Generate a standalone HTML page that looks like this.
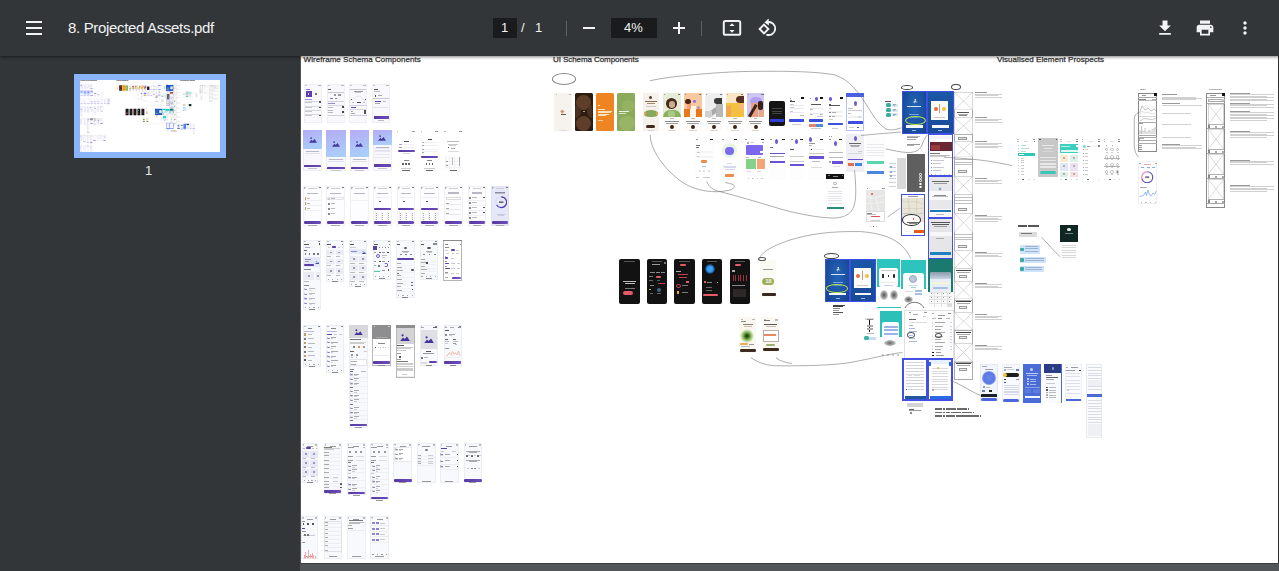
<!DOCTYPE html>
<html><head><meta charset="utf-8">
<style>
*{margin:0;padding:0;box-sizing:border-box}
html,body{width:1279px;height:571px;overflow:hidden;background:#323639;font-family:"Liberation Sans",sans-serif}
#tb{position:absolute;left:0;top:0;width:1279px;height:56px;background:#323639;box-shadow:0 1px 3px rgba(0,0,0,.5);z-index:10}
.ic{position:absolute}
#side{position:absolute;left:0;top:56px;width:301px;height:515px;background:#323639}
#main{position:absolute;left:300px;top:56px;width:979px;height:515px;background:#525659}
#page{position:absolute;left:301px;top:56px;width:977px;height:507px;background:#fff;overflow:hidden}
#page div,#thumb div,#page i,#thumb i{position:absolute;display:block}
.t{color:#f1f3f4;position:absolute;white-space:nowrap}
</style></head><body>
<div id="side">
  <div style="position:absolute;left:74px;top:18px;width:152px;height:84px;background:#8ab4f8"></div>
  <div style="position:absolute;left:80px;top:24px;width:140px;height:72px;background:#fff;overflow:hidden"><div id="thumb" style="position:absolute;left:0;top:0;width:977px;height:507px;transform:scale(0.1433,0.142);transform-origin:0 0;filter:saturate(1.25)"><div style="left:2.6px;top:0.2px;font-size:8px;line-height:1;color:#2e2e2e;white-space:nowrap;-webkit-text-stroke:0.25px #2e2e2e;letter-spacing:0.04px">Wireframe Schema Components</div>
<div style="left:252.0px;top:0.2px;font-size:8px;line-height:1;color:#2e2e2e;white-space:nowrap;-webkit-text-stroke:0.25px #2e2e2e;letter-spacing:-0.08px">UI Schema Components</div>
<div style="left:696.0px;top:0.2px;font-size:8px;line-height:1;color:#2e2e2e;white-space:nowrap;-webkit-text-stroke:0.25px #2e2e2e;letter-spacing:0.05px">Visualised Element Prospects</div>
<i style="left:2.9px;top:27.9px;width:18px;height:39px;background:#f9f9fd;border:0.35px solid #eeeef5"></i>
<i style="left:3.9px;top:29.1px;width:2px;height:0.5px;background:#c8c8d0"></i>
<i style="left:16.9px;top:29.1px;width:3px;height:0.5px;background:#b8b8c0"></i>
<i style="left:4.5px;top:32.8px;width:4.5px;height:0.7px;background:#8a70d0"></i>
<i style="left:4.5px;top:35px;width:6px;height:6px;background:#5b3fb0"></i>
<i style="left:6.8px;top:37px;width:1.4px;height:2px;background:#d8d0f0"></i>
<i style="left:13.5px;top:37px;width:2.5px;height:2px;background:#777"></i>
<i style="left:4px;top:42.5px;width:7px;height:0.6px;background:#a090e0"></i>
<i style="left:3.5px;top:44.5px;width:16.8px;height:0.5px;background:#d8d8e2"></i>
<i style="left:4px;top:45.9px;width:7px;height:0.5px;background:#c8c8d4"></i>
<i style="left:3.5px;top:50px;width:16.8px;height:0.5px;background:#d8d8e2"></i>
<i style="left:4px;top:51.4px;width:7px;height:0.5px;background:#c8c8d4"></i>
<i style="left:3.5px;top:54px;width:16.8px;height:0.5px;background:#d8d8e2"></i>
<i style="left:4px;top:55.4px;width:7px;height:0.5px;background:#c8c8d4"></i>
<i style="left:3.5px;top:57.5px;width:16.8px;height:0.5px;background:#d8d8e2"></i>
<i style="left:4px;top:58.9px;width:7px;height:0.5px;background:#c8c8d4"></i>
<i style="left:17.8px;top:45px;width:2px;height:1.8px;background:#555"></i>
<i style="left:17.8px;top:50.5px;width:2px;height:1.8px;background:#555"></i>
<i style="left:17.8px;top:58.5px;width:2px;height:1.8px;background:#555"></i>
<i style="left:25.6px;top:27.9px;width:18.1px;height:39px;background:#f9f9fd;border:0.35px solid #eeeef5"></i>
<i style="left:26.6px;top:29.1px;width:2px;height:0.5px;background:#c8c8d0"></i>
<i style="left:39.7px;top:29.1px;width:3px;height:0.5px;background:#b8b8c0"></i>
<i style="left:27px;top:33px;width:3px;height:0.6px;background:#666"></i>
<i style="left:26.5px;top:35.5px;width:16.5px;height:0.6px;background:#c8c8d4"></i>
<i style="left:32.5px;top:38px;width:2.5px;height:1.5px;background:#999"></i>
<i style="left:37px;top:38px;width:3px;height:1.5px;background:#999"></i>
<i style="left:29px;top:41.5px;width:3px;height:1.5px;background:#888"></i>
<i style="left:33.5px;top:41.5px;width:2.5px;height:1.5px;background:#888"></i>
<i style="left:26.5px;top:45px;width:16.5px;height:0.5px;background:#d0d0dc"></i>
<i style="left:27px;top:46.8px;width:7px;height:0.6px;background:#9a8ad8"></i>
<i style="left:26.5px;top:48.5px;width:16.5px;height:0.5px;background:#d8d8e2"></i>
<i style="left:27px;top:51px;width:5px;height:0.5px;background:#bbb"></i>
<i style="left:27px;top:53.5px;width:5px;height:0.5px;background:#bbb"></i>
<i style="left:27px;top:56px;width:5px;height:0.5px;background:#bbb"></i>
<i style="left:41px;top:49.5px;width:1.5px;height:2px;background:#444"></i>
<i style="left:41px;top:54.5px;width:1.5px;height:2px;background:#444"></i>
<i style="left:26.5px;top:58.8px;width:16.5px;height:0.5px;background:#d0d0dc"></i>
<i style="left:48px;top:27.9px;width:18px;height:39px;background:#f9f9fd;border:0.35px solid #eeeef5"></i>
<i style="left:49px;top:29.1px;width:2px;height:0.5px;background:#c8c8d0"></i>
<i style="left:62px;top:29.1px;width:3px;height:0.5px;background:#b8b8c0"></i>
<i style="left:49px;top:32.5px;width:16px;height:0.5px;background:#c8c8d4"></i>
<i style="left:52.5px;top:34.5px;width:9.5px;height:0.7px;background:#999"></i>
<i style="left:54px;top:36.2px;width:6px;height:0.5px;background:#c8c8d4"></i>
<svg style="position:absolute;left:49px;top:39px" width="16" height="6" viewBox="0 0 16 6"><path d="M0 5 Q3 5 5 3 T9 1 T13 4 T16 5" stroke="#c0c0d0" stroke-width="0.4" fill="none"/></svg>
<i style="left:49.5px;top:42.8px;width:1.5px;height:1.2px;background:#555"></i>
<i style="left:63.5px;top:42.8px;width:1.5px;height:1.2px;background:#555"></i>
<i style="left:50.5px;top:46px;width:2.5px;height:0.6px;background:#bbb"></i>
<i style="left:55.5px;top:45.8px;width:4.5px;height:1.2px;background:#4a3a90"></i>
<i style="left:61.5px;top:46px;width:2.5px;height:0.6px;background:#bbb"></i>
<i style="left:48.5px;top:49px;width:17px;height:0.5px;background:#d0d0dc"></i>
<i style="left:49.5px;top:51px;width:5.5px;height:0.7px;background:#5a4aa0"></i>
<i style="left:49px;top:52.5px;width:16.5px;height:0.5px;background:#d8d8e2"></i>
<i style="left:49.5px;top:54.8px;width:2.5px;height:0.6px;background:#aaa"></i>
<i style="left:63.3px;top:53.5px;width:1.7px;height:4px;background:#555"></i>
<i style="left:49.5px;top:56.8px;width:4.5px;height:0.6px;background:#aaa"></i>
<i style="left:48.5px;top:59px;width:17px;height:0.5px;background:#d0d0dc"></i>
<i style="left:71px;top:27.9px;width:17.6px;height:39px;background:#f9f9fd;border:0.35px solid #eeeef5"></i>
<i style="left:72px;top:29.1px;width:2px;height:0.5px;background:#c8c8d0"></i>
<i style="left:84.6px;top:29.1px;width:3px;height:0.5px;background:#b8b8c0"></i>
<i style="left:72.5px;top:32.8px;width:4.5px;height:0.6px;background:#555"></i>
<i style="left:72.5px;top:34.5px;width:6.5px;height:0.5px;background:#bbb"></i>
<i style="left:73.5px;top:39px;width:1.5px;height:1.5px;background:#555"></i>
<i style="left:76.5px;top:39.3px;width:4.5px;height:0.6px;background:#aaa"></i>
<i style="left:72px;top:42.3px;width:16px;height:0.5px;background:#c8c8d4"></i>
<i style="left:74px;top:44.5px;width:6px;height:1.3px;background:#5a40b0"></i>
<i style="left:82px;top:44.8px;width:3px;height:0.6px;background:#bbb"></i>
<i style="left:74px;top:47.3px;width:5px;height:0.5px;background:#aaa"></i>
<i style="left:72px;top:51px;width:16px;height:0.4px;background:#e0e0e8"></i>
<i style="left:72.5px;top:60.3px;width:15.5px;height:2.3px;background:linear-gradient(90deg,#56399f,#6a4cbc)"></i>
<i style="left:77px;top:63.8px;width:6px;height:0.5px;background:#bbb"></i>
<i style="left:2.3px;top:74px;width:18.3px;height:40.5px;background:#f9f9fd;border:0.35px solid #eeeef5"></i>
<i style="left:3.3px;top:75.2px;width:2px;height:0.5px;background:#c8c8d0"></i>
<i style="left:16.6px;top:75.2px;width:3px;height:0.5px;background:#b8b8c0"></i>
<div style="left:2.3px;top:74.30000000000001px;width:18.3px;height:18.6px;background:linear-gradient(165deg,#b5acf5,#a8d2fa)"></div>
<svg style="position:absolute;left:7.5px;top:81.1px" width="8" height="5.8" viewBox="0 0 10 7.2"><circle cx="2.6" cy="1.3" r="1.1" fill="#45389e"/><path d="M0 7.2 L3 3.4 L4.6 5 L7 2.4 L10 7.2Z" fill="#45389e"/></svg>
<i style="left:3.3px;top:108.7px;width:16.3px;height:2.3px;background:linear-gradient(90deg,#56399f,#6a4cbc);border-radius:0.6px"></i>
<i style="left:5.3px;top:94.9px;width:12.3px;height:0.8px;background:#b8b8c8"></i>
<i style="left:4.3px;top:97.4px;width:14.3px;height:0.6px;background:#e0e0ea"></i>
<i style="left:7.3px;top:112.1px;width:8.3px;height:0.5px;background:#c4c4cc"></i>
<i style="left:25.2px;top:74px;width:19.7px;height:40.5px;background:#f9f9fd;border:0.35px solid #eeeef5"></i>
<i style="left:26.2px;top:75.2px;width:2px;height:0.5px;background:#c8c8d0"></i>
<i style="left:40.9px;top:75.2px;width:3px;height:0.5px;background:#b8b8c0"></i>
<div style="left:25.2px;top:74.30000000000001px;width:19.7px;height:26.3px;background:linear-gradient(165deg,#b5acf5,#a8d2fa)"></div>
<svg style="position:absolute;left:31.0px;top:84.9px" width="8" height="5.8" viewBox="0 0 10 7.2"><circle cx="2.6" cy="1.3" r="1.1" fill="#45389e"/><path d="M0 7.2 L3 3.4 L4.6 5 L7 2.4 L10 7.2Z" fill="#45389e"/></svg>
<i style="left:26.2px;top:110.6px;width:17.7px;height:2.3px;background:linear-gradient(90deg,#56399f,#6a4cbc);border-radius:0.6px"></i>
<i style="left:28.2px;top:102.6px;width:13.7px;height:0.8px;background:#b8b8c8"></i>
<i style="left:27.2px;top:105.1px;width:15.7px;height:0.6px;background:#e0e0ea"></i>
<i style="left:30.2px;top:114px;width:9.7px;height:0.5px;background:#c4c4cc"></i>
<i style="left:49px;top:74px;width:18.8px;height:40.5px;background:#f9f9fd;border:0.35px solid #eeeef5"></i>
<i style="left:50px;top:75.2px;width:2px;height:0.5px;background:#c8c8d0"></i>
<i style="left:63.8px;top:75.2px;width:3px;height:0.5px;background:#b8b8c0"></i>
<div style="left:49.0px;top:74.30000000000001px;width:18.8px;height:26.3px;background:linear-gradient(165deg,#b5acf5,#a8d2fa)"></div>
<svg style="position:absolute;left:54.4px;top:84.9px" width="8" height="5.8" viewBox="0 0 10 7.2"><circle cx="2.6" cy="1.3" r="1.1" fill="#45389e"/><path d="M0 7.2 L3 3.4 L4.6 5 L7 2.4 L10 7.2Z" fill="#45389e"/></svg>
<i style="left:50px;top:110.6px;width:16.8px;height:2.3px;background:linear-gradient(90deg,#56399f,#6a4cbc);border-radius:0.6px"></i>
<i style="left:52px;top:102.6px;width:12.8px;height:0.8px;background:#b8b8c8"></i>
<i style="left:51px;top:105.1px;width:14.8px;height:0.6px;background:#e0e0ea"></i>
<i style="left:54px;top:114px;width:8.8px;height:0.5px;background:#c4c4cc"></i>
<i style="left:71.8px;top:74px;width:19.1px;height:40.5px;background:#f9f9fd;border:0.35px solid #eeeef5"></i>
<i style="left:72.8px;top:75.2px;width:2px;height:0.5px;background:#c8c8d0"></i>
<i style="left:86.9px;top:75.2px;width:3px;height:0.5px;background:#b8b8c0"></i>
<div style="left:71.8px;top:74.30000000000001px;width:19.1px;height:14.7px;background:linear-gradient(165deg,#b5acf5,#a8d2fa)"></div>
<svg style="position:absolute;left:77.4px;top:79.1px" width="8" height="5.8" viewBox="0 0 10 7.2"><circle cx="2.6" cy="1.3" r="1.1" fill="#45389e"/><path d="M0 7.2 L3 3.4 L4.6 5 L7 2.4 L10 7.2Z" fill="#45389e"/></svg>
<i style="left:72.8px;top:108.3px;width:17.1px;height:2.3px;background:linear-gradient(90deg,#56399f,#6a4cbc);border-radius:0.6px"></i>
<i style="left:74.8px;top:91px;width:13.1px;height:0.8px;background:#b8b8c8"></i>
<i style="left:73.8px;top:93.5px;width:15.1px;height:0.6px;background:#e0e0ea"></i>
<i style="left:76.8px;top:111.7px;width:9.1px;height:0.5px;background:#c4c4cc"></i>
<i style="left:73px;top:92px;width:16px;height:0.6px;background:#e8e8f0"></i>
<i style="left:73px;top:95px;width:16px;height:0.6px;background:#e8e8f0"></i>
<i style="left:73px;top:98px;width:16px;height:0.6px;background:#e8e8f0"></i>
<i style="left:73px;top:101px;width:16px;height:0.6px;background:#e8e8f0"></i>
<i style="left:95.8px;top:75px;width:1.5px;height:0.6px;background:#bbb"></i>
<i style="left:111.1px;top:75px;width:3px;height:0.6px;background:#999"></i>
<i style="left:101.3px;top:113.8px;width:7.3px;height:0.6px;background:#666"></i>
<i style="left:119.9px;top:75px;width:1.5px;height:0.6px;background:#bbb"></i>
<i style="left:134.2px;top:75px;width:3px;height:0.6px;background:#999"></i>
<i style="left:125.4px;top:113.8px;width:6.3px;height:0.6px;background:#666"></i>
<i style="left:143px;top:75px;width:1.5px;height:0.6px;background:#bbb"></i>
<i style="left:158.3px;top:75px;width:3px;height:0.6px;background:#999"></i>
<i style="left:148.5px;top:113.8px;width:7.3px;height:0.6px;background:#666"></i>
<i style="left:102.5px;top:84.8px;width:5px;height:1px;background:#555"></i>
<i style="left:97.5px;top:88px;width:15px;height:1.2px;background:#f0f0f8"></i>
<i style="left:97.5px;top:91px;width:15px;height:1.2px;background:#f0f0f8"></i>
<i style="left:97.5px;top:88.3px;width:3.5px;height:0.5px;background:#aaa"></i>
<i style="left:97.5px;top:91.3px;width:3.5px;height:0.5px;background:#aaa"></i>
<i style="left:96.9px;top:94.2px;width:17.1px;height:1.9px;background:linear-gradient(90deg,#56399f,#6a4cbc);border-radius:1px"></i>
<i style="left:102px;top:96.5px;width:7px;height:0.5px;background:#d8d0f0"></i>
<i style="left:102.5px;top:104.3px;width:5px;height:0.6px;background:#888"></i>
<i style="left:101.2px;top:106.8px;width:1.6px;height:1.8px;background:#666"></i>
<i style="left:104.2px;top:106.8px;width:1.6px;height:1.8px;background:#666"></i>
<i style="left:107.2px;top:106.8px;width:1.6px;height:1.8px;background:#666"></i>
<i style="left:100px;top:111.8px;width:10px;height:0.4px;background:#ccc"></i>
<i style="left:126.5px;top:82.5px;width:4px;height:1.3px;background:#444"></i>
<i style="left:120.5px;top:86px;width:16px;height:1.2px;background:#f0f0f8"></i>
<i style="left:120.8px;top:86.3px;width:2.7px;height:0.5px;background:#aaa"></i>
<i style="left:120.5px;top:89px;width:16px;height:1.2px;background:#f0f0f8"></i>
<i style="left:120.8px;top:89.3px;width:2.7px;height:0.5px;background:#aaa"></i>
<i style="left:120.5px;top:92.5px;width:16px;height:1.2px;background:#f0f0f8"></i>
<i style="left:120.8px;top:92.8px;width:2.7px;height:0.5px;background:#aaa"></i>
<i style="left:120.5px;top:95.3px;width:16px;height:1.2px;background:#f0f0f8"></i>
<i style="left:120.8px;top:95.6px;width:2.7px;height:0.5px;background:#aaa"></i>
<i style="left:120px;top:99.6px;width:17px;height:2.2px;background:linear-gradient(90deg,#56399f,#6a4cbc);border-radius:1px"></i>
<i style="left:126px;top:104.3px;width:5px;height:0.6px;background:#888"></i>
<i style="left:124.7px;top:107.3px;width:1.6px;height:1.8px;background:#666"></i>
<i style="left:127.7px;top:107.3px;width:1.6px;height:1.8px;background:#666"></i>
<i style="left:130.7px;top:107.3px;width:1.6px;height:1.8px;background:#666"></i>
<i style="left:123px;top:111.8px;width:11px;height:0.4px;background:#ccc"></i>
<i style="left:146.4px;top:84.8px;width:11.3px;height:1.7px;background:#bbb"></i>
<i style="left:146.5px;top:87.5px;width:10.5px;height:0.5px;background:#ccc"></i>
<i style="left:147.5px;top:89px;width:7.5px;height:0.5px;background:#ccc"></i>
<i style="left:146.5px;top:91.2px;width:1.5px;height:1.2px;background:#555"></i>
<i style="left:149.5px;top:91.5px;width:4.5px;height:0.5px;background:#aaa"></i>
<i style="left:146.5px;top:94.5px;width:11.5px;height:0.5px;background:#ddd"></i>
<i style="left:143.5px;top:100px;width:0.4px;height:13px;background:#eeeef2"></i>
<i style="left:148.3px;top:100px;width:0.4px;height:13px;background:#eeeef2"></i>
<i style="left:153.1px;top:100px;width:0.4px;height:13px;background:#eeeef2"></i>
<i style="left:157.9px;top:100px;width:0.4px;height:13px;background:#eeeef2"></i>
<i style="left:143.5px;top:102px;width:17.5px;height:0.3px;background:#f2f2f5"></i>
<i style="left:143.5px;top:105px;width:17.5px;height:0.3px;background:#f2f2f5"></i>
<i style="left:143.5px;top:108px;width:17.5px;height:0.3px;background:#f2f2f5"></i>
<i style="left:143.5px;top:111px;width:17.5px;height:0.3px;background:#f2f2f5"></i>
<i style="left:151.3px;top:100.5px;width:0.7px;height:8.5px;background:#bbb"></i>
<i style="left:158px;top:101px;width:0.7px;height:9px;background:#aaa"></i>
<i style="left:145px;top:104.5px;width:2px;height:0.5px;background:#999"></i>
<i style="left:145px;top:108.5px;width:2px;height:0.5px;background:#999"></i>
<i style="left:2.3px;top:129.5px;width:18.3px;height:40.5px;background:#fdfdff;border:0.35px solid #f0f0f6"></i>
<i style="left:3.3px;top:130.5px;width:1.5px;height:0.5px;background:#bbb"></i>
<i style="left:17.6px;top:130.5px;width:2px;height:0.5px;background:#777"></i>
<i style="left:3.3px;top:132.3px;width:0.8px;height:0.5px;background:#aaa"></i>
<i style="left:7.3px;top:132.3px;width:8.3px;height:0.5px;background:#ccc"></i>
<i style="left:3.3px;top:165.2px;width:16.3px;height:2.6px;background:linear-gradient(90deg,#56399f,#6a4cbc);border-radius:1.2px"></i>
<i style="left:7.3px;top:169px;width:8.3px;height:0.4px;background:#aaa"></i>
<i style="left:6.3px;top:137.2px;width:10.3px;height:1px;background:#b8b8c4"></i>
<i style="left:3.6px;top:141px;width:1.7px;height:2.5px;background:#b8a060"></i>
<i style="left:6.3px;top:142px;width:3px;height:0.6px;background:#bbb"></i>
<i style="left:3.3px;top:144.2px;width:16.3px;height:0.3px;background:#f0f0f4"></i>
<i style="left:3.6px;top:146px;width:1.7px;height:2.5px;background:#b8a060"></i>
<i style="left:6.3px;top:147px;width:3px;height:0.6px;background:#bbb"></i>
<i style="left:3.3px;top:149.2px;width:16.3px;height:0.3px;background:#f0f0f4"></i>
<i style="left:3.6px;top:151px;width:1.7px;height:2.5px;background:#b8a060"></i>
<i style="left:6.3px;top:152px;width:3px;height:0.6px;background:#bbb"></i>
<i style="left:3.3px;top:154.2px;width:16.3px;height:0.3px;background:#f0f0f4"></i>
<i style="left:25.2px;top:129.5px;width:19.1px;height:40.5px;background:#fdfdff;border:0.35px solid #f0f0f6"></i>
<i style="left:26.2px;top:130.5px;width:1.5px;height:0.5px;background:#bbb"></i>
<i style="left:41.3px;top:130.5px;width:2px;height:0.5px;background:#777"></i>
<i style="left:26.2px;top:132.3px;width:0.8px;height:0.5px;background:#aaa"></i>
<i style="left:30.2px;top:132.3px;width:9.1px;height:0.5px;background:#ccc"></i>
<i style="left:26.2px;top:165.2px;width:17.1px;height:2.6px;background:linear-gradient(90deg,#56399f,#6a4cbc);border-radius:1.2px"></i>
<i style="left:30.2px;top:169px;width:9.1px;height:0.4px;background:#aaa"></i>
<i style="left:29.2px;top:137.2px;width:11.1px;height:1px;background:#b8b8c4"></i>
<i style="left:26.2px;top:140.8px;width:17.1px;height:3px;background:#fff;border:0.3px solid #e4e4ea"></i>
<i style="left:26.7px;top:141.5px;width:2.5px;height:2px;background:#ccc"></i>
<i style="left:30.2px;top:142.2px;width:4px;height:0.6px;background:#bbb"></i>
<i style="left:26.7px;top:146.5px;width:2.5px;height:2px;background:#8a8a8a"></i>
<i style="left:30.2px;top:147.2px;width:4px;height:0.6px;background:#bbb"></i>
<i style="left:26.7px;top:151.5px;width:2.5px;height:2px;background:#8a8a8a"></i>
<i style="left:30.2px;top:152.2px;width:4px;height:0.6px;background:#bbb"></i>
<i style="left:26.7px;top:156.5px;width:2.5px;height:2px;background:#8a8a8a"></i>
<i style="left:30.2px;top:157.2px;width:4px;height:0.6px;background:#bbb"></i>
<i style="left:49px;top:129.5px;width:18.5px;height:40.5px;background:#fdfdff;border:0.35px solid #f0f0f6"></i>
<i style="left:50px;top:130.5px;width:1.5px;height:0.5px;background:#bbb"></i>
<i style="left:64.5px;top:130.5px;width:2px;height:0.5px;background:#777"></i>
<i style="left:50px;top:132.3px;width:0.8px;height:0.5px;background:#aaa"></i>
<i style="left:54px;top:132.3px;width:8.5px;height:0.5px;background:#ccc"></i>
<i style="left:50px;top:165.2px;width:16.5px;height:2.6px;background:linear-gradient(90deg,#56399f,#6a4cbc);border-radius:1.2px"></i>
<i style="left:54px;top:169px;width:8.5px;height:0.4px;background:#aaa"></i>
<i style="left:53px;top:137.2px;width:10.5px;height:1px;background:#b8b8c4"></i>
<i style="left:50px;top:143.5px;width:16.5px;height:0.7px;background:#eef2ee"></i>
<i style="left:72px;top:129.5px;width:18.5px;height:40.5px;background:#fdfdff;border:0.35px solid #f0f0f6"></i>
<i style="left:73px;top:130.5px;width:1.5px;height:0.5px;background:#bbb"></i>
<i style="left:87.5px;top:130.5px;width:2px;height:0.5px;background:#777"></i>
<i style="left:73px;top:132.3px;width:0.8px;height:0.5px;background:#aaa"></i>
<i style="left:77px;top:132.3px;width:8.5px;height:0.5px;background:#ccc"></i>
<i style="left:73px;top:165.2px;width:16.5px;height:2.6px;background:linear-gradient(90deg,#56399f,#6a4cbc);border-radius:1.2px"></i>
<i style="left:77px;top:169px;width:8.5px;height:0.4px;background:#aaa"></i>
<i style="left:76px;top:137.2px;width:10.5px;height:1px;background:#b8b8c4"></i>
<i style="left:74px;top:140.5px;width:14.5px;height:1px;background:#f0f0f6"></i>
<i style="left:77.5px;top:144.5px;width:2px;height:1px;background:#555"></i>
<i style="left:73px;top:151.7px;width:16.5px;height:2.3px;background:linear-gradient(90deg,#56399f,#6a4cbc);border-radius:1.2px"></i>
<i style="left:73.5px;top:155px;width:0.3px;height:9px;background:#f0f0f4"></i>
<i style="left:79.5px;top:155px;width:0.3px;height:9px;background:#f0f0f4"></i>
<i style="left:85.5px;top:155px;width:0.3px;height:9px;background:#f0f0f4"></i>
<i style="left:75px;top:156.5px;width:0.8px;height:0.9px;background:#a8a8b8"></i>
<i style="left:80.8px;top:156.5px;width:0.8px;height:0.9px;background:#a8a8b8"></i>
<i style="left:86.6px;top:156.5px;width:0.8px;height:0.9px;background:#a8a8b8"></i>
<i style="left:75px;top:158.6px;width:0.8px;height:0.9px;background:#a8a8b8"></i>
<i style="left:80.8px;top:158.6px;width:0.8px;height:0.9px;background:#a8a8b8"></i>
<i style="left:86.6px;top:158.6px;width:0.8px;height:0.9px;background:#a8a8b8"></i>
<i style="left:75px;top:160.7px;width:0.8px;height:0.9px;background:#a8a8b8"></i>
<i style="left:80.8px;top:160.7px;width:0.8px;height:0.9px;background:#a8a8b8"></i>
<i style="left:86.6px;top:160.7px;width:0.8px;height:0.9px;background:#a8a8b8"></i>
<i style="left:75px;top:162.8px;width:0.8px;height:0.9px;background:#a8a8b8"></i>
<i style="left:80.8px;top:162.8px;width:0.8px;height:0.9px;background:#a8a8b8"></i>
<i style="left:86.6px;top:162.8px;width:0.8px;height:0.9px;background:#a8a8b8"></i>
<i style="left:96px;top:129.5px;width:18.3px;height:40.5px;background:#fdfdff;border:0.35px solid #f0f0f6"></i>
<i style="left:97px;top:130.5px;width:1.5px;height:0.5px;background:#bbb"></i>
<i style="left:111.3px;top:130.5px;width:2px;height:0.5px;background:#777"></i>
<i style="left:97px;top:132.3px;width:0.8px;height:0.5px;background:#aaa"></i>
<i style="left:101px;top:132.3px;width:8.3px;height:0.5px;background:#ccc"></i>
<i style="left:97px;top:165.2px;width:16.3px;height:2.6px;background:linear-gradient(90deg,#56399f,#6a4cbc);border-radius:1.2px"></i>
<i style="left:101px;top:169px;width:8.3px;height:0.4px;background:#aaa"></i>
<i style="left:100px;top:137.2px;width:10.3px;height:1px;background:#b8b8c4"></i>
<i style="left:98px;top:140.5px;width:14.3px;height:1px;background:#f0f0f6"></i>
<i style="left:101.5px;top:144.5px;width:2px;height:1px;background:#555"></i>
<i style="left:97px;top:151.7px;width:16.3px;height:2.3px;background:linear-gradient(90deg,#56399f,#6a4cbc);border-radius:1.2px"></i>
<i style="left:97.5px;top:155px;width:0.3px;height:9px;background:#f0f0f4"></i>
<i style="left:103.5px;top:155px;width:0.3px;height:9px;background:#f0f0f4"></i>
<i style="left:109.5px;top:155px;width:0.3px;height:9px;background:#f0f0f4"></i>
<i style="left:99px;top:156.5px;width:0.8px;height:0.9px;background:#a8a8b8"></i>
<i style="left:104.8px;top:156.5px;width:0.8px;height:0.9px;background:#a8a8b8"></i>
<i style="left:110.6px;top:156.5px;width:0.8px;height:0.9px;background:#a8a8b8"></i>
<i style="left:99px;top:158.6px;width:0.8px;height:0.9px;background:#a8a8b8"></i>
<i style="left:104.8px;top:158.6px;width:0.8px;height:0.9px;background:#a8a8b8"></i>
<i style="left:110.6px;top:158.6px;width:0.8px;height:0.9px;background:#a8a8b8"></i>
<i style="left:99px;top:160.7px;width:0.8px;height:0.9px;background:#a8a8b8"></i>
<i style="left:104.8px;top:160.7px;width:0.8px;height:0.9px;background:#a8a8b8"></i>
<i style="left:110.6px;top:160.7px;width:0.8px;height:0.9px;background:#a8a8b8"></i>
<i style="left:99px;top:162.8px;width:0.8px;height:0.9px;background:#a8a8b8"></i>
<i style="left:104.8px;top:162.8px;width:0.8px;height:0.9px;background:#a8a8b8"></i>
<i style="left:110.6px;top:162.8px;width:0.8px;height:0.9px;background:#a8a8b8"></i>
<i style="left:119.4px;top:129.5px;width:18.4px;height:40.5px;background:#fdfdff;border:0.35px solid #f0f0f6"></i>
<i style="left:120.4px;top:130.5px;width:1.5px;height:0.5px;background:#bbb"></i>
<i style="left:134.8px;top:130.5px;width:2px;height:0.5px;background:#777"></i>
<i style="left:120.4px;top:132.3px;width:0.8px;height:0.5px;background:#aaa"></i>
<i style="left:124.4px;top:132.3px;width:8.4px;height:0.5px;background:#ccc"></i>
<i style="left:120.4px;top:165.2px;width:16.4px;height:2.6px;background:linear-gradient(90deg,#56399f,#6a4cbc);border-radius:1.2px"></i>
<i style="left:124.4px;top:169px;width:8.4px;height:0.4px;background:#aaa"></i>
<i style="left:123.4px;top:137.2px;width:10.4px;height:1px;background:#b8b8c4"></i>
<i style="left:121.4px;top:140.5px;width:14.4px;height:1px;background:#f0f0f6"></i>
<i style="left:124.9px;top:144.5px;width:2px;height:1px;background:#555"></i>
<i style="left:120.4px;top:151.7px;width:16.4px;height:2.3px;background:linear-gradient(90deg,#56399f,#6a4cbc);border-radius:1.2px"></i>
<i style="left:120.9px;top:155px;width:0.3px;height:9px;background:#f0f0f4"></i>
<i style="left:126.9px;top:155px;width:0.3px;height:9px;background:#f0f0f4"></i>
<i style="left:132.9px;top:155px;width:0.3px;height:9px;background:#f0f0f4"></i>
<i style="left:122.4px;top:156.5px;width:0.8px;height:0.9px;background:#a8a8b8"></i>
<i style="left:128.2px;top:156.5px;width:0.8px;height:0.9px;background:#a8a8b8"></i>
<i style="left:134px;top:156.5px;width:0.8px;height:0.9px;background:#a8a8b8"></i>
<i style="left:122.4px;top:158.6px;width:0.8px;height:0.9px;background:#a8a8b8"></i>
<i style="left:128.2px;top:158.6px;width:0.8px;height:0.9px;background:#a8a8b8"></i>
<i style="left:134px;top:158.6px;width:0.8px;height:0.9px;background:#a8a8b8"></i>
<i style="left:122.4px;top:160.7px;width:0.8px;height:0.9px;background:#a8a8b8"></i>
<i style="left:128.2px;top:160.7px;width:0.8px;height:0.9px;background:#a8a8b8"></i>
<i style="left:134px;top:160.7px;width:0.8px;height:0.9px;background:#a8a8b8"></i>
<i style="left:122.4px;top:162.8px;width:0.8px;height:0.9px;background:#a8a8b8"></i>
<i style="left:128.2px;top:162.8px;width:0.8px;height:0.9px;background:#a8a8b8"></i>
<i style="left:134px;top:162.8px;width:0.8px;height:0.9px;background:#a8a8b8"></i>
<i style="left:143px;top:129.5px;width:18.5px;height:40.5px;background:#fdfdff;border:0.35px solid #f0f0f6"></i>
<i style="left:144px;top:130.5px;width:1.5px;height:0.5px;background:#bbb"></i>
<i style="left:158.5px;top:130.5px;width:2px;height:0.5px;background:#777"></i>
<i style="left:144px;top:132.3px;width:0.8px;height:0.5px;background:#aaa"></i>
<i style="left:148px;top:132.3px;width:8.5px;height:0.5px;background:#ccc"></i>
<i style="left:144px;top:165.2px;width:16.5px;height:2.6px;background:linear-gradient(90deg,#56399f,#6a4cbc);border-radius:1.2px"></i>
<i style="left:148px;top:169px;width:8.5px;height:0.4px;background:#aaa"></i>
<i style="left:147px;top:137.2px;width:10.5px;height:1px;background:#b8b8c4"></i>
<i style="left:147px;top:135.8px;width:10.5px;height:0.8px;background:#b8b8c4"></i>
<i style="left:144.5px;top:141px;width:3.5px;height:0.6px;background:#aaa"></i>
<i style="left:144.5px;top:142.2px;width:15px;height:0.3px;background:#e8e8ee"></i>
<i style="left:144.5px;top:146.5px;width:3.5px;height:0.6px;background:#aaa"></i>
<i style="left:144.5px;top:147.7px;width:15px;height:0.3px;background:#e8e8ee"></i>
<i style="left:144.5px;top:151.5px;width:3.5px;height:0.6px;background:#aaa"></i>
<i style="left:144.5px;top:152.7px;width:15px;height:0.3px;background:#e8e8ee"></i>
<i style="left:144.5px;top:156.5px;width:3.5px;height:0.6px;background:#aaa"></i>
<i style="left:144.5px;top:157.7px;width:15px;height:0.3px;background:#e8e8ee"></i>
<i style="left:144.5px;top:140.5px;width:15px;height:3px;background:#fff;border:0.3px solid #ddd"></i>
<i style="left:166.5px;top:129.5px;width:18.5px;height:40.5px;background:#fdfdff;border:0.35px solid #f0f0f6"></i>
<i style="left:167.5px;top:130.5px;width:1.5px;height:0.5px;background:#bbb"></i>
<i style="left:182px;top:130.5px;width:2px;height:0.5px;background:#777"></i>
<i style="left:167.5px;top:132.3px;width:0.8px;height:0.5px;background:#aaa"></i>
<i style="left:171.5px;top:132.3px;width:8.5px;height:0.5px;background:#ccc"></i>
<i style="left:167.5px;top:165.2px;width:16.5px;height:2.6px;background:linear-gradient(90deg,#56399f,#6a4cbc);border-radius:1.2px"></i>
<i style="left:171.5px;top:169px;width:8.5px;height:0.4px;background:#aaa"></i>
<i style="left:170.5px;top:137.2px;width:10.5px;height:1px;background:#b8b8c4"></i>
<i style="left:170.5px;top:135.8px;width:10.5px;height:0.8px;background:#b8b8c4"></i>
<i style="left:168px;top:140.5px;width:2px;height:2.5px;background:#8a8a8a"></i>
<i style="left:171px;top:141.3px;width:4.5px;height:0.5px;background:#bbb"></i>
<i style="left:182px;top:141.1px;width:1.5px;height:1px;background:#555"></i>
<i style="left:167.5px;top:143.8px;width:16.5px;height:0.3px;background:#f0f0f4"></i>
<i style="left:168px;top:145.5px;width:2px;height:2.5px;background:#8a8a8a"></i>
<i style="left:171px;top:146.3px;width:4.5px;height:0.5px;background:#bbb"></i>
<i style="left:167.5px;top:148.8px;width:16.5px;height:0.3px;background:#f0f0f4"></i>
<i style="left:168px;top:150.5px;width:2px;height:2.5px;background:#8a8a8a"></i>
<i style="left:171px;top:151.3px;width:4.5px;height:0.5px;background:#bbb"></i>
<i style="left:182px;top:151.1px;width:1.5px;height:1px;background:#555"></i>
<i style="left:167.5px;top:153.8px;width:16.5px;height:0.3px;background:#f0f0f4"></i>
<i style="left:168px;top:155.5px;width:2px;height:2.5px;background:#8a8a8a"></i>
<i style="left:171px;top:156.3px;width:4.5px;height:0.5px;background:#bbb"></i>
<i style="left:182px;top:156.1px;width:1.5px;height:1px;background:#555"></i>
<i style="left:167.5px;top:158.8px;width:16.5px;height:0.3px;background:#f0f0f4"></i>
<i style="left:168px;top:160.5px;width:2px;height:2.5px;background:#8a8a8a"></i>
<i style="left:171px;top:161.3px;width:4.5px;height:0.5px;background:#bbb"></i>
<i style="left:167.5px;top:163.8px;width:16.5px;height:0.3px;background:#f0f0f4"></i>
<i style="left:190px;top:129.5px;width:18px;height:40.5px;background:#e6e8fa;border:0.35px solid #e0e2f4"></i>
<i style="left:191px;top:130.5px;width:1.5px;height:0.5px;background:#bbb"></i>
<i style="left:205px;top:130.5px;width:2px;height:0.5px;background:#777"></i>
<i style="left:191px;top:132.3px;width:0.8px;height:0.5px;background:#aaa"></i>
<i style="left:195px;top:132.3px;width:8px;height:0.5px;background:#ccc"></i>
<i style="left:191px;top:165.2px;width:16px;height:2.6px;background:linear-gradient(90deg,#56399f,#6a4cbc);border-radius:1.2px"></i>
<i style="left:195px;top:169px;width:8px;height:0.4px;background:#aaa"></i>
<i style="left:194px;top:137.2px;width:10px;height:1px;background:#b8b8c4"></i>
<i style="left:194px;top:135.8px;width:10px;height:0.8px;background:#8a8aa8"></i>
<i style="left:195.5px;top:157.5px;width:8.5px;height:0.5px;background:#c8c8e0"></i>
<i style="left:196.5px;top:159px;width:6.5px;height:0.5px;background:#c8c8e0"></i>
<svg style="position:absolute;left:193.5px;top:140.3px" width="12.4" height="12.4" viewBox="0 0 12.4 12.4"><circle cx="6.2" cy="6.2" r="5.4" fill="none" stroke="#d8dcf4" stroke-width="1.2"/><path d="M6.2 0.8 A5.4 5.4 0 1 1 1.6 9" fill="none" stroke="#4a3aa8" stroke-width="1.2"/><rect x="4" y="5.4" width="4.4" height="1.6" fill="#666"/></svg>
<i style="left:2px;top:184px;width:17.8px;height:70px;background:#f8f9fd;border:0.35px solid #eceef5"></i>
<i style="left:3px;top:185px;width:1.5px;height:0.5px;background:#bbb"></i>
<i style="left:16.8px;top:185px;width:2px;height:0.5px;background:#888"></i>
<i style="left:3px;top:187.5px;width:5px;height:0.9px;background:#555"></i>
<i style="left:17.5px;top:187.3px;width:1px;height:1.3px;background:#555"></i>
<i style="left:3px;top:190.5px;width:12px;height:1px;background:#f0f0f8"></i>
<i style="left:3.5px;top:190.8px;width:5.5px;height:0.4px;background:#a8a8c8"></i>
<i style="left:3px;top:194px;width:3px;height:0.6px;background:#666"></i>
<i style="left:3.5px;top:196.5px;width:1.5px;height:2px;background:#777"></i>
<i style="left:7.8px;top:196.5px;width:1.5px;height:2px;background:#777"></i>
<i style="left:12.1px;top:196.5px;width:1.5px;height:2px;background:#777"></i>
<i style="left:16.4px;top:196.5px;width:1.5px;height:2px;background:#777"></i>
<i style="left:2.5px;top:201.2px;width:16.5px;height:9.5px;background:#e4e8f8"></i>
<i style="left:3.5px;top:203px;width:6.5px;height:0.8px;background:#8a8ab8"></i>
<i style="left:3.5px;top:205px;width:4.5px;height:0.5px;background:#aab"></i>
<i style="left:3px;top:208px;width:9.5px;height:2px;background:#5a3ea8;border-radius:1px"></i>
<svg style="position:absolute;left:13.8px;top:204.9px" width="4.5" height="3.2" viewBox="0 0 10 7.2"><circle cx="2.6" cy="1.3" r="1.1" fill="#3a4aa8"/><path d="M0 7.2 L3 3.4 L4.6 5 L7 2.4 L10 7.2Z" fill="#3a4aa8"/></svg>
<i style="left:3px;top:212.5px;width:7px;height:0.7px;background:#888"></i>
<i style="left:2.5px;top:216.2px;width:10.5px;height:7.5px;background:#ebebf3;border-radius:0.5px"></i>
<i style="left:6.75px;top:219.15px;width:2px;height:1.6px;background:#9a9ab0"></i>
<i style="left:14.5px;top:216.2px;width:5px;height:7.5px;background:#ebebf3;border-radius:0.5px"></i>
<i style="left:16px;top:219.15px;width:2px;height:1.6px;background:#9a9ab0"></i>
<i style="left:3px;top:225px;width:5px;height:0.6px;background:#bbb"></i>
<i style="left:3px;top:229px;width:5px;height:0.6px;background:#888"></i>
<svg style="position:absolute;left:3.4px;top:231.8px" width="3.2" height="2.3" viewBox="0 0 10 7.2"><circle cx="2.6" cy="1.3" r="1.1" fill="#5a5ab0"/><path d="M0 7.2 L3 3.4 L4.6 5 L7 2.4 L10 7.2Z" fill="#5a5ab0"/></svg>
<i style="left:7.5px;top:232.4px;width:6.5px;height:0.5px;background:#bbb"></i>
<i style="left:7.5px;top:233.6px;width:3.5px;height:0.4px;background:#ddd"></i>
<svg style="position:absolute;left:3.4px;top:236.6px" width="3.2" height="2.3" viewBox="0 0 10 7.2"><circle cx="2.6" cy="1.3" r="1.1" fill="#5a5ab0"/><path d="M0 7.2 L3 3.4 L4.6 5 L7 2.4 L10 7.2Z" fill="#5a5ab0"/></svg>
<i style="left:7.5px;top:237.2px;width:6.5px;height:0.5px;background:#bbb"></i>
<i style="left:7.5px;top:238.4px;width:3.5px;height:0.4px;background:#ddd"></i>
<svg style="position:absolute;left:3.4px;top:241.4px" width="3.2" height="2.3" viewBox="0 0 10 7.2"><circle cx="2.6" cy="1.3" r="1.1" fill="#5a5ab0"/><path d="M0 7.2 L3 3.4 L4.6 5 L7 2.4 L10 7.2Z" fill="#5a5ab0"/></svg>
<i style="left:7.5px;top:242px;width:6.5px;height:0.5px;background:#bbb"></i>
<i style="left:7.5px;top:243.2px;width:3.5px;height:0.4px;background:#ddd"></i>
<svg style="position:absolute;left:3.4px;top:246.2px" width="3.2" height="2.3" viewBox="0 0 10 7.2"><circle cx="2.6" cy="1.3" r="1.1" fill="#5a5ab0"/><path d="M0 7.2 L3 3.4 L4.6 5 L7 2.4 L10 7.2Z" fill="#5a5ab0"/></svg>
<i style="left:7.5px;top:246.8px;width:6.5px;height:0.5px;background:#bbb"></i>
<i style="left:7.5px;top:248px;width:3.5px;height:0.4px;background:#ddd"></i>
<i style="left:3.9px;top:250.5px;width:1.2px;height:1.2px;background:#aaa"></i>
<i style="left:8.17px;top:250.5px;width:1.2px;height:1.2px;background:#aaa"></i>
<i style="left:12.43px;top:250.5px;width:1.2px;height:1.2px;background:#aaa"></i>
<i style="left:16.7px;top:250.5px;width:1.2px;height:1.2px;background:#aaa"></i>
<i style="left:7.9px;top:252.7px;width:6px;height:0.4px;background:#888"></i>
<i style="left:25px;top:184px;width:18px;height:42px;background:#f8f9fd;border:0.35px solid #eceef5"></i>
<i style="left:26px;top:185px;width:1.5px;height:0.5px;background:#bbb"></i>
<i style="left:40px;top:185px;width:2px;height:0.5px;background:#888"></i>
<i style="left:26px;top:187.5px;width:4px;height:0.9px;background:#555"></i>
<i style="left:41px;top:187.5px;width:1px;height:1px;background:#888"></i>
<i style="left:26.5px;top:190.5px;width:2.5px;height:0.8px;background:#ccc"></i>
<i style="left:31px;top:190.3px;width:4px;height:1.5px;background:#5a3ea8;border-radius:0.8px"></i>
<i style="left:37px;top:190.5px;width:2px;height:0.8px;background:#ccc"></i>
<i style="left:40.5px;top:190.5px;width:1.5px;height:0.8px;background:#ccc"></i>
<i style="left:25.8px;top:193.7px;width:7.7px;height:5.4px;background:#ebebf3;border-radius:0.5px"></i>
<i style="left:28.65px;top:195.6px;width:2px;height:1.6px;background:#9a9ab0"></i>
<i style="left:34.5px;top:193.7px;width:7.7px;height:5.4px;background:#ebebf3;border-radius:0.5px"></i>
<i style="left:37.35px;top:195.6px;width:2px;height:1.6px;background:#9a9ab0"></i>
<i style="left:26px;top:199.9px;width:4px;height:0.5px;background:#bbb"></i>
<i style="left:35px;top:199.9px;width:4px;height:0.5px;background:#bbb"></i>
<i style="left:25.8px;top:203px;width:7.7px;height:5.4px;background:#ebebf3;border-radius:0.5px"></i>
<i style="left:28.65px;top:204.9px;width:2px;height:1.6px;background:#9a9ab0"></i>
<i style="left:34.5px;top:203px;width:7.7px;height:5.4px;background:#ebebf3;border-radius:0.5px"></i>
<i style="left:37.35px;top:204.9px;width:2px;height:1.6px;background:#9a9ab0"></i>
<i style="left:26px;top:209.2px;width:4px;height:0.5px;background:#bbb"></i>
<i style="left:35px;top:209.2px;width:4px;height:0.5px;background:#bbb"></i>
<i style="left:25.8px;top:212.3px;width:7.7px;height:5.4px;background:#ebebf3;border-radius:0.5px"></i>
<i style="left:28.65px;top:214.2px;width:2px;height:1.6px;background:#9a9ab0"></i>
<i style="left:34.5px;top:212.3px;width:7.7px;height:5.4px;background:#ebebf3;border-radius:0.5px"></i>
<i style="left:37.35px;top:214.2px;width:2px;height:1.6px;background:#9a9ab0"></i>
<i style="left:26px;top:218.5px;width:4px;height:0.5px;background:#bbb"></i>
<i style="left:35px;top:218.5px;width:4px;height:0.5px;background:#bbb"></i>
<i style="left:26.9px;top:222.5px;width:1.2px;height:1.2px;background:#aaa"></i>
<i style="left:31.23px;top:222.5px;width:1.2px;height:1.2px;background:#aaa"></i>
<i style="left:35.57px;top:222.5px;width:1.2px;height:1.2px;background:#aaa"></i>
<i style="left:39.9px;top:222.5px;width:1.2px;height:1.2px;background:#aaa"></i>
<i style="left:31px;top:224.7px;width:6px;height:0.4px;background:#888"></i>
<i style="left:48px;top:184px;width:18.4px;height:46.8px;background:#f8f9fd;border:0.35px solid #eceef5"></i>
<i style="left:49px;top:185px;width:1.5px;height:0.5px;background:#bbb"></i>
<i style="left:63.4px;top:185px;width:2px;height:0.5px;background:#888"></i>
<i style="left:49px;top:187.5px;width:4px;height:0.9px;background:#555"></i>
<i style="left:49px;top:190.5px;width:6px;height:0.5px;background:#ccc"></i>
<i style="left:48.8px;top:193px;width:16.7px;height:5.4px;background:#e4e8f8"></i>
<i style="left:50px;top:194.5px;width:6px;height:0.7px;background:#8a8ab8"></i>
<svg style="position:absolute;left:60.5px;top:194.8px" width="4" height="2.9" viewBox="0 0 10 7.2"><circle cx="2.6" cy="1.3" r="1.1" fill="#3a4aa8"/><path d="M0 7.2 L3 3.4 L4.6 5 L7 2.4 L10 7.2Z" fill="#3a4aa8"/></svg>
<i style="left:49px;top:200px;width:7.5px;height:6.2px;background:#ebebf3;border-radius:0.5px"></i>
<i style="left:51.75px;top:202.3px;width:2px;height:1.6px;background:#9a9ab0"></i>
<i style="left:58px;top:200px;width:7.5px;height:6.2px;background:#ebebf3;border-radius:0.5px"></i>
<i style="left:60.75px;top:202.3px;width:2px;height:1.6px;background:#9a9ab0"></i>
<i style="left:49px;top:207px;width:5px;height:0.5px;background:#bbb"></i>
<i style="left:58px;top:207px;width:5px;height:0.5px;background:#bbb"></i>
<i style="left:49px;top:209px;width:7.5px;height:6.2px;background:#ebebf3;border-radius:0.5px"></i>
<i style="left:51.75px;top:211.3px;width:2px;height:1.6px;background:#9a9ab0"></i>
<i style="left:58px;top:209px;width:7.5px;height:6.2px;background:#ebebf3;border-radius:0.5px"></i>
<i style="left:60.75px;top:211.3px;width:2px;height:1.6px;background:#9a9ab0"></i>
<i style="left:49px;top:216px;width:5px;height:0.5px;background:#bbb"></i>
<i style="left:58px;top:216px;width:5px;height:0.5px;background:#bbb"></i>
<i style="left:49px;top:218px;width:7.5px;height:6.2px;background:#ebebf3;border-radius:0.5px"></i>
<i style="left:51.75px;top:220.3px;width:2px;height:1.6px;background:#9a9ab0"></i>
<i style="left:58px;top:218px;width:7.5px;height:6.2px;background:#ebebf3;border-radius:0.5px"></i>
<i style="left:60.75px;top:220.3px;width:2px;height:1.6px;background:#9a9ab0"></i>
<i style="left:49px;top:225px;width:5px;height:0.5px;background:#bbb"></i>
<i style="left:58px;top:225px;width:5px;height:0.5px;background:#bbb"></i>
<i style="left:49.9px;top:227.5px;width:1.2px;height:1.2px;background:#aaa"></i>
<i style="left:54.37px;top:227.5px;width:1.2px;height:1.2px;background:#aaa"></i>
<i style="left:58.83px;top:227.5px;width:1.2px;height:1.2px;background:#aaa"></i>
<i style="left:63.3px;top:227.5px;width:1.2px;height:1.2px;background:#aaa"></i>
<i style="left:54.2px;top:229.7px;width:6px;height:0.4px;background:#888"></i>
<i style="left:71.8px;top:184px;width:17.8px;height:40px;background:#f8f9fd;border:0.35px solid #eceef5"></i>
<i style="left:72.8px;top:185px;width:1.5px;height:0.5px;background:#bbb"></i>
<i style="left:86.6px;top:185px;width:2px;height:0.5px;background:#888"></i>
<i style="left:72.5px;top:187.5px;width:4px;height:0.9px;background:#555"></i>
<i style="left:87.5px;top:187.5px;width:1.5px;height:0.9px;background:#888"></i>
<i style="left:72px;top:190.1px;width:3.6px;height:3.6px;background:#5a3ea8"></i>
<i style="left:77.5px;top:191.3px;width:1px;height:1.2px;background:#888"></i>
<i style="left:80.7px;top:191.3px;width:1px;height:1.2px;background:#888"></i>
<i style="left:83.9px;top:191.3px;width:1px;height:1.2px;background:#888"></i>
<i style="left:87.1px;top:191.3px;width:1px;height:1.2px;background:#888"></i>
<i style="left:72.5px;top:195.8px;width:2.5px;height:0.6px;background:#999"></i>
<i style="left:78px;top:195.5px;width:1.5px;height:1.5px;background:#555"></i>
<i style="left:81px;top:195.8px;width:3px;height:0.6px;background:#999"></i>
<i style="left:86px;top:195.5px;width:2px;height:1.5px;background:#444"></i>
<div style="left:74.5px;top:198px;width:4px;height:4px;border-radius:50%;border:0.5px solid #6a5ab8"></div>
<i style="left:81px;top:199px;width:5px;height:0.5px;background:#bbb"></i>
<i style="left:81px;top:201px;width:3px;height:0.5px;background:#ccc"></i>
<i style="left:72.5px;top:205px;width:2.5px;height:0.5px;background:#999"></i>
<i style="left:78px;top:204.8px;width:1.5px;height:1.2px;background:#555"></i>
<i style="left:81px;top:205px;width:3px;height:0.5px;background:#999"></i>
<i style="left:86.5px;top:204.8px;width:1.5px;height:1.2px;background:#555"></i>
<i style="left:73px;top:209px;width:2px;height:0.5px;background:#aaa"></i>
<i style="left:77px;top:209px;width:2px;height:2px;background:#777"></i>
<div style="left:83px;top:207px;width:3.5px;height:3.5px;border-radius:50%;border:0.5px solid #6a5ab8;border-left-color:transparent"></div>
<i style="left:72.5px;top:213.5px;width:7px;height:1.5px;background:#d8f4ec"></i>
<i style="left:73px;top:214.5px;width:6px;height:0.4px;background:#60c8a8"></i>
<i style="left:81px;top:214px;width:3px;height:0.5px;background:#999"></i>
<i style="left:86.5px;top:213px;width:1.5px;height:1.5px;background:#8a5050"></i>
<i style="left:73.7px;top:219.5px;width:1.2px;height:1.2px;background:#aaa"></i>
<i style="left:77.97px;top:219.5px;width:1.2px;height:1.2px;background:#aaa"></i>
<i style="left:82.23px;top:219.5px;width:1.2px;height:1.2px;background:#aaa"></i>
<i style="left:86.5px;top:219.5px;width:1.2px;height:1.2px;background:#aaa"></i>
<i style="left:77.7px;top:221.7px;width:6px;height:0.4px;background:#888"></i>
<i style="left:95px;top:184px;width:18.6px;height:58.4px;background:#f8f9fd;border:0.35px solid #eceef5"></i>
<i style="left:96px;top:185px;width:1.5px;height:0.5px;background:#bbb"></i>
<i style="left:110.6px;top:185px;width:2px;height:0.5px;background:#888"></i>
<i style="left:96px;top:187.5px;width:3px;height:0.9px;background:#555"></i>
<i style="left:102.5px;top:190.5px;width:3.5px;height:2.5px;background:#555;border-radius:50%"></i>
<i style="left:101px;top:194.5px;width:6.5px;height:0.5px;background:#aaa"></i>
<i style="left:102px;top:195.8px;width:4.5px;height:0.4px;background:#ccc"></i>
<i style="left:99px;top:197.5px;width:1.8px;height:1.7px;background:#888"></i>
<i style="left:104px;top:197.5px;width:1.8px;height:1.7px;background:#888"></i>
<i style="left:109px;top:197.5px;width:1.8px;height:1.7px;background:#888"></i>
<i style="left:95.8px;top:201.7px;width:17px;height:2.1px;background:#5a3ea8;border-radius:1px"></i>
<i style="left:96px;top:207px;width:4px;height:0.5px;background:#aaa"></i>
<i style="left:95.5px;top:208.8px;width:17.5px;height:0.3px;background:#f2f2f6"></i>
<i style="left:96px;top:210.5px;width:5px;height:0.5px;background:#aaa"></i>
<i style="left:95.5px;top:212.3px;width:17.5px;height:0.3px;background:#f2f2f6"></i>
<i style="left:96px;top:214px;width:6px;height:0.5px;background:#aaa"></i>
<i style="left:95.5px;top:215.8px;width:17.5px;height:0.3px;background:#f2f2f6"></i>
<i style="left:96px;top:219px;width:4px;height:0.5px;background:#aaa"></i>
<i style="left:95.5px;top:220.8px;width:17.5px;height:0.3px;background:#f2f2f6"></i>
<i style="left:96px;top:223px;width:5px;height:0.5px;background:#aaa"></i>
<i style="left:95.5px;top:224.8px;width:17.5px;height:0.3px;background:#f2f2f6"></i>
<i style="left:96px;top:226.5px;width:6px;height:0.5px;background:#aaa"></i>
<i style="left:95.5px;top:228.3px;width:17.5px;height:0.3px;background:#f2f2f6"></i>
<i style="left:96px;top:230px;width:4px;height:0.5px;background:#aaa"></i>
<i style="left:95.5px;top:231.8px;width:17.5px;height:0.3px;background:#f2f2f6"></i>
<i style="left:96px;top:233.5px;width:5px;height:0.5px;background:#aaa"></i>
<i style="left:95.5px;top:235.3px;width:17.5px;height:0.3px;background:#f2f2f6"></i>
<i style="left:110px;top:212.5px;width:2.5px;height:2.5px;background:#555;border-radius:50%"></i>
<i style="left:95.6px;top:217px;width:2.4px;height:0.6px;background:#777"></i>
<i style="left:110px;top:225.5px;width:2.3px;height:1.8px;background:#5a3ea8;border-radius:0.8px"></i>
<i style="left:110px;top:228.5px;width:2.3px;height:1.8px;background:#5a3ea8;border-radius:0.8px"></i>
<i style="left:110.5px;top:233px;width:1.5px;height:1px;background:#555"></i>
<i style="left:96.9px;top:238.5px;width:1.2px;height:1.2px;background:#aaa"></i>
<i style="left:101.43px;top:238.5px;width:1.2px;height:1.2px;background:#aaa"></i>
<i style="left:105.97px;top:238.5px;width:1.2px;height:1.2px;background:#aaa"></i>
<i style="left:110.5px;top:238.5px;width:1.2px;height:1.2px;background:#aaa"></i>
<i style="left:101.3px;top:240.7px;width:6px;height:0.4px;background:#888"></i>
<i style="left:118.5px;top:184px;width:18.3px;height:39.7px;background:#f8f9fd;border:0.35px solid #eceef5"></i>
<i style="left:119.5px;top:185px;width:1.5px;height:0.5px;background:#bbb"></i>
<i style="left:133.8px;top:185px;width:2px;height:0.5px;background:#888"></i>
<i style="left:119.5px;top:187.5px;width:3.5px;height:0.9px;background:#555"></i>
<i style="left:131.5px;top:187px;width:4.5px;height:2px;background:#8a8a8a"></i>
<i style="left:126px;top:190.5px;width:3.5px;height:2.5px;background:#555;border-radius:50%"></i>
<i style="left:125px;top:194.5px;width:6px;height:0.5px;background:#aaa"></i>
<i style="left:125.5px;top:195.8px;width:5px;height:0.4px;background:#ccc"></i>
<i style="left:122px;top:197.5px;width:1.8px;height:1.7px;background:#888"></i>
<i style="left:127.5px;top:197.5px;width:1.8px;height:1.7px;background:#888"></i>
<i style="left:133px;top:197.5px;width:1.8px;height:1.7px;background:#888"></i>
<i style="left:119.5px;top:202.5px;width:4.5px;height:0.5px;background:#aaa"></i>
<i style="left:118.8px;top:204.5px;width:17.6px;height:0.3px;background:#f0f0f4"></i>
<i style="left:119.5px;top:206px;width:6.5px;height:0.5px;background:#aaa"></i>
<i style="left:118.8px;top:208px;width:17.6px;height:0.3px;background:#f0f0f4"></i>
<i style="left:119.5px;top:209.5px;width:4.5px;height:0.5px;background:#aaa"></i>
<i style="left:118.8px;top:211.5px;width:17.6px;height:0.3px;background:#f0f0f4"></i>
<i style="left:119.5px;top:213px;width:6.5px;height:0.5px;background:#aaa"></i>
<i style="left:118.8px;top:215px;width:17.6px;height:0.3px;background:#f0f0f4"></i>
<i style="left:119.5px;top:216.5px;width:4.5px;height:0.5px;background:#aaa"></i>
<i style="left:118.8px;top:218.5px;width:17.6px;height:0.3px;background:#f0f0f4"></i>
<i style="left:125px;top:205.5px;width:1.5px;height:2px;background:#444"></i>
<i style="left:120.4px;top:219.5px;width:1.2px;height:1.2px;background:#aaa"></i>
<i style="left:124.83px;top:219.5px;width:1.2px;height:1.2px;background:#aaa"></i>
<i style="left:129.27px;top:219.5px;width:1.2px;height:1.2px;background:#aaa"></i>
<i style="left:133.7px;top:219.5px;width:1.2px;height:1.2px;background:#aaa"></i>
<i style="left:124.65px;top:221.7px;width:6px;height:0.4px;background:#888"></i>
<i style="left:142px;top:184px;width:18.8px;height:41px;background:#fff;border:0.45px solid #b4b4b4"></i>
<i style="left:142px;top:184px;width:18.8px;height:1.3px;background:#8a8a8a"></i>
<i style="left:143.5px;top:188px;width:3px;height:0.6px;background:#888"></i>
<i style="left:158.5px;top:187.5px;width:1px;height:1px;background:#999"></i>
<i style="left:143.5px;top:191px;width:4.5px;height:0.6px;background:#8a8a8a"></i>
<i style="left:144px;top:194px;width:3px;height:0.5px;background:#ccc"></i>
<i style="left:149.5px;top:193.2px;width:4px;height:1.8px;background:#5a3ea8;border-radius:1px"></i>
<i style="left:155px;top:194px;width:3px;height:0.5px;background:#ccc"></i>
<i style="left:145px;top:197px;width:3px;height:0.5px;background:#ccc"></i>
<i style="left:150.5px;top:197px;width:2.5px;height:0.5px;background:#ccc"></i>
<i style="left:155px;top:197px;width:3px;height:0.5px;background:#ccc"></i>
<i style="left:143.5px;top:199.5px;width:1.5px;height:0.5px;background:#aaa"></i>
<i style="left:143.8px;top:201.3px;width:3.7px;height:1.4px;background:#5a3ea8;border-radius:0.8px"></i>
<i style="left:150px;top:201.8px;width:3px;height:0.5px;background:#ccc"></i>
<i style="left:143.5px;top:205px;width:2.5px;height:0.5px;background:#999"></i>
<i style="left:143.8px;top:206.5px;width:4.2px;height:1.5px;background:#5a3ea8;border-radius:0.5px"></i>
<i style="left:150px;top:207px;width:4px;height:0.5px;background:#ccc"></i>
<i style="left:155.5px;top:207px;width:3.5px;height:0.5px;background:#ccc"></i>
<i style="left:143.5px;top:210px;width:2.5px;height:0.5px;background:#999"></i>
<i style="left:143.5px;top:211.8px;width:5px;height:1.5px;background:#5a3ea8;border-radius:0.5px"></i>
<i style="left:150px;top:212.3px;width:4px;height:0.5px;background:#ccc"></i>
<i style="left:155.5px;top:212.3px;width:3.5px;height:0.5px;background:#ccc"></i>
<i style="left:143.5px;top:215.5px;width:3.5px;height:0.5px;background:#999"></i>
<i style="left:144px;top:217px;width:3px;height:0.5px;background:#ccc"></i>
<i style="left:150px;top:217px;width:3px;height:0.5px;background:#ccc"></i>
<i style="left:155px;top:217px;width:3px;height:0.5px;background:#ccc"></i>
<i style="left:144px;top:221px;width:3px;height:0.6px;background:#aaa"></i>
<i style="left:151px;top:220.8px;width:9px;height:2.2px;background:linear-gradient(90deg,#5a3ea8,#7a5ac8);border-radius:1.1px"></i>
<i style="left:2px;top:269px;width:17.8px;height:42px;background:#f8f9fd;border:0.35px solid #eceef5"></i>
<i style="left:3px;top:270px;width:1.5px;height:0.5px;background:#bbb"></i>
<i style="left:16.8px;top:270px;width:2px;height:0.5px;background:#888"></i>
<i style="left:7px;top:271.8px;width:4px;height:0.6px;background:#888"></i>
<i style="left:3px;top:274.6px;width:10px;height:0.8px;background:#c0b8e8"></i>
<i style="left:3.2px;top:277.3px;width:2px;height:2.3px;background:#b8a060"></i>
<i style="left:6.5px;top:277.9px;width:4.5px;height:0.5px;background:#bbb"></i>
<i style="left:3.2px;top:281.6px;width:2px;height:2.3px;background:#777"></i>
<i style="left:6.5px;top:282.2px;width:6px;height:0.5px;background:#bbb"></i>
<i style="left:3.2px;top:285.9px;width:2px;height:2.3px;background:#b8a060"></i>
<i style="left:6.5px;top:286.5px;width:7.5px;height:0.5px;background:#bbb"></i>
<i style="left:3.2px;top:290.2px;width:2px;height:2.3px;background:#8a7050"></i>
<i style="left:6.5px;top:290.8px;width:4.5px;height:0.5px;background:#bbb"></i>
<i style="left:3.2px;top:294.5px;width:2px;height:2.3px;background:#777"></i>
<i style="left:6.5px;top:295.1px;width:6px;height:0.5px;background:#bbb"></i>
<i style="left:3.2px;top:298.8px;width:2px;height:2.3px;background:#b8a060"></i>
<i style="left:6.5px;top:299.4px;width:7.5px;height:0.5px;background:#bbb"></i>
<i style="left:3.2px;top:303.1px;width:2px;height:2.3px;background:#555"></i>
<i style="left:6.5px;top:303.7px;width:4.5px;height:0.5px;background:#bbb"></i>
<i style="left:3.9px;top:307.5px;width:1.2px;height:1.2px;background:#aaa"></i>
<i style="left:8.17px;top:307.5px;width:1.2px;height:1.2px;background:#aaa"></i>
<i style="left:12.43px;top:307.5px;width:1.2px;height:1.2px;background:#aaa"></i>
<i style="left:16.7px;top:307.5px;width:1.2px;height:1.2px;background:#aaa"></i>
<i style="left:7.9px;top:309.7px;width:6px;height:0.4px;background:#888"></i>
<i style="left:25px;top:269px;width:18px;height:48px;background:#f8f9fd;border:0.35px solid #eceef5"></i>
<i style="left:26px;top:270px;width:1.5px;height:0.5px;background:#bbb"></i>
<i style="left:40px;top:270px;width:2px;height:0.5px;background:#888"></i>
<i style="left:30px;top:271.8px;width:5px;height:0.6px;background:#888"></i>
<i style="left:26px;top:274.6px;width:10px;height:0.8px;background:#c0b8e8"></i>
<i style="left:26px;top:277.5px;width:5px;height:1.5px;background:#5a3ea8;border-radius:0.8px"></i>
<i style="left:33px;top:278px;width:3px;height:0.5px;background:#ccc"></i>
<i style="left:38px;top:278px;width:3px;height:0.5px;background:#ccc"></i>
<svg style="position:absolute;left:26.0px;top:280.6px" width="3" height="2.2" viewBox="0 0 10 7.2"><circle cx="2.6" cy="1.3" r="1.1" fill="#5a5ab0"/><path d="M0 7.2 L3 3.4 L4.6 5 L7 2.4 L10 7.2Z" fill="#5a5ab0"/></svg>
<i style="left:30px;top:280.9px;width:5px;height:0.5px;background:#aaa"></i>
<i style="left:30px;top:282.2px;width:2px;height:0.4px;background:#ccc"></i>
<svg style="position:absolute;left:26.0px;top:285.3px" width="3" height="2.2" viewBox="0 0 10 7.2"><circle cx="2.6" cy="1.3" r="1.1" fill="#5a5ab0"/><path d="M0 7.2 L3 3.4 L4.6 5 L7 2.4 L10 7.2Z" fill="#5a5ab0"/></svg>
<i style="left:30px;top:285.6px;width:7px;height:0.5px;background:#aaa"></i>
<i style="left:30px;top:286.9px;width:2px;height:0.4px;background:#ccc"></i>
<svg style="position:absolute;left:26.0px;top:290.0px" width="3" height="2.2" viewBox="0 0 10 7.2"><circle cx="2.6" cy="1.3" r="1.1" fill="#5a5ab0"/><path d="M0 7.2 L3 3.4 L4.6 5 L7 2.4 L10 7.2Z" fill="#5a5ab0"/></svg>
<i style="left:30px;top:290.3px;width:5px;height:0.5px;background:#aaa"></i>
<i style="left:30px;top:291.6px;width:2px;height:0.4px;background:#ccc"></i>
<svg style="position:absolute;left:26.0px;top:294.7px" width="3" height="2.2" viewBox="0 0 10 7.2"><circle cx="2.6" cy="1.3" r="1.1" fill="#5a5ab0"/><path d="M0 7.2 L3 3.4 L4.6 5 L7 2.4 L10 7.2Z" fill="#5a5ab0"/></svg>
<i style="left:30px;top:295px;width:7px;height:0.5px;background:#aaa"></i>
<i style="left:30px;top:296.3px;width:2px;height:0.4px;background:#ccc"></i>
<svg style="position:absolute;left:26.0px;top:299.4px" width="3" height="2.2" viewBox="0 0 10 7.2"><circle cx="2.6" cy="1.3" r="1.1" fill="#5a5ab0"/><path d="M0 7.2 L3 3.4 L4.6 5 L7 2.4 L10 7.2Z" fill="#5a5ab0"/></svg>
<i style="left:30px;top:299.7px;width:5px;height:0.5px;background:#aaa"></i>
<i style="left:30px;top:301px;width:2px;height:0.4px;background:#ccc"></i>
<svg style="position:absolute;left:26.0px;top:304.1px" width="3" height="2.2" viewBox="0 0 10 7.2"><circle cx="2.6" cy="1.3" r="1.1" fill="#5a5ab0"/><path d="M0 7.2 L3 3.4 L4.6 5 L7 2.4 L10 7.2Z" fill="#5a5ab0"/></svg>
<i style="left:30px;top:304.4px;width:7px;height:0.5px;background:#aaa"></i>
<i style="left:30px;top:305.7px;width:2px;height:0.4px;background:#ccc"></i>
<svg style="position:absolute;left:26.0px;top:308.8px" width="3" height="2.2" viewBox="0 0 10 7.2"><circle cx="2.6" cy="1.3" r="1.1" fill="#5a5ab0"/><path d="M0 7.2 L3 3.4 L4.6 5 L7 2.4 L10 7.2Z" fill="#5a5ab0"/></svg>
<i style="left:30px;top:309.1px;width:5px;height:0.5px;background:#aaa"></i>
<i style="left:30px;top:310.4px;width:2px;height:0.4px;background:#ccc"></i>
<i style="left:26.9px;top:314px;width:1.2px;height:1.2px;background:#aaa"></i>
<i style="left:31.23px;top:314px;width:1.2px;height:1.2px;background:#aaa"></i>
<i style="left:35.57px;top:314px;width:1.2px;height:1.2px;background:#aaa"></i>
<i style="left:39.9px;top:314px;width:1.2px;height:1.2px;background:#aaa"></i>
<i style="left:31px;top:316.2px;width:6px;height:0.4px;background:#888"></i>
<i style="left:48px;top:269px;width:18.8px;height:103px;background:#f8f9fd;border:0.35px solid #eceef5"></i>
<i style="left:49px;top:270px;width:1.5px;height:0.5px;background:#bbb"></i>
<i style="left:63.8px;top:270px;width:2px;height:0.5px;background:#888"></i>
<i style="left:48px;top:269px;width:18.8px;height:12.7px;background:#d8d8dc"></i>
<svg style="position:absolute;left:52.9px;top:272.8px" width="9" height="6.5" viewBox="0 0 10 7.2"><circle cx="2.6" cy="1.3" r="1.1" fill="#43359c"/><path d="M0 7.2 L3 3.4 L4.6 5 L7 2.4 L10 7.2Z" fill="#43359c"/></svg>
<i style="left:49px;top:283.3px;width:11px;height:1px;background:#777"></i>
<i style="left:49px;top:285.5px;width:16px;height:0.4px;background:#ccc"></i>
<i style="left:49px;top:286.8px;width:14px;height:0.4px;background:#ccc"></i>
<i style="left:51.5px;top:289.5px;width:2px;height:2px;background:#888"></i>
<i style="left:56.5px;top:289.5px;width:2px;height:2px;background:#e09060"></i>
<i style="left:62px;top:289.5px;width:1.5px;height:2px;background:#999"></i>
<i style="left:49px;top:294.5px;width:4px;height:0.6px;background:#666"></i>
<i style="left:63px;top:294.6px;width:2.5px;height:0.4px;background:#ccc"></i>
<i style="left:50px;top:297.5px;width:2px;height:2px;background:#999"></i>
<i style="left:55px;top:297.5px;width:2px;height:2px;background:#999"></i>
<i style="left:49.5px;top:300.5px;width:2.5px;height:0.5px;background:#bbb"></i>
<i style="left:54.5px;top:300.5px;width:1.5px;height:0.5px;background:#bbb"></i>
<i style="left:48.8px;top:302.5px;width:17.2px;height:7.5px;background:#fff;border:0.3px solid #e4e4ea"></i>
<i style="left:50px;top:304.5px;width:6px;height:0.5px;background:#aaa"></i>
<i style="left:50px;top:307.5px;width:5px;height:0.5px;background:#aaa"></i>
<i style="left:49px;top:312.5px;width:4px;height:0.5px;background:#888"></i>
<i style="left:49px;top:314.5px;width:3px;height:0.5px;background:#666"></i>
<i style="left:60px;top:314.5px;width:5px;height:0.5px;background:#bbb"></i>
<svg style="position:absolute;left:49.0px;top:317.4px" width="3" height="2.2" viewBox="0 0 10 7.2"><circle cx="2.6" cy="1.3" r="1.1" fill="#5a5a8a"/><path d="M0 7.2 L3 3.4 L4.6 5 L7 2.4 L10 7.2Z" fill="#5a5a8a"/></svg>
<i style="left:53px;top:317.8px;width:5px;height:0.5px;background:#aaa"></i>
<i style="left:53px;top:319px;width:3px;height:0.4px;background:#ccc"></i>
<i style="left:48.8px;top:320.7px;width:17.2px;height:0.3px;background:#f0f0f4"></i>
<svg style="position:absolute;left:49.0px;top:321.9px" width="3" height="2.2" viewBox="0 0 10 7.2"><circle cx="2.6" cy="1.3" r="1.1" fill="#5a5a8a"/><path d="M0 7.2 L3 3.4 L4.6 5 L7 2.4 L10 7.2Z" fill="#5a5a8a"/></svg>
<i style="left:53px;top:322.3px;width:5px;height:0.5px;background:#aaa"></i>
<i style="left:53px;top:323.5px;width:3px;height:0.4px;background:#ccc"></i>
<i style="left:48.8px;top:325.2px;width:17.2px;height:0.3px;background:#f0f0f4"></i>
<svg style="position:absolute;left:49.0px;top:326.4px" width="3" height="2.2" viewBox="0 0 10 7.2"><circle cx="2.6" cy="1.3" r="1.1" fill="#5a5a8a"/><path d="M0 7.2 L3 3.4 L4.6 5 L7 2.4 L10 7.2Z" fill="#5a5a8a"/></svg>
<i style="left:53px;top:326.8px;width:5px;height:0.5px;background:#aaa"></i>
<i style="left:53px;top:328px;width:3px;height:0.4px;background:#ccc"></i>
<i style="left:48.8px;top:329.7px;width:17.2px;height:0.3px;background:#f0f0f4"></i>
<svg style="position:absolute;left:49.0px;top:333.9px" width="3" height="2.2" viewBox="0 0 10 7.2"><circle cx="2.6" cy="1.3" r="1.1" fill="#5a5a8a"/><path d="M0 7.2 L3 3.4 L4.6 5 L7 2.4 L10 7.2Z" fill="#5a5a8a"/></svg>
<i style="left:53px;top:334.3px;width:5px;height:0.5px;background:#aaa"></i>
<i style="left:53px;top:335.5px;width:3px;height:0.4px;background:#ccc"></i>
<i style="left:48.8px;top:337.2px;width:17.2px;height:0.3px;background:#f0f0f4"></i>
<svg style="position:absolute;left:49.0px;top:338.4px" width="3" height="2.2" viewBox="0 0 10 7.2"><circle cx="2.6" cy="1.3" r="1.1" fill="#5a5a8a"/><path d="M0 7.2 L3 3.4 L4.6 5 L7 2.4 L10 7.2Z" fill="#5a5a8a"/></svg>
<i style="left:53px;top:338.8px;width:5px;height:0.5px;background:#aaa"></i>
<i style="left:53px;top:340px;width:3px;height:0.4px;background:#ccc"></i>
<i style="left:48.8px;top:341.7px;width:17.2px;height:0.3px;background:#f0f0f4"></i>
<svg style="position:absolute;left:49.0px;top:342.9px" width="3" height="2.2" viewBox="0 0 10 7.2"><circle cx="2.6" cy="1.3" r="1.1" fill="#5a5a8a"/><path d="M0 7.2 L3 3.4 L4.6 5 L7 2.4 L10 7.2Z" fill="#5a5a8a"/></svg>
<i style="left:53px;top:343.3px;width:5px;height:0.5px;background:#aaa"></i>
<i style="left:53px;top:344.5px;width:3px;height:0.4px;background:#ccc"></i>
<i style="left:48.8px;top:346.2px;width:17.2px;height:0.3px;background:#f0f0f4"></i>
<svg style="position:absolute;left:49.0px;top:350.9px" width="3" height="2.2" viewBox="0 0 10 7.2"><circle cx="2.6" cy="1.3" r="1.1" fill="#5a5a8a"/><path d="M0 7.2 L3 3.4 L4.6 5 L7 2.4 L10 7.2Z" fill="#5a5a8a"/></svg>
<i style="left:53px;top:351.3px;width:5px;height:0.5px;background:#aaa"></i>
<i style="left:53px;top:352.5px;width:3px;height:0.4px;background:#ccc"></i>
<i style="left:48.8px;top:354.2px;width:17.2px;height:0.3px;background:#f0f0f4"></i>
<svg style="position:absolute;left:49.0px;top:355.4px" width="3" height="2.2" viewBox="0 0 10 7.2"><circle cx="2.6" cy="1.3" r="1.1" fill="#5a5a8a"/><path d="M0 7.2 L3 3.4 L4.6 5 L7 2.4 L10 7.2Z" fill="#5a5a8a"/></svg>
<i style="left:53px;top:355.8px;width:5px;height:0.5px;background:#aaa"></i>
<i style="left:53px;top:357px;width:3px;height:0.4px;background:#ccc"></i>
<i style="left:48.8px;top:358.7px;width:17.2px;height:0.3px;background:#f0f0f4"></i>
<svg style="position:absolute;left:49.0px;top:359.9px" width="3" height="2.2" viewBox="0 0 10 7.2"><circle cx="2.6" cy="1.3" r="1.1" fill="#5a5a8a"/><path d="M0 7.2 L3 3.4 L4.6 5 L7 2.4 L10 7.2Z" fill="#5a5a8a"/></svg>
<i style="left:53px;top:360.3px;width:5px;height:0.5px;background:#aaa"></i>
<i style="left:53px;top:361.5px;width:3px;height:0.4px;background:#ccc"></i>
<i style="left:48.8px;top:363.2px;width:17.2px;height:0.3px;background:#f0f0f4"></i>
<i style="left:49px;top:330.5px;width:3px;height:0.5px;background:#777"></i>
<i style="left:49px;top:347.5px;width:3px;height:0.5px;background:#777"></i>
<i style="left:49px;top:364px;width:3px;height:0.5px;background:#777"></i>
<i style="left:49px;top:368px;width:17px;height:2.4px;background:linear-gradient(90deg,#56399f,#6a4cbc);border-radius:0.8px"></i>
<i style="left:54px;top:371.2px;width:7px;height:0.4px;background:#999"></i>
<i style="left:71.3px;top:269px;width:18.7px;height:40.9px;background:#fff;border:0.4px solid #b8b8b8"></i>
<i style="left:71.3px;top:269px;width:18.7px;height:14.4px;background:#8e8e90"></i>
<i style="left:72.5px;top:270px;width:1.5px;height:0.6px;background:#ccc"></i>
<i style="left:87px;top:270px;width:2px;height:0.6px;background:#ccc"></i>
<i style="left:75px;top:281px;width:11px;height:1px;background:#a8a8aa"></i>
<i style="left:77px;top:287.2px;width:7px;height:0.6px;background:#888"></i>
<i style="left:73.5px;top:291px;width:1.2px;height:1.3px;background:#444"></i>
<i style="left:76.5px;top:291.3px;width:0.5px;height:0.7px;background:#ccc"></i>
<i style="left:79px;top:291.3px;width:0.5px;height:0.7px;background:#ccc"></i>
<i style="left:81.5px;top:291.3px;width:0.5px;height:0.7px;background:#ccc"></i>
<i style="left:84px;top:291.3px;width:0.5px;height:0.7px;background:#ccc"></i>
<i style="left:86.5px;top:291.3px;width:0.5px;height:0.7px;background:#ccc"></i>
<i style="left:73px;top:298.8px;width:15px;height:0.5px;background:#e4eaf4"></i>
<i style="left:72.2px;top:305.4px;width:16.8px;height:2.3px;background:linear-gradient(90deg,#56399f,#6a4cbc);border-radius:1px"></i>
<i style="left:77px;top:308.6px;width:7px;height:0.4px;background:#888"></i>
<i style="left:95px;top:269px;width:18.8px;height:52.8px;background:#fff;border:0.4px solid #b8b8b8"></i>
<i style="left:95px;top:269px;width:18.8px;height:3px;background:#8e8e8e"></i>
<i style="left:95.5px;top:272px;width:17.8px;height:15.7px;background:#d4d4d6"></i>
<svg style="position:absolute;left:98.8px;top:277.7px" width="10" height="7.2" viewBox="0 0 10 7.2"><circle cx="2.6" cy="1.3" r="1.1" fill="#43359c"/><path d="M0 7.2 L3 3.4 L4.6 5 L7 2.4 L10 7.2Z" fill="#43359c"/></svg>
<i style="left:96px;top:289px;width:7px;height:1px;background:#555"></i>
<i style="left:96px;top:291.2px;width:16px;height:0.4px;background:#ccc"></i>
<i style="left:96px;top:292.4px;width:14px;height:0.4px;background:#ccc"></i>
<i style="left:96px;top:293.6px;width:9px;height:0.4px;background:#ccc"></i>
<i style="left:96px;top:297px;width:4px;height:0.5px;background:#999"></i>
<i style="left:97.5px;top:299.5px;width:2.5px;height:2px;background:#555"></i>
<i style="left:96px;top:303px;width:4px;height:0.5px;background:#999"></i>
<i style="left:96px;top:305px;width:11px;height:0.6px;background:#777"></i>
<i style="left:96px;top:307px;width:16px;height:0.4px;background:#ccc"></i>
<i style="left:96px;top:308.3px;width:16px;height:0.4px;background:#ccc"></i>
<i style="left:96px;top:309.6px;width:16px;height:0.4px;background:#ccc"></i>
<i style="left:96px;top:311.5px;width:16px;height:0.4px;background:#ccc"></i>
<i style="left:96px;top:312.8px;width:16px;height:0.4px;background:#ccc"></i>
<i style="left:96px;top:314px;width:16px;height:0.4px;background:#ccc"></i>
<i style="left:101px;top:318px;width:5px;height:1px;background:#ccc"></i>
<i style="left:96px;top:320px;width:17px;height:0.3px;background:#eee"></i>
<i style="left:118.5px;top:269px;width:18.5px;height:41px;background:#f8f9fd;border:0.35px solid #eceef5"></i>
<i style="left:119.5px;top:270px;width:1.5px;height:0.5px;background:#bbb"></i>
<i style="left:134px;top:270px;width:2px;height:0.5px;background:#888"></i>
<i style="left:119.5px;top:271px;width:3.5px;height:0.6px;background:#aaa"></i>
<i style="left:132px;top:271.2px;width:4px;height:0.6px;background:#666"></i>
<i style="left:119.5px;top:273.8px;width:16.5px;height:19.2px;background:#e0e0e4"></i>
<svg style="position:absolute;left:122.7px;top:280.2px" width="10" height="7.2" viewBox="0 0 10 7.2"><circle cx="2.6" cy="1.3" r="1.1" fill="#43359c"/><path d="M0 7.2 L3 3.4 L4.6 5 L7 2.4 L10 7.2Z" fill="#43359c"/></svg>
<i style="left:125px;top:295px;width:5px;height:1px;background:#555"></i>
<i style="left:122px;top:297.2px;width:11px;height:0.6px;background:#999"></i>
<i style="left:120px;top:300.8px;width:2px;height:2.2px;background:#777"></i>
<i style="left:123px;top:301px;width:4px;height:0.5px;background:#bbb"></i>
<i style="left:120px;top:305.5px;width:6px;height:2px;background:#fff;border:0.3px solid #ddd"></i>
<i style="left:128px;top:305.3px;width:8px;height:2.2px;background:linear-gradient(90deg,#56399f,#6a4cbc);border-radius:1px"></i>
<i style="left:124.5px;top:309px;width:6.5px;height:0.4px;background:#888"></i>
<i style="left:142.5px;top:269px;width:18px;height:41px;background:#f8f9fd;border:0.35px solid #eceef5"></i>
<i style="left:143.5px;top:270px;width:1.5px;height:0.5px;background:#bbb"></i>
<i style="left:157.5px;top:270px;width:2px;height:0.5px;background:#888"></i>
<i style="left:143.5px;top:271.2px;width:2px;height:0.6px;background:#aaa"></i>
<i style="left:149px;top:271.2px;width:4px;height:0.6px;background:#aaa"></i>
<i style="left:157px;top:271.2px;width:2.5px;height:0.6px;background:#888"></i>
<i style="left:143.5px;top:274px;width:4.5px;height:1px;background:#555"></i>
<i style="left:143.5px;top:277.5px;width:2.5px;height:2.5px;background:#888"></i>
<i style="left:147.5px;top:278px;width:6.5px;height:0.5px;background:#aaa"></i>
<i style="left:147.5px;top:279.3px;width:3.5px;height:0.4px;background:#ccc"></i>
<i style="left:143.5px;top:283px;width:3.5px;height:0.5px;background:#666"></i>
<i style="left:152px;top:283px;width:3px;height:0.5px;background:#666"></i>
<i style="left:143.5px;top:285px;width:4.5px;height:0.4px;background:#bbb"></i>
<i style="left:152px;top:285px;width:5px;height:0.4px;background:#bbb"></i>
<i style="left:143.5px;top:287px;width:3.5px;height:0.4px;background:#ccc"></i>
<i style="left:152px;top:287px;width:3px;height:0.5px;background:#999"></i>
<i style="left:154px;top:288px;width:2px;height:1px;background:#bbb"></i>
<i style="left:143.5px;top:292px;width:4.5px;height:0.6px;background:#999"></i>
<svg style="position:absolute;left:145px;top:293.5px" width="15" height="7" viewBox="0 0 15 7"><path d="M0 6 L2 5 L3.5 2.5 L5 4.5 L6.5 1.5 L8 4 L9.5 3 L11 5 L12.5 1 L14 5.5" stroke="#f09a80" stroke-width="0.6" fill="none"/><path d="M0 6 L3 4 L6 5 L9 3.5 L14 5" stroke="#f8c8b8" stroke-width="0.4" fill="none"/></svg>
<i style="left:143.5px;top:301px;width:16px;height:0.3px;background:#eee"></i>
<i style="left:143px;top:305px;width:17px;height:2.5px;background:linear-gradient(90deg,#56399f,#6a4cbc);border-radius:1px"></i>
<i style="left:148.5px;top:308.8px;width:6.5px;height:0.4px;background:#888"></i>
<i style="left:0.9px;top:387px;width:16.5px;height:39.5px;background:#f8f9fd;border:0.35px solid #eceef5"></i>
<i style="left:1.9px;top:388px;width:1.5px;height:0.5px;background:#bbb"></i>
<i style="left:14.4px;top:388px;width:2px;height:0.5px;background:#888"></i>
<i style="left:2.1px;top:388.5px;width:1.3px;height:1.3px;background:#ccc"></i>
<i style="left:14.4px;top:388px;width:2px;height:1.8px;background:#bbb"></i>
<i style="left:6.15px;top:389.5px;width:6px;height:0.6px;background:#999"></i>
<i style="left:1.5px;top:391.8px;width:2.5px;height:0.6px;background:#bbb"></i>
<i style="left:5px;top:391.2px;width:4.5px;height:1.8px;background:#5a3ea8;border-radius:0.9px"></i>
<i style="left:11px;top:391.8px;width:2px;height:0.6px;background:#bbb"></i>
<i style="left:14.5px;top:391.8px;width:1.5px;height:0.6px;background:#bbb"></i>
<i style="left:1.3px;top:395px;width:6.7px;height:6.5px;background:#e6e8f8;border-radius:0.5px"></i>
<i style="left:3.65px;top:397.45px;width:2px;height:1.6px;background:#9a9ab0"></i>
<i style="left:9px;top:395px;width:7.5px;height:6.5px;background:#e6e8f8;border-radius:0.5px"></i>
<i style="left:11.75px;top:397.45px;width:2px;height:1.6px;background:#9a9ab0"></i>
<i style="left:1.5px;top:402px;width:3.5px;height:0.5px;background:#bbb"></i>
<i style="left:9.5px;top:402px;width:4.5px;height:0.5px;background:#bbb"></i>
<i style="left:1.3px;top:404px;width:6.7px;height:6.5px;background:#e6e8f8;border-radius:0.5px"></i>
<i style="left:3.65px;top:406.45px;width:2px;height:1.6px;background:#9a9ab0"></i>
<i style="left:9px;top:404px;width:7.5px;height:6.5px;background:#e6e8f8;border-radius:0.5px"></i>
<i style="left:11.75px;top:406.45px;width:2px;height:1.6px;background:#9a9ab0"></i>
<i style="left:1.5px;top:411px;width:3.5px;height:0.5px;background:#bbb"></i>
<i style="left:9.5px;top:411px;width:4.5px;height:0.5px;background:#bbb"></i>
<i style="left:1.3px;top:413px;width:6.7px;height:6.5px;background:#e6e8f8;border-radius:0.5px"></i>
<i style="left:3.65px;top:415.45px;width:2px;height:1.6px;background:#9a9ab0"></i>
<i style="left:9px;top:413px;width:7.5px;height:6.5px;background:#e6e8f8;border-radius:0.5px"></i>
<i style="left:11.75px;top:415.45px;width:2px;height:1.6px;background:#9a9ab0"></i>
<i style="left:1.5px;top:420px;width:3.5px;height:0.5px;background:#bbb"></i>
<i style="left:9.5px;top:420px;width:4.5px;height:0.5px;background:#bbb"></i>
<i style="left:2.8px;top:423.5px;width:1.2px;height:1.2px;background:#aaa"></i>
<i style="left:6.63px;top:423.5px;width:1.2px;height:1.2px;background:#aaa"></i>
<i style="left:10.47px;top:423.5px;width:1.2px;height:1.2px;background:#aaa"></i>
<i style="left:14.3px;top:423.5px;width:1.2px;height:1.2px;background:#aaa"></i>
<i style="left:6.15px;top:425.7px;width:6px;height:0.4px;background:#888"></i>
<i style="left:22.6px;top:387px;width:18.4px;height:50.8px;background:#f8f9fd;border:0.35px solid #eceef5"></i>
<i style="left:23.6px;top:388px;width:1.5px;height:0.5px;background:#bbb"></i>
<i style="left:38px;top:388px;width:2px;height:0.5px;background:#888"></i>
<i style="left:23.8px;top:388.5px;width:1.3px;height:1.3px;background:#ccc"></i>
<i style="left:38px;top:388px;width:2px;height:1.8px;background:#bbb"></i>
<i style="left:28.8px;top:389.5px;width:6px;height:0.6px;background:#999"></i>
<i style="left:23.3px;top:390.5px;width:7.7px;height:0.8px;background:#777"></i>
<i style="left:23.3px;top:392.2px;width:15.7px;height:0.4px;background:#ccc"></i>
<i style="left:23.3px;top:393.3px;width:9.7px;height:0.4px;background:#ccc"></i>
<i style="left:23.3px;top:396.3px;width:4.7px;height:0.5px;background:#aaa"></i>
<i style="left:23px;top:397.9px;width:17.5px;height:0.3px;background:#f0f0f4"></i>
<i style="left:23.3px;top:399.3px;width:4.7px;height:0.5px;background:#aaa"></i>
<i style="left:23px;top:400.9px;width:17.5px;height:0.3px;background:#f0f0f4"></i>
<i style="left:23.3px;top:403.5px;width:4.7px;height:0.5px;background:#aaa"></i>
<i style="left:23px;top:405.1px;width:17.5px;height:0.3px;background:#f0f0f4"></i>
<i style="left:23.3px;top:407.5px;width:4.7px;height:0.5px;background:#aaa"></i>
<i style="left:23px;top:409.1px;width:17.5px;height:0.3px;background:#f0f0f4"></i>
<i style="left:23.3px;top:411.5px;width:4.7px;height:0.5px;background:#aaa"></i>
<i style="left:23px;top:413.1px;width:17.5px;height:0.3px;background:#f0f0f4"></i>
<i style="left:23.3px;top:416px;width:4.7px;height:0.5px;background:#aaa"></i>
<i style="left:23px;top:417.6px;width:17.5px;height:0.3px;background:#f0f0f4"></i>
<i style="left:23.3px;top:420.5px;width:4.7px;height:0.5px;background:#aaa"></i>
<i style="left:23px;top:422.1px;width:17.5px;height:0.3px;background:#f0f0f4"></i>
<i style="left:23.3px;top:425px;width:4.7px;height:0.5px;background:#aaa"></i>
<i style="left:23px;top:426.6px;width:17.5px;height:0.3px;background:#f0f0f4"></i>
<i style="left:23.3px;top:428px;width:4.7px;height:0.5px;background:#aaa"></i>
<i style="left:23px;top:429.6px;width:17.5px;height:0.3px;background:#f0f0f4"></i>
<i style="left:23.3px;top:431px;width:4.7px;height:0.5px;background:#aaa"></i>
<i style="left:23px;top:432.6px;width:17.5px;height:0.3px;background:#f0f0f4"></i>
<i style="left:32px;top:420.5px;width:5px;height:0.5px;background:#ccc"></i>
<i style="left:32px;top:425px;width:5px;height:0.5px;background:#ccc"></i>
<i style="left:38.5px;top:427.3px;width:2px;height:1.7px;background:#444;border-radius:50%"></i>
<i style="left:38.5px;top:430.6px;width:2px;height:1.7px;background:#444;border-radius:50%"></i>
<i style="left:23.3px;top:434.3px;width:17.1px;height:2.3px;background:linear-gradient(90deg,#56399f,#6a4cbc);border-radius:1.1px"></i>
<i style="left:28px;top:437px;width:7px;height:0.4px;background:#999"></i>
<i style="left:45.8px;top:387px;width:18.9px;height:52px;background:#f8f9fd;border:0.35px solid #eceef5"></i>
<i style="left:46.8px;top:388px;width:1.5px;height:0.5px;background:#bbb"></i>
<i style="left:61.7px;top:388px;width:2px;height:0.5px;background:#888"></i>
<i style="left:47px;top:388.5px;width:1.3px;height:1.3px;background:#ccc"></i>
<i style="left:61.7px;top:388px;width:2px;height:1.8px;background:#bbb"></i>
<i style="left:52.25px;top:389.5px;width:6px;height:0.6px;background:#999"></i>
<i style="left:46.8px;top:391.2px;width:6px;height:0.6px;background:#999"></i>
<i style="left:61.7px;top:391.2px;width:2px;height:0.6px;background:#bbb"></i>
<i style="left:48.3px;top:394.5px;width:2px;height:2px;background:#999"></i>
<i style="left:53.8px;top:394.5px;width:2px;height:2px;background:#999"></i>
<i style="left:59.3px;top:394.5px;width:2px;height:2px;background:#999"></i>
<i style="left:46.8px;top:399.5px;width:5px;height:0.5px;background:#999"></i>
<i style="left:54.8px;top:399.5px;width:7.9px;height:0.5px;background:#ddd"></i>
<i style="left:46.8px;top:403.5px;width:5px;height:0.5px;background:#999"></i>
<i style="left:54.8px;top:403.5px;width:7.9px;height:0.5px;background:#ddd"></i>
<i style="left:46.8px;top:406px;width:3px;height:0.5px;background:#777"></i>
<svg style="position:absolute;left:46.9px;top:408.8px" width="3.2" height="2.3" viewBox="0 0 10 7.2"><circle cx="2.6" cy="1.3" r="1.1" fill="#5a5a8a"/><path d="M0 7.2 L3 3.4 L4.6 5 L7 2.4 L10 7.2Z" fill="#5a5a8a"/></svg>
<i style="left:51.3px;top:409.3px;width:4.5px;height:0.5px;background:#aaa"></i>
<i style="left:51.3px;top:410.5px;width:2.5px;height:0.4px;background:#ccc"></i>
<i style="left:46.3px;top:412px;width:17.9px;height:0.3px;background:#f0f0f4"></i>
<svg style="position:absolute;left:46.9px;top:412.8px" width="3.2" height="2.3" viewBox="0 0 10 7.2"><circle cx="2.6" cy="1.3" r="1.1" fill="#5a5a8a"/><path d="M0 7.2 L3 3.4 L4.6 5 L7 2.4 L10 7.2Z" fill="#5a5a8a"/></svg>
<i style="left:51.3px;top:413.3px;width:4.5px;height:0.5px;background:#aaa"></i>
<i style="left:51.3px;top:414.5px;width:2.5px;height:0.4px;background:#ccc"></i>
<i style="left:46.3px;top:416px;width:17.9px;height:0.3px;background:#f0f0f4"></i>
<svg style="position:absolute;left:46.9px;top:420.3px" width="3.2" height="2.3" viewBox="0 0 10 7.2"><circle cx="2.6" cy="1.3" r="1.1" fill="#5a5a8a"/><path d="M0 7.2 L3 3.4 L4.6 5 L7 2.4 L10 7.2Z" fill="#5a5a8a"/></svg>
<i style="left:51.3px;top:420.8px;width:4.5px;height:0.5px;background:#aaa"></i>
<i style="left:51.3px;top:422px;width:2.5px;height:0.4px;background:#ccc"></i>
<i style="left:46.3px;top:423.5px;width:17.9px;height:0.3px;background:#f0f0f4"></i>
<svg style="position:absolute;left:46.9px;top:427.3px" width="3.2" height="2.3" viewBox="0 0 10 7.2"><circle cx="2.6" cy="1.3" r="1.1" fill="#5a5a8a"/><path d="M0 7.2 L3 3.4 L4.6 5 L7 2.4 L10 7.2Z" fill="#5a5a8a"/></svg>
<i style="left:51.3px;top:427.8px;width:4.5px;height:0.5px;background:#aaa"></i>
<i style="left:51.3px;top:429px;width:2.5px;height:0.4px;background:#ccc"></i>
<i style="left:46.3px;top:430.5px;width:17.9px;height:0.3px;background:#f0f0f4"></i>
<svg style="position:absolute;left:46.9px;top:431.8px" width="3.2" height="2.3" viewBox="0 0 10 7.2"><circle cx="2.6" cy="1.3" r="1.1" fill="#5a5a8a"/><path d="M0 7.2 L3 3.4 L4.6 5 L7 2.4 L10 7.2Z" fill="#5a5a8a"/></svg>
<i style="left:51.3px;top:432.3px;width:4.5px;height:0.5px;background:#aaa"></i>
<i style="left:51.3px;top:433.5px;width:2.5px;height:0.4px;background:#ccc"></i>
<i style="left:46.3px;top:435px;width:17.9px;height:0.3px;background:#f0f0f4"></i>
<i style="left:46.8px;top:417px;width:3px;height:0.5px;background:#ccc"></i>
<i style="left:46.8px;top:436px;width:16.9px;height:2.3px;background:linear-gradient(90deg,#56399f,#6a4cbc);border-radius:1.1px"></i>
<i style="left:51.8px;top:438.9px;width:6.9px;height:0.4px;background:#999"></i>
<i style="left:69.4px;top:387px;width:18.2px;height:56.7px;background:#f8f9fd;border:0.35px solid #eceef5"></i>
<i style="left:70.4px;top:388px;width:1.5px;height:0.5px;background:#bbb"></i>
<i style="left:84.6px;top:388px;width:2px;height:0.5px;background:#888"></i>
<i style="left:70.6px;top:388.5px;width:1.3px;height:1.3px;background:#ccc"></i>
<i style="left:84.6px;top:388px;width:2px;height:1.8px;background:#bbb"></i>
<i style="left:75.5px;top:389.5px;width:6px;height:0.6px;background:#999"></i>
<i style="left:70.4px;top:391.2px;width:6px;height:0.6px;background:#999"></i>
<i style="left:84.6px;top:391.2px;width:2px;height:0.6px;background:#bbb"></i>
<i style="left:71.9px;top:394.5px;width:2px;height:2px;background:#999"></i>
<i style="left:77.4px;top:394.5px;width:2px;height:2px;background:#999"></i>
<i style="left:82.9px;top:394.5px;width:2px;height:2px;background:#999"></i>
<i style="left:70.4px;top:399.5px;width:5px;height:0.5px;background:#999"></i>
<i style="left:78.4px;top:399.5px;width:7.2px;height:0.5px;background:#ddd"></i>
<i style="left:70.4px;top:403.5px;width:5px;height:0.5px;background:#999"></i>
<i style="left:78.4px;top:403.5px;width:7.2px;height:0.5px;background:#ddd"></i>
<i style="left:70.4px;top:406px;width:3px;height:0.5px;background:#777"></i>
<svg style="position:absolute;left:70.5px;top:408.8px" width="3.2" height="2.3" viewBox="0 0 10 7.2"><circle cx="2.6" cy="1.3" r="1.1" fill="#5a5a8a"/><path d="M0 7.2 L3 3.4 L4.6 5 L7 2.4 L10 7.2Z" fill="#5a5a8a"/></svg>
<i style="left:74.9px;top:409.3px;width:4.5px;height:0.5px;background:#aaa"></i>
<i style="left:74.9px;top:410.5px;width:2.5px;height:0.4px;background:#ccc"></i>
<i style="left:69.9px;top:412px;width:17.2px;height:0.3px;background:#f0f0f4"></i>
<svg style="position:absolute;left:70.5px;top:412.8px" width="3.2" height="2.3" viewBox="0 0 10 7.2"><circle cx="2.6" cy="1.3" r="1.1" fill="#5a5a8a"/><path d="M0 7.2 L3 3.4 L4.6 5 L7 2.4 L10 7.2Z" fill="#5a5a8a"/></svg>
<i style="left:74.9px;top:413.3px;width:4.5px;height:0.5px;background:#aaa"></i>
<i style="left:74.9px;top:414.5px;width:2.5px;height:0.4px;background:#ccc"></i>
<i style="left:69.9px;top:416px;width:17.2px;height:0.3px;background:#f0f0f4"></i>
<svg style="position:absolute;left:70.5px;top:419.8px" width="3.2" height="2.3" viewBox="0 0 10 7.2"><circle cx="2.6" cy="1.3" r="1.1" fill="#5a5a8a"/><path d="M0 7.2 L3 3.4 L4.6 5 L7 2.4 L10 7.2Z" fill="#5a5a8a"/></svg>
<i style="left:74.9px;top:420.3px;width:4.5px;height:0.5px;background:#aaa"></i>
<i style="left:74.9px;top:421.5px;width:2.5px;height:0.4px;background:#ccc"></i>
<i style="left:69.9px;top:423px;width:17.2px;height:0.3px;background:#f0f0f4"></i>
<svg style="position:absolute;left:70.5px;top:424.3px" width="3.2" height="2.3" viewBox="0 0 10 7.2"><circle cx="2.6" cy="1.3" r="1.1" fill="#5a5a8a"/><path d="M0 7.2 L3 3.4 L4.6 5 L7 2.4 L10 7.2Z" fill="#5a5a8a"/></svg>
<i style="left:74.9px;top:424.8px;width:4.5px;height:0.5px;background:#aaa"></i>
<i style="left:74.9px;top:426px;width:2.5px;height:0.4px;background:#ccc"></i>
<i style="left:69.9px;top:427.5px;width:17.2px;height:0.3px;background:#f0f0f4"></i>
<svg style="position:absolute;left:70.5px;top:429.8px" width="3.2" height="2.3" viewBox="0 0 10 7.2"><circle cx="2.6" cy="1.3" r="1.1" fill="#5a5a8a"/><path d="M0 7.2 L3 3.4 L4.6 5 L7 2.4 L10 7.2Z" fill="#5a5a8a"/></svg>
<i style="left:74.9px;top:430.3px;width:4.5px;height:0.5px;background:#aaa"></i>
<i style="left:74.9px;top:431.5px;width:2.5px;height:0.4px;background:#ccc"></i>
<i style="left:69.9px;top:433px;width:17.2px;height:0.3px;background:#f0f0f4"></i>
<svg style="position:absolute;left:70.5px;top:433.8px" width="3.2" height="2.3" viewBox="0 0 10 7.2"><circle cx="2.6" cy="1.3" r="1.1" fill="#5a5a8a"/><path d="M0 7.2 L3 3.4 L4.6 5 L7 2.4 L10 7.2Z" fill="#5a5a8a"/></svg>
<i style="left:74.9px;top:434.3px;width:4.5px;height:0.5px;background:#aaa"></i>
<i style="left:74.9px;top:435.5px;width:2.5px;height:0.4px;background:#ccc"></i>
<i style="left:69.9px;top:437px;width:17.2px;height:0.3px;background:#f0f0f4"></i>
<i style="left:70.4px;top:417px;width:3px;height:0.5px;background:#ccc"></i>
<i style="left:70.4px;top:440.6px;width:16.2px;height:2.3px;background:linear-gradient(90deg,#56399f,#6a4cbc);border-radius:1.1px"></i>
<i style="left:75.4px;top:443.5px;width:6.2px;height:0.4px;background:#999"></i>
<i style="left:92.3px;top:387px;width:18.9px;height:39.5px;background:#f8f9fd;border:0.35px solid #eceef5"></i>
<i style="left:93.3px;top:388px;width:1.5px;height:0.5px;background:#bbb"></i>
<i style="left:108.2px;top:388px;width:2px;height:0.5px;background:#888"></i>
<i style="left:93.5px;top:388.5px;width:1.3px;height:1.3px;background:#ccc"></i>
<i style="left:108.2px;top:388px;width:2px;height:1.8px;background:#bbb"></i>
<i style="left:98.75px;top:389.5px;width:6px;height:0.6px;background:#999"></i>
<i style="left:92.8px;top:391px;width:17.9px;height:14.5px;background:#fff;border:0.3px solid #e8e8ee"></i>
<svg style="position:absolute;left:93.5px;top:392.4px" width="3" height="2.2" viewBox="0 0 10 7.2"><circle cx="2.6" cy="1.3" r="1.1" fill="#5a5a8a"/><path d="M0 7.2 L3 3.4 L4.6 5 L7 2.4 L10 7.2Z" fill="#5a5a8a"/></svg>
<i style="left:97.5px;top:392.7px;width:4.5px;height:0.5px;background:#aaa"></i>
<i style="left:97.5px;top:393.9px;width:2.5px;height:0.4px;background:#ccc"></i>
<svg style="position:absolute;left:93.5px;top:396.9px" width="3" height="2.2" viewBox="0 0 10 7.2"><circle cx="2.6" cy="1.3" r="1.1" fill="#5a5a8a"/><path d="M0 7.2 L3 3.4 L4.6 5 L7 2.4 L10 7.2Z" fill="#5a5a8a"/></svg>
<i style="left:97.5px;top:397.2px;width:4.5px;height:0.5px;background:#aaa"></i>
<i style="left:97.5px;top:398.4px;width:2.5px;height:0.4px;background:#ccc"></i>
<svg style="position:absolute;left:93.5px;top:401.4px" width="3" height="2.2" viewBox="0 0 10 7.2"><circle cx="2.6" cy="1.3" r="1.1" fill="#5a5a8a"/><path d="M0 7.2 L3 3.4 L4.6 5 L7 2.4 L10 7.2Z" fill="#5a5a8a"/></svg>
<i style="left:97.5px;top:401.7px;width:4.5px;height:0.5px;background:#aaa"></i>
<i style="left:97.5px;top:402.9px;width:2.5px;height:0.4px;background:#ccc"></i>
<i style="left:93px;top:423px;width:17.5px;height:2.6px;background:linear-gradient(90deg,#56399f,#6a4cbc);border-radius:1.1px"></i>
<i style="left:98px;top:426px;width:7px;height:0.3px;background:#999"></i>
<i style="left:116px;top:387px;width:18.9px;height:39.5px;background:#f8f9fd;border:0.35px solid #eceef5"></i>
<i style="left:117px;top:388px;width:1.5px;height:0.5px;background:#bbb"></i>
<i style="left:131.9px;top:388px;width:2px;height:0.5px;background:#888"></i>
<i style="left:117.2px;top:388.5px;width:1.3px;height:1.3px;background:#ccc"></i>
<i style="left:131.9px;top:388px;width:2px;height:1.8px;background:#bbb"></i>
<i style="left:121.45px;top:389.5px;width:8px;height:0.6px;background:#999"></i>
<i style="left:123.5px;top:392.5px;width:3.5px;height:2.5px;background:#777;border-radius:50%"></i>
<i style="left:117px;top:398.5px;width:3px;height:0.5px;background:#aaa"></i>
<i style="left:127px;top:398.5px;width:5px;height:0.5px;background:#ccc"></i>
<i style="left:116.5px;top:400px;width:18px;height:0.3px;background:#f0f0f4"></i>
<i style="left:117px;top:401.5px;width:3px;height:0.5px;background:#aaa"></i>
<i style="left:127px;top:401.5px;width:5px;height:0.5px;background:#ccc"></i>
<i style="left:116.5px;top:403px;width:18px;height:0.3px;background:#f0f0f4"></i>
<i style="left:117px;top:404.5px;width:3px;height:0.5px;background:#aaa"></i>
<i style="left:127px;top:404.5px;width:5px;height:0.5px;background:#ccc"></i>
<i style="left:116.5px;top:406px;width:18px;height:0.3px;background:#f0f0f4"></i>
<i style="left:117px;top:407px;width:3px;height:0.5px;background:#aaa"></i>
<i style="left:127px;top:407px;width:5px;height:0.5px;background:#ccc"></i>
<i style="left:116.5px;top:408.5px;width:18px;height:0.3px;background:#f0f0f4"></i>
<i style="left:121px;top:425.3px;width:9px;height:0.4px;background:#999"></i>
<i style="left:138.9px;top:387px;width:18.9px;height:39.5px;background:#f8f9fd;border:0.35px solid #eceef5"></i>
<i style="left:139.9px;top:388px;width:1.5px;height:0.5px;background:#bbb"></i>
<i style="left:154.8px;top:388px;width:2px;height:0.5px;background:#888"></i>
<i style="left:140.1px;top:388.5px;width:1.3px;height:1.3px;background:#ccc"></i>
<i style="left:154.8px;top:388px;width:2px;height:1.8px;background:#bbb"></i>
<i style="left:145.35px;top:389.5px;width:6px;height:0.6px;background:#999"></i>
<i style="left:140px;top:391.8px;width:5.5px;height:1.4px;background:#5a3ea8"></i>
<i style="left:140px;top:395px;width:3px;height:0.5px;background:#ccc"></i>
<i style="left:151px;top:395px;width:4px;height:0.5px;background:#ccc"></i>
<svg style="position:absolute;left:139.4px;top:397.3px" width="3.2" height="2.3" viewBox="0 0 10 7.2"><circle cx="2.6" cy="1.3" r="1.1" fill="#5a5a8a"/><path d="M0 7.2 L3 3.4 L4.6 5 L7 2.4 L10 7.2Z" fill="#5a5a8a"/></svg>
<i style="left:144px;top:397.8px;width:5px;height:0.5px;background:#aaa"></i>
<i style="left:156px;top:397.5px;width:1px;height:1.2px;background:#555"></i>
<i style="left:139.4px;top:401px;width:17.9px;height:0.3px;background:#eeeef2"></i>
<svg style="position:absolute;left:139.4px;top:403.8px" width="3.2" height="2.3" viewBox="0 0 10 7.2"><circle cx="2.6" cy="1.3" r="1.1" fill="#5a5a8a"/><path d="M0 7.2 L3 3.4 L4.6 5 L7 2.4 L10 7.2Z" fill="#5a5a8a"/></svg>
<i style="left:144px;top:404.3px;width:5px;height:0.5px;background:#aaa"></i>
<i style="left:156px;top:404px;width:1px;height:1.2px;background:#555"></i>
<i style="left:139.4px;top:407.5px;width:17.9px;height:0.3px;background:#eeeef2"></i>
<svg style="position:absolute;left:139.4px;top:409.3px" width="3.2" height="2.3" viewBox="0 0 10 7.2"><circle cx="2.6" cy="1.3" r="1.1" fill="#5a5a8a"/><path d="M0 7.2 L3 3.4 L4.6 5 L7 2.4 L10 7.2Z" fill="#5a5a8a"/></svg>
<i style="left:144px;top:409.8px;width:5px;height:0.5px;background:#aaa"></i>
<i style="left:156px;top:409.5px;width:1px;height:1.2px;background:#555"></i>
<i style="left:139.4px;top:413px;width:17.9px;height:0.3px;background:#eeeef2"></i>
<i style="left:144px;top:425.3px;width:8px;height:0.4px;background:#999"></i>
<i style="left:162.5px;top:387px;width:18.5px;height:39.5px;background:#f8f9fd;border:0.35px solid #eceef5"></i>
<i style="left:163.5px;top:388px;width:1.5px;height:0.5px;background:#bbb"></i>
<i style="left:178px;top:388px;width:2px;height:0.5px;background:#888"></i>
<i style="left:163.7px;top:388.5px;width:1.3px;height:1.3px;background:#ccc"></i>
<i style="left:178px;top:388px;width:2px;height:1.8px;background:#bbb"></i>
<i style="left:167.75px;top:389.5px;width:8px;height:0.6px;background:#999"></i>
<i style="left:165px;top:395px;width:14px;height:0.6px;background:#aaa"></i>
<i style="left:168px;top:396.4px;width:8px;height:0.4px;background:#aaa"></i>
<i style="left:164.5px;top:398.5px;width:2.3px;height:2px;background:#555;border-radius:50%"></i>
<i style="left:167px;top:399.3px;width:2px;height:0.4px;background:#ccc"></i>
<i style="left:170px;top:398.5px;width:2.3px;height:2px;background:#555;border-radius:50%"></i>
<i style="left:172.5px;top:399.3px;width:2px;height:0.4px;background:#ccc"></i>
<i style="left:175.5px;top:398.5px;width:2.3px;height:2px;background:#555;border-radius:50%"></i>
<i style="left:178px;top:399.3px;width:2px;height:0.4px;background:#ccc"></i>
<i style="left:165px;top:404px;width:14px;height:0.6px;background:#aaa"></i>
<i style="left:168px;top:405.4px;width:8px;height:0.4px;background:#aaa"></i>
<i style="left:166px;top:412px;width:2px;height:0.8px;background:#ccc"></i>
<i style="left:169.5px;top:412px;width:2px;height:0.8px;background:#888"></i>
<i style="left:173px;top:412px;width:2px;height:0.8px;background:#888"></i>
<i style="left:176.5px;top:412px;width:2px;height:0.8px;background:#ccc"></i>
<i style="left:163px;top:423px;width:17.5px;height:2.6px;background:linear-gradient(90deg,#56399f,#6a4cbc);border-radius:1.1px"></i>
<i style="left:168px;top:426px;width:7px;height:0.3px;background:#999"></i>
<i style="left:0.2px;top:460.2px;width:17.2px;height:42.6px;background:#f8f9fd;border:0.35px solid #eceef5"></i>
<i style="left:1.2px;top:461.2px;width:1.5px;height:0.5px;background:#bbb"></i>
<i style="left:14.4px;top:461.2px;width:2px;height:0.5px;background:#888"></i>
<i style="left:1.4px;top:461.7px;width:1.3px;height:1.3px;background:#ccc"></i>
<i style="left:14.4px;top:461.2px;width:2px;height:1.8px;background:#bbb"></i>
<i style="left:5.8px;top:462.7px;width:6px;height:0.6px;background:#999"></i>
<i style="left:5.2px;top:500.2px;width:7.2px;height:0.4px;background:#999"></i>
<i style="left:22.6px;top:460.2px;width:18.4px;height:42.6px;background:#f8f9fd;border:0.35px solid #eceef5"></i>
<i style="left:23.6px;top:461.2px;width:1.5px;height:0.5px;background:#bbb"></i>
<i style="left:38px;top:461.2px;width:2px;height:0.5px;background:#888"></i>
<i style="left:23.8px;top:461.7px;width:1.3px;height:1.3px;background:#ccc"></i>
<i style="left:38px;top:461.2px;width:2px;height:1.8px;background:#bbb"></i>
<i style="left:28.8px;top:462.7px;width:6px;height:0.6px;background:#999"></i>
<i style="left:27.6px;top:500.2px;width:8.4px;height:0.4px;background:#999"></i>
<i style="left:45.8px;top:460.2px;width:18.9px;height:42.6px;background:#f8f9fd;border:0.35px solid #eceef5"></i>
<i style="left:46.8px;top:461.2px;width:1.5px;height:0.5px;background:#bbb"></i>
<i style="left:61.7px;top:461.2px;width:2px;height:0.5px;background:#888"></i>
<i style="left:47px;top:461.7px;width:1.3px;height:1.3px;background:#ccc"></i>
<i style="left:61.7px;top:461.2px;width:2px;height:1.8px;background:#bbb"></i>
<i style="left:52.25px;top:462.7px;width:6px;height:0.6px;background:#999"></i>
<i style="left:50.8px;top:500.2px;width:8.9px;height:0.4px;background:#999"></i>
<i style="left:69.4px;top:460.2px;width:18.2px;height:42.6px;background:#f8f9fd;border:0.35px solid #eceef5"></i>
<i style="left:70.4px;top:461.2px;width:1.5px;height:0.5px;background:#bbb"></i>
<i style="left:84.6px;top:461.2px;width:2px;height:0.5px;background:#888"></i>
<i style="left:70.6px;top:461.7px;width:1.3px;height:1.3px;background:#ccc"></i>
<i style="left:84.6px;top:461.2px;width:2px;height:1.8px;background:#bbb"></i>
<i style="left:75.5px;top:462.7px;width:6px;height:0.6px;background:#999"></i>
<i style="left:74.4px;top:500.2px;width:8.2px;height:0.4px;background:#999"></i>
<i style="left:1px;top:464.5px;width:3px;height:0.5px;background:#999"></i>
<i style="left:1.5px;top:467px;width:1.5px;height:1.5px;background:#555"></i>
<i style="left:6px;top:467px;width:1.5px;height:1.5px;background:#555"></i>
<i style="left:11px;top:467px;width:1.5px;height:1.5px;background:#555"></i>
<i style="left:0.5px;top:471.5px;width:3.5px;height:1.3px;background:#5a3ea8"></i>
<i style="left:1px;top:475px;width:4px;height:0.5px;background:#999"></i>
<i style="left:2px;top:478.5px;width:12px;height:0.5px;background:#ccc"></i>
<i style="left:3px;top:478px;width:2px;height:1.5px;background:#777"></i>
<i style="left:6px;top:478px;width:2px;height:1.5px;background:#777"></i>
<i style="left:1px;top:485.5px;width:3px;height:0.5px;background:#999"></i>
<i style="left:2.5px;top:499px;width:0.9px;height:3px;background:#eaa8a8"></i>
<i style="left:4.1px;top:496px;width:0.9px;height:6px;background:#eaa8a8"></i>
<i style="left:5.7px;top:500px;width:0.9px;height:2px;background:#eaa8a8"></i>
<i style="left:7.3px;top:494px;width:0.9px;height:8px;background:#eaa8a8"></i>
<i style="left:8.9px;top:498px;width:0.9px;height:4px;background:#eaa8a8"></i>
<i style="left:10.5px;top:497px;width:0.9px;height:5px;background:#eaa8a8"></i>
<i style="left:12.1px;top:499px;width:0.9px;height:3px;background:#eaa8a8"></i>
<i style="left:13.7px;top:500px;width:0.9px;height:2px;background:#eaa8a8"></i>
<i style="left:1.5px;top:502.3px;width:13.5px;height:0.3px;background:#f4d8d8"></i>
<i style="left:23.5px;top:465.5px;width:3.5px;height:0.5px;background:#aaa"></i>
<i style="left:23px;top:467.3px;width:17.5px;height:0.3px;background:#ececf2"></i>
<i style="left:23.5px;top:469px;width:3.5px;height:0.5px;background:#aaa"></i>
<i style="left:23px;top:470.8px;width:17.5px;height:0.3px;background:#ececf2"></i>
<i style="left:23.5px;top:473px;width:3.5px;height:0.5px;background:#aaa"></i>
<i style="left:23px;top:474.8px;width:17.5px;height:0.3px;background:#ececf2"></i>
<i style="left:23.5px;top:477px;width:3.5px;height:0.5px;background:#aaa"></i>
<i style="left:23px;top:478.8px;width:17.5px;height:0.3px;background:#ececf2"></i>
<i style="left:23.5px;top:481px;width:3.5px;height:0.5px;background:#aaa"></i>
<i style="left:23px;top:482.8px;width:17.5px;height:0.3px;background:#ececf2"></i>
<i style="left:23.5px;top:485px;width:3.5px;height:0.5px;background:#aaa"></i>
<i style="left:23px;top:486.8px;width:17.5px;height:0.3px;background:#ececf2"></i>
<i style="left:23.5px;top:489px;width:3.5px;height:0.5px;background:#aaa"></i>
<i style="left:23px;top:490.8px;width:17.5px;height:0.3px;background:#ececf2"></i>
<i style="left:23.5px;top:493.5px;width:3.5px;height:0.5px;background:#aaa"></i>
<i style="left:23px;top:495.3px;width:17.5px;height:0.3px;background:#ececf2"></i>
<i style="left:23px;top:464.5px;width:17.5px;height:31.5px;background:transparent;border:0.3px solid #e0e0e8"></i>
<i style="left:48px;top:463.8px;width:14px;height:0.8px;background:#777"></i>
<i style="left:48px;top:465.5px;width:14.5px;height:0.5px;background:#bbb"></i>
<i style="left:48px;top:466.8px;width:11px;height:0.4px;background:#bbb"></i>
<i style="left:47px;top:469px;width:4px;height:0.5px;background:#aaa"></i>
<i style="left:47px;top:472px;width:5px;height:0.5px;background:#999"></i>
<i style="left:46.5px;top:474px;width:17.5px;height:0.3px;background:#ececf2"></i>
<i style="left:71px;top:466px;width:2.5px;height:2px;background:#9088c8"></i>
<i style="left:74.5px;top:466px;width:3px;height:2px;background:#8a80d0"></i>
<i style="left:78.5px;top:466.5px;width:5.5px;height:0.5px;background:#ccc"></i>
<i style="left:70px;top:469.3px;width:17px;height:0.3px;background:#ececf2"></i>
<i style="left:71px;top:471.5px;width:2.5px;height:2px;background:#9088c8"></i>
<i style="left:74.5px;top:471.5px;width:3px;height:2px;background:#8a80d0"></i>
<i style="left:78.5px;top:472px;width:5.5px;height:0.5px;background:#ccc"></i>
<i style="left:70px;top:474.8px;width:17px;height:0.3px;background:#ececf2"></i>
<i style="left:71px;top:477px;width:2.5px;height:2px;background:#9088c8"></i>
<i style="left:74.5px;top:477px;width:3px;height:2px;background:#8a80d0"></i>
<i style="left:78.5px;top:477.5px;width:5.5px;height:0.5px;background:#ccc"></i>
<i style="left:70px;top:480.3px;width:17px;height:0.3px;background:#ececf2"></i>
<i style="left:71px;top:482.5px;width:2.5px;height:2px;background:#9088c8"></i>
<i style="left:74.5px;top:482.5px;width:3px;height:2px;background:#8a80d0"></i>
<i style="left:78.5px;top:483px;width:5.5px;height:0.5px;background:#ccc"></i>
<i style="left:70px;top:485.8px;width:17px;height:0.3px;background:#ececf2"></i>
<i style="left:71px;top:497.5px;width:1.5px;height:1.5px;background:#999"></i>
<i style="left:75.5px;top:497.5px;width:1.5px;height:1.5px;background:#999"></i>
<i style="left:80px;top:497.5px;width:1.5px;height:1.5px;background:#999"></i>
<i style="left:84.5px;top:497.5px;width:1.5px;height:1.5px;background:#999"></i>
<div style="left:251px;top:17.299999999999997px;width:23.6px;height:11.6px;border-radius:50%;border:0.45px solid #8a8a8a"></div>
<i style="left:253.4px;top:37px;width:17.4px;height:38px;background:#f6f2ee;border-radius:1px"></i>
<i style="left:259.5px;top:57.8px;width:5px;height:0.8px;background:#6a5a50"></i>
<i style="left:254.5px;top:38.2px;width:1.5px;height:0.4px;background:#bbb"></i>
<i style="left:268px;top:38.2px;width:2px;height:0.4px;background:#bbb"></i>
<i style="left:258px;top:74px;width:8px;height:0.4px;background:#ddd"></i>
<div style="left:260.29999999999995px;top:53.599999999999994px;width:2.6px;height:2.6px;background:#d09878;transform:rotate(45deg)"></div>
<i style="left:274.3px;top:37px;width:17.7px;height:38px;background:#2d1b10;border-radius:1.5px"></i>
<div style="left:275px;top:38.5px;width:15.4px;height:15.4px;border-radius:50%;background:#5e3e28"></div>
<div style="left:275px;top:60px;width:15.4px;height:15.4px;border-radius:50%;background:#5e3e28"></div>
<div style="left:269px;top:49px;width:11px;height:13px;border-radius:50%;background:#4a3020;clip-path:inset(0 0 0 5.3px)"></div>
<div style="left:286px;top:49px;width:11px;height:13px;border-radius:50%;background:#4a3020;clip-path:inset(0 5.7px 0 0)"></div>
<i style="left:281.5px;top:54.5px;width:2.5px;height:1.5px;background:#bba080"></i>
<i style="left:295.3px;top:37px;width:17.5px;height:38px;background:#ef8422;border-radius:1.5px"></i>
<i style="left:297px;top:48.5px;width:1.5px;height:1px;background:#fde2c0"></i>
<i style="left:297px;top:53px;width:7px;height:0.6px;background:#fde2c0"></i>
<i style="left:297px;top:54.6px;width:14px;height:0.6px;background:#fde2c0"></i>
<i style="left:297px;top:56.2px;width:13px;height:0.6px;background:#fde2c0"></i>
<i style="left:297px;top:57.8px;width:11px;height:0.6px;background:#fde2c0"></i>
<i style="left:297px;top:59.4px;width:8px;height:0.6px;background:#fde2c0"></i>
<i style="left:297px;top:63.8px;width:5px;height:0.6px;background:#fbd0a0"></i>
<i style="left:316.3px;top:37px;width:17.5px;height:38px;background:#8cab5a;border-radius:1.5px"></i>
<div style="left:318px;top:60px;width:16px;height:15px;border-radius:50%;background:#98b566"></div>
<div style="left:321px;top:44px;width:13px;height:12px;border-radius:50%;background:#94b262"></div>
<i style="left:318px;top:55px;width:10px;height:0.6px;background:#eef4e0"></i>
<i style="left:318px;top:56.8px;width:7px;height:0.5px;background:#dfe8cc"></i>
<i style="left:341.5px;top:37px;width:16.9px;height:38px;background:#fefcfa"></i>
<i style="left:341.5px;top:37px;width:16.9px;height:38px;background:#f6f1ea"></i>
<div style="left:343.3px;top:53.599999999999994px;width:14px;height:7px;border-radius:50% 50% 40% 40%;background:#86a85a"></div>
<div style="left:348.0px;top:40.099999999999994px;width:3.2px;height:3.2px;border-radius:50%;background:#5a3a28"></div>
<i style="left:343.5px;top:44.5px;width:12.9px;height:1px;background:#8a6a50"></i>
<i style="left:345.5px;top:46.5px;width:8.9px;height:1px;background:#a08a70"></i>
<i style="left:344.5px;top:49.5px;width:10.9px;height:0.5px;background:#ccc"></i>
<i style="left:345.4px;top:69px;width:8.6px;height:2.5px;background:#3d2a1e;border-radius:1.5px"></i>
<div style="left:342.5px;top:56px;width:2.5px;height:2.5px;border-radius:50%;background:#e8a060"></div>
<div style="left:354.9px;top:56px;width:2.5px;height:2.5px;border-radius:50%;background:#e8a060"></div>
<i style="left:346.5px;top:74.4px;width:6.9px;height:0.4px;background:#d8d4d0"></i>
<i style="left:362px;top:37px;width:17.6px;height:38px;background:#fefcfa"></i>
<i style="left:362px;top:37px;width:17.6px;height:23.6px;background:#e6ecd8"></i>
<i style="left:362.8px;top:38px;width:1.7px;height:0.5px;background:#999"></i>
<i style="left:376.6px;top:38px;width:2.2px;height:0.5px;background:#777"></i>
<div style="left:365px;top:42.2px;width:11.2px;height:10.5px;border-radius:50%;background:#4a2c18"></div>
<div style="left:367.6px;top:45px;width:6px;height:6.5px;border-radius:50%;background:#c8b090"></div>
<div style="left:362px;top:53.5px;width:17.6px;height:7.1px;border-radius:7px 7px 0 0;background:#8ab060"></div>
<i style="left:367px;top:55px;width:7px;height:5.6px;background:#a8c888;border-radius:2px"></i>
<i style="left:369px;top:62.2px;width:3.6px;height:0.4px;background:#bbb"></i>
<i style="left:364px;top:64.5px;width:13.6px;height:0.6px;background:#8a8a8a"></i>
<i style="left:365px;top:66.6px;width:11.6px;height:0.6px;background:#a0a0a0"></i>
<div style="left:368.9px;top:69.2px;width:3.8px;height:3.8px;border-radius:50%;background:#3d2414"></div>
<i style="left:367px;top:74.4px;width:7.6px;height:0.4px;background:#d8d4d0"></i>
<i style="left:383px;top:37px;width:17.5px;height:38px;background:#fefcfa"></i>
<i style="left:383px;top:37px;width:17.5px;height:23.6px;background:#f8c8a0"></i>
<i style="left:383.8px;top:38px;width:1.7px;height:0.5px;background:#999"></i>
<i style="left:397.5px;top:38px;width:2.2px;height:0.5px;background:#777"></i>
<div style="left:384px;top:42.599999999999994px;width:5.5px;height:5.2px;border-radius:50%;background:#4a2416"></div>
<div style="left:392px;top:43.8px;width:2.8px;height:2.8px;border-radius:50%;background:#8a70e0"></div>
<i style="left:383px;top:52.5px;width:6px;height:8.1px;background:#e8781c"></i>
<i style="left:395px;top:52.5px;width:5.5px;height:8.1px;background:#e8781c"></i>
<i style="left:389px;top:50px;width:6px;height:10.6px;background:#fff4ea"></i>
<div style="left:395.5px;top:49.8px;width:3.4px;height:3.4px;border-radius:50%;background:#a898a8"></div>
<i style="left:386px;top:47.5px;width:4px;height:5px;background:#f4a070"></i>
<i style="left:390px;top:62.2px;width:3.5px;height:0.4px;background:#bbb"></i>
<i style="left:385px;top:64.5px;width:13.5px;height:0.6px;background:#8a8a8a"></i>
<i style="left:386px;top:66.6px;width:11.5px;height:0.6px;background:#a0a0a0"></i>
<div style="left:389.9px;top:69.2px;width:3.8px;height:3.8px;border-radius:50%;background:#3d2414"></div>
<i style="left:388px;top:74.4px;width:7.5px;height:0.4px;background:#d8d4d0"></i>
<i style="left:404px;top:37px;width:17.5px;height:38px;background:#fefcfa"></i>
<i style="left:404px;top:37px;width:17.5px;height:23.6px;background:#eeeeee"></i>
<i style="left:404.8px;top:38px;width:1.7px;height:0.5px;background:#999"></i>
<i style="left:418.5px;top:38px;width:2.2px;height:0.5px;background:#777"></i>
<i style="left:413.2px;top:42.2px;width:8.3px;height:5.6px;background:#3a3a3a;border-radius:4px 0 0 4px"></i>
<div style="left:405px;top:48px;width:17px;height:5px;background:#a8a8a8;transform:rotate(-35deg);transform-origin:0 0;top:58px"></div>
<i style="left:415px;top:48px;width:6.5px;height:12.6px;background:#b8b8b8"></i>
<i style="left:404px;top:55px;width:7px;height:5.6px;background:#d0d0d0"></i>
<i style="left:411px;top:62.2px;width:3.5px;height:0.4px;background:#bbb"></i>
<i style="left:406px;top:64.5px;width:13.5px;height:0.6px;background:#8a8a8a"></i>
<i style="left:407px;top:66.6px;width:11.5px;height:0.6px;background:#a0a0a0"></i>
<div style="left:410.9px;top:69.2px;width:3.8px;height:3.8px;border-radius:50%;background:#3d2414"></div>
<i style="left:409px;top:74.4px;width:7.5px;height:0.4px;background:#d8d4d0"></i>
<i style="left:425px;top:37px;width:17.5px;height:38px;background:#fefcfa"></i>
<i style="left:425px;top:37px;width:17.5px;height:23.6px;background:#fae6c4"></i>
<i style="left:425.8px;top:38px;width:1.7px;height:0.5px;background:#999"></i>
<i style="left:439.5px;top:38px;width:2.2px;height:0.5px;background:#777"></i>
<div style="left:434.70000000000005px;top:39.599999999999994px;width:8px;height:7.5px;border-radius:50% 0 0 50%;background:#5a3020"></div>
<i style="left:425px;top:47px;width:17.5px;height:13.6px;background:#f4c040"></i>
<i style="left:425px;top:50px;width:5px;height:10.6px;background:#f0a850"></i>
<i style="left:438px;top:48px;width:4.5px;height:6px;background:#f8b870"></i>
<i style="left:432px;top:62.2px;width:3.5px;height:0.4px;background:#bbb"></i>
<i style="left:427px;top:64.5px;width:13.5px;height:0.6px;background:#8a8a8a"></i>
<i style="left:428px;top:66.6px;width:11.5px;height:0.6px;background:#a0a0a0"></i>
<div style="left:431.9px;top:69.2px;width:3.8px;height:3.8px;border-radius:50%;background:#3d2414"></div>
<i style="left:430px;top:74.4px;width:7.5px;height:0.4px;background:#d8d4d0"></i>
<i style="left:445.9px;top:37px;width:17.5px;height:38px;background:#fefcfa"></i>
<i style="left:445.9px;top:37px;width:17.5px;height:23.6px;background:#cfc6f2"></i>
<i style="left:446.7px;top:38px;width:1.7px;height:0.5px;background:#999"></i>
<i style="left:460.4px;top:38px;width:2.2px;height:0.5px;background:#777"></i>
<div style="left:449px;top:40.5px;width:11.5px;height:9.5px;border-radius:50%;background:#b0a0f2"></div>
<i style="left:450px;top:47px;width:7px;height:13.6px;background:#e8a080"></i>
<div style="left:446.5px;top:60px;width:14px;height:3px;background:#3a2418;transform:rotate(-60deg);transform-origin:0 0"></div>
<i style="left:457px;top:45px;width:5px;height:9px;background:#3a2418;border-radius:2px"></i>
<i style="left:458px;top:54px;width:5.4px;height:6.6px;background:#e8a888"></i>
<i style="left:452.9px;top:62.2px;width:3.5px;height:0.4px;background:#bbb"></i>
<i style="left:447.9px;top:64.5px;width:13.5px;height:0.6px;background:#8a8a8a"></i>
<i style="left:448.9px;top:66.6px;width:11.5px;height:0.6px;background:#a0a0a0"></i>
<div style="left:452.8px;top:69.2px;width:3.8px;height:3.8px;border-radius:50%;background:#3d2414"></div>
<i style="left:450.9px;top:74.4px;width:7.5px;height:0.4px;background:#d8d4d0"></i>
<i style="left:468.4px;top:45.3px;width:15.6px;height:24.3px;background:#151515;border-radius:2px"></i>
<i style="left:469px;top:62.75px;width:14.4px;height:3.15px;background:#2f3fd8"></i>
<i style="left:471px;top:52px;width:10px;height:0.6px;background:#444"></i>
<i style="left:471px;top:54.67px;width:10px;height:0.6px;background:#444"></i>
<i style="left:471px;top:57.33px;width:10px;height:0.6px;background:#444"></i>
<i style="left:488.5px;top:41.6px;width:1.5px;height:0.6px;background:#999"></i>
<i style="left:500px;top:41.4px;width:2.5px;height:1.2px;background:#111"></i>
<i style="left:508.5px;top:41.6px;width:1.5px;height:0.6px;background:#999"></i>
<i style="left:519px;top:41.4px;width:2.5px;height:1.2px;background:#111"></i>
<i style="left:527.5px;top:41.6px;width:1.5px;height:0.6px;background:#999"></i>
<i style="left:539px;top:41.4px;width:2.5px;height:1.2px;background:#111"></i>
<i style="left:488.5px;top:44px;width:2.5px;height:0.6px;background:#777"></i>
<i style="left:488.5px;top:45.4px;width:5.5px;height:0.8px;background:#444"></i>
<i style="left:488.5px;top:48.5px;width:14px;height:0.5px;background:#e8e8ee"></i>
<i style="left:488.5px;top:52px;width:14px;height:0.5px;background:#e8e8ee"></i>
<i style="left:488.5px;top:55.5px;width:14px;height:0.5px;background:#e8e8ee"></i>
<i style="left:489px;top:47.8px;width:4px;height:0.4px;background:#ccc"></i>
<i style="left:489px;top:51.3px;width:4px;height:0.4px;background:#ccc"></i>
<i style="left:489px;top:54.8px;width:3px;height:0.4px;background:#ccc"></i>
<i style="left:499px;top:59px;width:3.5px;height:0.4px;background:#bbb"></i>
<i style="left:488px;top:63px;width:15px;height:2.8px;background:#3a4ee0;border-radius:0.4px"></i>
<i style="left:491px;top:68px;width:9px;height:0.5px;background:#ccc"></i>
<div style="left:514px;top:40.5px;width:3px;height:4.6px;border-radius:50%;background:#6a5acb"></div>
<i style="left:510px;top:47.5px;width:10px;height:0.9px;background:#555"></i>
<i style="left:508.5px;top:52px;width:13.5px;height:0.5px;background:#e8e8ee"></i>
<i style="left:509px;top:53px;width:3px;height:0.5px;background:#bbb"></i>
<i style="left:508.5px;top:56.5px;width:13.5px;height:0.5px;background:#e8e8ee"></i>
<i style="left:509px;top:57.5px;width:3px;height:0.5px;background:#bbb"></i>
<i style="left:519px;top:57.5px;width:3px;height:0.5px;background:#bbb"></i>
<i style="left:516px;top:60px;width:6px;height:0.4px;background:#ccc"></i>
<i style="left:508px;top:63px;width:14px;height:2.5px;background:#3a4ee0;border-radius:0.4px"></i>
<i style="left:508px;top:68px;width:7px;height:2.8px;background:#e8806a"></i>
<i style="left:515px;top:68px;width:7px;height:2.8px;background:#4a90e0"></i>
<i style="left:510px;top:72px;width:10px;height:0.4px;background:#ccc"></i>
<div style="left:527.5px;top:40.5px;width:3px;height:4.6px;border-radius:50%;background:#6a5acb"></div>
<i style="left:527.5px;top:47.5px;width:2.5px;height:0.7px;background:#555"></i>
<i style="left:527.5px;top:49.3px;width:11.5px;height:0.7px;background:#555"></i>
<i style="left:527.5px;top:51.5px;width:2.5px;height:0.5px;background:#bbb"></i>
<i style="left:527.5px;top:55.4px;width:14.5px;height:1.6px;background:#f0f0f4"></i>
<i style="left:528px;top:55.8px;width:1.5px;height:0.8px;background:#888"></i>
<i style="left:530.5px;top:56px;width:4.5px;height:0.4px;background:#aaa"></i>
<i style="left:527.5px;top:59.2px;width:14.5px;height:1.6px;background:#f0f0f4"></i>
<i style="left:528px;top:59.6px;width:1.5px;height:0.8px;background:#888"></i>
<i style="left:530.5px;top:59.8px;width:3.5px;height:0.4px;background:#aaa"></i>
<i style="left:527.5px;top:62.8px;width:4.5px;height:0.4px;background:#ccc"></i>
<i style="left:527px;top:66.6px;width:15px;height:2.8px;background:#3a4ee0;border-radius:0.4px"></i>
<i style="left:531px;top:71.5px;width:6px;height:0.5px;background:#ccc"></i>
<i style="left:545px;top:36.8px;width:18px;height:38.7px;background:#fff;border:0.6px solid #b8c0f8"></i>
<i style="left:545px;top:36.8px;width:18px;height:4px;background:#4a5fe6"></i>
<div style="left:552.5px;top:44.5px;width:3px;height:5px;border-radius:50%;background:#6a5acb"></div>
<i style="left:547px;top:51.5px;width:5px;height:0.5px;background:#bbb"></i>
<i style="left:547px;top:54px;width:14px;height:0.5px;background:#ccc"></i>
<i style="left:547px;top:57px;width:3px;height:0.5px;background:#bbb"></i>
<i style="left:547px;top:60.4px;width:14px;height:1.2px;background:#f0f0f4"></i>
<i style="left:557px;top:60.2px;width:4px;height:1.6px;background:#ddd"></i>
<i style="left:546.5px;top:65px;width:15px;height:2.7px;background:#3a4ee0;border-radius:0.4px"></i>
<i style="left:548px;top:71px;width:5px;height:0.5px;background:#ccc"></i>
<i style="left:556px;top:70.6px;width:2px;height:1.2px;background:#4a5fe6"></i>
<i style="left:584px;top:44.8px;width:6px;height:0.7px;background:#555"></i>
<i style="left:584.6px;top:47px;width:5.4px;height:4.2px;background:#3aada0;border-radius:1.5px"></i>
<i style="left:590.5px;top:47.5px;width:6.5px;height:3.3px;background:#d6eaf6"></i>
<i style="left:591.5px;top:48.2px;width:3.5px;height:0.4px;background:#9ab"></i>
<i style="left:591.5px;top:49.4px;width:2.5px;height:0.4px;background:#abc"></i>
<i style="left:584.6px;top:52px;width:5.4px;height:4.2px;background:#3aada0;border-radius:1.5px"></i>
<i style="left:590.5px;top:52.5px;width:6.5px;height:3.3px;background:#d6eaf6"></i>
<i style="left:591.5px;top:53.2px;width:3.5px;height:0.4px;background:#9ab"></i>
<i style="left:591.5px;top:54.4px;width:2.5px;height:0.4px;background:#abc"></i>
<i style="left:584.6px;top:56.5px;width:5.4px;height:4.2px;background:#3aada0;border-radius:1.5px"></i>
<i style="left:590.5px;top:57px;width:6.5px;height:3.3px;background:#d6eaf6"></i>
<i style="left:591.5px;top:57.7px;width:3.5px;height:0.4px;background:#9ab"></i>
<i style="left:591.5px;top:58.9px;width:2.5px;height:0.4px;background:#abc"></i>
<i style="left:394px;top:81.3px;width:18.5px;height:42.7px;background:#fdfdfd"></i>
<i style="left:395px;top:82.5px;width:2px;height:0.8px;background:#999"></i>
<i style="left:408.5px;top:82.5px;width:3px;height:0.8px;background:#222"></i>
<i style="left:420px;top:81.3px;width:17px;height:42.7px;background:#fdfdfd"></i>
<i style="left:421px;top:82.5px;width:2px;height:0.8px;background:#999"></i>
<i style="left:433px;top:82.5px;width:3px;height:0.8px;background:#222"></i>
<i style="left:443px;top:81.3px;width:21px;height:42.7px;background:#fdfdfd"></i>
<i style="left:444px;top:82.5px;width:2px;height:0.8px;background:#999"></i>
<i style="left:460px;top:82.5px;width:3px;height:0.8px;background:#222"></i>
<i style="left:467.7px;top:81.3px;width:17.1px;height:42.7px;background:#fdfdfd"></i>
<i style="left:468.7px;top:82.5px;width:2px;height:0.8px;background:#999"></i>
<i style="left:480.8px;top:82.5px;width:3px;height:0.8px;background:#222"></i>
<i style="left:488.5px;top:81.3px;width:14.5px;height:42.7px;background:#fdfdfd"></i>
<i style="left:489.5px;top:82.5px;width:2px;height:0.8px;background:#999"></i>
<i style="left:499px;top:82.5px;width:3px;height:0.8px;background:#222"></i>
<i style="left:506.9px;top:81.3px;width:15.9px;height:42.7px;background:#fdfdfd"></i>
<i style="left:507.9px;top:82.5px;width:2px;height:0.8px;background:#999"></i>
<i style="left:518.8px;top:82.5px;width:3px;height:0.8px;background:#222"></i>
<i style="left:526.5px;top:81.3px;width:15.9px;height:42.7px;background:#fdfdfd"></i>
<i style="left:527.5px;top:82.5px;width:2px;height:0.8px;background:#999"></i>
<i style="left:538.4px;top:82.5px;width:3px;height:0.8px;background:#222"></i>
<i style="left:399.8px;top:104.3px;width:6.5px;height:2.5px;background:#f08a4a;border-radius:1.2px"></i>
<i style="left:395px;top:89px;width:4px;height:0.7px;background:#777"></i>
<i style="left:395px;top:91px;width:2.5px;height:0.6px;background:#777"></i>
<i style="left:395px;top:95px;width:17px;height:2px;background:#f6f6f8"></i>
<i style="left:395px;top:99.5px;width:17px;height:2px;background:#f6f6f8"></i>
<i style="left:395.5px;top:95.7px;width:3.5px;height:0.5px;background:#ccc"></i>
<i style="left:395.5px;top:100.2px;width:2.5px;height:0.5px;background:#ccc"></i>
<i style="left:400.5px;top:110.2px;width:4.5px;height:0.5px;background:#9ad0d0"></i>
<div style="left:397.5px;top:113.5px;width:2.2px;height:2.2px;border-radius:50%;border:0.3px solid #ccc"></div>
<div style="left:402.0px;top:113.5px;width:2.2px;height:2.2px;border-radius:50%;border:0.3px solid #ccc"></div>
<div style="left:406.5px;top:113.5px;width:2.2px;height:2.2px;border-radius:50%;border:0.3px solid #ccc"></div>
<i style="left:395px;top:121.2px;width:3px;height:0.5px;background:#ccc"></i>
<i style="left:402px;top:121.2px;width:7px;height:0.5px;background:#ccc"></i>
<div style="left:421.1px;top:87.4px;width:15px;height:15px;border-radius:50%;background:#e6f5e6"></div>
<div style="left:424.2px;top:90.5px;width:8.8px;height:8.8px;border-radius:50%;background:#7b6bec"></div>
<i style="left:424.3px;top:118px;width:8.7px;height:2.6px;background:#f08a4a;border-radius:1px"></i>
<i style="left:422px;top:109.5px;width:13px;height:0.5px;background:#d8d8ee"></i>
<i style="left:422.5px;top:111.2px;width:12px;height:0.5px;background:#d8d8ee"></i>
<i style="left:423.5px;top:113px;width:10px;height:0.5px;background:#d8d8ee"></i>
<i style="left:426px;top:106.5px;width:5px;height:0.5px;background:#ddd"></i>
<i style="left:445px;top:89px;width:17.4px;height:9.8px;background:#7c68ee;border-radius:1px"></i>
<i style="left:445px;top:103px;width:9.6px;height:9.8px;background:#86d08a"></i>
<i style="left:456.3px;top:103px;width:7.7px;height:9.8px;background:#f4a478"></i>
<i style="left:445.5px;top:86px;width:2.5px;height:1.5px;background:#aab"></i>
<i style="left:449px;top:86.3px;width:4px;height:0.5px;background:#ccc"></i>
<i style="left:461px;top:85.8px;width:1.5px;height:1.5px;background:#aaa"></i>
<i style="left:445px;top:101.2px;width:3px;height:0.5px;background:#bbb"></i>
<i style="left:457px;top:101.2px;width:3px;height:0.5px;background:#bbb"></i>
<i style="left:459px;top:95px;width:3px;height:2px;background:#fff"></i>
<i style="left:445px;top:114.5px;width:5px;height:0.5px;background:#ddd"></i>
<i style="left:456px;top:114.5px;width:4px;height:0.5px;background:#ddd"></i>
<i style="left:446.5px;top:121.5px;width:1.5px;height:1px;background:#ccc"></i>
<i style="left:451px;top:121.5px;width:1.5px;height:1px;background:#ccc"></i>
<i style="left:455.5px;top:121.5px;width:1.5px;height:1px;background:#ccc"></i>
<i style="left:460px;top:121.5px;width:1.5px;height:1px;background:#ccc"></i>
<i style="left:469px;top:104.8px;width:14.5px;height:2.2px;background:#6a50d8"></i>
<i style="left:469px;top:96.5px;width:14.5px;height:0.7px;background:#6a50d8"></i>
<i style="left:469px;top:91.2px;width:3px;height:0.7px;background:#777"></i>
<i style="left:469px;top:100px;width:13.5px;height:0.6px;background:#aaa"></i>
<i style="left:488.5px;top:107.6px;width:14.5px;height:2.1px;background:#6a50d8"></i>
<i style="left:507.5px;top:100.2px;width:15.5px;height:2.4px;background:#6a50d8"></i>
<i style="left:507.5px;top:92.7px;width:15px;height:1.5px;background:#ececf0"></i>
<i style="left:531px;top:105px;width:11px;height:2.6px;background:#6a50d8"></i>
<div style="left:474.0px;top:83.0px;width:3px;height:5px;border-radius:50%;background:#6a5acb"></div>
<div style="left:494.1px;top:83.1px;width:3px;height:5px;border-radius:50%;background:#6a5acb"></div>
<div style="left:507.5px;top:81.0px;width:3px;height:5px;border-radius:50%;background:#6a5acb"></div>
<div style="left:532.5px;top:84.5px;width:3px;height:5px;border-radius:50%;background:#6a5acb"></div>
<i style="left:489px;top:93px;width:4px;height:0.8px;background:#555"></i>
<i style="left:489px;top:100.3px;width:13.5px;height:0.5px;background:#ccc"></i>
<i style="left:489px;top:105px;width:13.5px;height:0.5px;background:#ccc"></i>
<i style="left:507.5px;top:87.3px;width:6.5px;height:0.5px;background:#999"></i>
<i style="left:507.5px;top:88.8px;width:3.5px;height:0.5px;background:#bbb"></i>
<i style="left:509.5px;top:92.9px;width:0.8px;height:1.2px;background:#333"></i>
<i style="left:507.5px;top:96.8px;width:15px;height:0.5px;background:#ccc"></i>
<i style="left:511px;top:104.5px;width:8px;height:0.5px;background:#bbb"></i>
<i style="left:510px;top:110.8px;width:11px;height:0.5px;background:#ddd"></i>
<i style="left:527.5px;top:80.3px;width:1.5px;height:0.5px;background:#999"></i>
<i style="left:530px;top:80.3px;width:1px;height:0.5px;background:#999"></i>
<i style="left:527.5px;top:96.2px;width:14px;height:0.5px;background:#bbb"></i>
<i style="left:527.5px;top:101.1px;width:14px;height:0.5px;background:#bbb"></i>
<i style="left:528px;top:105.3px;width:2px;height:2px;background:#eee;border:0.3px solid #aaa"></i>
<i style="left:532px;top:110px;width:7px;height:0.4px;background:#ddd"></i>
<i style="left:525.3px;top:118px;width:17.7px;height:5px;background:#111"></i>
<i style="left:525.3px;top:123px;width:17.7px;height:30.6px;background:#fdfdfd"></i>
<i style="left:526px;top:151px;width:16.5px;height:2px;background:#2e8a7a"></i>
<div style="left:532.3px;top:125.80000000000001px;width:3.4px;height:3.4px;border-radius:50%;border:0.4px solid #aaa"></div>
<i style="left:531px;top:131px;width:6px;height:0.5px;background:#aaa"></i>
<i style="left:527px;top:135px;width:14px;height:0.6px;background:#e6e6ea"></i>
<i style="left:527px;top:137.33px;width:14px;height:0.6px;background:#e6e6ea"></i>
<i style="left:527px;top:139.67px;width:14px;height:0.6px;background:#e6e6ea"></i>
<i style="left:527px;top:142px;width:14px;height:0.6px;background:#e6e6ea"></i>
<i style="left:527px;top:144.33px;width:14px;height:0.6px;background:#e6e6ea"></i>
<i style="left:527px;top:146.67px;width:14px;height:0.6px;background:#e6e6ea"></i>
<i style="left:527px;top:118.8px;width:1.5px;height:0.7px;background:#777"></i>
<i style="left:531.5px;top:120px;width:5px;height:0.6px;background:#888"></i>
<i style="left:540.5px;top:118.8px;width:1.5px;height:0.7px;background:#777"></i>
<i style="left:545px;top:77.6px;width:17.5px;height:38px;background:#f0f0f4"></i>
<i style="left:546.5px;top:102.8px;width:15px;height:1.7px;background:#6a50d8"></i>
<i style="left:547px;top:107px;width:6px;height:3px;background:#e86a50"></i>
<i style="left:554px;top:107px;width:7px;height:3px;background:#3a8ae0"></i>
<div style="left:552.5px;top:80px;width:3px;height:5px;border-radius:50%;background:#6a5acb"></div>
<i style="left:548px;top:86.8px;width:12px;height:0.8px;background:#666"></i>
<i style="left:549px;top:88.8px;width:10px;height:0.5px;background:#aaa"></i>
<i style="left:550px;top:90.3px;width:8px;height:0.5px;background:#aaa"></i>
<i style="left:547px;top:97px;width:14px;height:0.5px;background:#d8d8e0"></i>
<i style="left:557px;top:94.5px;width:4px;height:0.5px;background:#ccc"></i>
<i style="left:600.9px;top:35px;width:51.7px;height:42.8px;background:#3a52e6"></i>
<div style="left:601.5px;top:35.6px;width:23.7px;height:41.6px;background:radial-gradient(ellipse at 50% 40%,#2366b8,#1a4c9c 70%,#173f8c)"></div>
<div style="left:626.9px;top:35.6px;width:25.1px;height:41.6px;background:linear-gradient(180deg,#1b56a6,#1a4a98)"></div>
<svg style="position:absolute;left:610.5px;top:43.0px" width="6" height="5" viewBox="0 0 6 5"><circle cx="3.2" cy="0.9" r="0.8" fill="#fff"/><path d="M0.3 3.6 L2.6 2.2 L3.2 1.8 L3.8 2.3 L5.7 3.6 L3.4 2.9 L2.2 4.8 L2.5 2.9Z" fill="#fff"/></svg>
<i style="left:606.45px;top:49.5px;width:14px;height:1px;background:#d8e4ff"></i>
<i style="left:608.45px;top:58px;width:10px;height:0.5px;background:#7aa0e0"></i>
<i style="left:609.45px;top:61px;width:8px;height:0.4px;background:#5a88d0"></i>
<div style="left:603.5px;top:59.5px;width:21px;height:9px;border-radius:50%;border:1px solid #b8e04a"></div>
<i style="left:604.9px;top:69.2px;width:17.1px;height:2.8px;background:#f4f7ff"></i>
<i style="left:611.45px;top:74.4px;width:4px;height:0.5px;background:#9ab8e8"></i>
<i style="left:630px;top:44.5px;width:17px;height:19.5px;background:#fbfbfb"></i>
<div style="left:632.5px;top:50.5px;width:4px;height:4px;border-radius:50%;background:#e86a40"></div>
<div style="left:640.5px;top:50.5px;width:4px;height:4px;border-radius:50%;background:#f4c040"></div>
<i style="left:638.2px;top:47.5px;width:0.6px;height:9px;background:#c8a070"></i>
<i style="left:633px;top:61px;width:11px;height:0.6px;background:#d8c8c0"></i>
<i style="left:630.5px;top:69.2px;width:17.6px;height:2.8px;background:#f4f7ff"></i>
<i style="left:637.3px;top:74.4px;width:4px;height:0.5px;background:#9ab8e8"></i>
<div style="left:600px;top:29.299999999999997px;width:11.6px;height:4.7px;border-radius:50%;border:0.5px solid #444"></div>
<div style="left:650.2px;top:28.200000000000003px;width:9.8px;height:6.3px;border-radius:50%;border:0.5px solid #444"></div>
<i style="left:626.8px;top:77.8px;width:25.6px;height:124.9px;background:#fff;border:1.6px solid #4450e0"></i>
<i style="left:628.5px;top:85.7px;width:22px;height:9.3px;background:#6a2630"></i>
<i style="left:630px;top:89px;width:9px;height:5px;background:#9a3a40"></i>
<i style="left:628.5px;top:80px;width:22px;height:2.5px;background:#f4f4f8"></i>
<i style="left:629px;top:97px;width:10px;height:0.7px;background:#777"></i>
<i style="left:629px;top:99px;width:20px;height:0.5px;background:#bbb"></i>
<i style="left:629px;top:100.3px;width:16px;height:0.5px;background:#ccc"></i>
<i style="left:629.5px;top:103.5px;width:1px;height:1px;background:#888"></i>
<i style="left:632px;top:103.7px;width:11px;height:0.5px;background:#c8c8d0"></i>
<i style="left:629.5px;top:107px;width:1px;height:1px;background:#888"></i>
<i style="left:632px;top:107.2px;width:8px;height:0.5px;background:#c8c8d0"></i>
<i style="left:629.5px;top:110.5px;width:1px;height:1px;background:#888"></i>
<i style="left:632px;top:110.7px;width:11px;height:0.5px;background:#c8c8d0"></i>
<i style="left:629.5px;top:114px;width:1px;height:1px;background:#888"></i>
<i style="left:632px;top:114.2px;width:8px;height:0.5px;background:#c8c8d0"></i>
<i style="left:629.5px;top:117.5px;width:1.2px;height:1.2px;background:#e08060"></i>
<i style="left:634.1px;top:117.5px;width:1.2px;height:1.2px;background:#ccc"></i>
<i style="left:638.7px;top:117.5px;width:1.2px;height:1.2px;background:#ccc"></i>
<i style="left:643.3px;top:117.5px;width:1.2px;height:1.2px;background:#ccc"></i>
<i style="left:647.9px;top:117.5px;width:1.2px;height:1.2px;background:#ccc"></i>
<i style="left:626.8px;top:119.4px;width:25.6px;height:1.8px;background:#4450e0"></i>
<i style="left:628px;top:121px;width:23px;height:39.5px;background:#fafafa"></i>
<i style="left:628px;top:121px;width:23px;height:14px;background:#e8e8ea"></i>
<i style="left:631px;top:124.5px;width:17px;height:1px;background:#666"></i>
<i style="left:633px;top:126.8px;width:13px;height:0.6px;background:#999"></i>
<div style="left:637.2px;top:131px;width:3.6px;height:3.6px;border-radius:50%;background:#7aa0b8;border:0.5px solid #dde"></div>
<i style="left:633px;top:138.5px;width:12px;height:0.6px;background:#888"></i>
<i style="left:631px;top:140.3px;width:16px;height:0.5px;background:#bbb"></i>
<i style="left:628px;top:144px;width:23px;height:9px;background:#e8e8ea"></i>
<i style="left:628.8px;top:154.3px;width:21.4px;height:1.9px;background:#1a7ab8"></i>
<i style="left:635px;top:157.5px;width:8px;height:0.5px;background:#bbb"></i>
<i style="left:626.8px;top:160.8px;width:25.6px;height:1.8px;background:#4450e0"></i>
<i style="left:628px;top:162.5px;width:23px;height:39px;background:#e6e6e8"></i>
<i style="left:630px;top:165.5px;width:19px;height:1px;background:#555"></i>
<i style="left:631px;top:167.7px;width:17px;height:0.9px;background:#555"></i>
<i style="left:633px;top:170px;width:13px;height:0.6px;background:#999"></i>
<i style="left:628.5px;top:175.5px;width:22px;height:4px;background:#f8f8f8"></i>
<i style="left:635px;top:182px;width:8px;height:0.6px;background:#aaa"></i>
<i style="left:628.8px;top:196.4px;width:21.4px;height:2.6px;background:#2080c0"></i>
<i style="left:606px;top:97.8px;width:18px;height:38.7px;background:#5f5f5f"></i>
<i style="left:596.3px;top:101.7px;width:8.5px;height:31.1px;background:#d9d9d9"></i>
<div style="left:618px;top:117.0px;width:2.5px;height:2.5px;border-radius:50%;border:0.5px solid #fff"></div>
<div style="left:618px;top:120.2px;width:2.5px;height:2.5px;border-radius:50%;border:0.5px solid #fff"></div>
<div style="left:618px;top:123.4px;width:2.5px;height:2.5px;border-radius:50%;border:0.5px solid #fff"></div>
<div style="left:618px;top:126.6px;width:2.5px;height:2.5px;border-radius:50%;border:0.5px solid #fff"></div>
<div style="left:618px;top:129.8px;width:2.5px;height:2.5px;border-radius:50%;border:0.5px solid #fff"></div>
<i style="left:564.4px;top:81.4px;width:20.3px;height:44.1px;background:#fdfdfd"></i>
<i style="left:566px;top:104.6px;width:17px;height:3.2px;background:#58d6b0"></i>
<i style="left:566px;top:115.2px;width:17px;height:2.9px;background:#4a86e0"></i>
<i style="left:566px;top:88px;width:17px;height:0.6px;background:#e8e8ee"></i>
<i style="left:566px;top:90.8px;width:17px;height:0.6px;background:#e8e8ee"></i>
<i style="left:566px;top:93.6px;width:17px;height:0.6px;background:#e8e8ee"></i>
<i style="left:566px;top:96.4px;width:17px;height:0.6px;background:#e8e8ee"></i>
<i style="left:566px;top:99.2px;width:17px;height:0.6px;background:#e8e8ee"></i>
<i style="left:564.4px;top:130.4px;width:20.3px;height:36.8px;background:#fff"></i>
<i style="left:565.5px;top:131.5px;width:1.5px;height:0.5px;background:#999"></i>
<i style="left:581px;top:131.5px;width:2.5px;height:0.5px;background:#999"></i>
<i style="left:565px;top:134px;width:19px;height:21px;background:#e6e6e4"></i>
<svg style="position:absolute;left:565px;top:134px" width="19" height="21" viewBox="0 0 19 21"><path d="M0 6 L8 8 L19 5 M3 0 L6 21 M10 8 L13 21 M0 14 L19 12" stroke="#f8f8f8" stroke-width="0.6" fill="none"/><circle cx="6" cy="4" r="0.9" fill="#d04040"/></svg>
<i style="left:565px;top:155px;width:19px;height:11px;background:#fff;border:0.3px solid #ddd"></i>
<i style="left:566px;top:156.5px;width:5px;height:0.5px;background:#888"></i>
<i style="left:566px;top:158px;width:9px;height:0.4px;background:#bbb"></i>
<i style="left:570px;top:159.9px;width:9px;height:1.6px;background:#e05050;border-radius:0.8px"></i>
<i style="left:570px;top:163.5px;width:9px;height:0.5px;background:#ccc"></i>
<i style="left:569px;top:169.5px;width:1px;height:1px;background:#ccc"></i>
<i style="left:572px;top:169.5px;width:1px;height:1px;background:#555"></i>
<i style="left:575px;top:169.5px;width:1px;height:1px;background:#ccc"></i>
<i style="left:600.2px;top:138.2px;width:23.8px;height:41.7px;background:#4450e0"></i>
<i style="left:601.4px;top:139.4px;width:21.4px;height:39.3px;background:#fff"></i>
<i style="left:601.4px;top:141.5px;width:21.4px;height:24.5px;background:#e8e4d6"></i>
<svg style="position:absolute;left:601.4px;top:141.5px" width="21.4" height="24.5" viewBox="0 0 21.4 24.5"><path d="M0 3 C 5 5, 12 2, 21.4 6 M0 11 C 6 9, 14 12, 21.4 10 M6 0 L9 24 M15 0 C 13 8, 16 16, 14 24" stroke="#c8c4b4" stroke-width="0.5" fill="none"/><path d="M0 16 C 4 14, 8 18, 21.4 15" stroke="#a8b8c8" stroke-width="0.6" fill="none"/></svg>
<i style="left:607px;top:140px;width:10px;height:0.6px;background:#999"></i>
<div style="left:601.2px;top:158.3px;width:19px;height:11.3px;border-radius:50%;border:0.6px solid #222;background:rgba(255,255,255,0.85)"></div>
<i style="left:611.8px;top:161.8px;width:1.4px;height:1.8px;background:#e04030;border-radius:50% 50% 50% 0"></i>
<i style="left:606px;top:165.5px;width:12px;height:0.5px;background:#666"></i>
<i style="left:608px;top:166.8px;width:8px;height:0.5px;background:#888"></i>
<i style="left:604px;top:174.8px;width:5px;height:1.5px;background:#eee"></i>
<i style="left:613px;top:174px;width:10.4px;height:2.5px;background:#e85a1a"></i>
<i style="left:588px;top:107px;width:7px;height:0.6px;background:#d0d0d8"></i>
<i style="left:588px;top:110.86px;width:7px;height:0.6px;background:#d0d0d8"></i>
<i style="left:588px;top:114.71px;width:7px;height:0.6px;background:#d0d0d8"></i>
<i style="left:588px;top:118.57px;width:7px;height:0.6px;background:#d0d0d8"></i>
<i style="left:588px;top:122.43px;width:7px;height:0.6px;background:#d0d0d8"></i>
<i style="left:588px;top:126.29px;width:7px;height:0.6px;background:#d0d0d8"></i>
<i style="left:588px;top:130.14px;width:7px;height:0.6px;background:#d0d0d8"></i>
<i style="left:606.2px;top:79.5px;width:12.8px;height:1.1px;background:#bbb"></i>
<i style="left:606.2px;top:81.3px;width:10.8px;height:0.5px;background:#999"></i>
<i style="left:606.2px;top:83px;width:8.8px;height:0.5px;background:#aaa"></i>
<i style="left:606.2px;top:87.5px;width:12.8px;height:0.5px;background:#999"></i>
<i style="left:606.2px;top:89px;width:6.8px;height:0.4px;background:#aaa"></i>
<i style="left:588.5px;top:110px;width:2px;height:2px;background:#8ab0e0"></i>
<i style="left:588.5px;top:114.5px;width:2px;height:2px;background:#8ab0e0"></i>
<i style="left:588.5px;top:119px;width:2px;height:2px;background:#8ab0e0"></i>
<i style="left:652.6px;top:36px;width:19px;height:288px;background:#fff;border:0.6px solid #aaa"></i>
<svg style="position:absolute;left:652.6px;top:36.2px" width="19.0" height="18.2" viewBox="0 0 100 100" preserveAspectRatio="none"><rect x="0" y="0" width="100" height="100" fill="#fff" stroke="#a8a8a8" stroke-width="0.9" vector-effect="non-scaling-stroke"/><path d="M0 0L100 100M100 0L0 100" stroke="#b4b4b4" stroke-width="0.5" vector-effect="non-scaling-stroke" fill="none"/></svg>
<svg style="position:absolute;left:652.6px;top:61.4px" width="19.0" height="17.5" viewBox="0 0 100 100" preserveAspectRatio="none"><rect x="0" y="0" width="100" height="100" fill="#fff" stroke="#a8a8a8" stroke-width="0.9" vector-effect="non-scaling-stroke"/><path d="M0 0L100 100M100 0L0 100" stroke="#b4b4b4" stroke-width="0.5" vector-effect="non-scaling-stroke" fill="none"/></svg>
<svg style="position:absolute;left:652.6px;top:85.0px" width="19.0" height="16.3" viewBox="0 0 100 100" preserveAspectRatio="none"><rect x="0" y="0" width="100" height="100" fill="#fff" stroke="#a8a8a8" stroke-width="0.9" vector-effect="non-scaling-stroke"/><path d="M0 0L100 100M100 0L0 100" stroke="#b4b4b4" stroke-width="0.5" vector-effect="non-scaling-stroke" fill="none"/></svg>
<svg style="position:absolute;left:652.6px;top:120.2px" width="19.0" height="18.9" viewBox="0 0 100 100" preserveAspectRatio="none"><rect x="0" y="0" width="100" height="100" fill="#fff" stroke="#a8a8a8" stroke-width="0.9" vector-effect="non-scaling-stroke"/><path d="M0 0L100 100M100 0L0 100" stroke="#b4b4b4" stroke-width="0.5" vector-effect="non-scaling-stroke" fill="none"/></svg>
<svg style="position:absolute;left:652.6px;top:156.6px" width="19.0" height="19.6" viewBox="0 0 100 100" preserveAspectRatio="none"><rect x="0" y="0" width="100" height="100" fill="#fff" stroke="#a8a8a8" stroke-width="0.9" vector-effect="non-scaling-stroke"/><path d="M0 0L100 100M100 0L0 100" stroke="#b4b4b4" stroke-width="0.5" vector-effect="non-scaling-stroke" fill="none"/></svg>
<svg style="position:absolute;left:652.6px;top:193.8px" width="19.0" height="18.9" viewBox="0 0 100 100" preserveAspectRatio="none"><rect x="0" y="0" width="100" height="100" fill="#fff" stroke="#a8a8a8" stroke-width="0.9" vector-effect="non-scaling-stroke"/><path d="M0 0L100 100M100 0L0 100" stroke="#b4b4b4" stroke-width="0.5" vector-effect="non-scaling-stroke" fill="none"/></svg>
<svg style="position:absolute;left:652.6px;top:225.3px" width="19.0" height="18.2" viewBox="0 0 100 100" preserveAspectRatio="none"><rect x="0" y="0" width="100" height="100" fill="#fff" stroke="#a8a8a8" stroke-width="0.9" vector-effect="non-scaling-stroke"/><path d="M0 0L100 100M100 0L0 100" stroke="#b4b4b4" stroke-width="0.5" vector-effect="non-scaling-stroke" fill="none"/></svg>
<svg style="position:absolute;left:652.6px;top:256.1px" width="19.0" height="18.3" viewBox="0 0 100 100" preserveAspectRatio="none"><rect x="0" y="0" width="100" height="100" fill="#fff" stroke="#a8a8a8" stroke-width="0.9" vector-effect="non-scaling-stroke"/><path d="M0 0L100 100M100 0L0 100" stroke="#b4b4b4" stroke-width="0.5" vector-effect="non-scaling-stroke" fill="none"/></svg>
<svg style="position:absolute;left:652.6px;top:287.0px" width="19.0" height="19.0" viewBox="0 0 100 100" preserveAspectRatio="none"><rect x="0" y="0" width="100" height="100" fill="#fff" stroke="#a8a8a8" stroke-width="0.9" vector-effect="non-scaling-stroke"/><path d="M0 0L100 100M100 0L0 100" stroke="#b4b4b4" stroke-width="0.5" vector-effect="non-scaling-stroke" fill="none"/></svg>
<i style="left:656px;top:56px;width:12px;height:1px;background:#555"></i>
<i style="left:657px;top:58px;width:10px;height:0.6px;background:#aaa"></i>
<i style="left:658px;top:59.3px;width:8px;height:1.2px;background:#888"></i>
<i style="left:657px;top:80.5px;width:9px;height:3px;background:#ddd;border:0.4px solid #999"></i>
<i style="left:653.5px;top:103px;width:17px;height:0.6px;background:#c0c0c0"></i>
<i style="left:653.5px;top:105.67px;width:17px;height:0.6px;background:#c0c0c0"></i>
<i style="left:653.5px;top:108.33px;width:17px;height:0.6px;background:#c0c0c0"></i>
<i style="left:657px;top:113.5px;width:9px;height:3px;background:#eee;border:0.4px solid #999"></i>
<i style="left:653.5px;top:141px;width:17px;height:0.6px;background:#c0c0c0"></i>
<i style="left:653.5px;top:144px;width:17px;height:0.6px;background:#c0c0c0"></i>
<i style="left:653.5px;top:147px;width:17px;height:0.6px;background:#c0c0c0"></i>
<i style="left:657px;top:152px;width:9px;height:3px;background:#eee;border:0.4px solid #999"></i>
<i style="left:653.5px;top:178px;width:17px;height:0.6px;background:#c0c0c0"></i>
<i style="left:653.5px;top:180.67px;width:17px;height:0.6px;background:#c0c0c0"></i>
<i style="left:653.5px;top:183.33px;width:17px;height:0.6px;background:#c0c0c0"></i>
<i style="left:657px;top:188.5px;width:9px;height:3px;background:#eee;border:0.4px solid #999"></i>
<i style="left:654.5px;top:214px;width:15px;height:0.9px;background:#444"></i>
<i style="left:655.5px;top:216px;width:13px;height:0.5px;background:#aaa"></i>
<i style="left:657.5px;top:218.5px;width:8.5px;height:3px;background:#eee;border:0.4px solid #999"></i>
<i style="left:654.5px;top:245px;width:15px;height:0.9px;background:#444"></i>
<i style="left:655.5px;top:247px;width:13px;height:0.5px;background:#aaa"></i>
<i style="left:657.5px;top:249.5px;width:8.5px;height:3px;background:#eee;border:0.4px solid #999"></i>
<i style="left:654.5px;top:275.5px;width:15px;height:0.9px;background:#444"></i>
<i style="left:655.5px;top:277.5px;width:13px;height:0.5px;background:#aaa"></i>
<i style="left:657.5px;top:280px;width:8.5px;height:3px;background:#eee;border:0.4px solid #999"></i>
<i style="left:654.5px;top:307px;width:15px;height:0.9px;background:#444"></i>
<i style="left:655.5px;top:309px;width:13px;height:0.5px;background:#aaa"></i>
<i style="left:657.5px;top:311.5px;width:8.5px;height:3px;background:#eee;border:0.4px solid #999"></i>
<i style="left:652.6px;top:243.5px;width:19px;height:0.6px;background:#aaa"></i>
<i style="left:652.6px;top:274.4px;width:19px;height:0.6px;background:#aaa"></i>
<i style="left:652.6px;top:306px;width:19px;height:0.6px;background:#aaa"></i>
<i style="left:674px;top:36.2px;width:12.15px;height:0.45px;background:#999"></i>
<i style="left:674px;top:37.65px;width:27px;height:0.45px;background:#d0d0d0"></i>
<i style="left:674px;top:39.1px;width:22.95px;height:0.45px;background:#d0d0d0"></i>
<i style="left:674px;top:40.55px;width:27px;height:0.45px;background:#d0d0d0"></i>
<i style="left:674px;top:61.4px;width:12.15px;height:0.45px;background:#999"></i>
<i style="left:674px;top:62.85px;width:27px;height:0.45px;background:#d0d0d0"></i>
<i style="left:674px;top:64.3px;width:22.95px;height:0.45px;background:#d0d0d0"></i>
<i style="left:674px;top:65.75px;width:27px;height:0.45px;background:#d0d0d0"></i>
<i style="left:674px;top:85.2px;width:12.15px;height:0.45px;background:#999"></i>
<i style="left:674px;top:86.65px;width:27px;height:0.45px;background:#d0d0d0"></i>
<i style="left:674px;top:88.1px;width:22.95px;height:0.45px;background:#d0d0d0"></i>
<i style="left:674px;top:89.55px;width:27px;height:0.45px;background:#d0d0d0"></i>
<i style="left:674px;top:91px;width:22.95px;height:0.45px;background:#d0d0d0"></i>
<i style="left:674px;top:122.3px;width:12.15px;height:0.45px;background:#999"></i>
<i style="left:674px;top:123.75px;width:27px;height:0.45px;background:#d0d0d0"></i>
<i style="left:674px;top:125.2px;width:22.95px;height:0.45px;background:#d0d0d0"></i>
<i style="left:674px;top:126.65px;width:27px;height:0.45px;background:#d0d0d0"></i>
<i style="left:674px;top:158.7px;width:12.15px;height:0.45px;background:#999"></i>
<i style="left:674px;top:160.15px;width:27px;height:0.45px;background:#d0d0d0"></i>
<i style="left:674px;top:161.6px;width:22.95px;height:0.45px;background:#d0d0d0"></i>
<i style="left:674px;top:163.05px;width:27px;height:0.45px;background:#d0d0d0"></i>
<i style="left:674px;top:164.5px;width:22.95px;height:0.45px;background:#d0d0d0"></i>
<i style="left:674px;top:195.9px;width:12.15px;height:0.45px;background:#999"></i>
<i style="left:674px;top:197.35px;width:27px;height:0.45px;background:#d0d0d0"></i>
<i style="left:674px;top:198.8px;width:22.95px;height:0.45px;background:#d0d0d0"></i>
<i style="left:674px;top:200.25px;width:27px;height:0.45px;background:#d0d0d0"></i>
<i style="left:674px;top:226.7px;width:12.15px;height:0.45px;background:#999"></i>
<i style="left:674px;top:228.15px;width:27px;height:0.45px;background:#d0d0d0"></i>
<i style="left:674px;top:229.6px;width:22.95px;height:0.45px;background:#d0d0d0"></i>
<i style="left:674px;top:231.05px;width:27px;height:0.45px;background:#d0d0d0"></i>
<i style="left:674px;top:258.2px;width:12.15px;height:0.45px;background:#999"></i>
<i style="left:674px;top:259.65px;width:27px;height:0.45px;background:#d0d0d0"></i>
<i style="left:674px;top:261.1px;width:22.95px;height:0.45px;background:#d0d0d0"></i>
<i style="left:674px;top:262.55px;width:27px;height:0.45px;background:#d0d0d0"></i>
<i style="left:674px;top:289px;width:12.15px;height:0.45px;background:#999"></i>
<i style="left:674px;top:290.45px;width:27px;height:0.45px;background:#d0d0d0"></i>
<i style="left:674px;top:291.9px;width:22.95px;height:0.45px;background:#d0d0d0"></i>
<i style="left:674px;top:293.35px;width:27px;height:0.45px;background:#d0d0d0"></i>
<i style="left:318.2px;top:203.2px;width:20.4px;height:44.5px;background:#121212;border-radius:2px"></i>
<i style="left:323.2px;top:204.5px;width:10.4px;height:0.8px;background:#555"></i>
<i style="left:346px;top:203.2px;width:20px;height:44.5px;background:#121212;border-radius:2px"></i>
<i style="left:351px;top:204.5px;width:10px;height:0.8px;background:#555"></i>
<i style="left:373.4px;top:203.2px;width:20.4px;height:44.5px;background:#121212;border-radius:2px"></i>
<i style="left:378.4px;top:204.5px;width:10.4px;height:0.8px;background:#555"></i>
<i style="left:401.2px;top:203.2px;width:19.5px;height:44.5px;background:#121212;border-radius:2px"></i>
<i style="left:406.2px;top:204.5px;width:9.5px;height:0.8px;background:#555"></i>
<i style="left:428.5px;top:203.2px;width:20px;height:44.5px;background:#121212;border-radius:2px"></i>
<i style="left:433.5px;top:204.5px;width:10px;height:0.8px;background:#555"></i>
<i style="left:322px;top:225.4px;width:13px;height:0.8px;background:#bbb"></i>
<i style="left:323.5px;top:227.2px;width:10px;height:0.8px;background:#bbb"></i>
<i style="left:323.5px;top:231.5px;width:10px;height:0.5px;background:#777"></i>
<i style="left:321.9px;top:235.2px;width:10.2px;height:3.7px;background:#e65a68;border-radius:2px"></i>
<i style="left:351px;top:208px;width:8px;height:1px;background:#999"></i>
<i style="left:363px;top:206px;width:2px;height:2px;background:#777"></i>
<i style="left:349px;top:215.5px;width:5px;height:1.2px;background:#888"></i>
<i style="left:355px;top:215.5px;width:4px;height:1.2px;background:#888"></i>
<i style="left:360px;top:215.5px;width:4px;height:1.2px;background:#888"></i>
<i style="left:348px;top:220px;width:4px;height:1px;background:#777"></i>
<i style="left:355px;top:220px;width:5px;height:2px;background:#e65a68;border-radius:1px"></i>
<i style="left:348px;top:223.5px;width:4px;height:0.8px;background:#666"></i>
<i style="left:356px;top:223.5px;width:3px;height:1px;background:#2a6a5a"></i>
<i style="left:349px;top:228.5px;width:4px;height:1px;background:#888"></i>
<i style="left:357px;top:226.5px;width:7px;height:1.5px;background:#c04050"></i>
<i style="left:348px;top:233px;width:2px;height:1px;background:#c8b040"></i>
<i style="left:356px;top:232px;width:4px;height:4px;background:#3a6a8a;border-radius:50%"></i>
<i style="left:349px;top:236.5px;width:3px;height:1.5px;background:#666"></i>
<i style="left:356px;top:237px;width:4px;height:1px;background:#666"></i>
<i style="left:379px;top:207.8px;width:6px;height:1.9px;background:#e65a68;border-radius:1px"></i>
<i style="left:375px;top:214.5px;width:5px;height:1.5px;background:#aaa"></i>
<i style="left:377px;top:218px;width:10px;height:1px;background:#c04050"></i>
<i style="left:378px;top:220.5px;width:8px;height:0.8px;background:#c04050"></i>
<i style="left:385px;top:225px;width:2.5px;height:1.5px;background:#e65a68"></i>
<div style="left:375px;top:227.5px;width:4.5px;height:4.5px;border-radius:50%;border:0.7px solid #c04050"></div>
<i style="left:381px;top:229px;width:6px;height:1px;background:#777"></i>
<i style="left:375.5px;top:235px;width:2.5px;height:3px;background:#d8b040"></i>
<i style="left:381px;top:236px;width:6px;height:1px;background:#777"></i>
<div style="left:404px;top:208.2px;width:10px;height:10px;border-radius:50%;background:radial-gradient(#3aa0f0 35%,#1a5aa0 60%,#121212 75%)"></div>
<i style="left:402.5px;top:224.8px;width:2.5px;height:2.2px;background:#e65a68"></i>
<i style="left:406px;top:226px;width:5px;height:1px;background:#888"></i>
<i style="left:405px;top:230.5px;width:6px;height:0.8px;background:#666"></i>
<i style="left:405px;top:234px;width:6px;height:0.8px;background:#666"></i>
<i style="left:415.5px;top:226px;width:1px;height:1px;background:#aaa"></i>
<i style="left:402.1px;top:237.7px;width:14.9px;height:2.8px;background:#e65a68;border-radius:1.5px"></i>
<i style="left:434px;top:208px;width:6px;height:2px;background:#e65a68;border-radius:1px"></i>
<i style="left:430.5px;top:214px;width:3.5px;height:2px;background:#aaa"></i>
<i style="left:431.5px;top:219px;width:0.8px;height:6px;background:#a03040"></i>
<i style="left:434.1px;top:219px;width:0.8px;height:6px;background:#a03040"></i>
<i style="left:436.7px;top:219px;width:0.8px;height:6px;background:#a03040"></i>
<i style="left:439.3px;top:219px;width:0.8px;height:6px;background:#a03040"></i>
<i style="left:441.9px;top:219px;width:0.8px;height:6px;background:#a03040"></i>
<i style="left:444.5px;top:219px;width:0.8px;height:6px;background:#a03040"></i>
<i style="left:430.5px;top:229px;width:13.5px;height:1px;background:#888"></i>
<i style="left:432px;top:233px;width:13px;height:8px;background:#2e2828"></i>
<i style="left:458.7px;top:204.3px;width:16.7px;height:38.1px;background:#fcfaf4"></i>
<i style="left:462px;top:212.8px;width:10px;height:0.8px;background:#999"></i>
<i style="left:461px;top:222px;width:12px;height:7px;background:#9aae5c;border-radius:3.5px"></i>
<div style="left:464.3px;top:222.3px;font-size:6px;line-height:1;color:#f4f4e4;white-space:nowrap;font-weight:bold;letter-spacing:-0.5px">18</div>
<i style="left:460.5px;top:237.3px;width:14.5px;height:2.7px;background:#3a2a1e;border-radius:1px"></i>
<div style="left:457.29999999999995px;top:201px;width:7.4px;height:4.3px;border-radius:50%;border:0.5px solid #555"></div>
<i style="left:438.2px;top:260.6px;width:16.8px;height:36.2px;background:#fbf8f1"></i>
<i style="left:440px;top:262.5px;width:2px;height:0.7px;background:#bbb"></i>
<i style="left:451px;top:262.5px;width:2.5px;height:0.7px;background:#bbb"></i>
<i style="left:440px;top:264.6px;width:5px;height:0.7px;background:#888"></i>
<i style="left:441.5px;top:268.2px;width:10px;height:1px;background:#8a7a70"></i>
<i style="left:442.5px;top:270.3px;width:8px;height:0.5px;background:#c8bcb0"></i>
<div style="left:439.20000000000005px;top:272.6px;width:14px;height:14px;border-radius:50%;background:radial-gradient(#1a2a08 0,#3a6a1a 18%,#90c068 42%,#d8e8c0 62%,rgba(251,248,241,0) 72%)"></div>
<i style="left:439px;top:287.2px;width:7.8px;height:2.2px;background:#f0a860;border-radius:1px"></i>
<i style="left:447.5px;top:287.5px;width:5.5px;height:0.7px;background:#999"></i>
<i style="left:440px;top:290px;width:9px;height:0.5px;background:#bbb"></i>
<i style="left:438.6px;top:293.1px;width:16px;height:2.7px;background:#3e2a1e;border-radius:1.3px"></i>
<i style="left:461.1px;top:260.6px;width:16.9px;height:35.4px;background:#fbf8f1"></i>
<i style="left:462.5px;top:262.5px;width:2px;height:0.7px;background:#bbb"></i>
<i style="left:474px;top:262.5px;width:2.5px;height:0.7px;background:#bbb"></i>
<i style="left:462.5px;top:264.3px;width:6.5px;height:0.7px;background:#777"></i>
<i style="left:474px;top:264.3px;width:2.5px;height:0.7px;background:#bbb"></i>
<i style="left:463px;top:268px;width:13px;height:0.8px;background:#555"></i>
<i style="left:465px;top:270.3px;width:10px;height:0.5px;background:#c8bcb0"></i>
<i style="left:461.5px;top:274.1px;width:16.3px;height:12.3px;background:#fff;border:0.5px solid #b8b0a8"></i>
<i style="left:463px;top:277.8px;width:12px;height:1.8px;background:#e88a60"></i>
<i style="left:465px;top:288px;width:9px;height:1.7px;background:#98b070;border-radius:1px"></i>
<i style="left:461.5px;top:291.9px;width:16.1px;height:3.1px;background:#3e2a1e;border-radius:1.3px"></i>
<i style="left:523.9px;top:203.1px;width:51.1px;height:42.7px;background:#3a52e6"></i>
<div style="left:524.5px;top:203.7px;width:23.9px;height:41.5px;background:radial-gradient(ellipse at 50% 40%,#2366b8,#1a4c9c 70%,#173f8c)"></div>
<div style="left:550.1px;top:203.7px;width:24.3px;height:41.5px;background:linear-gradient(180deg,#1b56a6,#1a4a98)"></div>
<svg style="position:absolute;left:533.5px;top:211.1px" width="6" height="5" viewBox="0 0 6 5"><circle cx="3.2" cy="0.9" r="0.8" fill="#fff"/><path d="M0.3 3.6 L2.6 2.2 L3.2 1.8 L3.8 2.3 L5.7 3.6 L3.4 2.9 L2.2 4.8 L2.5 2.9Z" fill="#fff"/></svg>
<i style="left:529.55px;top:217.6px;width:14px;height:1px;background:#d8e4ff"></i>
<i style="left:531.55px;top:226.1px;width:10px;height:0.5px;background:#7aa0e0"></i>
<i style="left:532.55px;top:229.1px;width:8px;height:0.4px;background:#5a88d0"></i>
<div style="left:525.3px;top:228.3px;width:21.7px;height:8.4px;border-radius:50%;border:1px solid #b8e04a"></div>
<i style="left:527.9px;top:236.7px;width:17.3px;height:2.8px;background:#f4f7ff"></i>
<i style="left:534.55px;top:241.9px;width:4px;height:0.5px;background:#9ab8e8"></i>
<i style="left:552.6px;top:212.2px;width:17.4px;height:19.6px;background:#fbfbfb"></i>
<div style="left:555.1px;top:218.2px;width:4px;height:4px;border-radius:50%;background:#e86a40"></div>
<div style="left:563.5px;top:218.2px;width:4px;height:4px;border-radius:50%;background:#f4c040"></div>
<i style="left:561px;top:215.2px;width:0.6px;height:9px;background:#c8a070"></i>
<i style="left:555.6px;top:228.8px;width:11.4px;height:0.6px;background:#d8c8c0"></i>
<i style="left:553.7px;top:236.7px;width:16.8px;height:2.8px;background:#f4f7ff"></i>
<i style="left:560.1px;top:241.9px;width:4px;height:0.5px;background:#9ab8e8"></i>
<div style="left:523px;top:197px;width:15px;height:5.7px;border-radius:50%;border:0.5px solid #444"></div>
<i style="left:575.7px;top:203px;width:23.8px;height:48.7px;background:#fff"></i>
<i style="left:575.7px;top:203px;width:23.8px;height:27.8px;background:#2cc4bc"></i>
<i style="left:577.8px;top:212.4px;width:19.6px;height:19.1px;background:#fdfdfd;border-radius:2px"></i>
<i style="left:580px;top:214px;width:15px;height:0.6px;background:#ccc"></i>
<i style="left:580.5px;top:217.5px;width:2.5px;height:4px;background:#fff;border:0.4px solid #333"></i>
<i style="left:586.5px;top:218.5px;width:0.7px;height:2.3px;background:#333"></i>
<i style="left:591.5px;top:218px;width:2.5px;height:3.5px;background:#222;border-radius:1px"></i>
<i style="left:580px;top:226px;width:15px;height:0.8px;background:#e0eef0"></i>
<i style="left:583px;top:228.5px;width:9px;height:0.5px;background:#cce"></i>
<div style="left:579px;top:234px;width:8px;height:10px;border-radius:50% 50% 40% 40%;background:radial-gradient(#555,#aaa 50%,#eee 75%,#fff)"></div>
<div style="left:588.5px;top:234px;width:8px;height:10px;border-radius:50% 50% 40% 40%;background:radial-gradient(#555,#aaa 50%,#eee 75%,#fff)"></div>
<i style="left:575.5px;top:250.6px;width:24px;height:1px;background:#2cc4bc"></i>
<i style="left:600px;top:204px;width:24.8px;height:46px;background:#fff"></i>
<i style="left:600px;top:204px;width:24.8px;height:29px;background:#2cc4bc"></i>
<i style="left:602.3px;top:216.7px;width:20.9px;height:26.3px;background:#fdfdfd;border-radius:2.5px"></i>
<div style="left:608.3px;top:218.5px;width:8px;height:8px;border-radius:50%;background:#b8c8dc;border:0.5px solid #9ab"></div>
<i style="left:608px;top:228.5px;width:9px;height:0.5px;background:#cde"></i>
<i style="left:610px;top:230.5px;width:5px;height:1px;background:#9cd4c8"></i>
<i style="left:604px;top:234.8px;width:8px;height:0.5px;background:#ddd"></i>
<i style="left:614px;top:234px;width:7px;height:1.6px;background:#a8c0e0"></i>
<i style="left:614px;top:237px;width:7px;height:1.6px;background:#a8c0e0"></i>
<div style="left:603px;top:240px;width:9px;height:7px;border-radius:50%;background:radial-gradient(#555,#aaa 50%,#fff 75%)"></div>
<i style="left:627.1px;top:203px;width:24.7px;height:33px;background:#1a7a70"></i>
<i style="left:629px;top:216px;width:21px;height:20px;background:#e8eef6;border-radius:2.5px 2.5px 0 0"></i>
<i style="left:629px;top:216px;width:21px;height:7px;background:linear-gradient(180deg,#8a98a8,#c8d4e4);border-radius:2.5px 2.5px 0 0"></i>
<i style="left:631px;top:225.5px;width:17px;height:2px;background:#f8f4d8"></i>
<i style="left:632px;top:230.5px;width:15px;height:2px;background:#a8c0e0;border-radius:1px"></i>
<i style="left:627.1px;top:236px;width:24.7px;height:15px;background:#fafafa"></i>
<i style="left:627.5px;top:236px;width:23.9px;height:0.3px;background:#e4e4e4"></i>
<i style="left:627.5px;top:239.6px;width:23.9px;height:0.3px;background:#e4e4e4"></i>
<i style="left:627.5px;top:243.2px;width:23.9px;height:0.3px;background:#e4e4e4"></i>
<i style="left:627.5px;top:246.8px;width:23.9px;height:0.3px;background:#e4e4e4"></i>
<i style="left:633.3px;top:236px;width:0.3px;height:15px;background:#e4e4e4"></i>
<i style="left:639.5px;top:236px;width:0.3px;height:15px;background:#e4e4e4"></i>
<i style="left:645.7px;top:236px;width:0.3px;height:15px;background:#e4e4e4"></i>
<i style="left:629.5px;top:237.3px;width:1px;height:1px;background:#999"></i>
<i style="left:635.7px;top:237.3px;width:1px;height:1px;background:#999"></i>
<i style="left:641.9px;top:237.3px;width:1px;height:1px;background:#999"></i>
<i style="left:648.1px;top:237.3px;width:1px;height:1px;background:#999"></i>
<i style="left:629.5px;top:240.9px;width:1px;height:1px;background:#999"></i>
<i style="left:635.7px;top:240.9px;width:1px;height:1px;background:#999"></i>
<i style="left:641.9px;top:240.9px;width:1px;height:1px;background:#999"></i>
<i style="left:648.1px;top:240.9px;width:1px;height:1px;background:#999"></i>
<i style="left:629.5px;top:244.5px;width:1px;height:1px;background:#999"></i>
<i style="left:635.7px;top:244.5px;width:1px;height:1px;background:#999"></i>
<i style="left:641.9px;top:244.5px;width:1px;height:1px;background:#999"></i>
<i style="left:648.1px;top:244.5px;width:1px;height:1px;background:#999"></i>
<i style="left:646px;top:248px;width:5px;height:2.5px;background:#ddd"></i>
<i style="left:579px;top:255px;width:21.5px;height:46px;background:#fff"></i>
<i style="left:579px;top:255px;width:21.5px;height:25.8px;background:#2cc0b8"></i>
<i style="left:581px;top:266px;width:17px;height:24.2px;background:#fafcff;border-radius:2px"></i>
<i style="left:582.5px;top:269.5px;width:14px;height:2px;background:#9ab4e6;border-radius:0.5px"></i>
<i style="left:582.5px;top:273.3px;width:14px;height:2px;background:#9ab4e6;border-radius:0.5px"></i>
<i style="left:582.5px;top:277px;width:14px;height:2px;background:#9ab4e6;border-radius:0.5px"></i>
<i style="left:583px;top:284px;width:12px;height:6px;background:radial-gradient(#666,#bbb 60%,#fafcff 72%)"></i>
<i style="left:581px;top:298px;width:1.5px;height:1.5px;background:#ccc"></i>
<i style="left:586px;top:298px;width:1.5px;height:1.5px;background:#ccc"></i>
<i style="left:591px;top:298px;width:1.5px;height:1.5px;background:#ccc"></i>
<i style="left:596px;top:298px;width:1.5px;height:1.5px;background:#ccc"></i>
<i style="left:603px;top:253.5px;width:49.5px;height:49.3px;background:#fff;border:0.4px solid #e0e0e0"></i>
<i style="left:607.5px;top:256px;width:2.5px;height:0.6px;background:#999"></i>
<i style="left:623px;top:256px;width:3px;height:0.6px;background:#999"></i>
<i style="left:612px;top:258px;width:5px;height:0.6px;background:#aaa"></i>
<i style="left:622px;top:260px;width:3px;height:1px;background:#ccc"></i>
<i style="left:608px;top:263px;width:7px;height:1.2px;background:#666"></i>
<i style="left:608px;top:265.6px;width:18px;height:0.6px;background:#ddd"></i>
<i style="left:608px;top:269px;width:4px;height:0.7px;background:#a8b8d8"></i>
<i style="left:608px;top:272px;width:6px;height:0.7px;background:#a8b8d8"></i>
<i style="left:608px;top:275px;width:8px;height:0.7px;background:#a8b8d8"></i>
<i style="left:608px;top:278.5px;width:4px;height:0.7px;background:#a8b8d8"></i>
<i style="left:608px;top:282px;width:6px;height:0.7px;background:#a8b8d8"></i>
<i style="left:608px;top:285px;width:8px;height:0.7px;background:#a8b8d8"></i>
<div style="left:605.5px;top:275.5px;width:8px;height:6px;border-radius:50%;border:0.4px solid #555"></div>
<i style="left:630px;top:254.5px;width:21.4px;height:47px;background:#fbfbfb"></i>
<i style="left:631px;top:257px;width:2px;height:0.6px;background:#aaa"></i>
<i style="left:647px;top:257px;width:3px;height:1px;background:#888"></i>
<i style="left:637px;top:259.3px;width:7px;height:0.6px;background:#999"></i>
<i style="left:631px;top:261.5px;width:4px;height:0.5px;background:#bbb"></i>
<i style="left:637px;top:261.5px;width:4px;height:0.5px;background:#888"></i>
<i style="left:645px;top:261.5px;width:4px;height:0.5px;background:#bbb"></i>
<i style="left:631.2px;top:266px;width:1.3px;height:1.5px;background:#ddd"></i>
<i style="left:634px;top:266.4px;width:10px;height:0.6px;background:#aaa"></i>
<i style="left:649px;top:266.4px;width:1.5px;height:1px;background:#c8d0e8"></i>
<i style="left:631.2px;top:269.3px;width:1.3px;height:1.5px;background:#ddd"></i>
<i style="left:634px;top:269.7px;width:8px;height:0.6px;background:#aaa"></i>
<i style="left:649px;top:269.7px;width:1.5px;height:1px;background:#c8d0e8"></i>
<i style="left:631.2px;top:272.6px;width:1.3px;height:1.5px;background:#ddd"></i>
<i style="left:634px;top:273px;width:6px;height:0.6px;background:#aaa"></i>
<i style="left:649px;top:273px;width:1.5px;height:1px;background:#c8d0e8"></i>
<i style="left:631.2px;top:275.9px;width:1.3px;height:1.5px;background:#ddd"></i>
<i style="left:634px;top:276.3px;width:10px;height:0.6px;background:#aaa"></i>
<i style="left:649px;top:276.3px;width:1.5px;height:1px;background:#c8d0e8"></i>
<i style="left:631.2px;top:279.2px;width:1.3px;height:1.5px;background:#ddd"></i>
<i style="left:634px;top:279.6px;width:8px;height:0.6px;background:#aaa"></i>
<i style="left:649px;top:279.6px;width:1.5px;height:1px;background:#c8d0e8"></i>
<i style="left:631.2px;top:282.5px;width:1.3px;height:1.5px;background:#ddd"></i>
<i style="left:634px;top:282.9px;width:6px;height:0.6px;background:#aaa"></i>
<i style="left:649px;top:282.9px;width:1.5px;height:1px;background:#c8d0e8"></i>
<i style="left:631.2px;top:285.8px;width:1.3px;height:1.5px;background:#ddd"></i>
<i style="left:634px;top:286.2px;width:10px;height:0.6px;background:#aaa"></i>
<i style="left:649px;top:286.2px;width:1.5px;height:1px;background:#c8d0e8"></i>
<i style="left:631.2px;top:289.1px;width:1.3px;height:1.5px;background:#ddd"></i>
<i style="left:634px;top:289.5px;width:8px;height:0.6px;background:#aaa"></i>
<i style="left:649px;top:289.5px;width:1.5px;height:1px;background:#c8d0e8"></i>
<i style="left:631.2px;top:292.4px;width:1.3px;height:1.5px;background:#ddd"></i>
<i style="left:634px;top:292.8px;width:6px;height:0.6px;background:#aaa"></i>
<i style="left:649px;top:292.8px;width:1.5px;height:1px;background:#c8d0e8"></i>
<i style="left:631.2px;top:295.5px;width:2px;height:1.8px;background:#111"></i>
<i style="left:631.2px;top:298.5px;width:2px;height:1.8px;background:#111"></i>
<i style="left:634.5px;top:296px;width:5.5px;height:0.6px;background:#999"></i>
<i style="left:634.5px;top:299px;width:8.5px;height:0.6px;background:#999"></i>
<div style="left:633.5px;top:276.5px;width:7px;height:5.5px;border-radius:50%;border:0.4px solid #555"></div>
<svg style="position:absolute;left:602px;top:243px" width="24" height="10" viewBox="0 0 24 10"><path d="M2 9 C 5 2, 17 1, 21 9" stroke="#333" stroke-width="0.7" fill="none"/></svg>
<i style="left:531.5px;top:248.5px;width:12.5px;height:0.8px;background:#444"></i>
<i style="left:531.5px;top:250.2px;width:10.5px;height:0.7px;background:#444"></i>
<i style="left:531.5px;top:252px;width:7.5px;height:0.5px;background:#888"></i>
<i style="left:531.5px;top:253.6px;width:6.5px;height:0.5px;background:#999"></i>
<i style="left:531.5px;top:256.2px;width:10.5px;height:0.8px;background:#555"></i>
<i style="left:531.5px;top:258px;width:6.5px;height:0.5px;background:#999"></i>
<i style="left:564.3px;top:261.9px;width:8.9px;height:2.1px;background:#ddd"></i>
<i style="left:565.5px;top:262.6px;width:6.5px;height:0.7px;background:#888"></i>
<i style="left:568.2px;top:264px;width:1px;height:11.5px;background:#111"></i>
<i style="left:565.5px;top:268.5px;width:6.5px;height:1px;background:#fff;border:0.3px solid #aaa"></i>
<i style="left:565.5px;top:272px;width:6.5px;height:1px;background:#fff;border:0.3px solid #aaa"></i>
<i style="left:565.5px;top:276.5px;width:7.5px;height:0.7px;background:#bbb"></i>
<i style="left:563.2px;top:280.2px;width:4.7px;height:3.5px;background:#36b6ae;border-radius:1.5px"></i>
<i style="left:568px;top:280.5px;width:7px;height:3px;background:#c8ddf2"></i>
<i style="left:601.3px;top:302.4px;width:50.4px;height:42.4px;background:#4450e4"></i>
<i style="left:602.8px;top:303.9px;width:22.4px;height:39.4px;background:#fff"></i>
<i style="left:628px;top:303.9px;width:22.2px;height:39.4px;background:#fff"></i>
<i style="left:603.5px;top:340.3px;width:21px;height:2.5px;background:#1c5a9c"></i>
<i style="left:628.5px;top:339.6px;width:21.2px;height:3.4px;background:#2a6ae0"></i>
<i style="left:628px;top:303.9px;width:22.2px;height:4.1px;background:#e8f0fc"></i>
<i style="left:628px;top:306px;width:2px;height:4px;background:#2a6ae0"></i>
<i style="left:648.2px;top:306px;width:2px;height:4px;background:#2a6ae0"></i>
<i style="left:605px;top:306px;width:18px;height:0.6px;background:#d4d4dc"></i>
<i style="left:605px;top:309px;width:18px;height:0.6px;background:#d4d4dc"></i>
<i style="left:605px;top:312px;width:18px;height:0.6px;background:#d4d4dc"></i>
<i style="left:605px;top:315px;width:18px;height:0.6px;background:#d4d4dc"></i>
<i style="left:605px;top:318px;width:18px;height:0.6px;background:#d4d4dc"></i>
<i style="left:605px;top:321px;width:18px;height:0.6px;background:#d4d4dc"></i>
<i style="left:605px;top:324px;width:18px;height:0.6px;background:#d4d4dc"></i>
<i style="left:605px;top:327px;width:18px;height:0.6px;background:#d4d4dc"></i>
<i style="left:605px;top:330px;width:18px;height:0.6px;background:#d4d4dc"></i>
<i style="left:605px;top:333px;width:18px;height:0.6px;background:#d4d4dc"></i>
<i style="left:607px;top:318px;width:4px;height:2px;background:#ddd"></i>
<i style="left:613px;top:318px;width:6px;height:2px;background:#ddd"></i>
<i style="left:604.5px;top:332.5px;width:1.5px;height:1.5px;background:#2a6ae0"></i>
<i style="left:631px;top:312px;width:16px;height:0.6px;background:#d8d8e0"></i>
<i style="left:631px;top:314.67px;width:16px;height:0.6px;background:#d8d8e0"></i>
<i style="left:631px;top:317.33px;width:16px;height:0.6px;background:#d8d8e0"></i>
<i style="left:631px;top:320px;width:16px;height:0.6px;background:#d8d8e0"></i>
<i style="left:631px;top:322.67px;width:16px;height:0.6px;background:#d8d8e0"></i>
<i style="left:631px;top:325.33px;width:16px;height:0.6px;background:#d8d8e0"></i>
<i style="left:631px;top:328px;width:16px;height:0.6px;background:#d8d8e0"></i>
<i style="left:631px;top:330.67px;width:16px;height:0.6px;background:#d8d8e0"></i>
<i style="left:631px;top:333.33px;width:16px;height:0.6px;background:#d8d8e0"></i>
<div style="left:636px;top:310.5px;width:2.4px;height:2px;border-radius:50%;background:#e8c040"></div>
<div style="left:630.5px;top:333px;width:2.4px;height:2.4px;border-radius:50%;border:0.4px solid #888"></div>
<i style="left:605.8px;top:346.6px;width:16.6px;height:4.2px;background:#d4d4d4"></i>
<i style="left:608px;top:352.5px;width:5px;height:0.7px;background:#666"></i>
<i style="left:608px;top:354.2px;width:12px;height:0.6px;background:#999"></i>
<i style="left:609px;top:356px;width:2px;height:2px;background:#888"></i>
<i style="left:633.9px;top:352.4px;width:7.32px;height:1.5px;background:#6a6a6a"></i>
<i style="left:642.01px;top:352.4px;width:2.39px;height:1.5px;background:#6a6a6a"></i>
<i style="left:645.2px;top:352.4px;width:9.98px;height:1.5px;background:#6a6a6a"></i>
<i style="left:655.98px;top:352.4px;width:10.11px;height:1.5px;background:#6a6a6a"></i>
<i style="left:666.88px;top:352.4px;width:1.6px;height:1.5px;background:#6a6a6a"></i>
<i style="left:633.9px;top:355.9px;width:7.32px;height:1.5px;background:#6a6a6a"></i>
<i style="left:642.01px;top:355.9px;width:2.39px;height:1.5px;background:#6a6a6a"></i>
<i style="left:645.2px;top:355.9px;width:3.99px;height:1.5px;background:#6a6a6a"></i>
<i style="left:649.99px;top:355.9px;width:9.98px;height:1.5px;background:#6a6a6a"></i>
<i style="left:660.77px;top:355.9px;width:10.11px;height:1.5px;background:#6a6a6a"></i>
<i style="left:671.67px;top:355.9px;width:1.6px;height:1.5px;background:#6a6a6a"></i>
<i style="left:633.9px;top:359px;width:7.32px;height:1.5px;background:#6a6a6a"></i>
<i style="left:642.01px;top:359px;width:2.39px;height:1.5px;background:#6a6a6a"></i>
<i style="left:645.2px;top:359px;width:9.31px;height:1.5px;background:#6a6a6a"></i>
<i style="left:655.31px;top:359px;width:9.31px;height:1.5px;background:#6a6a6a"></i>
<i style="left:665.42px;top:359px;width:12.63px;height:1.5px;background:#6a6a6a"></i>
<i style="left:678.85px;top:359px;width:1.6px;height:1.5px;background:#6a6a6a"></i>
<i style="left:679.3px;top:307.7px;width:17.3px;height:37.8px;background:#f3f5fd;border:0.4px solid #e4e8f4"></i>
<div style="left:680.9px;top:314.9px;width:14px;height:14px;border-radius:50%;background:radial-gradient(#6a86ea 0,#5a78e4 55%,#9cb0ee 72%,rgba(240,242,252,0) 100%)"></div>
<i style="left:681px;top:310px;width:5px;height:0.8px;background:#aab"></i>
<i style="left:684px;top:312.5px;width:8px;height:0.7px;background:#99a"></i>
<i style="left:681.5px;top:330px;width:2.5px;height:2px;background:#8a9ab0"></i>
<i style="left:685px;top:330.5px;width:4px;height:0.7px;background:#bbb"></i>
<i style="left:681px;top:334px;width:3px;height:1.5px;background:#6a7ab8"></i>
<i style="left:688px;top:334px;width:3px;height:1.5px;background:#222"></i>
<i style="left:680.2px;top:337.6px;width:15.5px;height:3.7px;background:#1a2026;border-radius:0.5px"></i>
<i style="left:680.2px;top:342px;width:15.5px;height:3px;background:#4a68d8;border-radius:1.5px"></i>
<i style="left:701.3px;top:308px;width:17.4px;height:38px;background:#f9faff;border:0.4px solid #eceff8"></i>
<i style="left:703px;top:310.5px;width:8px;height:0.7px;background:#aab"></i>
<div style="left:702.5px;top:312.5px;width:2.6px;height:2.6px;border-radius:50%;background:#8a90a8"></div>
<i style="left:706px;top:313px;width:7px;height:0.8px;background:#ccd"></i>
<i style="left:715px;top:313px;width:3px;height:1.5px;background:#6a78c8"></i>
<i style="left:703px;top:317.1px;width:15px;height:3.9px;background:#1c1c1c;border-radius:2px"></i>
<div style="left:701.8px;top:316.6px;width:4.6px;height:4.6px;border-radius:50%;background:#f0c030"></div>
<i style="left:702.5px;top:322.5px;width:2px;height:1.5px;background:#333"></i>
<i style="left:715px;top:322.5px;width:3px;height:1.5px;background:#8890b0"></i>
<i style="left:702.5px;top:325.5px;width:2px;height:1.5px;background:#3a4a70"></i>
<i style="left:702.5px;top:329px;width:15px;height:0.6px;background:#d4d8e6"></i>
<i style="left:702.5px;top:330.83px;width:15px;height:0.6px;background:#d4d8e6"></i>
<i style="left:702.5px;top:332.67px;width:15px;height:0.6px;background:#d4d8e6"></i>
<i style="left:702.5px;top:334.5px;width:15px;height:0.6px;background:#d4d8e6"></i>
<i style="left:702.5px;top:336.33px;width:15px;height:0.6px;background:#d4d8e6"></i>
<i style="left:702.5px;top:338.17px;width:15px;height:0.6px;background:#d4d8e6"></i>
<i style="left:702.2px;top:343.2px;width:15.6px;height:2.8px;background:#4a68d8;border-radius:1.5px"></i>
<i style="left:722.2px;top:308px;width:17.8px;height:38.6px;background:#4a6cd8"></i>
<div style="left:729.4000000000001px;top:312px;width:3px;height:3px;border-radius:50%;background:#c8d4f8"></div>
<i style="left:725px;top:316.5px;width:12px;height:0.7px;background:#c0ccf4"></i>
<i style="left:726px;top:318.5px;width:10px;height:0.5px;background:#a8b8ee"></i>
<i style="left:726px;top:322px;width:2px;height:1.6px;background:#c0ccf4"></i>
<i style="left:729px;top:322.5px;width:6px;height:0.6px;background:#a8b8ee"></i>
<i style="left:726px;top:324.6px;width:2px;height:1.6px;background:#c0ccf4"></i>
<i style="left:729px;top:325.1px;width:6px;height:0.6px;background:#a8b8ee"></i>
<i style="left:726px;top:327.2px;width:2px;height:1.6px;background:#c0ccf4"></i>
<i style="left:729px;top:327.7px;width:6px;height:0.6px;background:#a8b8ee"></i>
<i style="left:723.5px;top:330.5px;width:15px;height:0.5px;background:#8aa0e6"></i>
<i style="left:723.5px;top:333px;width:6.5px;height:4px;background:#5a7ade"></i>
<i style="left:732px;top:333px;width:6.5px;height:4px;background:#5a7ade"></i>
<i style="left:723.5px;top:340px;width:15px;height:2px;background:#f4f6ff"></i>
<i style="left:743.1px;top:308px;width:17.9px;height:38.6px;background:#fafbff"></i>
<i style="left:743.1px;top:308px;width:17.9px;height:8.7px;background:#2c3c84"></i>
<i style="left:760.2px;top:308px;width:0.8px;height:38.6px;background:#4a6cd8"></i>
<div style="left:750.5999999999999px;top:311px;width:2.5px;height:2.5px;border-radius:50%;background:#8898c8"></div>
<i style="left:744.5px;top:318.5px;width:6.5px;height:0.7px;background:#99a"></i>
<i style="left:744.5px;top:321px;width:12.5px;height:0.7px;background:#666"></i>
<i style="left:744.5px;top:323px;width:8.5px;height:0.6px;background:#aaa"></i>
<i style="left:744.5px;top:327px;width:9.5px;height:0.6px;background:#ccc"></i>
<i style="left:744.5px;top:330.5px;width:2px;height:1.5px;background:#555"></i>
<i style="left:747.5px;top:331px;width:7.5px;height:0.6px;background:#bbb"></i>
<i style="left:744.5px;top:333.1px;width:2px;height:1.5px;background:#555"></i>
<i style="left:747.5px;top:333.6px;width:7.5px;height:0.6px;background:#bbb"></i>
<i style="left:744.5px;top:335.7px;width:2px;height:1.5px;background:#aaa"></i>
<i style="left:747.5px;top:336.2px;width:7.5px;height:0.6px;background:#bbb"></i>
<i style="left:744.5px;top:338.3px;width:2px;height:1.5px;background:#aaa"></i>
<i style="left:747.5px;top:338.8px;width:7.5px;height:0.6px;background:#bbb"></i>
<i style="left:744.5px;top:340.9px;width:2px;height:1.5px;background:#aaa"></i>
<i style="left:747.5px;top:341.4px;width:7.5px;height:0.6px;background:#bbb"></i>
<i style="left:763.6px;top:308px;width:17.4px;height:36.7px;background:#fafbff;border:0.4px solid #eef0f8"></i>
<i style="left:765px;top:310.5px;width:2px;height:0.7px;background:#aaa"></i>
<i style="left:770px;top:310.5px;width:7px;height:0.7px;background:#99a"></i>
<i style="left:765px;top:313.5px;width:9px;height:0.8px;background:#99a"></i>
<i style="left:778px;top:313.5px;width:2px;height:1.5px;background:#445"></i>
<i style="left:765px;top:317px;width:14px;height:0.6px;background:#dde0ea"></i>
<i style="left:765px;top:320.29px;width:14px;height:0.6px;background:#dde0ea"></i>
<i style="left:765px;top:323.57px;width:14px;height:0.6px;background:#dde0ea"></i>
<i style="left:765px;top:326.86px;width:14px;height:0.6px;background:#dde0ea"></i>
<i style="left:765px;top:330.14px;width:14px;height:0.6px;background:#dde0ea"></i>
<i style="left:765px;top:333.43px;width:14px;height:0.6px;background:#dde0ea"></i>
<i style="left:765px;top:336.71px;width:14px;height:0.6px;background:#dde0ea"></i>
<i style="left:765.5px;top:332.5px;width:2px;height:2px;background:#c8d0f0"></i>
<i style="left:764.5px;top:342.8px;width:15.7px;height:1.9px;background:#4a68d8"></i>
<i style="left:784.9px;top:308px;width:16.6px;height:73.8px;background:#fafbfd;border:0.4px solid #e8eaf2"></i>
<i style="left:786.5px;top:311px;width:13.5px;height:0.6px;background:#d8dbe6"></i>
<i style="left:786.5px;top:313.78px;width:13.5px;height:0.6px;background:#d8dbe6"></i>
<i style="left:786.5px;top:316.56px;width:13.5px;height:0.6px;background:#d8dbe6"></i>
<i style="left:786.5px;top:319.33px;width:13.5px;height:0.6px;background:#d8dbe6"></i>
<i style="left:786.5px;top:322.11px;width:13.5px;height:0.6px;background:#d8dbe6"></i>
<i style="left:786.5px;top:324.89px;width:13.5px;height:0.6px;background:#d8dbe6"></i>
<i style="left:786.5px;top:327.67px;width:13.5px;height:0.6px;background:#d8dbe6"></i>
<i style="left:786.5px;top:330.44px;width:13.5px;height:0.6px;background:#d8dbe6"></i>
<i style="left:786.5px;top:333.22px;width:13.5px;height:0.6px;background:#d8dbe6"></i>
<i style="left:786.5px;top:324px;width:13.5px;height:6px;background:#eef0f6"></i>
<i style="left:786px;top:338.4px;width:14.5px;height:2.4px;background:#4a68d8"></i>
<i style="left:786.5px;top:344px;width:13.5px;height:0.6px;background:#d8dbe6"></i>
<i style="left:786.5px;top:346.77px;width:13.5px;height:0.6px;background:#d8dbe6"></i>
<i style="left:786.5px;top:349.54px;width:13.5px;height:0.6px;background:#d8dbe6"></i>
<i style="left:786.5px;top:352.31px;width:13.5px;height:0.6px;background:#d8dbe6"></i>
<i style="left:786.5px;top:355.08px;width:13.5px;height:0.6px;background:#d8dbe6"></i>
<i style="left:786.5px;top:357.85px;width:13.5px;height:0.6px;background:#d8dbe6"></i>
<i style="left:786.5px;top:360.62px;width:13.5px;height:0.6px;background:#d8dbe6"></i>
<i style="left:786.5px;top:363.38px;width:13.5px;height:0.6px;background:#d8dbe6"></i>
<i style="left:786.5px;top:366.15px;width:13.5px;height:0.6px;background:#d8dbe6"></i>
<i style="left:786.5px;top:368.92px;width:13.5px;height:0.6px;background:#d8dbe6"></i>
<i style="left:786.5px;top:371.69px;width:13.5px;height:0.6px;background:#d8dbe6"></i>
<i style="left:786.5px;top:374.46px;width:13.5px;height:0.6px;background:#d8dbe6"></i>
<i style="left:786.5px;top:377.23px;width:13.5px;height:0.6px;background:#d8dbe6"></i>
<i style="left:786.5px;top:368px;width:13.5px;height:12px;background:#eef0f4"></i>
<i style="left:716.3px;top:83px;width:1.5px;height:0.5px;background:#bbb"></i>
<i style="left:732.2px;top:83px;width:2px;height:0.5px;background:#999"></i>
<i style="left:716.3px;top:84.8px;width:1.5px;height:0.5px;background:#bbb"></i>
<i style="left:723.25px;top:85px;width:4px;height:0.5px;background:#ddd"></i>
<i style="left:732.7px;top:84.8px;width:1.5px;height:0.5px;background:#777"></i>
<i style="left:716.5px;top:123px;width:1.6px;height:0.5px;background:#ddd"></i>
<i style="left:721.8px;top:123px;width:1.6px;height:0.5px;background:#ddd"></i>
<i style="left:727.1px;top:123px;width:1.6px;height:0.5px;background:#ddd"></i>
<i style="left:732.4px;top:123px;width:1.6px;height:0.5px;background:#ddd"></i>
<i style="left:721.3px;top:122.8px;width:2px;height:0.6px;background:#666"></i>
<i style="left:759px;top:83px;width:1.5px;height:0.5px;background:#bbb"></i>
<i style="left:774.9px;top:83px;width:2px;height:0.5px;background:#999"></i>
<i style="left:759px;top:84.8px;width:1.5px;height:0.5px;background:#bbb"></i>
<i style="left:765.95px;top:85px;width:4px;height:0.5px;background:#ddd"></i>
<i style="left:775.4px;top:84.8px;width:1.5px;height:0.5px;background:#777"></i>
<i style="left:759.2px;top:123px;width:1.6px;height:0.5px;background:#ddd"></i>
<i style="left:764.5px;top:123px;width:1.6px;height:0.5px;background:#ddd"></i>
<i style="left:769.8px;top:123px;width:1.6px;height:0.5px;background:#ddd"></i>
<i style="left:775.1px;top:123px;width:1.6px;height:0.5px;background:#ddd"></i>
<i style="left:764px;top:122.8px;width:2px;height:0.6px;background:#666"></i>
<i style="left:780.5px;top:83px;width:1.5px;height:0.5px;background:#bbb"></i>
<i style="left:796.7px;top:83px;width:2px;height:0.5px;background:#999"></i>
<i style="left:780.5px;top:84.8px;width:1.5px;height:0.5px;background:#bbb"></i>
<i style="left:787.6px;top:85px;width:4px;height:0.5px;background:#ddd"></i>
<i style="left:797.2px;top:84.8px;width:1.5px;height:0.5px;background:#777"></i>
<i style="left:780.7px;top:123px;width:1.6px;height:0.5px;background:#ddd"></i>
<i style="left:786.1px;top:123px;width:1.6px;height:0.5px;background:#ddd"></i>
<i style="left:791.5px;top:123px;width:1.6px;height:0.5px;background:#ddd"></i>
<i style="left:796.9px;top:123px;width:1.6px;height:0.5px;background:#ddd"></i>
<i style="left:785.5px;top:122.8px;width:2px;height:0.6px;background:#666"></i>
<i style="left:802.5px;top:83px;width:1.5px;height:0.5px;background:#bbb"></i>
<i style="left:816.9px;top:83px;width:2px;height:0.5px;background:#999"></i>
<i style="left:802.5px;top:84.8px;width:1.5px;height:0.5px;background:#bbb"></i>
<i style="left:808.7px;top:85px;width:4px;height:0.5px;background:#ddd"></i>
<i style="left:817.4px;top:84.8px;width:1.5px;height:0.5px;background:#777"></i>
<i style="left:802.7px;top:123px;width:1.6px;height:0.5px;background:#ddd"></i>
<i style="left:807.5px;top:123px;width:1.6px;height:0.5px;background:#ddd"></i>
<i style="left:812.3px;top:123px;width:1.6px;height:0.5px;background:#ddd"></i>
<i style="left:817.1px;top:123px;width:1.6px;height:0.5px;background:#ddd"></i>
<i style="left:807.5px;top:122.8px;width:2px;height:0.6px;background:#666"></i>
<i style="left:717px;top:89px;width:1.3px;height:1px;background:#9ad8d0"></i>
<i style="left:719.5px;top:89.2px;width:5.5px;height:0.5px;background:#b8dcd8"></i>
<i style="left:717px;top:92px;width:1.3px;height:1px;background:#9ad8d0"></i>
<i style="left:719.5px;top:92.2px;width:8.5px;height:0.5px;background:#b8dcd8"></i>
<i style="left:717px;top:95px;width:1.3px;height:1px;background:#9ad8d0"></i>
<i style="left:719.5px;top:95.2px;width:5.5px;height:0.5px;background:#b8dcd8"></i>
<i style="left:716.8px;top:97.3px;width:17.2px;height:2.4px;background:#2cc8b8"></i>
<i style="left:718px;top:98.2px;width:5px;height:0.6px;background:#e8f8f4"></i>
<i style="left:717px;top:101.5px;width:1px;height:0.7px;background:#ccc"></i>
<i style="left:719.5px;top:101.6px;width:3px;height:0.5px;background:#ccc"></i>
<i style="left:717px;top:104px;width:1px;height:0.7px;background:#ccc"></i>
<i style="left:719.5px;top:104.1px;width:3px;height:0.5px;background:#ccc"></i>
<i style="left:717px;top:106px;width:1px;height:0.7px;background:#ccc"></i>
<i style="left:719.5px;top:106.1px;width:3px;height:0.5px;background:#ccc"></i>
<i style="left:717px;top:108.8px;width:1px;height:0.7px;background:#ccc"></i>
<i style="left:719.5px;top:108.9px;width:3px;height:0.5px;background:#ccc"></i>
<i style="left:717px;top:111.8px;width:1px;height:0.7px;background:#ccc"></i>
<i style="left:719.5px;top:111.9px;width:3px;height:0.5px;background:#ccc"></i>
<i style="left:717px;top:114.8px;width:1px;height:0.7px;background:#ccc"></i>
<i style="left:719.5px;top:114.9px;width:3px;height:0.5px;background:#ccc"></i>
<i style="left:717px;top:117.5px;width:1px;height:0.7px;background:#ccc"></i>
<i style="left:719.5px;top:117.6px;width:3px;height:0.5px;background:#ccc"></i>
<i style="left:737.1px;top:82.2px;width:19.6px;height:38.5px;background:#c8c8c8"></i>
<i style="left:738px;top:83px;width:1.5px;height:1px;background:#555"></i>
<i style="left:754.5px;top:83px;width:1.5px;height:1px;background:#555"></i>
<i style="left:741px;top:89px;width:12px;height:0.7px;background:#e4e4e4"></i>
<i style="left:743px;top:91.8px;width:8px;height:0.6px;background:#e4e4e4"></i>
<i style="left:742px;top:95px;width:10px;height:0.5px;background:#d8d8d8"></i>
<i style="left:739px;top:100.5px;width:16px;height:1.8px;background:#e8e8e8;border-radius:0.5px"></i>
<i style="left:739px;top:103.6px;width:16px;height:1.8px;background:#e8e8e8;border-radius:0.5px"></i>
<i style="left:739px;top:106.8px;width:16px;height:1.8px;background:#e8e8e8;border-radius:0.5px"></i>
<i style="left:739px;top:110px;width:16px;height:1.8px;background:#e8e8e8;border-radius:0.5px"></i>
<i style="left:739px;top:114.5px;width:16px;height:3px;background:#3cc8b8;border-radius:1.5px"></i>
<i style="left:758.5px;top:88.1px;width:18.9px;height:8.9px;background:#3ccfc0"></i>
<i style="left:759.5px;top:93.6px;width:17px;height:2.2px;background:#e0f8f4;border-radius:0.5px"></i>
<i style="left:760px;top:89.5px;width:9px;height:0.7px;background:#b8f0e8"></i>
<i style="left:775px;top:89px;width:1.5px;height:1.5px;background:#fff"></i>
<i style="left:758.8px;top:99px;width:8.7px;height:7px;background:#fbead0;border-radius:0.5px"></i>
<i style="left:761.95px;top:101px;width:2.4px;height:2px;background:#b8b0a8"></i>
<i style="left:768.5px;top:99px;width:8.5px;height:7px;background:#dcefe8;border-radius:0.5px"></i>
<i style="left:771.55px;top:101px;width:2.4px;height:2px;background:#b8b0a8"></i>
<i style="left:758.8px;top:107px;width:8.7px;height:7.5px;background:#e0e8f8;border-radius:0.5px"></i>
<i style="left:761.95px;top:109.25px;width:2.4px;height:2px;background:#b8b0a8"></i>
<i style="left:768.5px;top:107px;width:8.5px;height:7.5px;background:#ece0f4;border-radius:0.5px"></i>
<i style="left:771.55px;top:109.25px;width:2.4px;height:2px;background:#b8b0a8"></i>
<i style="left:758.8px;top:115.5px;width:8.7px;height:5.5px;background:#dcefe8;border-radius:0.5px"></i>
<i style="left:761.95px;top:116.75px;width:2.4px;height:2px;background:#b8b0a8"></i>
<i style="left:768.5px;top:115.5px;width:8.5px;height:5.5px;background:#f8e0e0;border-radius:0.5px"></i>
<i style="left:771.55px;top:116.75px;width:2.4px;height:2px;background:#b8b0a8"></i>
<div style="left:781.5px;top:88.5px;width:3px;height:3px;border-radius:50%;background:#8ad4d0"></div>
<i style="left:785.5px;top:89.5px;width:3px;height:0.5px;background:#999"></i>
<i style="left:789px;top:88.8px;width:7px;height:2px;background:#f4f4f4;border-radius:1px"></i>
<i style="left:797px;top:89px;width:1.5px;height:1.5px;background:#888"></i>
<i style="left:781.5px;top:93px;width:1px;height:1px;background:#e88"></i>
<i style="left:783.5px;top:93.2px;width:3px;height:0.4px;background:#ccc"></i>
<i style="left:781.5px;top:96.5px;width:1px;height:1px;background:#8ac"></i>
<i style="left:783.5px;top:96.7px;width:3px;height:0.4px;background:#ccc"></i>
<i style="left:781.5px;top:100px;width:1px;height:1px;background:#e8a"></i>
<i style="left:783.5px;top:100.2px;width:3px;height:0.4px;background:#ccc"></i>
<i style="left:781.5px;top:103.5px;width:1px;height:1px;background:#8ad"></i>
<i style="left:783.5px;top:103.7px;width:3px;height:0.4px;background:#ccc"></i>
<i style="left:781.5px;top:107px;width:1px;height:1px;background:#ccc"></i>
<i style="left:783.5px;top:107.2px;width:3px;height:0.4px;background:#ccc"></i>
<i style="left:781.5px;top:110.5px;width:1px;height:1px;background:#e8c"></i>
<i style="left:783.5px;top:110.7px;width:3px;height:0.4px;background:#ccc"></i>
<i style="left:781.5px;top:114px;width:1px;height:1px;background:#8cd"></i>
<i style="left:783.5px;top:114.2px;width:3px;height:0.4px;background:#ccc"></i>
<i style="left:781.5px;top:117.5px;width:1px;height:1px;background:#aac"></i>
<i style="left:783.5px;top:117.7px;width:3px;height:0.4px;background:#ccc"></i>
<div style="left:803.5px;top:91.5px;width:3.6px;height:3.6px;border-radius:50%;border:0.35px solid #b8b8b8"></div>
<i style="left:804.5px;top:95.7px;width:2px;height:0.4px;background:#ccc"></i>
<div style="left:809.0px;top:91.5px;width:3.6px;height:3.6px;border-radius:50%;border:0.35px solid #b8b8b8"></div>
<i style="left:810px;top:95.7px;width:2px;height:0.4px;background:#ccc"></i>
<div style="left:814.5px;top:91.5px;width:3.6px;height:3.6px;border-radius:50%;border:0.35px solid #b8b8b8"></div>
<i style="left:815.5px;top:95.7px;width:2px;height:0.4px;background:#ccc"></i>
<div style="left:803.5px;top:99.0px;width:3.6px;height:3.6px;border-radius:50%;border:0.35px solid #b8b8b8"></div>
<i style="left:804.5px;top:103.2px;width:2px;height:0.4px;background:#ccc"></i>
<div style="left:809.0px;top:99.0px;width:3.6px;height:3.6px;border-radius:50%;border:0.35px solid #b8b8b8"></div>
<i style="left:810px;top:103.2px;width:2px;height:0.4px;background:#ccc"></i>
<div style="left:814.5px;top:99.0px;width:3.6px;height:3.6px;border-radius:50%;border:0.35px solid #b8b8b8"></div>
<i style="left:815.5px;top:103.2px;width:2px;height:0.4px;background:#ccc"></i>
<div style="left:803.5px;top:106.5px;width:3.6px;height:3.6px;border-radius:50%;border:0.35px solid #b8b8b8"></div>
<i style="left:804.5px;top:110.7px;width:2px;height:0.4px;background:#ccc"></i>
<div style="left:809.0px;top:106.5px;width:3.6px;height:3.6px;border-radius:50%;border:0.35px solid #b8b8b8"></div>
<i style="left:810px;top:110.7px;width:2px;height:0.4px;background:#ccc"></i>
<div style="left:814.5px;top:106.5px;width:3.6px;height:3.6px;border-radius:50%;border:0.35px solid #b8b8b8"></div>
<i style="left:815.5px;top:110.7px;width:2px;height:0.4px;background:#ccc"></i>
<div style="left:803.5px;top:114.0px;width:3.6px;height:3.6px;border-radius:50%;border:0.35px solid #b8b8b8"></div>
<i style="left:804.5px;top:118.2px;width:2px;height:0.4px;background:#ccc"></i>
<div style="left:809.0px;top:114.0px;width:3.6px;height:3.6px;border-radius:50%;border:0.35px solid #b8b8b8"></div>
<i style="left:810px;top:118.2px;width:2px;height:0.4px;background:#ccc"></i>
<div style="left:814.5px;top:114.0px;width:3.6px;height:3.6px;border-radius:50%;border:0.35px solid #b8b8b8"></div>
<i style="left:815.5px;top:118.2px;width:2px;height:0.4px;background:#ccc"></i>
<i style="left:803px;top:101.5px;width:16px;height:0.4px;background:#b0b0b0"></i>
<i style="left:803px;top:110.3px;width:16px;height:0.4px;background:#b0b0b0"></i>
<i style="left:805px;top:88.5px;width:0.6px;height:1.5px;background:#aaa"></i>
<i style="left:810.8px;top:88.5px;width:0.6px;height:1.5px;background:#aaa"></i>
<i style="left:816px;top:115px;width:0.8px;height:2px;background:#888"></i>
<i style="left:717.2px;top:169.3px;width:9px;height:1.3px;background:#555"></i>
<i style="left:726.9px;top:169.3px;width:10.7px;height:1.3px;background:#555"></i>
<i style="left:717.9px;top:175.5px;width:18.3px;height:5.2px;background:#dcdcdc;border-radius:0.5px"></i>
<i style="left:719.5px;top:177.3px;width:11.5px;height:1.2px;background:#777"></i>
<i style="left:718.6px;top:188.6px;width:20.4px;height:9.4px;background:#cfe4fa"></i>
<i style="left:719.4px;top:191.6px;width:3.4px;height:3.4px;background:#36aca0;border-radius:1px"></i>
<i style="left:724px;top:189.8px;width:13px;height:0.6px;background:#9ab4d0"></i>
<i style="left:724px;top:192.2px;width:13px;height:0.6px;background:#9ab4d0"></i>
<i style="left:724px;top:194.6px;width:13px;height:0.6px;background:#9ab4d0"></i>
<i style="left:718.6px;top:200.8px;width:26.7px;height:6.3px;background:#cfe4fa"></i>
<i style="left:719.4px;top:202.25px;width:3.4px;height:3.4px;background:#36aca0;border-radius:1px"></i>
<i style="left:724px;top:202px;width:19.3px;height:0.6px;background:#9ab4d0"></i>
<i style="left:724px;top:204.05px;width:19.3px;height:0.6px;background:#9ab4d0"></i>
<i style="left:718.6px;top:209.9px;width:24.6px;height:6.3px;background:#cfe4fa"></i>
<i style="left:719.4px;top:211.35px;width:3.4px;height:3.4px;background:#36aca0;border-radius:1px"></i>
<i style="left:724px;top:211.1px;width:17.2px;height:0.6px;background:#9ab4d0"></i>
<i style="left:724px;top:213.15px;width:17.2px;height:0.6px;background:#9ab4d0"></i>
<i style="left:759px;top:168.5px;width:18.1px;height:17.5px;background:#0f2622"></i>
<i style="left:759px;top:186px;width:18.1px;height:20.4px;background:#fdfdfd"></i>
<i style="left:761px;top:188.5px;width:14px;height:0.6px;background:#d8d8d8"></i>
<i style="left:761px;top:191.08px;width:14px;height:0.6px;background:#d8d8d8"></i>
<i style="left:761px;top:193.67px;width:14px;height:0.6px;background:#d8d8d8"></i>
<i style="left:761px;top:196.25px;width:14px;height:0.6px;background:#d8d8d8"></i>
<i style="left:761px;top:198.83px;width:14px;height:0.6px;background:#d8d8d8"></i>
<i style="left:761px;top:201.42px;width:14px;height:0.6px;background:#d8d8d8"></i>
<div style="left:766.3px;top:171.8px;width:3.4px;height:3.4px;border-radius:50%;background:#e0e8e4"></div>
<i style="left:764px;top:176.5px;width:8px;height:0.7px;background:#6a807a"></i>
<i style="left:836.9px;top:36.8px;width:19.6px;height:59.1px;background:#fff;border:0.5px solid #888"></i>
<i style="left:853px;top:37.3px;width:3px;height:2.9px;background:#111"></i>
<i style="left:841px;top:38.5px;width:4px;height:0.5px;background:#999"></i>
<i style="left:837.3px;top:41px;width:18.8px;height:0.4px;background:#aaa"></i>
<i style="left:838px;top:42.5px;width:7px;height:0.5px;background:#888"></i>
<i style="left:851px;top:42.5px;width:4px;height:0.7px;background:#aaa"></i>
<i style="left:837.3px;top:44px;width:18.8px;height:0.3px;background:#bbb"></i>
<svg style="position:absolute;left:837.5px;top:44.5px" width="18.5" height="21" viewBox="0 0 18.5 21"><path d="M0.5 12 L3 5 L6 9 L9 7 L12 10 L15 8 L18 11" stroke="#777" stroke-width="0.45" fill="none"/><path d="M0.5 14 L3 10 L6 12 L9 11 L12 13 L15 12 L18 14" stroke="#aaa" stroke-width="0.35" fill="none"/><line x1="0" y1="15.5" x2="18.5" y2="15.5" stroke="#999" stroke-width="0.4"/><path d="M1 20 Q5 16 9 18 T18 17" stroke="#888" stroke-width="0.45" fill="none"/><line x1="0" y1="6" x2="18.5" y2="6" stroke="#e4e4e4" stroke-width="0.3"/></svg>
<i style="left:837.3px;top:65.8px;width:18.8px;height:0.3px;background:#aaa"></i>
<i style="left:838px;top:67px;width:4px;height:0.5px;background:#999"></i>
<svg style="position:absolute;left:837.5px;top:68px" width="18.5" height="11" viewBox="0 0 18.5 11"><path d="M1 10 L1 6 M2.5 10 L2.5 2 M4 10 L4 7 M6 10 L6 4 M8 10 L8 8 M10 10 L10 6 M12 10 L12 7 M14 10 L14 5 M16 10 L16 3 M17.5 10 L17.5 6" stroke="#888" stroke-width="0.5"/><path d="M0.5 9 L4 7 L8 8 L12 6 L18 4" stroke="#aaa" stroke-width="0.35" fill="none"/></svg>
<i style="left:837.3px;top:79px;width:18.8px;height:0.3px;background:#aaa"></i>
<i style="left:838px;top:80.5px;width:18.1px;height:4.5px;background:#fff;border:0.35px solid #aaa"></i>
<i style="left:839px;top:81.8px;width:4px;height:0.4px;background:#aaa"></i>
<i style="left:837.3px;top:86.5px;width:18.8px;height:0.3px;background:#aaa"></i>
<i style="left:838px;top:88.5px;width:2.5px;height:0.5px;background:#999"></i>
<i style="left:838px;top:90.8px;width:2.5px;height:0.5px;background:#999"></i>
<i style="left:838px;top:93px;width:2.5px;height:0.5px;background:#999"></i>
<div style="left:839.0px;top:32.3px;font-size:8px;line-height:1;color:#444;white-space:nowrap;transform:scale(0.300);transform-origin:0 0;">Stats</div>
<div style="left:908.0px;top:32.3px;font-size:8px;line-height:1;color:#444;white-space:nowrap;transform:scale(0.300);transform-origin:0 0;">Lockflow/Dir</div>
<i style="left:905.4px;top:36.8px;width:19.1px;height:115.5px;background:#fff;border:0.5px solid #888"></i>
<i style="left:921px;top:37.3px;width:3px;height:2.9px;background:#111"></i>
<i style="left:909px;top:38.5px;width:6px;height:0.5px;background:#999"></i>
<i style="left:906px;top:41.3px;width:18px;height:0.3px;background:#aaa"></i>
<i style="left:906.5px;top:43px;width:17px;height:2.5px;background:#fff;border:0.35px solid #aaa"></i>
<i style="left:920px;top:43.3px;width:3px;height:1.9px;background:#ccc"></i>
<i style="left:906px;top:46.6px;width:18px;height:0.3px;background:#aaa"></i>
<svg style="position:absolute;left:907.0px;top:48.0px" width="16.0" height="20.5" viewBox="0 0 100 100" preserveAspectRatio="none"><rect x="0" y="0" width="100" height="100" fill="#fff" stroke="#a8a8a8" stroke-width="0.9" vector-effect="non-scaling-stroke"/><path d="M0 0L100 100M100 0L0 100" stroke="#b4b4b4" stroke-width="0.5" vector-effect="non-scaling-stroke" fill="none"/></svg>
<i style="left:907.2px;top:69.3px;width:1.3px;height:2.4px;background:#fff;border:0.3px solid #888"></i>
<i style="left:914px;top:69.5px;width:2.2px;height:2px;background:#fff;border:0.3px solid #aaa"></i>
<i style="left:921px;top:69.5px;width:2px;height:2px;background:#fff;border:0.3px solid #aaa"></i>
<i style="left:906px;top:72.4px;width:18px;height:0.2px;background:#aaa"></i>
<svg style="position:absolute;left:907.0px;top:73.0px" width="16.0" height="20.5" viewBox="0 0 100 100" preserveAspectRatio="none"><rect x="0" y="0" width="100" height="100" fill="#fff" stroke="#a8a8a8" stroke-width="0.9" vector-effect="non-scaling-stroke"/><path d="M0 0L100 100M100 0L0 100" stroke="#b4b4b4" stroke-width="0.5" vector-effect="non-scaling-stroke" fill="none"/></svg>
<i style="left:907.2px;top:94.3px;width:1.3px;height:2.4px;background:#fff;border:0.3px solid #888"></i>
<i style="left:914px;top:94.5px;width:2.2px;height:2px;background:#fff;border:0.3px solid #aaa"></i>
<i style="left:921px;top:94.5px;width:2px;height:2px;background:#fff;border:0.3px solid #aaa"></i>
<i style="left:906px;top:97.4px;width:18px;height:0.2px;background:#aaa"></i>
<svg style="position:absolute;left:907.0px;top:98.0px" width="16.0" height="20.5" viewBox="0 0 100 100" preserveAspectRatio="none"><rect x="0" y="0" width="100" height="100" fill="#fff" stroke="#a8a8a8" stroke-width="0.9" vector-effect="non-scaling-stroke"/><path d="M0 0L100 100M100 0L0 100" stroke="#b4b4b4" stroke-width="0.5" vector-effect="non-scaling-stroke" fill="none"/></svg>
<i style="left:907.2px;top:119.3px;width:1.3px;height:2.4px;background:#fff;border:0.3px solid #888"></i>
<i style="left:914px;top:119.5px;width:2.2px;height:2px;background:#fff;border:0.3px solid #aaa"></i>
<i style="left:921px;top:119.5px;width:2px;height:2px;background:#fff;border:0.3px solid #aaa"></i>
<i style="left:906px;top:122.4px;width:18px;height:0.2px;background:#aaa"></i>
<svg style="position:absolute;left:907.0px;top:123.0px" width="16.0" height="20.5" viewBox="0 0 100 100" preserveAspectRatio="none"><rect x="0" y="0" width="100" height="100" fill="#fff" stroke="#a8a8a8" stroke-width="0.9" vector-effect="non-scaling-stroke"/><path d="M0 0L100 100M100 0L0 100" stroke="#b4b4b4" stroke-width="0.5" vector-effect="non-scaling-stroke" fill="none"/></svg>
<i style="left:907.2px;top:144.3px;width:1.3px;height:2.4px;background:#fff;border:0.3px solid #888"></i>
<i style="left:914px;top:144.5px;width:2.2px;height:2px;background:#fff;border:0.3px solid #aaa"></i>
<i style="left:921px;top:144.5px;width:2px;height:2px;background:#fff;border:0.3px solid #aaa"></i>
<i style="left:906px;top:147.4px;width:18px;height:0.2px;background:#aaa"></i>
<i style="left:861px;top:37.8px;width:15.3px;height:0.45px;background:#999"></i>
<i style="left:861px;top:40.5px;width:34px;height:0.45px;background:#d0d0d0"></i>
<i style="left:861px;top:41.95px;width:40px;height:0.45px;background:#d0d0d0"></i>
<i style="left:861px;top:43.4px;width:34px;height:0.45px;background:#d0d0d0"></i>
<i style="left:861px;top:47.2px;width:18px;height:0.45px;background:#999"></i>
<i style="left:861px;top:48.65px;width:40px;height:0.45px;background:#d0d0d0"></i>
<i style="left:861px;top:57.2px;width:28.9px;height:0.45px;background:#d0d0d0"></i>
<i style="left:861px;top:68.2px;width:28.9px;height:0.45px;background:#d0d0d0"></i>
<i style="left:861px;top:81.3px;width:28.9px;height:0.45px;background:#d0d0d0"></i>
<i style="left:861px;top:88px;width:18px;height:0.45px;background:#999"></i>
<i style="left:861px;top:89.45px;width:40px;height:0.45px;background:#d0d0d0"></i>
<i style="left:861px;top:90.9px;width:34px;height:0.45px;background:#d0d0d0"></i>
<i style="left:861px;top:92.35px;width:40px;height:0.45px;background:#d0d0d0"></i>
<i style="left:929px;top:37px;width:19.8px;height:0.45px;background:#999"></i>
<i style="left:929px;top:38.45px;width:44px;height:0.45px;background:#d0d0d0"></i>
<i style="left:929px;top:39.9px;width:37.4px;height:0.45px;background:#d0d0d0"></i>
<i style="left:929px;top:41.35px;width:44px;height:0.45px;background:#d0d0d0"></i>
<i style="left:929px;top:42.8px;width:37.4px;height:0.45px;background:#d0d0d0"></i>
<i style="left:929px;top:44.25px;width:44px;height:0.45px;background:#d0d0d0"></i>
<i style="left:929px;top:46.5px;width:19.8px;height:0.45px;background:#999"></i>
<i style="left:929px;top:47.95px;width:44px;height:0.45px;background:#d0d0d0"></i>
<i style="left:929px;top:49.4px;width:37.4px;height:0.45px;background:#d0d0d0"></i>
<i style="left:929px;top:50.85px;width:44px;height:0.45px;background:#d0d0d0"></i>
<i style="left:929px;top:55px;width:19.8px;height:0.45px;background:#999"></i>
<i style="left:929px;top:56.45px;width:44px;height:0.45px;background:#d0d0d0"></i>
<i style="left:929px;top:57.9px;width:37.4px;height:0.45px;background:#d0d0d0"></i>
<i style="left:929px;top:59.35px;width:44px;height:0.45px;background:#d0d0d0"></i>
<i style="left:929px;top:60.8px;width:37.4px;height:0.45px;background:#d0d0d0"></i>
<i style="left:929px;top:62.25px;width:44px;height:0.45px;background:#d0d0d0"></i>
<i style="left:929px;top:63.7px;width:37.4px;height:0.45px;background:#d0d0d0"></i>
<i style="left:929px;top:75px;width:19.8px;height:0.45px;background:#999"></i>
<i style="left:929px;top:76.45px;width:44px;height:0.45px;background:#d0d0d0"></i>
<i style="left:929px;top:77.9px;width:37.4px;height:0.45px;background:#d0d0d0"></i>
<i style="left:929px;top:79.35px;width:44px;height:0.45px;background:#d0d0d0"></i>
<i style="left:929px;top:80.8px;width:37.4px;height:0.45px;background:#d0d0d0"></i>
<i style="left:929px;top:103.5px;width:19.8px;height:0.45px;background:#999"></i>
<i style="left:929px;top:104.95px;width:44px;height:0.45px;background:#d0d0d0"></i>
<i style="left:929px;top:106.4px;width:37.4px;height:0.45px;background:#d0d0d0"></i>
<i style="left:929px;top:107.85px;width:44px;height:0.45px;background:#d0d0d0"></i>
<i style="left:929px;top:129px;width:19.8px;height:0.45px;background:#999"></i>
<i style="left:929px;top:130.45px;width:44px;height:0.45px;background:#d0d0d0"></i>
<i style="left:929px;top:131.9px;width:37.4px;height:0.45px;background:#d0d0d0"></i>
<i style="left:929px;top:133.35px;width:44px;height:0.45px;background:#d0d0d0"></i>
<i style="left:929px;top:134.8px;width:37.4px;height:0.45px;background:#d0d0d0"></i>
<i style="left:837.3px;top:104.6px;width:19.1px;height:43.9px;background:#fff;border:0.3px solid #f0f0f4"></i>
<i style="left:838px;top:106.5px;width:2px;height:0.5px;background:#aaa"></i>
<i style="left:854px;top:106.5px;width:1.5px;height:0.5px;background:#aaa"></i>
<i style="left:843px;top:107.5px;width:7px;height:0.5px;background:#e8a8a8"></i>
<i style="left:839px;top:110.5px;width:4.5px;height:1.5px;background:#eef2fa"></i>
<i style="left:839.8px;top:111px;width:3px;height:0.5px;background:#8ab0d8"></i>
<i style="left:844.8px;top:110.5px;width:4.5px;height:1.5px;background:#eef2fa"></i>
<i style="left:845.6px;top:111px;width:3px;height:0.5px;background:#8ab0d8"></i>
<i style="left:850.6px;top:110.5px;width:4.5px;height:1.5px;background:#eef2fa"></i>
<i style="left:851.4px;top:111px;width:3px;height:0.5px;background:#8ab0d8"></i>
<svg style="position:absolute;left:840.3px;top:114.9px" width="12.4" height="12.4" viewBox="0 0 12.4 12.4"><circle cx="6.2" cy="6.2" r="5.5" fill="none" stroke="#e8d0f0" stroke-width="1.1"/><path d="M6.2 0.7 A5.5 5.5 0 1 1 0.9 7.6" fill="none" stroke="#5a4ab8" stroke-width="1.1"/><path d="M0.9 7.6 A5.5 5.5 0 0 1 6.2 0.7" fill="none" stroke="#e88ad0" stroke-width="1.1"/><rect x="4.2" y="5.3" width="4" height="1.8" fill="#777"/></svg>
<i style="left:838.5px;top:130.8px;width:7.5px;height:0.5px;background:#aaa"></i>
<svg style="position:absolute;left:838px;top:132.5px" width="17.5" height="8" viewBox="0 0 17.5 8"><path d="M0 7.5 L3 7 L5 6 L6.5 3 L7.5 6.5 L9 1 L10.5 6 L12.5 6.5 L14 4 L15.5 5.5 L17.5 2" stroke="#4a8ae0" stroke-width="0.55" fill="none"/><path d="M0 7.8 L17.5 7.8" stroke="#dde" stroke-width="0.3"/></svg>
<i style="left:839.5px;top:145.8px;width:1.3px;height:1px;background:#bbb"></i>
<i style="left:844.3px;top:145.8px;width:1.3px;height:1px;background:#bbb"></i>
<i style="left:849.1px;top:145.8px;width:1.3px;height:1px;background:#bbb"></i>
<i style="left:853.9px;top:145.8px;width:1.3px;height:1px;background:#bbb"></i>
<svg style="position:absolute;left:0;top:0" width="977" height="507" viewBox="301 56 977 507">
<g fill="none" stroke="#6a6a6a" stroke-width="0.55">
<path d="M649.8 80.8 C 670 76, 720 72, 745 71.5 C 780 71, 815 71, 835 75 C 850 80, 858 92, 866 104 C 872 114, 878 124, 886 129 C 892 131, 897 129, 901.5 127.8"/>
<path d="M861 135.5 C 875 134, 890 133, 901 132"/>
<path d="M650.3 134.8 C 650 150, 665 170, 682 182 C 695 191, 715 194, 730 190 C 736 188, 737 184, 725 182.6"/>
<path d="M706.7 181.4 C 709 187, 713 190, 718.4 191.2 C 745 198, 770 206, 787 210.8 C 805 215, 820 218, 835 218 C 850 217, 855 210, 855.7 195 C 856 185, 855 175, 854.5 170.3"/>
<path d="M758.9 259.3 C 762 252, 770 247, 790 240 C 810 234, 830 231, 860.6 231.6 C 880 233, 895 238, 903 247 C 907 251, 909 255, 910.8 258.6"/>
<path d="M887.6 217 L 899.8 208.3"/>
<path d="M885.7 149 C 893 150, 900 152.5, 908 152.5 C 914 152.5, 919 151, 921.5 146 C 923.5 141, 925 137, 927.4 135"/>
<path d="M750.8 357.7 C 757 362, 765 365, 772.9 365.7 C 790 366, 830 366, 850 362.5 C 870 359, 888 354, 902.5 352.5"/>
<path d="M776 357.7 C 780 361, 786 363, 792 363.5"/>
<path d="M1041.4 237.2 C 1048 243, 1054 252, 1060.3 256.8"/>
<path d="M1138.8 112.4 C 1136 113.5, 1134.4 116, 1134.3 119 L 1134.2 144 C 1134.3 150, 1136 155, 1138.8 157.3"/>
<path d="M944 157.3 C 955 157.8, 965 158.5, 975 159.5 C 990 161, 1002 163.5, 1012 165.5"/>
<path d="M950.3 380.2 C 960 384, 972 392, 980.5 395.6"/>
</g></svg></div></div>
  <div class="t" style="left:145px;top:107px;font-size:13px;color:#e8eaed">1</div>
</div>
<div id="main"></div>
<div style="position:absolute;left:1278px;top:56px;width:1px;height:508px;background:#2e3134"></div>
<div style="position:absolute;left:300px;top:563px;width:979px;height:1px;background:#3a3d40"></div>
<div id="page">
<div style="left:2.6px;top:0.2px;font-size:8px;line-height:1;color:#2e2e2e;white-space:nowrap;-webkit-text-stroke:0.25px #2e2e2e;letter-spacing:0.04px">Wireframe Schema Components</div>
<div style="left:252.0px;top:0.2px;font-size:8px;line-height:1;color:#2e2e2e;white-space:nowrap;-webkit-text-stroke:0.25px #2e2e2e;letter-spacing:-0.08px">UI Schema Components</div>
<div style="left:696.0px;top:0.2px;font-size:8px;line-height:1;color:#2e2e2e;white-space:nowrap;-webkit-text-stroke:0.25px #2e2e2e;letter-spacing:0.05px">Visualised Element Prospects</div>
<i style="left:2.9px;top:27.9px;width:18px;height:39px;background:#f9f9fd;border:0.35px solid #eeeef5"></i>
<i style="left:3.9px;top:29.1px;width:2px;height:0.5px;background:#c8c8d0"></i>
<i style="left:16.9px;top:29.1px;width:3px;height:0.5px;background:#b8b8c0"></i>
<i style="left:4.5px;top:32.8px;width:4.5px;height:0.7px;background:#8a70d0"></i>
<i style="left:4.5px;top:35px;width:6px;height:6px;background:#5b3fb0"></i>
<i style="left:6.8px;top:37px;width:1.4px;height:2px;background:#d8d0f0"></i>
<i style="left:13.5px;top:37px;width:2.5px;height:2px;background:#777"></i>
<i style="left:4px;top:42.5px;width:7px;height:0.6px;background:#a090e0"></i>
<i style="left:3.5px;top:44.5px;width:16.8px;height:0.5px;background:#d8d8e2"></i>
<i style="left:4px;top:45.9px;width:7px;height:0.5px;background:#c8c8d4"></i>
<i style="left:3.5px;top:50px;width:16.8px;height:0.5px;background:#d8d8e2"></i>
<i style="left:4px;top:51.4px;width:7px;height:0.5px;background:#c8c8d4"></i>
<i style="left:3.5px;top:54px;width:16.8px;height:0.5px;background:#d8d8e2"></i>
<i style="left:4px;top:55.4px;width:7px;height:0.5px;background:#c8c8d4"></i>
<i style="left:3.5px;top:57.5px;width:16.8px;height:0.5px;background:#d8d8e2"></i>
<i style="left:4px;top:58.9px;width:7px;height:0.5px;background:#c8c8d4"></i>
<i style="left:17.8px;top:45px;width:2px;height:1.8px;background:#555"></i>
<i style="left:17.8px;top:50.5px;width:2px;height:1.8px;background:#555"></i>
<i style="left:17.8px;top:58.5px;width:2px;height:1.8px;background:#555"></i>
<i style="left:25.6px;top:27.9px;width:18.1px;height:39px;background:#f9f9fd;border:0.35px solid #eeeef5"></i>
<i style="left:26.6px;top:29.1px;width:2px;height:0.5px;background:#c8c8d0"></i>
<i style="left:39.7px;top:29.1px;width:3px;height:0.5px;background:#b8b8c0"></i>
<i style="left:27px;top:33px;width:3px;height:0.6px;background:#666"></i>
<i style="left:26.5px;top:35.5px;width:16.5px;height:0.6px;background:#c8c8d4"></i>
<i style="left:32.5px;top:38px;width:2.5px;height:1.5px;background:#999"></i>
<i style="left:37px;top:38px;width:3px;height:1.5px;background:#999"></i>
<i style="left:29px;top:41.5px;width:3px;height:1.5px;background:#888"></i>
<i style="left:33.5px;top:41.5px;width:2.5px;height:1.5px;background:#888"></i>
<i style="left:26.5px;top:45px;width:16.5px;height:0.5px;background:#d0d0dc"></i>
<i style="left:27px;top:46.8px;width:7px;height:0.6px;background:#9a8ad8"></i>
<i style="left:26.5px;top:48.5px;width:16.5px;height:0.5px;background:#d8d8e2"></i>
<i style="left:27px;top:51px;width:5px;height:0.5px;background:#bbb"></i>
<i style="left:27px;top:53.5px;width:5px;height:0.5px;background:#bbb"></i>
<i style="left:27px;top:56px;width:5px;height:0.5px;background:#bbb"></i>
<i style="left:41px;top:49.5px;width:1.5px;height:2px;background:#444"></i>
<i style="left:41px;top:54.5px;width:1.5px;height:2px;background:#444"></i>
<i style="left:26.5px;top:58.8px;width:16.5px;height:0.5px;background:#d0d0dc"></i>
<i style="left:48px;top:27.9px;width:18px;height:39px;background:#f9f9fd;border:0.35px solid #eeeef5"></i>
<i style="left:49px;top:29.1px;width:2px;height:0.5px;background:#c8c8d0"></i>
<i style="left:62px;top:29.1px;width:3px;height:0.5px;background:#b8b8c0"></i>
<i style="left:49px;top:32.5px;width:16px;height:0.5px;background:#c8c8d4"></i>
<i style="left:52.5px;top:34.5px;width:9.5px;height:0.7px;background:#999"></i>
<i style="left:54px;top:36.2px;width:6px;height:0.5px;background:#c8c8d4"></i>
<svg style="position:absolute;left:49px;top:39px" width="16" height="6" viewBox="0 0 16 6"><path d="M0 5 Q3 5 5 3 T9 1 T13 4 T16 5" stroke="#c0c0d0" stroke-width="0.4" fill="none"/></svg>
<i style="left:49.5px;top:42.8px;width:1.5px;height:1.2px;background:#555"></i>
<i style="left:63.5px;top:42.8px;width:1.5px;height:1.2px;background:#555"></i>
<i style="left:50.5px;top:46px;width:2.5px;height:0.6px;background:#bbb"></i>
<i style="left:55.5px;top:45.8px;width:4.5px;height:1.2px;background:#4a3a90"></i>
<i style="left:61.5px;top:46px;width:2.5px;height:0.6px;background:#bbb"></i>
<i style="left:48.5px;top:49px;width:17px;height:0.5px;background:#d0d0dc"></i>
<i style="left:49.5px;top:51px;width:5.5px;height:0.7px;background:#5a4aa0"></i>
<i style="left:49px;top:52.5px;width:16.5px;height:0.5px;background:#d8d8e2"></i>
<i style="left:49.5px;top:54.8px;width:2.5px;height:0.6px;background:#aaa"></i>
<i style="left:63.3px;top:53.5px;width:1.7px;height:4px;background:#555"></i>
<i style="left:49.5px;top:56.8px;width:4.5px;height:0.6px;background:#aaa"></i>
<i style="left:48.5px;top:59px;width:17px;height:0.5px;background:#d0d0dc"></i>
<i style="left:71px;top:27.9px;width:17.6px;height:39px;background:#f9f9fd;border:0.35px solid #eeeef5"></i>
<i style="left:72px;top:29.1px;width:2px;height:0.5px;background:#c8c8d0"></i>
<i style="left:84.6px;top:29.1px;width:3px;height:0.5px;background:#b8b8c0"></i>
<i style="left:72.5px;top:32.8px;width:4.5px;height:0.6px;background:#555"></i>
<i style="left:72.5px;top:34.5px;width:6.5px;height:0.5px;background:#bbb"></i>
<i style="left:73.5px;top:39px;width:1.5px;height:1.5px;background:#555"></i>
<i style="left:76.5px;top:39.3px;width:4.5px;height:0.6px;background:#aaa"></i>
<i style="left:72px;top:42.3px;width:16px;height:0.5px;background:#c8c8d4"></i>
<i style="left:74px;top:44.5px;width:6px;height:1.3px;background:#5a40b0"></i>
<i style="left:82px;top:44.8px;width:3px;height:0.6px;background:#bbb"></i>
<i style="left:74px;top:47.3px;width:5px;height:0.5px;background:#aaa"></i>
<i style="left:72px;top:51px;width:16px;height:0.4px;background:#e0e0e8"></i>
<i style="left:72.5px;top:60.3px;width:15.5px;height:2.3px;background:linear-gradient(90deg,#56399f,#6a4cbc)"></i>
<i style="left:77px;top:63.8px;width:6px;height:0.5px;background:#bbb"></i>
<i style="left:2.3px;top:74px;width:18.3px;height:40.5px;background:#f9f9fd;border:0.35px solid #eeeef5"></i>
<i style="left:3.3px;top:75.2px;width:2px;height:0.5px;background:#c8c8d0"></i>
<i style="left:16.6px;top:75.2px;width:3px;height:0.5px;background:#b8b8c0"></i>
<div style="left:2.3px;top:74.30000000000001px;width:18.3px;height:18.6px;background:linear-gradient(165deg,#b5acf5,#a8d2fa)"></div>
<svg style="position:absolute;left:7.5px;top:81.1px" width="8" height="5.8" viewBox="0 0 10 7.2"><circle cx="2.6" cy="1.3" r="1.1" fill="#45389e"/><path d="M0 7.2 L3 3.4 L4.6 5 L7 2.4 L10 7.2Z" fill="#45389e"/></svg>
<i style="left:3.3px;top:108.7px;width:16.3px;height:2.3px;background:linear-gradient(90deg,#56399f,#6a4cbc);border-radius:0.6px"></i>
<i style="left:5.3px;top:94.9px;width:12.3px;height:0.8px;background:#b8b8c8"></i>
<i style="left:4.3px;top:97.4px;width:14.3px;height:0.6px;background:#e0e0ea"></i>
<i style="left:7.3px;top:112.1px;width:8.3px;height:0.5px;background:#c4c4cc"></i>
<i style="left:25.2px;top:74px;width:19.7px;height:40.5px;background:#f9f9fd;border:0.35px solid #eeeef5"></i>
<i style="left:26.2px;top:75.2px;width:2px;height:0.5px;background:#c8c8d0"></i>
<i style="left:40.9px;top:75.2px;width:3px;height:0.5px;background:#b8b8c0"></i>
<div style="left:25.2px;top:74.30000000000001px;width:19.7px;height:26.3px;background:linear-gradient(165deg,#b5acf5,#a8d2fa)"></div>
<svg style="position:absolute;left:31.0px;top:84.9px" width="8" height="5.8" viewBox="0 0 10 7.2"><circle cx="2.6" cy="1.3" r="1.1" fill="#45389e"/><path d="M0 7.2 L3 3.4 L4.6 5 L7 2.4 L10 7.2Z" fill="#45389e"/></svg>
<i style="left:26.2px;top:110.6px;width:17.7px;height:2.3px;background:linear-gradient(90deg,#56399f,#6a4cbc);border-radius:0.6px"></i>
<i style="left:28.2px;top:102.6px;width:13.7px;height:0.8px;background:#b8b8c8"></i>
<i style="left:27.2px;top:105.1px;width:15.7px;height:0.6px;background:#e0e0ea"></i>
<i style="left:30.2px;top:114px;width:9.7px;height:0.5px;background:#c4c4cc"></i>
<i style="left:49px;top:74px;width:18.8px;height:40.5px;background:#f9f9fd;border:0.35px solid #eeeef5"></i>
<i style="left:50px;top:75.2px;width:2px;height:0.5px;background:#c8c8d0"></i>
<i style="left:63.8px;top:75.2px;width:3px;height:0.5px;background:#b8b8c0"></i>
<div style="left:49.0px;top:74.30000000000001px;width:18.8px;height:26.3px;background:linear-gradient(165deg,#b5acf5,#a8d2fa)"></div>
<svg style="position:absolute;left:54.4px;top:84.9px" width="8" height="5.8" viewBox="0 0 10 7.2"><circle cx="2.6" cy="1.3" r="1.1" fill="#45389e"/><path d="M0 7.2 L3 3.4 L4.6 5 L7 2.4 L10 7.2Z" fill="#45389e"/></svg>
<i style="left:50px;top:110.6px;width:16.8px;height:2.3px;background:linear-gradient(90deg,#56399f,#6a4cbc);border-radius:0.6px"></i>
<i style="left:52px;top:102.6px;width:12.8px;height:0.8px;background:#b8b8c8"></i>
<i style="left:51px;top:105.1px;width:14.8px;height:0.6px;background:#e0e0ea"></i>
<i style="left:54px;top:114px;width:8.8px;height:0.5px;background:#c4c4cc"></i>
<i style="left:71.8px;top:74px;width:19.1px;height:40.5px;background:#f9f9fd;border:0.35px solid #eeeef5"></i>
<i style="left:72.8px;top:75.2px;width:2px;height:0.5px;background:#c8c8d0"></i>
<i style="left:86.9px;top:75.2px;width:3px;height:0.5px;background:#b8b8c0"></i>
<div style="left:71.8px;top:74.30000000000001px;width:19.1px;height:14.7px;background:linear-gradient(165deg,#b5acf5,#a8d2fa)"></div>
<svg style="position:absolute;left:77.4px;top:79.1px" width="8" height="5.8" viewBox="0 0 10 7.2"><circle cx="2.6" cy="1.3" r="1.1" fill="#45389e"/><path d="M0 7.2 L3 3.4 L4.6 5 L7 2.4 L10 7.2Z" fill="#45389e"/></svg>
<i style="left:72.8px;top:108.3px;width:17.1px;height:2.3px;background:linear-gradient(90deg,#56399f,#6a4cbc);border-radius:0.6px"></i>
<i style="left:74.8px;top:91px;width:13.1px;height:0.8px;background:#b8b8c8"></i>
<i style="left:73.8px;top:93.5px;width:15.1px;height:0.6px;background:#e0e0ea"></i>
<i style="left:76.8px;top:111.7px;width:9.1px;height:0.5px;background:#c4c4cc"></i>
<i style="left:73px;top:92px;width:16px;height:0.6px;background:#e8e8f0"></i>
<i style="left:73px;top:95px;width:16px;height:0.6px;background:#e8e8f0"></i>
<i style="left:73px;top:98px;width:16px;height:0.6px;background:#e8e8f0"></i>
<i style="left:73px;top:101px;width:16px;height:0.6px;background:#e8e8f0"></i>
<i style="left:95.8px;top:75px;width:1.5px;height:0.6px;background:#bbb"></i>
<i style="left:111.1px;top:75px;width:3px;height:0.6px;background:#999"></i>
<i style="left:101.3px;top:113.8px;width:7.3px;height:0.6px;background:#666"></i>
<i style="left:119.9px;top:75px;width:1.5px;height:0.6px;background:#bbb"></i>
<i style="left:134.2px;top:75px;width:3px;height:0.6px;background:#999"></i>
<i style="left:125.4px;top:113.8px;width:6.3px;height:0.6px;background:#666"></i>
<i style="left:143px;top:75px;width:1.5px;height:0.6px;background:#bbb"></i>
<i style="left:158.3px;top:75px;width:3px;height:0.6px;background:#999"></i>
<i style="left:148.5px;top:113.8px;width:7.3px;height:0.6px;background:#666"></i>
<i style="left:102.5px;top:84.8px;width:5px;height:1px;background:#555"></i>
<i style="left:97.5px;top:88px;width:15px;height:1.2px;background:#f0f0f8"></i>
<i style="left:97.5px;top:91px;width:15px;height:1.2px;background:#f0f0f8"></i>
<i style="left:97.5px;top:88.3px;width:3.5px;height:0.5px;background:#aaa"></i>
<i style="left:97.5px;top:91.3px;width:3.5px;height:0.5px;background:#aaa"></i>
<i style="left:96.9px;top:94.2px;width:17.1px;height:1.9px;background:linear-gradient(90deg,#56399f,#6a4cbc);border-radius:1px"></i>
<i style="left:102px;top:96.5px;width:7px;height:0.5px;background:#d8d0f0"></i>
<i style="left:102.5px;top:104.3px;width:5px;height:0.6px;background:#888"></i>
<i style="left:101.2px;top:106.8px;width:1.6px;height:1.8px;background:#666"></i>
<i style="left:104.2px;top:106.8px;width:1.6px;height:1.8px;background:#666"></i>
<i style="left:107.2px;top:106.8px;width:1.6px;height:1.8px;background:#666"></i>
<i style="left:100px;top:111.8px;width:10px;height:0.4px;background:#ccc"></i>
<i style="left:126.5px;top:82.5px;width:4px;height:1.3px;background:#444"></i>
<i style="left:120.5px;top:86px;width:16px;height:1.2px;background:#f0f0f8"></i>
<i style="left:120.8px;top:86.3px;width:2.7px;height:0.5px;background:#aaa"></i>
<i style="left:120.5px;top:89px;width:16px;height:1.2px;background:#f0f0f8"></i>
<i style="left:120.8px;top:89.3px;width:2.7px;height:0.5px;background:#aaa"></i>
<i style="left:120.5px;top:92.5px;width:16px;height:1.2px;background:#f0f0f8"></i>
<i style="left:120.8px;top:92.8px;width:2.7px;height:0.5px;background:#aaa"></i>
<i style="left:120.5px;top:95.3px;width:16px;height:1.2px;background:#f0f0f8"></i>
<i style="left:120.8px;top:95.6px;width:2.7px;height:0.5px;background:#aaa"></i>
<i style="left:120px;top:99.6px;width:17px;height:2.2px;background:linear-gradient(90deg,#56399f,#6a4cbc);border-radius:1px"></i>
<i style="left:126px;top:104.3px;width:5px;height:0.6px;background:#888"></i>
<i style="left:124.7px;top:107.3px;width:1.6px;height:1.8px;background:#666"></i>
<i style="left:127.7px;top:107.3px;width:1.6px;height:1.8px;background:#666"></i>
<i style="left:130.7px;top:107.3px;width:1.6px;height:1.8px;background:#666"></i>
<i style="left:123px;top:111.8px;width:11px;height:0.4px;background:#ccc"></i>
<i style="left:146.4px;top:84.8px;width:11.3px;height:1.7px;background:#bbb"></i>
<i style="left:146.5px;top:87.5px;width:10.5px;height:0.5px;background:#ccc"></i>
<i style="left:147.5px;top:89px;width:7.5px;height:0.5px;background:#ccc"></i>
<i style="left:146.5px;top:91.2px;width:1.5px;height:1.2px;background:#555"></i>
<i style="left:149.5px;top:91.5px;width:4.5px;height:0.5px;background:#aaa"></i>
<i style="left:146.5px;top:94.5px;width:11.5px;height:0.5px;background:#ddd"></i>
<i style="left:143.5px;top:100px;width:0.4px;height:13px;background:#eeeef2"></i>
<i style="left:148.3px;top:100px;width:0.4px;height:13px;background:#eeeef2"></i>
<i style="left:153.1px;top:100px;width:0.4px;height:13px;background:#eeeef2"></i>
<i style="left:157.9px;top:100px;width:0.4px;height:13px;background:#eeeef2"></i>
<i style="left:143.5px;top:102px;width:17.5px;height:0.3px;background:#f2f2f5"></i>
<i style="left:143.5px;top:105px;width:17.5px;height:0.3px;background:#f2f2f5"></i>
<i style="left:143.5px;top:108px;width:17.5px;height:0.3px;background:#f2f2f5"></i>
<i style="left:143.5px;top:111px;width:17.5px;height:0.3px;background:#f2f2f5"></i>
<i style="left:151.3px;top:100.5px;width:0.7px;height:8.5px;background:#bbb"></i>
<i style="left:158px;top:101px;width:0.7px;height:9px;background:#aaa"></i>
<i style="left:145px;top:104.5px;width:2px;height:0.5px;background:#999"></i>
<i style="left:145px;top:108.5px;width:2px;height:0.5px;background:#999"></i>
<i style="left:2.3px;top:129.5px;width:18.3px;height:40.5px;background:#fdfdff;border:0.35px solid #f0f0f6"></i>
<i style="left:3.3px;top:130.5px;width:1.5px;height:0.5px;background:#bbb"></i>
<i style="left:17.6px;top:130.5px;width:2px;height:0.5px;background:#777"></i>
<i style="left:3.3px;top:132.3px;width:0.8px;height:0.5px;background:#aaa"></i>
<i style="left:7.3px;top:132.3px;width:8.3px;height:0.5px;background:#ccc"></i>
<i style="left:3.3px;top:165.2px;width:16.3px;height:2.6px;background:linear-gradient(90deg,#56399f,#6a4cbc);border-radius:1.2px"></i>
<i style="left:7.3px;top:169px;width:8.3px;height:0.4px;background:#aaa"></i>
<i style="left:6.3px;top:137.2px;width:10.3px;height:1px;background:#b8b8c4"></i>
<i style="left:3.6px;top:141px;width:1.7px;height:2.5px;background:#b8a060"></i>
<i style="left:6.3px;top:142px;width:3px;height:0.6px;background:#bbb"></i>
<i style="left:3.3px;top:144.2px;width:16.3px;height:0.3px;background:#f0f0f4"></i>
<i style="left:3.6px;top:146px;width:1.7px;height:2.5px;background:#b8a060"></i>
<i style="left:6.3px;top:147px;width:3px;height:0.6px;background:#bbb"></i>
<i style="left:3.3px;top:149.2px;width:16.3px;height:0.3px;background:#f0f0f4"></i>
<i style="left:3.6px;top:151px;width:1.7px;height:2.5px;background:#b8a060"></i>
<i style="left:6.3px;top:152px;width:3px;height:0.6px;background:#bbb"></i>
<i style="left:3.3px;top:154.2px;width:16.3px;height:0.3px;background:#f0f0f4"></i>
<i style="left:25.2px;top:129.5px;width:19.1px;height:40.5px;background:#fdfdff;border:0.35px solid #f0f0f6"></i>
<i style="left:26.2px;top:130.5px;width:1.5px;height:0.5px;background:#bbb"></i>
<i style="left:41.3px;top:130.5px;width:2px;height:0.5px;background:#777"></i>
<i style="left:26.2px;top:132.3px;width:0.8px;height:0.5px;background:#aaa"></i>
<i style="left:30.2px;top:132.3px;width:9.1px;height:0.5px;background:#ccc"></i>
<i style="left:26.2px;top:165.2px;width:17.1px;height:2.6px;background:linear-gradient(90deg,#56399f,#6a4cbc);border-radius:1.2px"></i>
<i style="left:30.2px;top:169px;width:9.1px;height:0.4px;background:#aaa"></i>
<i style="left:29.2px;top:137.2px;width:11.1px;height:1px;background:#b8b8c4"></i>
<i style="left:26.2px;top:140.8px;width:17.1px;height:3px;background:#fff;border:0.3px solid #e4e4ea"></i>
<i style="left:26.7px;top:141.5px;width:2.5px;height:2px;background:#ccc"></i>
<i style="left:30.2px;top:142.2px;width:4px;height:0.6px;background:#bbb"></i>
<i style="left:26.7px;top:146.5px;width:2.5px;height:2px;background:#8a8a8a"></i>
<i style="left:30.2px;top:147.2px;width:4px;height:0.6px;background:#bbb"></i>
<i style="left:26.7px;top:151.5px;width:2.5px;height:2px;background:#8a8a8a"></i>
<i style="left:30.2px;top:152.2px;width:4px;height:0.6px;background:#bbb"></i>
<i style="left:26.7px;top:156.5px;width:2.5px;height:2px;background:#8a8a8a"></i>
<i style="left:30.2px;top:157.2px;width:4px;height:0.6px;background:#bbb"></i>
<i style="left:49px;top:129.5px;width:18.5px;height:40.5px;background:#fdfdff;border:0.35px solid #f0f0f6"></i>
<i style="left:50px;top:130.5px;width:1.5px;height:0.5px;background:#bbb"></i>
<i style="left:64.5px;top:130.5px;width:2px;height:0.5px;background:#777"></i>
<i style="left:50px;top:132.3px;width:0.8px;height:0.5px;background:#aaa"></i>
<i style="left:54px;top:132.3px;width:8.5px;height:0.5px;background:#ccc"></i>
<i style="left:50px;top:165.2px;width:16.5px;height:2.6px;background:linear-gradient(90deg,#56399f,#6a4cbc);border-radius:1.2px"></i>
<i style="left:54px;top:169px;width:8.5px;height:0.4px;background:#aaa"></i>
<i style="left:53px;top:137.2px;width:10.5px;height:1px;background:#b8b8c4"></i>
<i style="left:50px;top:143.5px;width:16.5px;height:0.7px;background:#eef2ee"></i>
<i style="left:72px;top:129.5px;width:18.5px;height:40.5px;background:#fdfdff;border:0.35px solid #f0f0f6"></i>
<i style="left:73px;top:130.5px;width:1.5px;height:0.5px;background:#bbb"></i>
<i style="left:87.5px;top:130.5px;width:2px;height:0.5px;background:#777"></i>
<i style="left:73px;top:132.3px;width:0.8px;height:0.5px;background:#aaa"></i>
<i style="left:77px;top:132.3px;width:8.5px;height:0.5px;background:#ccc"></i>
<i style="left:73px;top:165.2px;width:16.5px;height:2.6px;background:linear-gradient(90deg,#56399f,#6a4cbc);border-radius:1.2px"></i>
<i style="left:77px;top:169px;width:8.5px;height:0.4px;background:#aaa"></i>
<i style="left:76px;top:137.2px;width:10.5px;height:1px;background:#b8b8c4"></i>
<i style="left:74px;top:140.5px;width:14.5px;height:1px;background:#f0f0f6"></i>
<i style="left:77.5px;top:144.5px;width:2px;height:1px;background:#555"></i>
<i style="left:73px;top:151.7px;width:16.5px;height:2.3px;background:linear-gradient(90deg,#56399f,#6a4cbc);border-radius:1.2px"></i>
<i style="left:73.5px;top:155px;width:0.3px;height:9px;background:#f0f0f4"></i>
<i style="left:79.5px;top:155px;width:0.3px;height:9px;background:#f0f0f4"></i>
<i style="left:85.5px;top:155px;width:0.3px;height:9px;background:#f0f0f4"></i>
<i style="left:75px;top:156.5px;width:0.8px;height:0.9px;background:#a8a8b8"></i>
<i style="left:80.8px;top:156.5px;width:0.8px;height:0.9px;background:#a8a8b8"></i>
<i style="left:86.6px;top:156.5px;width:0.8px;height:0.9px;background:#a8a8b8"></i>
<i style="left:75px;top:158.6px;width:0.8px;height:0.9px;background:#a8a8b8"></i>
<i style="left:80.8px;top:158.6px;width:0.8px;height:0.9px;background:#a8a8b8"></i>
<i style="left:86.6px;top:158.6px;width:0.8px;height:0.9px;background:#a8a8b8"></i>
<i style="left:75px;top:160.7px;width:0.8px;height:0.9px;background:#a8a8b8"></i>
<i style="left:80.8px;top:160.7px;width:0.8px;height:0.9px;background:#a8a8b8"></i>
<i style="left:86.6px;top:160.7px;width:0.8px;height:0.9px;background:#a8a8b8"></i>
<i style="left:75px;top:162.8px;width:0.8px;height:0.9px;background:#a8a8b8"></i>
<i style="left:80.8px;top:162.8px;width:0.8px;height:0.9px;background:#a8a8b8"></i>
<i style="left:86.6px;top:162.8px;width:0.8px;height:0.9px;background:#a8a8b8"></i>
<i style="left:96px;top:129.5px;width:18.3px;height:40.5px;background:#fdfdff;border:0.35px solid #f0f0f6"></i>
<i style="left:97px;top:130.5px;width:1.5px;height:0.5px;background:#bbb"></i>
<i style="left:111.3px;top:130.5px;width:2px;height:0.5px;background:#777"></i>
<i style="left:97px;top:132.3px;width:0.8px;height:0.5px;background:#aaa"></i>
<i style="left:101px;top:132.3px;width:8.3px;height:0.5px;background:#ccc"></i>
<i style="left:97px;top:165.2px;width:16.3px;height:2.6px;background:linear-gradient(90deg,#56399f,#6a4cbc);border-radius:1.2px"></i>
<i style="left:101px;top:169px;width:8.3px;height:0.4px;background:#aaa"></i>
<i style="left:100px;top:137.2px;width:10.3px;height:1px;background:#b8b8c4"></i>
<i style="left:98px;top:140.5px;width:14.3px;height:1px;background:#f0f0f6"></i>
<i style="left:101.5px;top:144.5px;width:2px;height:1px;background:#555"></i>
<i style="left:97px;top:151.7px;width:16.3px;height:2.3px;background:linear-gradient(90deg,#56399f,#6a4cbc);border-radius:1.2px"></i>
<i style="left:97.5px;top:155px;width:0.3px;height:9px;background:#f0f0f4"></i>
<i style="left:103.5px;top:155px;width:0.3px;height:9px;background:#f0f0f4"></i>
<i style="left:109.5px;top:155px;width:0.3px;height:9px;background:#f0f0f4"></i>
<i style="left:99px;top:156.5px;width:0.8px;height:0.9px;background:#a8a8b8"></i>
<i style="left:104.8px;top:156.5px;width:0.8px;height:0.9px;background:#a8a8b8"></i>
<i style="left:110.6px;top:156.5px;width:0.8px;height:0.9px;background:#a8a8b8"></i>
<i style="left:99px;top:158.6px;width:0.8px;height:0.9px;background:#a8a8b8"></i>
<i style="left:104.8px;top:158.6px;width:0.8px;height:0.9px;background:#a8a8b8"></i>
<i style="left:110.6px;top:158.6px;width:0.8px;height:0.9px;background:#a8a8b8"></i>
<i style="left:99px;top:160.7px;width:0.8px;height:0.9px;background:#a8a8b8"></i>
<i style="left:104.8px;top:160.7px;width:0.8px;height:0.9px;background:#a8a8b8"></i>
<i style="left:110.6px;top:160.7px;width:0.8px;height:0.9px;background:#a8a8b8"></i>
<i style="left:99px;top:162.8px;width:0.8px;height:0.9px;background:#a8a8b8"></i>
<i style="left:104.8px;top:162.8px;width:0.8px;height:0.9px;background:#a8a8b8"></i>
<i style="left:110.6px;top:162.8px;width:0.8px;height:0.9px;background:#a8a8b8"></i>
<i style="left:119.4px;top:129.5px;width:18.4px;height:40.5px;background:#fdfdff;border:0.35px solid #f0f0f6"></i>
<i style="left:120.4px;top:130.5px;width:1.5px;height:0.5px;background:#bbb"></i>
<i style="left:134.8px;top:130.5px;width:2px;height:0.5px;background:#777"></i>
<i style="left:120.4px;top:132.3px;width:0.8px;height:0.5px;background:#aaa"></i>
<i style="left:124.4px;top:132.3px;width:8.4px;height:0.5px;background:#ccc"></i>
<i style="left:120.4px;top:165.2px;width:16.4px;height:2.6px;background:linear-gradient(90deg,#56399f,#6a4cbc);border-radius:1.2px"></i>
<i style="left:124.4px;top:169px;width:8.4px;height:0.4px;background:#aaa"></i>
<i style="left:123.4px;top:137.2px;width:10.4px;height:1px;background:#b8b8c4"></i>
<i style="left:121.4px;top:140.5px;width:14.4px;height:1px;background:#f0f0f6"></i>
<i style="left:124.9px;top:144.5px;width:2px;height:1px;background:#555"></i>
<i style="left:120.4px;top:151.7px;width:16.4px;height:2.3px;background:linear-gradient(90deg,#56399f,#6a4cbc);border-radius:1.2px"></i>
<i style="left:120.9px;top:155px;width:0.3px;height:9px;background:#f0f0f4"></i>
<i style="left:126.9px;top:155px;width:0.3px;height:9px;background:#f0f0f4"></i>
<i style="left:132.9px;top:155px;width:0.3px;height:9px;background:#f0f0f4"></i>
<i style="left:122.4px;top:156.5px;width:0.8px;height:0.9px;background:#a8a8b8"></i>
<i style="left:128.2px;top:156.5px;width:0.8px;height:0.9px;background:#a8a8b8"></i>
<i style="left:134px;top:156.5px;width:0.8px;height:0.9px;background:#a8a8b8"></i>
<i style="left:122.4px;top:158.6px;width:0.8px;height:0.9px;background:#a8a8b8"></i>
<i style="left:128.2px;top:158.6px;width:0.8px;height:0.9px;background:#a8a8b8"></i>
<i style="left:134px;top:158.6px;width:0.8px;height:0.9px;background:#a8a8b8"></i>
<i style="left:122.4px;top:160.7px;width:0.8px;height:0.9px;background:#a8a8b8"></i>
<i style="left:128.2px;top:160.7px;width:0.8px;height:0.9px;background:#a8a8b8"></i>
<i style="left:134px;top:160.7px;width:0.8px;height:0.9px;background:#a8a8b8"></i>
<i style="left:122.4px;top:162.8px;width:0.8px;height:0.9px;background:#a8a8b8"></i>
<i style="left:128.2px;top:162.8px;width:0.8px;height:0.9px;background:#a8a8b8"></i>
<i style="left:134px;top:162.8px;width:0.8px;height:0.9px;background:#a8a8b8"></i>
<i style="left:143px;top:129.5px;width:18.5px;height:40.5px;background:#fdfdff;border:0.35px solid #f0f0f6"></i>
<i style="left:144px;top:130.5px;width:1.5px;height:0.5px;background:#bbb"></i>
<i style="left:158.5px;top:130.5px;width:2px;height:0.5px;background:#777"></i>
<i style="left:144px;top:132.3px;width:0.8px;height:0.5px;background:#aaa"></i>
<i style="left:148px;top:132.3px;width:8.5px;height:0.5px;background:#ccc"></i>
<i style="left:144px;top:165.2px;width:16.5px;height:2.6px;background:linear-gradient(90deg,#56399f,#6a4cbc);border-radius:1.2px"></i>
<i style="left:148px;top:169px;width:8.5px;height:0.4px;background:#aaa"></i>
<i style="left:147px;top:137.2px;width:10.5px;height:1px;background:#b8b8c4"></i>
<i style="left:147px;top:135.8px;width:10.5px;height:0.8px;background:#b8b8c4"></i>
<i style="left:144.5px;top:141px;width:3.5px;height:0.6px;background:#aaa"></i>
<i style="left:144.5px;top:142.2px;width:15px;height:0.3px;background:#e8e8ee"></i>
<i style="left:144.5px;top:146.5px;width:3.5px;height:0.6px;background:#aaa"></i>
<i style="left:144.5px;top:147.7px;width:15px;height:0.3px;background:#e8e8ee"></i>
<i style="left:144.5px;top:151.5px;width:3.5px;height:0.6px;background:#aaa"></i>
<i style="left:144.5px;top:152.7px;width:15px;height:0.3px;background:#e8e8ee"></i>
<i style="left:144.5px;top:156.5px;width:3.5px;height:0.6px;background:#aaa"></i>
<i style="left:144.5px;top:157.7px;width:15px;height:0.3px;background:#e8e8ee"></i>
<i style="left:144.5px;top:140.5px;width:15px;height:3px;background:#fff;border:0.3px solid #ddd"></i>
<i style="left:166.5px;top:129.5px;width:18.5px;height:40.5px;background:#fdfdff;border:0.35px solid #f0f0f6"></i>
<i style="left:167.5px;top:130.5px;width:1.5px;height:0.5px;background:#bbb"></i>
<i style="left:182px;top:130.5px;width:2px;height:0.5px;background:#777"></i>
<i style="left:167.5px;top:132.3px;width:0.8px;height:0.5px;background:#aaa"></i>
<i style="left:171.5px;top:132.3px;width:8.5px;height:0.5px;background:#ccc"></i>
<i style="left:167.5px;top:165.2px;width:16.5px;height:2.6px;background:linear-gradient(90deg,#56399f,#6a4cbc);border-radius:1.2px"></i>
<i style="left:171.5px;top:169px;width:8.5px;height:0.4px;background:#aaa"></i>
<i style="left:170.5px;top:137.2px;width:10.5px;height:1px;background:#b8b8c4"></i>
<i style="left:170.5px;top:135.8px;width:10.5px;height:0.8px;background:#b8b8c4"></i>
<i style="left:168px;top:140.5px;width:2px;height:2.5px;background:#8a8a8a"></i>
<i style="left:171px;top:141.3px;width:4.5px;height:0.5px;background:#bbb"></i>
<i style="left:182px;top:141.1px;width:1.5px;height:1px;background:#555"></i>
<i style="left:167.5px;top:143.8px;width:16.5px;height:0.3px;background:#f0f0f4"></i>
<i style="left:168px;top:145.5px;width:2px;height:2.5px;background:#8a8a8a"></i>
<i style="left:171px;top:146.3px;width:4.5px;height:0.5px;background:#bbb"></i>
<i style="left:167.5px;top:148.8px;width:16.5px;height:0.3px;background:#f0f0f4"></i>
<i style="left:168px;top:150.5px;width:2px;height:2.5px;background:#8a8a8a"></i>
<i style="left:171px;top:151.3px;width:4.5px;height:0.5px;background:#bbb"></i>
<i style="left:182px;top:151.1px;width:1.5px;height:1px;background:#555"></i>
<i style="left:167.5px;top:153.8px;width:16.5px;height:0.3px;background:#f0f0f4"></i>
<i style="left:168px;top:155.5px;width:2px;height:2.5px;background:#8a8a8a"></i>
<i style="left:171px;top:156.3px;width:4.5px;height:0.5px;background:#bbb"></i>
<i style="left:182px;top:156.1px;width:1.5px;height:1px;background:#555"></i>
<i style="left:167.5px;top:158.8px;width:16.5px;height:0.3px;background:#f0f0f4"></i>
<i style="left:168px;top:160.5px;width:2px;height:2.5px;background:#8a8a8a"></i>
<i style="left:171px;top:161.3px;width:4.5px;height:0.5px;background:#bbb"></i>
<i style="left:167.5px;top:163.8px;width:16.5px;height:0.3px;background:#f0f0f4"></i>
<i style="left:190px;top:129.5px;width:18px;height:40.5px;background:#e6e8fa;border:0.35px solid #e0e2f4"></i>
<i style="left:191px;top:130.5px;width:1.5px;height:0.5px;background:#bbb"></i>
<i style="left:205px;top:130.5px;width:2px;height:0.5px;background:#777"></i>
<i style="left:191px;top:132.3px;width:0.8px;height:0.5px;background:#aaa"></i>
<i style="left:195px;top:132.3px;width:8px;height:0.5px;background:#ccc"></i>
<i style="left:191px;top:165.2px;width:16px;height:2.6px;background:linear-gradient(90deg,#56399f,#6a4cbc);border-radius:1.2px"></i>
<i style="left:195px;top:169px;width:8px;height:0.4px;background:#aaa"></i>
<i style="left:194px;top:137.2px;width:10px;height:1px;background:#b8b8c4"></i>
<i style="left:194px;top:135.8px;width:10px;height:0.8px;background:#8a8aa8"></i>
<i style="left:195.5px;top:157.5px;width:8.5px;height:0.5px;background:#c8c8e0"></i>
<i style="left:196.5px;top:159px;width:6.5px;height:0.5px;background:#c8c8e0"></i>
<svg style="position:absolute;left:193.5px;top:140.3px" width="12.4" height="12.4" viewBox="0 0 12.4 12.4"><circle cx="6.2" cy="6.2" r="5.4" fill="none" stroke="#d8dcf4" stroke-width="1.2"/><path d="M6.2 0.8 A5.4 5.4 0 1 1 1.6 9" fill="none" stroke="#4a3aa8" stroke-width="1.2"/><rect x="4" y="5.4" width="4.4" height="1.6" fill="#666"/></svg>
<i style="left:2px;top:184px;width:17.8px;height:70px;background:#f8f9fd;border:0.35px solid #eceef5"></i>
<i style="left:3px;top:185px;width:1.5px;height:0.5px;background:#bbb"></i>
<i style="left:16.8px;top:185px;width:2px;height:0.5px;background:#888"></i>
<i style="left:3px;top:187.5px;width:5px;height:0.9px;background:#555"></i>
<i style="left:17.5px;top:187.3px;width:1px;height:1.3px;background:#555"></i>
<i style="left:3px;top:190.5px;width:12px;height:1px;background:#f0f0f8"></i>
<i style="left:3.5px;top:190.8px;width:5.5px;height:0.4px;background:#a8a8c8"></i>
<i style="left:3px;top:194px;width:3px;height:0.6px;background:#666"></i>
<i style="left:3.5px;top:196.5px;width:1.5px;height:2px;background:#777"></i>
<i style="left:7.8px;top:196.5px;width:1.5px;height:2px;background:#777"></i>
<i style="left:12.1px;top:196.5px;width:1.5px;height:2px;background:#777"></i>
<i style="left:16.4px;top:196.5px;width:1.5px;height:2px;background:#777"></i>
<i style="left:2.5px;top:201.2px;width:16.5px;height:9.5px;background:#e4e8f8"></i>
<i style="left:3.5px;top:203px;width:6.5px;height:0.8px;background:#8a8ab8"></i>
<i style="left:3.5px;top:205px;width:4.5px;height:0.5px;background:#aab"></i>
<i style="left:3px;top:208px;width:9.5px;height:2px;background:#5a3ea8;border-radius:1px"></i>
<svg style="position:absolute;left:13.8px;top:204.9px" width="4.5" height="3.2" viewBox="0 0 10 7.2"><circle cx="2.6" cy="1.3" r="1.1" fill="#3a4aa8"/><path d="M0 7.2 L3 3.4 L4.6 5 L7 2.4 L10 7.2Z" fill="#3a4aa8"/></svg>
<i style="left:3px;top:212.5px;width:7px;height:0.7px;background:#888"></i>
<i style="left:2.5px;top:216.2px;width:10.5px;height:7.5px;background:#ebebf3;border-radius:0.5px"></i>
<i style="left:6.75px;top:219.15px;width:2px;height:1.6px;background:#9a9ab0"></i>
<i style="left:14.5px;top:216.2px;width:5px;height:7.5px;background:#ebebf3;border-radius:0.5px"></i>
<i style="left:16px;top:219.15px;width:2px;height:1.6px;background:#9a9ab0"></i>
<i style="left:3px;top:225px;width:5px;height:0.6px;background:#bbb"></i>
<i style="left:3px;top:229px;width:5px;height:0.6px;background:#888"></i>
<svg style="position:absolute;left:3.4px;top:231.8px" width="3.2" height="2.3" viewBox="0 0 10 7.2"><circle cx="2.6" cy="1.3" r="1.1" fill="#5a5ab0"/><path d="M0 7.2 L3 3.4 L4.6 5 L7 2.4 L10 7.2Z" fill="#5a5ab0"/></svg>
<i style="left:7.5px;top:232.4px;width:6.5px;height:0.5px;background:#bbb"></i>
<i style="left:7.5px;top:233.6px;width:3.5px;height:0.4px;background:#ddd"></i>
<svg style="position:absolute;left:3.4px;top:236.6px" width="3.2" height="2.3" viewBox="0 0 10 7.2"><circle cx="2.6" cy="1.3" r="1.1" fill="#5a5ab0"/><path d="M0 7.2 L3 3.4 L4.6 5 L7 2.4 L10 7.2Z" fill="#5a5ab0"/></svg>
<i style="left:7.5px;top:237.2px;width:6.5px;height:0.5px;background:#bbb"></i>
<i style="left:7.5px;top:238.4px;width:3.5px;height:0.4px;background:#ddd"></i>
<svg style="position:absolute;left:3.4px;top:241.4px" width="3.2" height="2.3" viewBox="0 0 10 7.2"><circle cx="2.6" cy="1.3" r="1.1" fill="#5a5ab0"/><path d="M0 7.2 L3 3.4 L4.6 5 L7 2.4 L10 7.2Z" fill="#5a5ab0"/></svg>
<i style="left:7.5px;top:242px;width:6.5px;height:0.5px;background:#bbb"></i>
<i style="left:7.5px;top:243.2px;width:3.5px;height:0.4px;background:#ddd"></i>
<svg style="position:absolute;left:3.4px;top:246.2px" width="3.2" height="2.3" viewBox="0 0 10 7.2"><circle cx="2.6" cy="1.3" r="1.1" fill="#5a5ab0"/><path d="M0 7.2 L3 3.4 L4.6 5 L7 2.4 L10 7.2Z" fill="#5a5ab0"/></svg>
<i style="left:7.5px;top:246.8px;width:6.5px;height:0.5px;background:#bbb"></i>
<i style="left:7.5px;top:248px;width:3.5px;height:0.4px;background:#ddd"></i>
<i style="left:3.9px;top:250.5px;width:1.2px;height:1.2px;background:#aaa"></i>
<i style="left:8.17px;top:250.5px;width:1.2px;height:1.2px;background:#aaa"></i>
<i style="left:12.43px;top:250.5px;width:1.2px;height:1.2px;background:#aaa"></i>
<i style="left:16.7px;top:250.5px;width:1.2px;height:1.2px;background:#aaa"></i>
<i style="left:7.9px;top:252.7px;width:6px;height:0.4px;background:#888"></i>
<i style="left:25px;top:184px;width:18px;height:42px;background:#f8f9fd;border:0.35px solid #eceef5"></i>
<i style="left:26px;top:185px;width:1.5px;height:0.5px;background:#bbb"></i>
<i style="left:40px;top:185px;width:2px;height:0.5px;background:#888"></i>
<i style="left:26px;top:187.5px;width:4px;height:0.9px;background:#555"></i>
<i style="left:41px;top:187.5px;width:1px;height:1px;background:#888"></i>
<i style="left:26.5px;top:190.5px;width:2.5px;height:0.8px;background:#ccc"></i>
<i style="left:31px;top:190.3px;width:4px;height:1.5px;background:#5a3ea8;border-radius:0.8px"></i>
<i style="left:37px;top:190.5px;width:2px;height:0.8px;background:#ccc"></i>
<i style="left:40.5px;top:190.5px;width:1.5px;height:0.8px;background:#ccc"></i>
<i style="left:25.8px;top:193.7px;width:7.7px;height:5.4px;background:#ebebf3;border-radius:0.5px"></i>
<i style="left:28.65px;top:195.6px;width:2px;height:1.6px;background:#9a9ab0"></i>
<i style="left:34.5px;top:193.7px;width:7.7px;height:5.4px;background:#ebebf3;border-radius:0.5px"></i>
<i style="left:37.35px;top:195.6px;width:2px;height:1.6px;background:#9a9ab0"></i>
<i style="left:26px;top:199.9px;width:4px;height:0.5px;background:#bbb"></i>
<i style="left:35px;top:199.9px;width:4px;height:0.5px;background:#bbb"></i>
<i style="left:25.8px;top:203px;width:7.7px;height:5.4px;background:#ebebf3;border-radius:0.5px"></i>
<i style="left:28.65px;top:204.9px;width:2px;height:1.6px;background:#9a9ab0"></i>
<i style="left:34.5px;top:203px;width:7.7px;height:5.4px;background:#ebebf3;border-radius:0.5px"></i>
<i style="left:37.35px;top:204.9px;width:2px;height:1.6px;background:#9a9ab0"></i>
<i style="left:26px;top:209.2px;width:4px;height:0.5px;background:#bbb"></i>
<i style="left:35px;top:209.2px;width:4px;height:0.5px;background:#bbb"></i>
<i style="left:25.8px;top:212.3px;width:7.7px;height:5.4px;background:#ebebf3;border-radius:0.5px"></i>
<i style="left:28.65px;top:214.2px;width:2px;height:1.6px;background:#9a9ab0"></i>
<i style="left:34.5px;top:212.3px;width:7.7px;height:5.4px;background:#ebebf3;border-radius:0.5px"></i>
<i style="left:37.35px;top:214.2px;width:2px;height:1.6px;background:#9a9ab0"></i>
<i style="left:26px;top:218.5px;width:4px;height:0.5px;background:#bbb"></i>
<i style="left:35px;top:218.5px;width:4px;height:0.5px;background:#bbb"></i>
<i style="left:26.9px;top:222.5px;width:1.2px;height:1.2px;background:#aaa"></i>
<i style="left:31.23px;top:222.5px;width:1.2px;height:1.2px;background:#aaa"></i>
<i style="left:35.57px;top:222.5px;width:1.2px;height:1.2px;background:#aaa"></i>
<i style="left:39.9px;top:222.5px;width:1.2px;height:1.2px;background:#aaa"></i>
<i style="left:31px;top:224.7px;width:6px;height:0.4px;background:#888"></i>
<i style="left:48px;top:184px;width:18.4px;height:46.8px;background:#f8f9fd;border:0.35px solid #eceef5"></i>
<i style="left:49px;top:185px;width:1.5px;height:0.5px;background:#bbb"></i>
<i style="left:63.4px;top:185px;width:2px;height:0.5px;background:#888"></i>
<i style="left:49px;top:187.5px;width:4px;height:0.9px;background:#555"></i>
<i style="left:49px;top:190.5px;width:6px;height:0.5px;background:#ccc"></i>
<i style="left:48.8px;top:193px;width:16.7px;height:5.4px;background:#e4e8f8"></i>
<i style="left:50px;top:194.5px;width:6px;height:0.7px;background:#8a8ab8"></i>
<svg style="position:absolute;left:60.5px;top:194.8px" width="4" height="2.9" viewBox="0 0 10 7.2"><circle cx="2.6" cy="1.3" r="1.1" fill="#3a4aa8"/><path d="M0 7.2 L3 3.4 L4.6 5 L7 2.4 L10 7.2Z" fill="#3a4aa8"/></svg>
<i style="left:49px;top:200px;width:7.5px;height:6.2px;background:#ebebf3;border-radius:0.5px"></i>
<i style="left:51.75px;top:202.3px;width:2px;height:1.6px;background:#9a9ab0"></i>
<i style="left:58px;top:200px;width:7.5px;height:6.2px;background:#ebebf3;border-radius:0.5px"></i>
<i style="left:60.75px;top:202.3px;width:2px;height:1.6px;background:#9a9ab0"></i>
<i style="left:49px;top:207px;width:5px;height:0.5px;background:#bbb"></i>
<i style="left:58px;top:207px;width:5px;height:0.5px;background:#bbb"></i>
<i style="left:49px;top:209px;width:7.5px;height:6.2px;background:#ebebf3;border-radius:0.5px"></i>
<i style="left:51.75px;top:211.3px;width:2px;height:1.6px;background:#9a9ab0"></i>
<i style="left:58px;top:209px;width:7.5px;height:6.2px;background:#ebebf3;border-radius:0.5px"></i>
<i style="left:60.75px;top:211.3px;width:2px;height:1.6px;background:#9a9ab0"></i>
<i style="left:49px;top:216px;width:5px;height:0.5px;background:#bbb"></i>
<i style="left:58px;top:216px;width:5px;height:0.5px;background:#bbb"></i>
<i style="left:49px;top:218px;width:7.5px;height:6.2px;background:#ebebf3;border-radius:0.5px"></i>
<i style="left:51.75px;top:220.3px;width:2px;height:1.6px;background:#9a9ab0"></i>
<i style="left:58px;top:218px;width:7.5px;height:6.2px;background:#ebebf3;border-radius:0.5px"></i>
<i style="left:60.75px;top:220.3px;width:2px;height:1.6px;background:#9a9ab0"></i>
<i style="left:49px;top:225px;width:5px;height:0.5px;background:#bbb"></i>
<i style="left:58px;top:225px;width:5px;height:0.5px;background:#bbb"></i>
<i style="left:49.9px;top:227.5px;width:1.2px;height:1.2px;background:#aaa"></i>
<i style="left:54.37px;top:227.5px;width:1.2px;height:1.2px;background:#aaa"></i>
<i style="left:58.83px;top:227.5px;width:1.2px;height:1.2px;background:#aaa"></i>
<i style="left:63.3px;top:227.5px;width:1.2px;height:1.2px;background:#aaa"></i>
<i style="left:54.2px;top:229.7px;width:6px;height:0.4px;background:#888"></i>
<i style="left:71.8px;top:184px;width:17.8px;height:40px;background:#f8f9fd;border:0.35px solid #eceef5"></i>
<i style="left:72.8px;top:185px;width:1.5px;height:0.5px;background:#bbb"></i>
<i style="left:86.6px;top:185px;width:2px;height:0.5px;background:#888"></i>
<i style="left:72.5px;top:187.5px;width:4px;height:0.9px;background:#555"></i>
<i style="left:87.5px;top:187.5px;width:1.5px;height:0.9px;background:#888"></i>
<i style="left:72px;top:190.1px;width:3.6px;height:3.6px;background:#5a3ea8"></i>
<i style="left:77.5px;top:191.3px;width:1px;height:1.2px;background:#888"></i>
<i style="left:80.7px;top:191.3px;width:1px;height:1.2px;background:#888"></i>
<i style="left:83.9px;top:191.3px;width:1px;height:1.2px;background:#888"></i>
<i style="left:87.1px;top:191.3px;width:1px;height:1.2px;background:#888"></i>
<i style="left:72.5px;top:195.8px;width:2.5px;height:0.6px;background:#999"></i>
<i style="left:78px;top:195.5px;width:1.5px;height:1.5px;background:#555"></i>
<i style="left:81px;top:195.8px;width:3px;height:0.6px;background:#999"></i>
<i style="left:86px;top:195.5px;width:2px;height:1.5px;background:#444"></i>
<div style="left:74.5px;top:198px;width:4px;height:4px;border-radius:50%;border:0.5px solid #6a5ab8"></div>
<i style="left:81px;top:199px;width:5px;height:0.5px;background:#bbb"></i>
<i style="left:81px;top:201px;width:3px;height:0.5px;background:#ccc"></i>
<i style="left:72.5px;top:205px;width:2.5px;height:0.5px;background:#999"></i>
<i style="left:78px;top:204.8px;width:1.5px;height:1.2px;background:#555"></i>
<i style="left:81px;top:205px;width:3px;height:0.5px;background:#999"></i>
<i style="left:86.5px;top:204.8px;width:1.5px;height:1.2px;background:#555"></i>
<i style="left:73px;top:209px;width:2px;height:0.5px;background:#aaa"></i>
<i style="left:77px;top:209px;width:2px;height:2px;background:#777"></i>
<div style="left:83px;top:207px;width:3.5px;height:3.5px;border-radius:50%;border:0.5px solid #6a5ab8;border-left-color:transparent"></div>
<i style="left:72.5px;top:213.5px;width:7px;height:1.5px;background:#d8f4ec"></i>
<i style="left:73px;top:214.5px;width:6px;height:0.4px;background:#60c8a8"></i>
<i style="left:81px;top:214px;width:3px;height:0.5px;background:#999"></i>
<i style="left:86.5px;top:213px;width:1.5px;height:1.5px;background:#8a5050"></i>
<i style="left:73.7px;top:219.5px;width:1.2px;height:1.2px;background:#aaa"></i>
<i style="left:77.97px;top:219.5px;width:1.2px;height:1.2px;background:#aaa"></i>
<i style="left:82.23px;top:219.5px;width:1.2px;height:1.2px;background:#aaa"></i>
<i style="left:86.5px;top:219.5px;width:1.2px;height:1.2px;background:#aaa"></i>
<i style="left:77.7px;top:221.7px;width:6px;height:0.4px;background:#888"></i>
<i style="left:95px;top:184px;width:18.6px;height:58.4px;background:#f8f9fd;border:0.35px solid #eceef5"></i>
<i style="left:96px;top:185px;width:1.5px;height:0.5px;background:#bbb"></i>
<i style="left:110.6px;top:185px;width:2px;height:0.5px;background:#888"></i>
<i style="left:96px;top:187.5px;width:3px;height:0.9px;background:#555"></i>
<i style="left:102.5px;top:190.5px;width:3.5px;height:2.5px;background:#555;border-radius:50%"></i>
<i style="left:101px;top:194.5px;width:6.5px;height:0.5px;background:#aaa"></i>
<i style="left:102px;top:195.8px;width:4.5px;height:0.4px;background:#ccc"></i>
<i style="left:99px;top:197.5px;width:1.8px;height:1.7px;background:#888"></i>
<i style="left:104px;top:197.5px;width:1.8px;height:1.7px;background:#888"></i>
<i style="left:109px;top:197.5px;width:1.8px;height:1.7px;background:#888"></i>
<i style="left:95.8px;top:201.7px;width:17px;height:2.1px;background:#5a3ea8;border-radius:1px"></i>
<i style="left:96px;top:207px;width:4px;height:0.5px;background:#aaa"></i>
<i style="left:95.5px;top:208.8px;width:17.5px;height:0.3px;background:#f2f2f6"></i>
<i style="left:96px;top:210.5px;width:5px;height:0.5px;background:#aaa"></i>
<i style="left:95.5px;top:212.3px;width:17.5px;height:0.3px;background:#f2f2f6"></i>
<i style="left:96px;top:214px;width:6px;height:0.5px;background:#aaa"></i>
<i style="left:95.5px;top:215.8px;width:17.5px;height:0.3px;background:#f2f2f6"></i>
<i style="left:96px;top:219px;width:4px;height:0.5px;background:#aaa"></i>
<i style="left:95.5px;top:220.8px;width:17.5px;height:0.3px;background:#f2f2f6"></i>
<i style="left:96px;top:223px;width:5px;height:0.5px;background:#aaa"></i>
<i style="left:95.5px;top:224.8px;width:17.5px;height:0.3px;background:#f2f2f6"></i>
<i style="left:96px;top:226.5px;width:6px;height:0.5px;background:#aaa"></i>
<i style="left:95.5px;top:228.3px;width:17.5px;height:0.3px;background:#f2f2f6"></i>
<i style="left:96px;top:230px;width:4px;height:0.5px;background:#aaa"></i>
<i style="left:95.5px;top:231.8px;width:17.5px;height:0.3px;background:#f2f2f6"></i>
<i style="left:96px;top:233.5px;width:5px;height:0.5px;background:#aaa"></i>
<i style="left:95.5px;top:235.3px;width:17.5px;height:0.3px;background:#f2f2f6"></i>
<i style="left:110px;top:212.5px;width:2.5px;height:2.5px;background:#555;border-radius:50%"></i>
<i style="left:95.6px;top:217px;width:2.4px;height:0.6px;background:#777"></i>
<i style="left:110px;top:225.5px;width:2.3px;height:1.8px;background:#5a3ea8;border-radius:0.8px"></i>
<i style="left:110px;top:228.5px;width:2.3px;height:1.8px;background:#5a3ea8;border-radius:0.8px"></i>
<i style="left:110.5px;top:233px;width:1.5px;height:1px;background:#555"></i>
<i style="left:96.9px;top:238.5px;width:1.2px;height:1.2px;background:#aaa"></i>
<i style="left:101.43px;top:238.5px;width:1.2px;height:1.2px;background:#aaa"></i>
<i style="left:105.97px;top:238.5px;width:1.2px;height:1.2px;background:#aaa"></i>
<i style="left:110.5px;top:238.5px;width:1.2px;height:1.2px;background:#aaa"></i>
<i style="left:101.3px;top:240.7px;width:6px;height:0.4px;background:#888"></i>
<i style="left:118.5px;top:184px;width:18.3px;height:39.7px;background:#f8f9fd;border:0.35px solid #eceef5"></i>
<i style="left:119.5px;top:185px;width:1.5px;height:0.5px;background:#bbb"></i>
<i style="left:133.8px;top:185px;width:2px;height:0.5px;background:#888"></i>
<i style="left:119.5px;top:187.5px;width:3.5px;height:0.9px;background:#555"></i>
<i style="left:131.5px;top:187px;width:4.5px;height:2px;background:#8a8a8a"></i>
<i style="left:126px;top:190.5px;width:3.5px;height:2.5px;background:#555;border-radius:50%"></i>
<i style="left:125px;top:194.5px;width:6px;height:0.5px;background:#aaa"></i>
<i style="left:125.5px;top:195.8px;width:5px;height:0.4px;background:#ccc"></i>
<i style="left:122px;top:197.5px;width:1.8px;height:1.7px;background:#888"></i>
<i style="left:127.5px;top:197.5px;width:1.8px;height:1.7px;background:#888"></i>
<i style="left:133px;top:197.5px;width:1.8px;height:1.7px;background:#888"></i>
<i style="left:119.5px;top:202.5px;width:4.5px;height:0.5px;background:#aaa"></i>
<i style="left:118.8px;top:204.5px;width:17.6px;height:0.3px;background:#f0f0f4"></i>
<i style="left:119.5px;top:206px;width:6.5px;height:0.5px;background:#aaa"></i>
<i style="left:118.8px;top:208px;width:17.6px;height:0.3px;background:#f0f0f4"></i>
<i style="left:119.5px;top:209.5px;width:4.5px;height:0.5px;background:#aaa"></i>
<i style="left:118.8px;top:211.5px;width:17.6px;height:0.3px;background:#f0f0f4"></i>
<i style="left:119.5px;top:213px;width:6.5px;height:0.5px;background:#aaa"></i>
<i style="left:118.8px;top:215px;width:17.6px;height:0.3px;background:#f0f0f4"></i>
<i style="left:119.5px;top:216.5px;width:4.5px;height:0.5px;background:#aaa"></i>
<i style="left:118.8px;top:218.5px;width:17.6px;height:0.3px;background:#f0f0f4"></i>
<i style="left:125px;top:205.5px;width:1.5px;height:2px;background:#444"></i>
<i style="left:120.4px;top:219.5px;width:1.2px;height:1.2px;background:#aaa"></i>
<i style="left:124.83px;top:219.5px;width:1.2px;height:1.2px;background:#aaa"></i>
<i style="left:129.27px;top:219.5px;width:1.2px;height:1.2px;background:#aaa"></i>
<i style="left:133.7px;top:219.5px;width:1.2px;height:1.2px;background:#aaa"></i>
<i style="left:124.65px;top:221.7px;width:6px;height:0.4px;background:#888"></i>
<i style="left:142px;top:184px;width:18.8px;height:41px;background:#fff;border:0.45px solid #b4b4b4"></i>
<i style="left:142px;top:184px;width:18.8px;height:1.3px;background:#8a8a8a"></i>
<i style="left:143.5px;top:188px;width:3px;height:0.6px;background:#888"></i>
<i style="left:158.5px;top:187.5px;width:1px;height:1px;background:#999"></i>
<i style="left:143.5px;top:191px;width:4.5px;height:0.6px;background:#8a8a8a"></i>
<i style="left:144px;top:194px;width:3px;height:0.5px;background:#ccc"></i>
<i style="left:149.5px;top:193.2px;width:4px;height:1.8px;background:#5a3ea8;border-radius:1px"></i>
<i style="left:155px;top:194px;width:3px;height:0.5px;background:#ccc"></i>
<i style="left:145px;top:197px;width:3px;height:0.5px;background:#ccc"></i>
<i style="left:150.5px;top:197px;width:2.5px;height:0.5px;background:#ccc"></i>
<i style="left:155px;top:197px;width:3px;height:0.5px;background:#ccc"></i>
<i style="left:143.5px;top:199.5px;width:1.5px;height:0.5px;background:#aaa"></i>
<i style="left:143.8px;top:201.3px;width:3.7px;height:1.4px;background:#5a3ea8;border-radius:0.8px"></i>
<i style="left:150px;top:201.8px;width:3px;height:0.5px;background:#ccc"></i>
<i style="left:143.5px;top:205px;width:2.5px;height:0.5px;background:#999"></i>
<i style="left:143.8px;top:206.5px;width:4.2px;height:1.5px;background:#5a3ea8;border-radius:0.5px"></i>
<i style="left:150px;top:207px;width:4px;height:0.5px;background:#ccc"></i>
<i style="left:155.5px;top:207px;width:3.5px;height:0.5px;background:#ccc"></i>
<i style="left:143.5px;top:210px;width:2.5px;height:0.5px;background:#999"></i>
<i style="left:143.5px;top:211.8px;width:5px;height:1.5px;background:#5a3ea8;border-radius:0.5px"></i>
<i style="left:150px;top:212.3px;width:4px;height:0.5px;background:#ccc"></i>
<i style="left:155.5px;top:212.3px;width:3.5px;height:0.5px;background:#ccc"></i>
<i style="left:143.5px;top:215.5px;width:3.5px;height:0.5px;background:#999"></i>
<i style="left:144px;top:217px;width:3px;height:0.5px;background:#ccc"></i>
<i style="left:150px;top:217px;width:3px;height:0.5px;background:#ccc"></i>
<i style="left:155px;top:217px;width:3px;height:0.5px;background:#ccc"></i>
<i style="left:144px;top:221px;width:3px;height:0.6px;background:#aaa"></i>
<i style="left:151px;top:220.8px;width:9px;height:2.2px;background:linear-gradient(90deg,#5a3ea8,#7a5ac8);border-radius:1.1px"></i>
<i style="left:2px;top:269px;width:17.8px;height:42px;background:#f8f9fd;border:0.35px solid #eceef5"></i>
<i style="left:3px;top:270px;width:1.5px;height:0.5px;background:#bbb"></i>
<i style="left:16.8px;top:270px;width:2px;height:0.5px;background:#888"></i>
<i style="left:7px;top:271.8px;width:4px;height:0.6px;background:#888"></i>
<i style="left:3px;top:274.6px;width:10px;height:0.8px;background:#c0b8e8"></i>
<i style="left:3.2px;top:277.3px;width:2px;height:2.3px;background:#b8a060"></i>
<i style="left:6.5px;top:277.9px;width:4.5px;height:0.5px;background:#bbb"></i>
<i style="left:3.2px;top:281.6px;width:2px;height:2.3px;background:#777"></i>
<i style="left:6.5px;top:282.2px;width:6px;height:0.5px;background:#bbb"></i>
<i style="left:3.2px;top:285.9px;width:2px;height:2.3px;background:#b8a060"></i>
<i style="left:6.5px;top:286.5px;width:7.5px;height:0.5px;background:#bbb"></i>
<i style="left:3.2px;top:290.2px;width:2px;height:2.3px;background:#8a7050"></i>
<i style="left:6.5px;top:290.8px;width:4.5px;height:0.5px;background:#bbb"></i>
<i style="left:3.2px;top:294.5px;width:2px;height:2.3px;background:#777"></i>
<i style="left:6.5px;top:295.1px;width:6px;height:0.5px;background:#bbb"></i>
<i style="left:3.2px;top:298.8px;width:2px;height:2.3px;background:#b8a060"></i>
<i style="left:6.5px;top:299.4px;width:7.5px;height:0.5px;background:#bbb"></i>
<i style="left:3.2px;top:303.1px;width:2px;height:2.3px;background:#555"></i>
<i style="left:6.5px;top:303.7px;width:4.5px;height:0.5px;background:#bbb"></i>
<i style="left:3.9px;top:307.5px;width:1.2px;height:1.2px;background:#aaa"></i>
<i style="left:8.17px;top:307.5px;width:1.2px;height:1.2px;background:#aaa"></i>
<i style="left:12.43px;top:307.5px;width:1.2px;height:1.2px;background:#aaa"></i>
<i style="left:16.7px;top:307.5px;width:1.2px;height:1.2px;background:#aaa"></i>
<i style="left:7.9px;top:309.7px;width:6px;height:0.4px;background:#888"></i>
<i style="left:25px;top:269px;width:18px;height:48px;background:#f8f9fd;border:0.35px solid #eceef5"></i>
<i style="left:26px;top:270px;width:1.5px;height:0.5px;background:#bbb"></i>
<i style="left:40px;top:270px;width:2px;height:0.5px;background:#888"></i>
<i style="left:30px;top:271.8px;width:5px;height:0.6px;background:#888"></i>
<i style="left:26px;top:274.6px;width:10px;height:0.8px;background:#c0b8e8"></i>
<i style="left:26px;top:277.5px;width:5px;height:1.5px;background:#5a3ea8;border-radius:0.8px"></i>
<i style="left:33px;top:278px;width:3px;height:0.5px;background:#ccc"></i>
<i style="left:38px;top:278px;width:3px;height:0.5px;background:#ccc"></i>
<svg style="position:absolute;left:26.0px;top:280.6px" width="3" height="2.2" viewBox="0 0 10 7.2"><circle cx="2.6" cy="1.3" r="1.1" fill="#5a5ab0"/><path d="M0 7.2 L3 3.4 L4.6 5 L7 2.4 L10 7.2Z" fill="#5a5ab0"/></svg>
<i style="left:30px;top:280.9px;width:5px;height:0.5px;background:#aaa"></i>
<i style="left:30px;top:282.2px;width:2px;height:0.4px;background:#ccc"></i>
<svg style="position:absolute;left:26.0px;top:285.3px" width="3" height="2.2" viewBox="0 0 10 7.2"><circle cx="2.6" cy="1.3" r="1.1" fill="#5a5ab0"/><path d="M0 7.2 L3 3.4 L4.6 5 L7 2.4 L10 7.2Z" fill="#5a5ab0"/></svg>
<i style="left:30px;top:285.6px;width:7px;height:0.5px;background:#aaa"></i>
<i style="left:30px;top:286.9px;width:2px;height:0.4px;background:#ccc"></i>
<svg style="position:absolute;left:26.0px;top:290.0px" width="3" height="2.2" viewBox="0 0 10 7.2"><circle cx="2.6" cy="1.3" r="1.1" fill="#5a5ab0"/><path d="M0 7.2 L3 3.4 L4.6 5 L7 2.4 L10 7.2Z" fill="#5a5ab0"/></svg>
<i style="left:30px;top:290.3px;width:5px;height:0.5px;background:#aaa"></i>
<i style="left:30px;top:291.6px;width:2px;height:0.4px;background:#ccc"></i>
<svg style="position:absolute;left:26.0px;top:294.7px" width="3" height="2.2" viewBox="0 0 10 7.2"><circle cx="2.6" cy="1.3" r="1.1" fill="#5a5ab0"/><path d="M0 7.2 L3 3.4 L4.6 5 L7 2.4 L10 7.2Z" fill="#5a5ab0"/></svg>
<i style="left:30px;top:295px;width:7px;height:0.5px;background:#aaa"></i>
<i style="left:30px;top:296.3px;width:2px;height:0.4px;background:#ccc"></i>
<svg style="position:absolute;left:26.0px;top:299.4px" width="3" height="2.2" viewBox="0 0 10 7.2"><circle cx="2.6" cy="1.3" r="1.1" fill="#5a5ab0"/><path d="M0 7.2 L3 3.4 L4.6 5 L7 2.4 L10 7.2Z" fill="#5a5ab0"/></svg>
<i style="left:30px;top:299.7px;width:5px;height:0.5px;background:#aaa"></i>
<i style="left:30px;top:301px;width:2px;height:0.4px;background:#ccc"></i>
<svg style="position:absolute;left:26.0px;top:304.1px" width="3" height="2.2" viewBox="0 0 10 7.2"><circle cx="2.6" cy="1.3" r="1.1" fill="#5a5ab0"/><path d="M0 7.2 L3 3.4 L4.6 5 L7 2.4 L10 7.2Z" fill="#5a5ab0"/></svg>
<i style="left:30px;top:304.4px;width:7px;height:0.5px;background:#aaa"></i>
<i style="left:30px;top:305.7px;width:2px;height:0.4px;background:#ccc"></i>
<svg style="position:absolute;left:26.0px;top:308.8px" width="3" height="2.2" viewBox="0 0 10 7.2"><circle cx="2.6" cy="1.3" r="1.1" fill="#5a5ab0"/><path d="M0 7.2 L3 3.4 L4.6 5 L7 2.4 L10 7.2Z" fill="#5a5ab0"/></svg>
<i style="left:30px;top:309.1px;width:5px;height:0.5px;background:#aaa"></i>
<i style="left:30px;top:310.4px;width:2px;height:0.4px;background:#ccc"></i>
<i style="left:26.9px;top:314px;width:1.2px;height:1.2px;background:#aaa"></i>
<i style="left:31.23px;top:314px;width:1.2px;height:1.2px;background:#aaa"></i>
<i style="left:35.57px;top:314px;width:1.2px;height:1.2px;background:#aaa"></i>
<i style="left:39.9px;top:314px;width:1.2px;height:1.2px;background:#aaa"></i>
<i style="left:31px;top:316.2px;width:6px;height:0.4px;background:#888"></i>
<i style="left:48px;top:269px;width:18.8px;height:103px;background:#f8f9fd;border:0.35px solid #eceef5"></i>
<i style="left:49px;top:270px;width:1.5px;height:0.5px;background:#bbb"></i>
<i style="left:63.8px;top:270px;width:2px;height:0.5px;background:#888"></i>
<i style="left:48px;top:269px;width:18.8px;height:12.7px;background:#d8d8dc"></i>
<svg style="position:absolute;left:52.9px;top:272.8px" width="9" height="6.5" viewBox="0 0 10 7.2"><circle cx="2.6" cy="1.3" r="1.1" fill="#43359c"/><path d="M0 7.2 L3 3.4 L4.6 5 L7 2.4 L10 7.2Z" fill="#43359c"/></svg>
<i style="left:49px;top:283.3px;width:11px;height:1px;background:#777"></i>
<i style="left:49px;top:285.5px;width:16px;height:0.4px;background:#ccc"></i>
<i style="left:49px;top:286.8px;width:14px;height:0.4px;background:#ccc"></i>
<i style="left:51.5px;top:289.5px;width:2px;height:2px;background:#888"></i>
<i style="left:56.5px;top:289.5px;width:2px;height:2px;background:#e09060"></i>
<i style="left:62px;top:289.5px;width:1.5px;height:2px;background:#999"></i>
<i style="left:49px;top:294.5px;width:4px;height:0.6px;background:#666"></i>
<i style="left:63px;top:294.6px;width:2.5px;height:0.4px;background:#ccc"></i>
<i style="left:50px;top:297.5px;width:2px;height:2px;background:#999"></i>
<i style="left:55px;top:297.5px;width:2px;height:2px;background:#999"></i>
<i style="left:49.5px;top:300.5px;width:2.5px;height:0.5px;background:#bbb"></i>
<i style="left:54.5px;top:300.5px;width:1.5px;height:0.5px;background:#bbb"></i>
<i style="left:48.8px;top:302.5px;width:17.2px;height:7.5px;background:#fff;border:0.3px solid #e4e4ea"></i>
<i style="left:50px;top:304.5px;width:6px;height:0.5px;background:#aaa"></i>
<i style="left:50px;top:307.5px;width:5px;height:0.5px;background:#aaa"></i>
<i style="left:49px;top:312.5px;width:4px;height:0.5px;background:#888"></i>
<i style="left:49px;top:314.5px;width:3px;height:0.5px;background:#666"></i>
<i style="left:60px;top:314.5px;width:5px;height:0.5px;background:#bbb"></i>
<svg style="position:absolute;left:49.0px;top:317.4px" width="3" height="2.2" viewBox="0 0 10 7.2"><circle cx="2.6" cy="1.3" r="1.1" fill="#5a5a8a"/><path d="M0 7.2 L3 3.4 L4.6 5 L7 2.4 L10 7.2Z" fill="#5a5a8a"/></svg>
<i style="left:53px;top:317.8px;width:5px;height:0.5px;background:#aaa"></i>
<i style="left:53px;top:319px;width:3px;height:0.4px;background:#ccc"></i>
<i style="left:48.8px;top:320.7px;width:17.2px;height:0.3px;background:#f0f0f4"></i>
<svg style="position:absolute;left:49.0px;top:321.9px" width="3" height="2.2" viewBox="0 0 10 7.2"><circle cx="2.6" cy="1.3" r="1.1" fill="#5a5a8a"/><path d="M0 7.2 L3 3.4 L4.6 5 L7 2.4 L10 7.2Z" fill="#5a5a8a"/></svg>
<i style="left:53px;top:322.3px;width:5px;height:0.5px;background:#aaa"></i>
<i style="left:53px;top:323.5px;width:3px;height:0.4px;background:#ccc"></i>
<i style="left:48.8px;top:325.2px;width:17.2px;height:0.3px;background:#f0f0f4"></i>
<svg style="position:absolute;left:49.0px;top:326.4px" width="3" height="2.2" viewBox="0 0 10 7.2"><circle cx="2.6" cy="1.3" r="1.1" fill="#5a5a8a"/><path d="M0 7.2 L3 3.4 L4.6 5 L7 2.4 L10 7.2Z" fill="#5a5a8a"/></svg>
<i style="left:53px;top:326.8px;width:5px;height:0.5px;background:#aaa"></i>
<i style="left:53px;top:328px;width:3px;height:0.4px;background:#ccc"></i>
<i style="left:48.8px;top:329.7px;width:17.2px;height:0.3px;background:#f0f0f4"></i>
<svg style="position:absolute;left:49.0px;top:333.9px" width="3" height="2.2" viewBox="0 0 10 7.2"><circle cx="2.6" cy="1.3" r="1.1" fill="#5a5a8a"/><path d="M0 7.2 L3 3.4 L4.6 5 L7 2.4 L10 7.2Z" fill="#5a5a8a"/></svg>
<i style="left:53px;top:334.3px;width:5px;height:0.5px;background:#aaa"></i>
<i style="left:53px;top:335.5px;width:3px;height:0.4px;background:#ccc"></i>
<i style="left:48.8px;top:337.2px;width:17.2px;height:0.3px;background:#f0f0f4"></i>
<svg style="position:absolute;left:49.0px;top:338.4px" width="3" height="2.2" viewBox="0 0 10 7.2"><circle cx="2.6" cy="1.3" r="1.1" fill="#5a5a8a"/><path d="M0 7.2 L3 3.4 L4.6 5 L7 2.4 L10 7.2Z" fill="#5a5a8a"/></svg>
<i style="left:53px;top:338.8px;width:5px;height:0.5px;background:#aaa"></i>
<i style="left:53px;top:340px;width:3px;height:0.4px;background:#ccc"></i>
<i style="left:48.8px;top:341.7px;width:17.2px;height:0.3px;background:#f0f0f4"></i>
<svg style="position:absolute;left:49.0px;top:342.9px" width="3" height="2.2" viewBox="0 0 10 7.2"><circle cx="2.6" cy="1.3" r="1.1" fill="#5a5a8a"/><path d="M0 7.2 L3 3.4 L4.6 5 L7 2.4 L10 7.2Z" fill="#5a5a8a"/></svg>
<i style="left:53px;top:343.3px;width:5px;height:0.5px;background:#aaa"></i>
<i style="left:53px;top:344.5px;width:3px;height:0.4px;background:#ccc"></i>
<i style="left:48.8px;top:346.2px;width:17.2px;height:0.3px;background:#f0f0f4"></i>
<svg style="position:absolute;left:49.0px;top:350.9px" width="3" height="2.2" viewBox="0 0 10 7.2"><circle cx="2.6" cy="1.3" r="1.1" fill="#5a5a8a"/><path d="M0 7.2 L3 3.4 L4.6 5 L7 2.4 L10 7.2Z" fill="#5a5a8a"/></svg>
<i style="left:53px;top:351.3px;width:5px;height:0.5px;background:#aaa"></i>
<i style="left:53px;top:352.5px;width:3px;height:0.4px;background:#ccc"></i>
<i style="left:48.8px;top:354.2px;width:17.2px;height:0.3px;background:#f0f0f4"></i>
<svg style="position:absolute;left:49.0px;top:355.4px" width="3" height="2.2" viewBox="0 0 10 7.2"><circle cx="2.6" cy="1.3" r="1.1" fill="#5a5a8a"/><path d="M0 7.2 L3 3.4 L4.6 5 L7 2.4 L10 7.2Z" fill="#5a5a8a"/></svg>
<i style="left:53px;top:355.8px;width:5px;height:0.5px;background:#aaa"></i>
<i style="left:53px;top:357px;width:3px;height:0.4px;background:#ccc"></i>
<i style="left:48.8px;top:358.7px;width:17.2px;height:0.3px;background:#f0f0f4"></i>
<svg style="position:absolute;left:49.0px;top:359.9px" width="3" height="2.2" viewBox="0 0 10 7.2"><circle cx="2.6" cy="1.3" r="1.1" fill="#5a5a8a"/><path d="M0 7.2 L3 3.4 L4.6 5 L7 2.4 L10 7.2Z" fill="#5a5a8a"/></svg>
<i style="left:53px;top:360.3px;width:5px;height:0.5px;background:#aaa"></i>
<i style="left:53px;top:361.5px;width:3px;height:0.4px;background:#ccc"></i>
<i style="left:48.8px;top:363.2px;width:17.2px;height:0.3px;background:#f0f0f4"></i>
<i style="left:49px;top:330.5px;width:3px;height:0.5px;background:#777"></i>
<i style="left:49px;top:347.5px;width:3px;height:0.5px;background:#777"></i>
<i style="left:49px;top:364px;width:3px;height:0.5px;background:#777"></i>
<i style="left:49px;top:368px;width:17px;height:2.4px;background:linear-gradient(90deg,#56399f,#6a4cbc);border-radius:0.8px"></i>
<i style="left:54px;top:371.2px;width:7px;height:0.4px;background:#999"></i>
<i style="left:71.3px;top:269px;width:18.7px;height:40.9px;background:#fff;border:0.4px solid #b8b8b8"></i>
<i style="left:71.3px;top:269px;width:18.7px;height:14.4px;background:#8e8e90"></i>
<i style="left:72.5px;top:270px;width:1.5px;height:0.6px;background:#ccc"></i>
<i style="left:87px;top:270px;width:2px;height:0.6px;background:#ccc"></i>
<i style="left:75px;top:281px;width:11px;height:1px;background:#a8a8aa"></i>
<i style="left:77px;top:287.2px;width:7px;height:0.6px;background:#888"></i>
<i style="left:73.5px;top:291px;width:1.2px;height:1.3px;background:#444"></i>
<i style="left:76.5px;top:291.3px;width:0.5px;height:0.7px;background:#ccc"></i>
<i style="left:79px;top:291.3px;width:0.5px;height:0.7px;background:#ccc"></i>
<i style="left:81.5px;top:291.3px;width:0.5px;height:0.7px;background:#ccc"></i>
<i style="left:84px;top:291.3px;width:0.5px;height:0.7px;background:#ccc"></i>
<i style="left:86.5px;top:291.3px;width:0.5px;height:0.7px;background:#ccc"></i>
<i style="left:73px;top:298.8px;width:15px;height:0.5px;background:#e4eaf4"></i>
<i style="left:72.2px;top:305.4px;width:16.8px;height:2.3px;background:linear-gradient(90deg,#56399f,#6a4cbc);border-radius:1px"></i>
<i style="left:77px;top:308.6px;width:7px;height:0.4px;background:#888"></i>
<i style="left:95px;top:269px;width:18.8px;height:52.8px;background:#fff;border:0.4px solid #b8b8b8"></i>
<i style="left:95px;top:269px;width:18.8px;height:3px;background:#8e8e8e"></i>
<i style="left:95.5px;top:272px;width:17.8px;height:15.7px;background:#d4d4d6"></i>
<svg style="position:absolute;left:98.8px;top:277.7px" width="10" height="7.2" viewBox="0 0 10 7.2"><circle cx="2.6" cy="1.3" r="1.1" fill="#43359c"/><path d="M0 7.2 L3 3.4 L4.6 5 L7 2.4 L10 7.2Z" fill="#43359c"/></svg>
<i style="left:96px;top:289px;width:7px;height:1px;background:#555"></i>
<i style="left:96px;top:291.2px;width:16px;height:0.4px;background:#ccc"></i>
<i style="left:96px;top:292.4px;width:14px;height:0.4px;background:#ccc"></i>
<i style="left:96px;top:293.6px;width:9px;height:0.4px;background:#ccc"></i>
<i style="left:96px;top:297px;width:4px;height:0.5px;background:#999"></i>
<i style="left:97.5px;top:299.5px;width:2.5px;height:2px;background:#555"></i>
<i style="left:96px;top:303px;width:4px;height:0.5px;background:#999"></i>
<i style="left:96px;top:305px;width:11px;height:0.6px;background:#777"></i>
<i style="left:96px;top:307px;width:16px;height:0.4px;background:#ccc"></i>
<i style="left:96px;top:308.3px;width:16px;height:0.4px;background:#ccc"></i>
<i style="left:96px;top:309.6px;width:16px;height:0.4px;background:#ccc"></i>
<i style="left:96px;top:311.5px;width:16px;height:0.4px;background:#ccc"></i>
<i style="left:96px;top:312.8px;width:16px;height:0.4px;background:#ccc"></i>
<i style="left:96px;top:314px;width:16px;height:0.4px;background:#ccc"></i>
<i style="left:101px;top:318px;width:5px;height:1px;background:#ccc"></i>
<i style="left:96px;top:320px;width:17px;height:0.3px;background:#eee"></i>
<i style="left:118.5px;top:269px;width:18.5px;height:41px;background:#f8f9fd;border:0.35px solid #eceef5"></i>
<i style="left:119.5px;top:270px;width:1.5px;height:0.5px;background:#bbb"></i>
<i style="left:134px;top:270px;width:2px;height:0.5px;background:#888"></i>
<i style="left:119.5px;top:271px;width:3.5px;height:0.6px;background:#aaa"></i>
<i style="left:132px;top:271.2px;width:4px;height:0.6px;background:#666"></i>
<i style="left:119.5px;top:273.8px;width:16.5px;height:19.2px;background:#e0e0e4"></i>
<svg style="position:absolute;left:122.7px;top:280.2px" width="10" height="7.2" viewBox="0 0 10 7.2"><circle cx="2.6" cy="1.3" r="1.1" fill="#43359c"/><path d="M0 7.2 L3 3.4 L4.6 5 L7 2.4 L10 7.2Z" fill="#43359c"/></svg>
<i style="left:125px;top:295px;width:5px;height:1px;background:#555"></i>
<i style="left:122px;top:297.2px;width:11px;height:0.6px;background:#999"></i>
<i style="left:120px;top:300.8px;width:2px;height:2.2px;background:#777"></i>
<i style="left:123px;top:301px;width:4px;height:0.5px;background:#bbb"></i>
<i style="left:120px;top:305.5px;width:6px;height:2px;background:#fff;border:0.3px solid #ddd"></i>
<i style="left:128px;top:305.3px;width:8px;height:2.2px;background:linear-gradient(90deg,#56399f,#6a4cbc);border-radius:1px"></i>
<i style="left:124.5px;top:309px;width:6.5px;height:0.4px;background:#888"></i>
<i style="left:142.5px;top:269px;width:18px;height:41px;background:#f8f9fd;border:0.35px solid #eceef5"></i>
<i style="left:143.5px;top:270px;width:1.5px;height:0.5px;background:#bbb"></i>
<i style="left:157.5px;top:270px;width:2px;height:0.5px;background:#888"></i>
<i style="left:143.5px;top:271.2px;width:2px;height:0.6px;background:#aaa"></i>
<i style="left:149px;top:271.2px;width:4px;height:0.6px;background:#aaa"></i>
<i style="left:157px;top:271.2px;width:2.5px;height:0.6px;background:#888"></i>
<i style="left:143.5px;top:274px;width:4.5px;height:1px;background:#555"></i>
<i style="left:143.5px;top:277.5px;width:2.5px;height:2.5px;background:#888"></i>
<i style="left:147.5px;top:278px;width:6.5px;height:0.5px;background:#aaa"></i>
<i style="left:147.5px;top:279.3px;width:3.5px;height:0.4px;background:#ccc"></i>
<i style="left:143.5px;top:283px;width:3.5px;height:0.5px;background:#666"></i>
<i style="left:152px;top:283px;width:3px;height:0.5px;background:#666"></i>
<i style="left:143.5px;top:285px;width:4.5px;height:0.4px;background:#bbb"></i>
<i style="left:152px;top:285px;width:5px;height:0.4px;background:#bbb"></i>
<i style="left:143.5px;top:287px;width:3.5px;height:0.4px;background:#ccc"></i>
<i style="left:152px;top:287px;width:3px;height:0.5px;background:#999"></i>
<i style="left:154px;top:288px;width:2px;height:1px;background:#bbb"></i>
<i style="left:143.5px;top:292px;width:4.5px;height:0.6px;background:#999"></i>
<svg style="position:absolute;left:145px;top:293.5px" width="15" height="7" viewBox="0 0 15 7"><path d="M0 6 L2 5 L3.5 2.5 L5 4.5 L6.5 1.5 L8 4 L9.5 3 L11 5 L12.5 1 L14 5.5" stroke="#f09a80" stroke-width="0.6" fill="none"/><path d="M0 6 L3 4 L6 5 L9 3.5 L14 5" stroke="#f8c8b8" stroke-width="0.4" fill="none"/></svg>
<i style="left:143.5px;top:301px;width:16px;height:0.3px;background:#eee"></i>
<i style="left:143px;top:305px;width:17px;height:2.5px;background:linear-gradient(90deg,#56399f,#6a4cbc);border-radius:1px"></i>
<i style="left:148.5px;top:308.8px;width:6.5px;height:0.4px;background:#888"></i>
<i style="left:0.9px;top:387px;width:16.5px;height:39.5px;background:#f8f9fd;border:0.35px solid #eceef5"></i>
<i style="left:1.9px;top:388px;width:1.5px;height:0.5px;background:#bbb"></i>
<i style="left:14.4px;top:388px;width:2px;height:0.5px;background:#888"></i>
<i style="left:2.1px;top:388.5px;width:1.3px;height:1.3px;background:#ccc"></i>
<i style="left:14.4px;top:388px;width:2px;height:1.8px;background:#bbb"></i>
<i style="left:6.15px;top:389.5px;width:6px;height:0.6px;background:#999"></i>
<i style="left:1.5px;top:391.8px;width:2.5px;height:0.6px;background:#bbb"></i>
<i style="left:5px;top:391.2px;width:4.5px;height:1.8px;background:#5a3ea8;border-radius:0.9px"></i>
<i style="left:11px;top:391.8px;width:2px;height:0.6px;background:#bbb"></i>
<i style="left:14.5px;top:391.8px;width:1.5px;height:0.6px;background:#bbb"></i>
<i style="left:1.3px;top:395px;width:6.7px;height:6.5px;background:#e6e8f8;border-radius:0.5px"></i>
<i style="left:3.65px;top:397.45px;width:2px;height:1.6px;background:#9a9ab0"></i>
<i style="left:9px;top:395px;width:7.5px;height:6.5px;background:#e6e8f8;border-radius:0.5px"></i>
<i style="left:11.75px;top:397.45px;width:2px;height:1.6px;background:#9a9ab0"></i>
<i style="left:1.5px;top:402px;width:3.5px;height:0.5px;background:#bbb"></i>
<i style="left:9.5px;top:402px;width:4.5px;height:0.5px;background:#bbb"></i>
<i style="left:1.3px;top:404px;width:6.7px;height:6.5px;background:#e6e8f8;border-radius:0.5px"></i>
<i style="left:3.65px;top:406.45px;width:2px;height:1.6px;background:#9a9ab0"></i>
<i style="left:9px;top:404px;width:7.5px;height:6.5px;background:#e6e8f8;border-radius:0.5px"></i>
<i style="left:11.75px;top:406.45px;width:2px;height:1.6px;background:#9a9ab0"></i>
<i style="left:1.5px;top:411px;width:3.5px;height:0.5px;background:#bbb"></i>
<i style="left:9.5px;top:411px;width:4.5px;height:0.5px;background:#bbb"></i>
<i style="left:1.3px;top:413px;width:6.7px;height:6.5px;background:#e6e8f8;border-radius:0.5px"></i>
<i style="left:3.65px;top:415.45px;width:2px;height:1.6px;background:#9a9ab0"></i>
<i style="left:9px;top:413px;width:7.5px;height:6.5px;background:#e6e8f8;border-radius:0.5px"></i>
<i style="left:11.75px;top:415.45px;width:2px;height:1.6px;background:#9a9ab0"></i>
<i style="left:1.5px;top:420px;width:3.5px;height:0.5px;background:#bbb"></i>
<i style="left:9.5px;top:420px;width:4.5px;height:0.5px;background:#bbb"></i>
<i style="left:2.8px;top:423.5px;width:1.2px;height:1.2px;background:#aaa"></i>
<i style="left:6.63px;top:423.5px;width:1.2px;height:1.2px;background:#aaa"></i>
<i style="left:10.47px;top:423.5px;width:1.2px;height:1.2px;background:#aaa"></i>
<i style="left:14.3px;top:423.5px;width:1.2px;height:1.2px;background:#aaa"></i>
<i style="left:6.15px;top:425.7px;width:6px;height:0.4px;background:#888"></i>
<i style="left:22.6px;top:387px;width:18.4px;height:50.8px;background:#f8f9fd;border:0.35px solid #eceef5"></i>
<i style="left:23.6px;top:388px;width:1.5px;height:0.5px;background:#bbb"></i>
<i style="left:38px;top:388px;width:2px;height:0.5px;background:#888"></i>
<i style="left:23.8px;top:388.5px;width:1.3px;height:1.3px;background:#ccc"></i>
<i style="left:38px;top:388px;width:2px;height:1.8px;background:#bbb"></i>
<i style="left:28.8px;top:389.5px;width:6px;height:0.6px;background:#999"></i>
<i style="left:23.3px;top:390.5px;width:7.7px;height:0.8px;background:#777"></i>
<i style="left:23.3px;top:392.2px;width:15.7px;height:0.4px;background:#ccc"></i>
<i style="left:23.3px;top:393.3px;width:9.7px;height:0.4px;background:#ccc"></i>
<i style="left:23.3px;top:396.3px;width:4.7px;height:0.5px;background:#aaa"></i>
<i style="left:23px;top:397.9px;width:17.5px;height:0.3px;background:#f0f0f4"></i>
<i style="left:23.3px;top:399.3px;width:4.7px;height:0.5px;background:#aaa"></i>
<i style="left:23px;top:400.9px;width:17.5px;height:0.3px;background:#f0f0f4"></i>
<i style="left:23.3px;top:403.5px;width:4.7px;height:0.5px;background:#aaa"></i>
<i style="left:23px;top:405.1px;width:17.5px;height:0.3px;background:#f0f0f4"></i>
<i style="left:23.3px;top:407.5px;width:4.7px;height:0.5px;background:#aaa"></i>
<i style="left:23px;top:409.1px;width:17.5px;height:0.3px;background:#f0f0f4"></i>
<i style="left:23.3px;top:411.5px;width:4.7px;height:0.5px;background:#aaa"></i>
<i style="left:23px;top:413.1px;width:17.5px;height:0.3px;background:#f0f0f4"></i>
<i style="left:23.3px;top:416px;width:4.7px;height:0.5px;background:#aaa"></i>
<i style="left:23px;top:417.6px;width:17.5px;height:0.3px;background:#f0f0f4"></i>
<i style="left:23.3px;top:420.5px;width:4.7px;height:0.5px;background:#aaa"></i>
<i style="left:23px;top:422.1px;width:17.5px;height:0.3px;background:#f0f0f4"></i>
<i style="left:23.3px;top:425px;width:4.7px;height:0.5px;background:#aaa"></i>
<i style="left:23px;top:426.6px;width:17.5px;height:0.3px;background:#f0f0f4"></i>
<i style="left:23.3px;top:428px;width:4.7px;height:0.5px;background:#aaa"></i>
<i style="left:23px;top:429.6px;width:17.5px;height:0.3px;background:#f0f0f4"></i>
<i style="left:23.3px;top:431px;width:4.7px;height:0.5px;background:#aaa"></i>
<i style="left:23px;top:432.6px;width:17.5px;height:0.3px;background:#f0f0f4"></i>
<i style="left:32px;top:420.5px;width:5px;height:0.5px;background:#ccc"></i>
<i style="left:32px;top:425px;width:5px;height:0.5px;background:#ccc"></i>
<i style="left:38.5px;top:427.3px;width:2px;height:1.7px;background:#444;border-radius:50%"></i>
<i style="left:38.5px;top:430.6px;width:2px;height:1.7px;background:#444;border-radius:50%"></i>
<i style="left:23.3px;top:434.3px;width:17.1px;height:2.3px;background:linear-gradient(90deg,#56399f,#6a4cbc);border-radius:1.1px"></i>
<i style="left:28px;top:437px;width:7px;height:0.4px;background:#999"></i>
<i style="left:45.8px;top:387px;width:18.9px;height:52px;background:#f8f9fd;border:0.35px solid #eceef5"></i>
<i style="left:46.8px;top:388px;width:1.5px;height:0.5px;background:#bbb"></i>
<i style="left:61.7px;top:388px;width:2px;height:0.5px;background:#888"></i>
<i style="left:47px;top:388.5px;width:1.3px;height:1.3px;background:#ccc"></i>
<i style="left:61.7px;top:388px;width:2px;height:1.8px;background:#bbb"></i>
<i style="left:52.25px;top:389.5px;width:6px;height:0.6px;background:#999"></i>
<i style="left:46.8px;top:391.2px;width:6px;height:0.6px;background:#999"></i>
<i style="left:61.7px;top:391.2px;width:2px;height:0.6px;background:#bbb"></i>
<i style="left:48.3px;top:394.5px;width:2px;height:2px;background:#999"></i>
<i style="left:53.8px;top:394.5px;width:2px;height:2px;background:#999"></i>
<i style="left:59.3px;top:394.5px;width:2px;height:2px;background:#999"></i>
<i style="left:46.8px;top:399.5px;width:5px;height:0.5px;background:#999"></i>
<i style="left:54.8px;top:399.5px;width:7.9px;height:0.5px;background:#ddd"></i>
<i style="left:46.8px;top:403.5px;width:5px;height:0.5px;background:#999"></i>
<i style="left:54.8px;top:403.5px;width:7.9px;height:0.5px;background:#ddd"></i>
<i style="left:46.8px;top:406px;width:3px;height:0.5px;background:#777"></i>
<svg style="position:absolute;left:46.9px;top:408.8px" width="3.2" height="2.3" viewBox="0 0 10 7.2"><circle cx="2.6" cy="1.3" r="1.1" fill="#5a5a8a"/><path d="M0 7.2 L3 3.4 L4.6 5 L7 2.4 L10 7.2Z" fill="#5a5a8a"/></svg>
<i style="left:51.3px;top:409.3px;width:4.5px;height:0.5px;background:#aaa"></i>
<i style="left:51.3px;top:410.5px;width:2.5px;height:0.4px;background:#ccc"></i>
<i style="left:46.3px;top:412px;width:17.9px;height:0.3px;background:#f0f0f4"></i>
<svg style="position:absolute;left:46.9px;top:412.8px" width="3.2" height="2.3" viewBox="0 0 10 7.2"><circle cx="2.6" cy="1.3" r="1.1" fill="#5a5a8a"/><path d="M0 7.2 L3 3.4 L4.6 5 L7 2.4 L10 7.2Z" fill="#5a5a8a"/></svg>
<i style="left:51.3px;top:413.3px;width:4.5px;height:0.5px;background:#aaa"></i>
<i style="left:51.3px;top:414.5px;width:2.5px;height:0.4px;background:#ccc"></i>
<i style="left:46.3px;top:416px;width:17.9px;height:0.3px;background:#f0f0f4"></i>
<svg style="position:absolute;left:46.9px;top:420.3px" width="3.2" height="2.3" viewBox="0 0 10 7.2"><circle cx="2.6" cy="1.3" r="1.1" fill="#5a5a8a"/><path d="M0 7.2 L3 3.4 L4.6 5 L7 2.4 L10 7.2Z" fill="#5a5a8a"/></svg>
<i style="left:51.3px;top:420.8px;width:4.5px;height:0.5px;background:#aaa"></i>
<i style="left:51.3px;top:422px;width:2.5px;height:0.4px;background:#ccc"></i>
<i style="left:46.3px;top:423.5px;width:17.9px;height:0.3px;background:#f0f0f4"></i>
<svg style="position:absolute;left:46.9px;top:427.3px" width="3.2" height="2.3" viewBox="0 0 10 7.2"><circle cx="2.6" cy="1.3" r="1.1" fill="#5a5a8a"/><path d="M0 7.2 L3 3.4 L4.6 5 L7 2.4 L10 7.2Z" fill="#5a5a8a"/></svg>
<i style="left:51.3px;top:427.8px;width:4.5px;height:0.5px;background:#aaa"></i>
<i style="left:51.3px;top:429px;width:2.5px;height:0.4px;background:#ccc"></i>
<i style="left:46.3px;top:430.5px;width:17.9px;height:0.3px;background:#f0f0f4"></i>
<svg style="position:absolute;left:46.9px;top:431.8px" width="3.2" height="2.3" viewBox="0 0 10 7.2"><circle cx="2.6" cy="1.3" r="1.1" fill="#5a5a8a"/><path d="M0 7.2 L3 3.4 L4.6 5 L7 2.4 L10 7.2Z" fill="#5a5a8a"/></svg>
<i style="left:51.3px;top:432.3px;width:4.5px;height:0.5px;background:#aaa"></i>
<i style="left:51.3px;top:433.5px;width:2.5px;height:0.4px;background:#ccc"></i>
<i style="left:46.3px;top:435px;width:17.9px;height:0.3px;background:#f0f0f4"></i>
<i style="left:46.8px;top:417px;width:3px;height:0.5px;background:#ccc"></i>
<i style="left:46.8px;top:436px;width:16.9px;height:2.3px;background:linear-gradient(90deg,#56399f,#6a4cbc);border-radius:1.1px"></i>
<i style="left:51.8px;top:438.9px;width:6.9px;height:0.4px;background:#999"></i>
<i style="left:69.4px;top:387px;width:18.2px;height:56.7px;background:#f8f9fd;border:0.35px solid #eceef5"></i>
<i style="left:70.4px;top:388px;width:1.5px;height:0.5px;background:#bbb"></i>
<i style="left:84.6px;top:388px;width:2px;height:0.5px;background:#888"></i>
<i style="left:70.6px;top:388.5px;width:1.3px;height:1.3px;background:#ccc"></i>
<i style="left:84.6px;top:388px;width:2px;height:1.8px;background:#bbb"></i>
<i style="left:75.5px;top:389.5px;width:6px;height:0.6px;background:#999"></i>
<i style="left:70.4px;top:391.2px;width:6px;height:0.6px;background:#999"></i>
<i style="left:84.6px;top:391.2px;width:2px;height:0.6px;background:#bbb"></i>
<i style="left:71.9px;top:394.5px;width:2px;height:2px;background:#999"></i>
<i style="left:77.4px;top:394.5px;width:2px;height:2px;background:#999"></i>
<i style="left:82.9px;top:394.5px;width:2px;height:2px;background:#999"></i>
<i style="left:70.4px;top:399.5px;width:5px;height:0.5px;background:#999"></i>
<i style="left:78.4px;top:399.5px;width:7.2px;height:0.5px;background:#ddd"></i>
<i style="left:70.4px;top:403.5px;width:5px;height:0.5px;background:#999"></i>
<i style="left:78.4px;top:403.5px;width:7.2px;height:0.5px;background:#ddd"></i>
<i style="left:70.4px;top:406px;width:3px;height:0.5px;background:#777"></i>
<svg style="position:absolute;left:70.5px;top:408.8px" width="3.2" height="2.3" viewBox="0 0 10 7.2"><circle cx="2.6" cy="1.3" r="1.1" fill="#5a5a8a"/><path d="M0 7.2 L3 3.4 L4.6 5 L7 2.4 L10 7.2Z" fill="#5a5a8a"/></svg>
<i style="left:74.9px;top:409.3px;width:4.5px;height:0.5px;background:#aaa"></i>
<i style="left:74.9px;top:410.5px;width:2.5px;height:0.4px;background:#ccc"></i>
<i style="left:69.9px;top:412px;width:17.2px;height:0.3px;background:#f0f0f4"></i>
<svg style="position:absolute;left:70.5px;top:412.8px" width="3.2" height="2.3" viewBox="0 0 10 7.2"><circle cx="2.6" cy="1.3" r="1.1" fill="#5a5a8a"/><path d="M0 7.2 L3 3.4 L4.6 5 L7 2.4 L10 7.2Z" fill="#5a5a8a"/></svg>
<i style="left:74.9px;top:413.3px;width:4.5px;height:0.5px;background:#aaa"></i>
<i style="left:74.9px;top:414.5px;width:2.5px;height:0.4px;background:#ccc"></i>
<i style="left:69.9px;top:416px;width:17.2px;height:0.3px;background:#f0f0f4"></i>
<svg style="position:absolute;left:70.5px;top:419.8px" width="3.2" height="2.3" viewBox="0 0 10 7.2"><circle cx="2.6" cy="1.3" r="1.1" fill="#5a5a8a"/><path d="M0 7.2 L3 3.4 L4.6 5 L7 2.4 L10 7.2Z" fill="#5a5a8a"/></svg>
<i style="left:74.9px;top:420.3px;width:4.5px;height:0.5px;background:#aaa"></i>
<i style="left:74.9px;top:421.5px;width:2.5px;height:0.4px;background:#ccc"></i>
<i style="left:69.9px;top:423px;width:17.2px;height:0.3px;background:#f0f0f4"></i>
<svg style="position:absolute;left:70.5px;top:424.3px" width="3.2" height="2.3" viewBox="0 0 10 7.2"><circle cx="2.6" cy="1.3" r="1.1" fill="#5a5a8a"/><path d="M0 7.2 L3 3.4 L4.6 5 L7 2.4 L10 7.2Z" fill="#5a5a8a"/></svg>
<i style="left:74.9px;top:424.8px;width:4.5px;height:0.5px;background:#aaa"></i>
<i style="left:74.9px;top:426px;width:2.5px;height:0.4px;background:#ccc"></i>
<i style="left:69.9px;top:427.5px;width:17.2px;height:0.3px;background:#f0f0f4"></i>
<svg style="position:absolute;left:70.5px;top:429.8px" width="3.2" height="2.3" viewBox="0 0 10 7.2"><circle cx="2.6" cy="1.3" r="1.1" fill="#5a5a8a"/><path d="M0 7.2 L3 3.4 L4.6 5 L7 2.4 L10 7.2Z" fill="#5a5a8a"/></svg>
<i style="left:74.9px;top:430.3px;width:4.5px;height:0.5px;background:#aaa"></i>
<i style="left:74.9px;top:431.5px;width:2.5px;height:0.4px;background:#ccc"></i>
<i style="left:69.9px;top:433px;width:17.2px;height:0.3px;background:#f0f0f4"></i>
<svg style="position:absolute;left:70.5px;top:433.8px" width="3.2" height="2.3" viewBox="0 0 10 7.2"><circle cx="2.6" cy="1.3" r="1.1" fill="#5a5a8a"/><path d="M0 7.2 L3 3.4 L4.6 5 L7 2.4 L10 7.2Z" fill="#5a5a8a"/></svg>
<i style="left:74.9px;top:434.3px;width:4.5px;height:0.5px;background:#aaa"></i>
<i style="left:74.9px;top:435.5px;width:2.5px;height:0.4px;background:#ccc"></i>
<i style="left:69.9px;top:437px;width:17.2px;height:0.3px;background:#f0f0f4"></i>
<i style="left:70.4px;top:417px;width:3px;height:0.5px;background:#ccc"></i>
<i style="left:70.4px;top:440.6px;width:16.2px;height:2.3px;background:linear-gradient(90deg,#56399f,#6a4cbc);border-radius:1.1px"></i>
<i style="left:75.4px;top:443.5px;width:6.2px;height:0.4px;background:#999"></i>
<i style="left:92.3px;top:387px;width:18.9px;height:39.5px;background:#f8f9fd;border:0.35px solid #eceef5"></i>
<i style="left:93.3px;top:388px;width:1.5px;height:0.5px;background:#bbb"></i>
<i style="left:108.2px;top:388px;width:2px;height:0.5px;background:#888"></i>
<i style="left:93.5px;top:388.5px;width:1.3px;height:1.3px;background:#ccc"></i>
<i style="left:108.2px;top:388px;width:2px;height:1.8px;background:#bbb"></i>
<i style="left:98.75px;top:389.5px;width:6px;height:0.6px;background:#999"></i>
<i style="left:92.8px;top:391px;width:17.9px;height:14.5px;background:#fff;border:0.3px solid #e8e8ee"></i>
<svg style="position:absolute;left:93.5px;top:392.4px" width="3" height="2.2" viewBox="0 0 10 7.2"><circle cx="2.6" cy="1.3" r="1.1" fill="#5a5a8a"/><path d="M0 7.2 L3 3.4 L4.6 5 L7 2.4 L10 7.2Z" fill="#5a5a8a"/></svg>
<i style="left:97.5px;top:392.7px;width:4.5px;height:0.5px;background:#aaa"></i>
<i style="left:97.5px;top:393.9px;width:2.5px;height:0.4px;background:#ccc"></i>
<svg style="position:absolute;left:93.5px;top:396.9px" width="3" height="2.2" viewBox="0 0 10 7.2"><circle cx="2.6" cy="1.3" r="1.1" fill="#5a5a8a"/><path d="M0 7.2 L3 3.4 L4.6 5 L7 2.4 L10 7.2Z" fill="#5a5a8a"/></svg>
<i style="left:97.5px;top:397.2px;width:4.5px;height:0.5px;background:#aaa"></i>
<i style="left:97.5px;top:398.4px;width:2.5px;height:0.4px;background:#ccc"></i>
<svg style="position:absolute;left:93.5px;top:401.4px" width="3" height="2.2" viewBox="0 0 10 7.2"><circle cx="2.6" cy="1.3" r="1.1" fill="#5a5a8a"/><path d="M0 7.2 L3 3.4 L4.6 5 L7 2.4 L10 7.2Z" fill="#5a5a8a"/></svg>
<i style="left:97.5px;top:401.7px;width:4.5px;height:0.5px;background:#aaa"></i>
<i style="left:97.5px;top:402.9px;width:2.5px;height:0.4px;background:#ccc"></i>
<i style="left:93px;top:423px;width:17.5px;height:2.6px;background:linear-gradient(90deg,#56399f,#6a4cbc);border-radius:1.1px"></i>
<i style="left:98px;top:426px;width:7px;height:0.3px;background:#999"></i>
<i style="left:116px;top:387px;width:18.9px;height:39.5px;background:#f8f9fd;border:0.35px solid #eceef5"></i>
<i style="left:117px;top:388px;width:1.5px;height:0.5px;background:#bbb"></i>
<i style="left:131.9px;top:388px;width:2px;height:0.5px;background:#888"></i>
<i style="left:117.2px;top:388.5px;width:1.3px;height:1.3px;background:#ccc"></i>
<i style="left:131.9px;top:388px;width:2px;height:1.8px;background:#bbb"></i>
<i style="left:121.45px;top:389.5px;width:8px;height:0.6px;background:#999"></i>
<i style="left:123.5px;top:392.5px;width:3.5px;height:2.5px;background:#777;border-radius:50%"></i>
<i style="left:117px;top:398.5px;width:3px;height:0.5px;background:#aaa"></i>
<i style="left:127px;top:398.5px;width:5px;height:0.5px;background:#ccc"></i>
<i style="left:116.5px;top:400px;width:18px;height:0.3px;background:#f0f0f4"></i>
<i style="left:117px;top:401.5px;width:3px;height:0.5px;background:#aaa"></i>
<i style="left:127px;top:401.5px;width:5px;height:0.5px;background:#ccc"></i>
<i style="left:116.5px;top:403px;width:18px;height:0.3px;background:#f0f0f4"></i>
<i style="left:117px;top:404.5px;width:3px;height:0.5px;background:#aaa"></i>
<i style="left:127px;top:404.5px;width:5px;height:0.5px;background:#ccc"></i>
<i style="left:116.5px;top:406px;width:18px;height:0.3px;background:#f0f0f4"></i>
<i style="left:117px;top:407px;width:3px;height:0.5px;background:#aaa"></i>
<i style="left:127px;top:407px;width:5px;height:0.5px;background:#ccc"></i>
<i style="left:116.5px;top:408.5px;width:18px;height:0.3px;background:#f0f0f4"></i>
<i style="left:121px;top:425.3px;width:9px;height:0.4px;background:#999"></i>
<i style="left:138.9px;top:387px;width:18.9px;height:39.5px;background:#f8f9fd;border:0.35px solid #eceef5"></i>
<i style="left:139.9px;top:388px;width:1.5px;height:0.5px;background:#bbb"></i>
<i style="left:154.8px;top:388px;width:2px;height:0.5px;background:#888"></i>
<i style="left:140.1px;top:388.5px;width:1.3px;height:1.3px;background:#ccc"></i>
<i style="left:154.8px;top:388px;width:2px;height:1.8px;background:#bbb"></i>
<i style="left:145.35px;top:389.5px;width:6px;height:0.6px;background:#999"></i>
<i style="left:140px;top:391.8px;width:5.5px;height:1.4px;background:#5a3ea8"></i>
<i style="left:140px;top:395px;width:3px;height:0.5px;background:#ccc"></i>
<i style="left:151px;top:395px;width:4px;height:0.5px;background:#ccc"></i>
<svg style="position:absolute;left:139.4px;top:397.3px" width="3.2" height="2.3" viewBox="0 0 10 7.2"><circle cx="2.6" cy="1.3" r="1.1" fill="#5a5a8a"/><path d="M0 7.2 L3 3.4 L4.6 5 L7 2.4 L10 7.2Z" fill="#5a5a8a"/></svg>
<i style="left:144px;top:397.8px;width:5px;height:0.5px;background:#aaa"></i>
<i style="left:156px;top:397.5px;width:1px;height:1.2px;background:#555"></i>
<i style="left:139.4px;top:401px;width:17.9px;height:0.3px;background:#eeeef2"></i>
<svg style="position:absolute;left:139.4px;top:403.8px" width="3.2" height="2.3" viewBox="0 0 10 7.2"><circle cx="2.6" cy="1.3" r="1.1" fill="#5a5a8a"/><path d="M0 7.2 L3 3.4 L4.6 5 L7 2.4 L10 7.2Z" fill="#5a5a8a"/></svg>
<i style="left:144px;top:404.3px;width:5px;height:0.5px;background:#aaa"></i>
<i style="left:156px;top:404px;width:1px;height:1.2px;background:#555"></i>
<i style="left:139.4px;top:407.5px;width:17.9px;height:0.3px;background:#eeeef2"></i>
<svg style="position:absolute;left:139.4px;top:409.3px" width="3.2" height="2.3" viewBox="0 0 10 7.2"><circle cx="2.6" cy="1.3" r="1.1" fill="#5a5a8a"/><path d="M0 7.2 L3 3.4 L4.6 5 L7 2.4 L10 7.2Z" fill="#5a5a8a"/></svg>
<i style="left:144px;top:409.8px;width:5px;height:0.5px;background:#aaa"></i>
<i style="left:156px;top:409.5px;width:1px;height:1.2px;background:#555"></i>
<i style="left:139.4px;top:413px;width:17.9px;height:0.3px;background:#eeeef2"></i>
<i style="left:144px;top:425.3px;width:8px;height:0.4px;background:#999"></i>
<i style="left:162.5px;top:387px;width:18.5px;height:39.5px;background:#f8f9fd;border:0.35px solid #eceef5"></i>
<i style="left:163.5px;top:388px;width:1.5px;height:0.5px;background:#bbb"></i>
<i style="left:178px;top:388px;width:2px;height:0.5px;background:#888"></i>
<i style="left:163.7px;top:388.5px;width:1.3px;height:1.3px;background:#ccc"></i>
<i style="left:178px;top:388px;width:2px;height:1.8px;background:#bbb"></i>
<i style="left:167.75px;top:389.5px;width:8px;height:0.6px;background:#999"></i>
<i style="left:165px;top:395px;width:14px;height:0.6px;background:#aaa"></i>
<i style="left:168px;top:396.4px;width:8px;height:0.4px;background:#aaa"></i>
<i style="left:164.5px;top:398.5px;width:2.3px;height:2px;background:#555;border-radius:50%"></i>
<i style="left:167px;top:399.3px;width:2px;height:0.4px;background:#ccc"></i>
<i style="left:170px;top:398.5px;width:2.3px;height:2px;background:#555;border-radius:50%"></i>
<i style="left:172.5px;top:399.3px;width:2px;height:0.4px;background:#ccc"></i>
<i style="left:175.5px;top:398.5px;width:2.3px;height:2px;background:#555;border-radius:50%"></i>
<i style="left:178px;top:399.3px;width:2px;height:0.4px;background:#ccc"></i>
<i style="left:165px;top:404px;width:14px;height:0.6px;background:#aaa"></i>
<i style="left:168px;top:405.4px;width:8px;height:0.4px;background:#aaa"></i>
<i style="left:166px;top:412px;width:2px;height:0.8px;background:#ccc"></i>
<i style="left:169.5px;top:412px;width:2px;height:0.8px;background:#888"></i>
<i style="left:173px;top:412px;width:2px;height:0.8px;background:#888"></i>
<i style="left:176.5px;top:412px;width:2px;height:0.8px;background:#ccc"></i>
<i style="left:163px;top:423px;width:17.5px;height:2.6px;background:linear-gradient(90deg,#56399f,#6a4cbc);border-radius:1.1px"></i>
<i style="left:168px;top:426px;width:7px;height:0.3px;background:#999"></i>
<i style="left:0.2px;top:460.2px;width:17.2px;height:42.6px;background:#f8f9fd;border:0.35px solid #eceef5"></i>
<i style="left:1.2px;top:461.2px;width:1.5px;height:0.5px;background:#bbb"></i>
<i style="left:14.4px;top:461.2px;width:2px;height:0.5px;background:#888"></i>
<i style="left:1.4px;top:461.7px;width:1.3px;height:1.3px;background:#ccc"></i>
<i style="left:14.4px;top:461.2px;width:2px;height:1.8px;background:#bbb"></i>
<i style="left:5.8px;top:462.7px;width:6px;height:0.6px;background:#999"></i>
<i style="left:5.2px;top:500.2px;width:7.2px;height:0.4px;background:#999"></i>
<i style="left:22.6px;top:460.2px;width:18.4px;height:42.6px;background:#f8f9fd;border:0.35px solid #eceef5"></i>
<i style="left:23.6px;top:461.2px;width:1.5px;height:0.5px;background:#bbb"></i>
<i style="left:38px;top:461.2px;width:2px;height:0.5px;background:#888"></i>
<i style="left:23.8px;top:461.7px;width:1.3px;height:1.3px;background:#ccc"></i>
<i style="left:38px;top:461.2px;width:2px;height:1.8px;background:#bbb"></i>
<i style="left:28.8px;top:462.7px;width:6px;height:0.6px;background:#999"></i>
<i style="left:27.6px;top:500.2px;width:8.4px;height:0.4px;background:#999"></i>
<i style="left:45.8px;top:460.2px;width:18.9px;height:42.6px;background:#f8f9fd;border:0.35px solid #eceef5"></i>
<i style="left:46.8px;top:461.2px;width:1.5px;height:0.5px;background:#bbb"></i>
<i style="left:61.7px;top:461.2px;width:2px;height:0.5px;background:#888"></i>
<i style="left:47px;top:461.7px;width:1.3px;height:1.3px;background:#ccc"></i>
<i style="left:61.7px;top:461.2px;width:2px;height:1.8px;background:#bbb"></i>
<i style="left:52.25px;top:462.7px;width:6px;height:0.6px;background:#999"></i>
<i style="left:50.8px;top:500.2px;width:8.9px;height:0.4px;background:#999"></i>
<i style="left:69.4px;top:460.2px;width:18.2px;height:42.6px;background:#f8f9fd;border:0.35px solid #eceef5"></i>
<i style="left:70.4px;top:461.2px;width:1.5px;height:0.5px;background:#bbb"></i>
<i style="left:84.6px;top:461.2px;width:2px;height:0.5px;background:#888"></i>
<i style="left:70.6px;top:461.7px;width:1.3px;height:1.3px;background:#ccc"></i>
<i style="left:84.6px;top:461.2px;width:2px;height:1.8px;background:#bbb"></i>
<i style="left:75.5px;top:462.7px;width:6px;height:0.6px;background:#999"></i>
<i style="left:74.4px;top:500.2px;width:8.2px;height:0.4px;background:#999"></i>
<i style="left:1px;top:464.5px;width:3px;height:0.5px;background:#999"></i>
<i style="left:1.5px;top:467px;width:1.5px;height:1.5px;background:#555"></i>
<i style="left:6px;top:467px;width:1.5px;height:1.5px;background:#555"></i>
<i style="left:11px;top:467px;width:1.5px;height:1.5px;background:#555"></i>
<i style="left:0.5px;top:471.5px;width:3.5px;height:1.3px;background:#5a3ea8"></i>
<i style="left:1px;top:475px;width:4px;height:0.5px;background:#999"></i>
<i style="left:2px;top:478.5px;width:12px;height:0.5px;background:#ccc"></i>
<i style="left:3px;top:478px;width:2px;height:1.5px;background:#777"></i>
<i style="left:6px;top:478px;width:2px;height:1.5px;background:#777"></i>
<i style="left:1px;top:485.5px;width:3px;height:0.5px;background:#999"></i>
<i style="left:2.5px;top:499px;width:0.9px;height:3px;background:#eaa8a8"></i>
<i style="left:4.1px;top:496px;width:0.9px;height:6px;background:#eaa8a8"></i>
<i style="left:5.7px;top:500px;width:0.9px;height:2px;background:#eaa8a8"></i>
<i style="left:7.3px;top:494px;width:0.9px;height:8px;background:#eaa8a8"></i>
<i style="left:8.9px;top:498px;width:0.9px;height:4px;background:#eaa8a8"></i>
<i style="left:10.5px;top:497px;width:0.9px;height:5px;background:#eaa8a8"></i>
<i style="left:12.1px;top:499px;width:0.9px;height:3px;background:#eaa8a8"></i>
<i style="left:13.7px;top:500px;width:0.9px;height:2px;background:#eaa8a8"></i>
<i style="left:1.5px;top:502.3px;width:13.5px;height:0.3px;background:#f4d8d8"></i>
<i style="left:23.5px;top:465.5px;width:3.5px;height:0.5px;background:#aaa"></i>
<i style="left:23px;top:467.3px;width:17.5px;height:0.3px;background:#ececf2"></i>
<i style="left:23.5px;top:469px;width:3.5px;height:0.5px;background:#aaa"></i>
<i style="left:23px;top:470.8px;width:17.5px;height:0.3px;background:#ececf2"></i>
<i style="left:23.5px;top:473px;width:3.5px;height:0.5px;background:#aaa"></i>
<i style="left:23px;top:474.8px;width:17.5px;height:0.3px;background:#ececf2"></i>
<i style="left:23.5px;top:477px;width:3.5px;height:0.5px;background:#aaa"></i>
<i style="left:23px;top:478.8px;width:17.5px;height:0.3px;background:#ececf2"></i>
<i style="left:23.5px;top:481px;width:3.5px;height:0.5px;background:#aaa"></i>
<i style="left:23px;top:482.8px;width:17.5px;height:0.3px;background:#ececf2"></i>
<i style="left:23.5px;top:485px;width:3.5px;height:0.5px;background:#aaa"></i>
<i style="left:23px;top:486.8px;width:17.5px;height:0.3px;background:#ececf2"></i>
<i style="left:23.5px;top:489px;width:3.5px;height:0.5px;background:#aaa"></i>
<i style="left:23px;top:490.8px;width:17.5px;height:0.3px;background:#ececf2"></i>
<i style="left:23.5px;top:493.5px;width:3.5px;height:0.5px;background:#aaa"></i>
<i style="left:23px;top:495.3px;width:17.5px;height:0.3px;background:#ececf2"></i>
<i style="left:23px;top:464.5px;width:17.5px;height:31.5px;background:transparent;border:0.3px solid #e0e0e8"></i>
<i style="left:48px;top:463.8px;width:14px;height:0.8px;background:#777"></i>
<i style="left:48px;top:465.5px;width:14.5px;height:0.5px;background:#bbb"></i>
<i style="left:48px;top:466.8px;width:11px;height:0.4px;background:#bbb"></i>
<i style="left:47px;top:469px;width:4px;height:0.5px;background:#aaa"></i>
<i style="left:47px;top:472px;width:5px;height:0.5px;background:#999"></i>
<i style="left:46.5px;top:474px;width:17.5px;height:0.3px;background:#ececf2"></i>
<i style="left:71px;top:466px;width:2.5px;height:2px;background:#9088c8"></i>
<i style="left:74.5px;top:466px;width:3px;height:2px;background:#8a80d0"></i>
<i style="left:78.5px;top:466.5px;width:5.5px;height:0.5px;background:#ccc"></i>
<i style="left:70px;top:469.3px;width:17px;height:0.3px;background:#ececf2"></i>
<i style="left:71px;top:471.5px;width:2.5px;height:2px;background:#9088c8"></i>
<i style="left:74.5px;top:471.5px;width:3px;height:2px;background:#8a80d0"></i>
<i style="left:78.5px;top:472px;width:5.5px;height:0.5px;background:#ccc"></i>
<i style="left:70px;top:474.8px;width:17px;height:0.3px;background:#ececf2"></i>
<i style="left:71px;top:477px;width:2.5px;height:2px;background:#9088c8"></i>
<i style="left:74.5px;top:477px;width:3px;height:2px;background:#8a80d0"></i>
<i style="left:78.5px;top:477.5px;width:5.5px;height:0.5px;background:#ccc"></i>
<i style="left:70px;top:480.3px;width:17px;height:0.3px;background:#ececf2"></i>
<i style="left:71px;top:482.5px;width:2.5px;height:2px;background:#9088c8"></i>
<i style="left:74.5px;top:482.5px;width:3px;height:2px;background:#8a80d0"></i>
<i style="left:78.5px;top:483px;width:5.5px;height:0.5px;background:#ccc"></i>
<i style="left:70px;top:485.8px;width:17px;height:0.3px;background:#ececf2"></i>
<i style="left:71px;top:497.5px;width:1.5px;height:1.5px;background:#999"></i>
<i style="left:75.5px;top:497.5px;width:1.5px;height:1.5px;background:#999"></i>
<i style="left:80px;top:497.5px;width:1.5px;height:1.5px;background:#999"></i>
<i style="left:84.5px;top:497.5px;width:1.5px;height:1.5px;background:#999"></i>
<div style="left:251px;top:17.299999999999997px;width:23.6px;height:11.6px;border-radius:50%;border:0.45px solid #8a8a8a"></div>
<i style="left:253.4px;top:37px;width:17.4px;height:38px;background:#f6f2ee;border-radius:1px"></i>
<i style="left:259.5px;top:57.8px;width:5px;height:0.8px;background:#6a5a50"></i>
<i style="left:254.5px;top:38.2px;width:1.5px;height:0.4px;background:#bbb"></i>
<i style="left:268px;top:38.2px;width:2px;height:0.4px;background:#bbb"></i>
<i style="left:258px;top:74px;width:8px;height:0.4px;background:#ddd"></i>
<div style="left:260.29999999999995px;top:53.599999999999994px;width:2.6px;height:2.6px;background:#d09878;transform:rotate(45deg)"></div>
<i style="left:274.3px;top:37px;width:17.7px;height:38px;background:#2d1b10;border-radius:1.5px"></i>
<div style="left:275px;top:38.5px;width:15.4px;height:15.4px;border-radius:50%;background:#5e3e28"></div>
<div style="left:275px;top:60px;width:15.4px;height:15.4px;border-radius:50%;background:#5e3e28"></div>
<div style="left:269px;top:49px;width:11px;height:13px;border-radius:50%;background:#4a3020;clip-path:inset(0 0 0 5.3px)"></div>
<div style="left:286px;top:49px;width:11px;height:13px;border-radius:50%;background:#4a3020;clip-path:inset(0 5.7px 0 0)"></div>
<i style="left:281.5px;top:54.5px;width:2.5px;height:1.5px;background:#bba080"></i>
<i style="left:295.3px;top:37px;width:17.5px;height:38px;background:#ef8422;border-radius:1.5px"></i>
<i style="left:297px;top:48.5px;width:1.5px;height:1px;background:#fde2c0"></i>
<i style="left:297px;top:53px;width:7px;height:0.6px;background:#fde2c0"></i>
<i style="left:297px;top:54.6px;width:14px;height:0.6px;background:#fde2c0"></i>
<i style="left:297px;top:56.2px;width:13px;height:0.6px;background:#fde2c0"></i>
<i style="left:297px;top:57.8px;width:11px;height:0.6px;background:#fde2c0"></i>
<i style="left:297px;top:59.4px;width:8px;height:0.6px;background:#fde2c0"></i>
<i style="left:297px;top:63.8px;width:5px;height:0.6px;background:#fbd0a0"></i>
<i style="left:316.3px;top:37px;width:17.5px;height:38px;background:#8cab5a;border-radius:1.5px"></i>
<div style="left:318px;top:60px;width:16px;height:15px;border-radius:50%;background:#98b566"></div>
<div style="left:321px;top:44px;width:13px;height:12px;border-radius:50%;background:#94b262"></div>
<i style="left:318px;top:55px;width:10px;height:0.6px;background:#eef4e0"></i>
<i style="left:318px;top:56.8px;width:7px;height:0.5px;background:#dfe8cc"></i>
<i style="left:341.5px;top:37px;width:16.9px;height:38px;background:#fefcfa"></i>
<i style="left:341.5px;top:37px;width:16.9px;height:38px;background:#f6f1ea"></i>
<div style="left:343.3px;top:53.599999999999994px;width:14px;height:7px;border-radius:50% 50% 40% 40%;background:#86a85a"></div>
<div style="left:348.0px;top:40.099999999999994px;width:3.2px;height:3.2px;border-radius:50%;background:#5a3a28"></div>
<i style="left:343.5px;top:44.5px;width:12.9px;height:1px;background:#8a6a50"></i>
<i style="left:345.5px;top:46.5px;width:8.9px;height:1px;background:#a08a70"></i>
<i style="left:344.5px;top:49.5px;width:10.9px;height:0.5px;background:#ccc"></i>
<i style="left:345.4px;top:69px;width:8.6px;height:2.5px;background:#3d2a1e;border-radius:1.5px"></i>
<div style="left:342.5px;top:56px;width:2.5px;height:2.5px;border-radius:50%;background:#e8a060"></div>
<div style="left:354.9px;top:56px;width:2.5px;height:2.5px;border-radius:50%;background:#e8a060"></div>
<i style="left:346.5px;top:74.4px;width:6.9px;height:0.4px;background:#d8d4d0"></i>
<i style="left:362px;top:37px;width:17.6px;height:38px;background:#fefcfa"></i>
<i style="left:362px;top:37px;width:17.6px;height:23.6px;background:#e6ecd8"></i>
<i style="left:362.8px;top:38px;width:1.7px;height:0.5px;background:#999"></i>
<i style="left:376.6px;top:38px;width:2.2px;height:0.5px;background:#777"></i>
<div style="left:365px;top:42.2px;width:11.2px;height:10.5px;border-radius:50%;background:#4a2c18"></div>
<div style="left:367.6px;top:45px;width:6px;height:6.5px;border-radius:50%;background:#c8b090"></div>
<div style="left:362px;top:53.5px;width:17.6px;height:7.1px;border-radius:7px 7px 0 0;background:#8ab060"></div>
<i style="left:367px;top:55px;width:7px;height:5.6px;background:#a8c888;border-radius:2px"></i>
<i style="left:369px;top:62.2px;width:3.6px;height:0.4px;background:#bbb"></i>
<i style="left:364px;top:64.5px;width:13.6px;height:0.6px;background:#8a8a8a"></i>
<i style="left:365px;top:66.6px;width:11.6px;height:0.6px;background:#a0a0a0"></i>
<div style="left:368.9px;top:69.2px;width:3.8px;height:3.8px;border-radius:50%;background:#3d2414"></div>
<i style="left:367px;top:74.4px;width:7.6px;height:0.4px;background:#d8d4d0"></i>
<i style="left:383px;top:37px;width:17.5px;height:38px;background:#fefcfa"></i>
<i style="left:383px;top:37px;width:17.5px;height:23.6px;background:#f8c8a0"></i>
<i style="left:383.8px;top:38px;width:1.7px;height:0.5px;background:#999"></i>
<i style="left:397.5px;top:38px;width:2.2px;height:0.5px;background:#777"></i>
<div style="left:384px;top:42.599999999999994px;width:5.5px;height:5.2px;border-radius:50%;background:#4a2416"></div>
<div style="left:392px;top:43.8px;width:2.8px;height:2.8px;border-radius:50%;background:#8a70e0"></div>
<i style="left:383px;top:52.5px;width:6px;height:8.1px;background:#e8781c"></i>
<i style="left:395px;top:52.5px;width:5.5px;height:8.1px;background:#e8781c"></i>
<i style="left:389px;top:50px;width:6px;height:10.6px;background:#fff4ea"></i>
<div style="left:395.5px;top:49.8px;width:3.4px;height:3.4px;border-radius:50%;background:#a898a8"></div>
<i style="left:386px;top:47.5px;width:4px;height:5px;background:#f4a070"></i>
<i style="left:390px;top:62.2px;width:3.5px;height:0.4px;background:#bbb"></i>
<i style="left:385px;top:64.5px;width:13.5px;height:0.6px;background:#8a8a8a"></i>
<i style="left:386px;top:66.6px;width:11.5px;height:0.6px;background:#a0a0a0"></i>
<div style="left:389.9px;top:69.2px;width:3.8px;height:3.8px;border-radius:50%;background:#3d2414"></div>
<i style="left:388px;top:74.4px;width:7.5px;height:0.4px;background:#d8d4d0"></i>
<i style="left:404px;top:37px;width:17.5px;height:38px;background:#fefcfa"></i>
<i style="left:404px;top:37px;width:17.5px;height:23.6px;background:#eeeeee"></i>
<i style="left:404.8px;top:38px;width:1.7px;height:0.5px;background:#999"></i>
<i style="left:418.5px;top:38px;width:2.2px;height:0.5px;background:#777"></i>
<i style="left:413.2px;top:42.2px;width:8.3px;height:5.6px;background:#3a3a3a;border-radius:4px 0 0 4px"></i>
<div style="left:405px;top:48px;width:17px;height:5px;background:#a8a8a8;transform:rotate(-35deg);transform-origin:0 0;top:58px"></div>
<i style="left:415px;top:48px;width:6.5px;height:12.6px;background:#b8b8b8"></i>
<i style="left:404px;top:55px;width:7px;height:5.6px;background:#d0d0d0"></i>
<i style="left:411px;top:62.2px;width:3.5px;height:0.4px;background:#bbb"></i>
<i style="left:406px;top:64.5px;width:13.5px;height:0.6px;background:#8a8a8a"></i>
<i style="left:407px;top:66.6px;width:11.5px;height:0.6px;background:#a0a0a0"></i>
<div style="left:410.9px;top:69.2px;width:3.8px;height:3.8px;border-radius:50%;background:#3d2414"></div>
<i style="left:409px;top:74.4px;width:7.5px;height:0.4px;background:#d8d4d0"></i>
<i style="left:425px;top:37px;width:17.5px;height:38px;background:#fefcfa"></i>
<i style="left:425px;top:37px;width:17.5px;height:23.6px;background:#fae6c4"></i>
<i style="left:425.8px;top:38px;width:1.7px;height:0.5px;background:#999"></i>
<i style="left:439.5px;top:38px;width:2.2px;height:0.5px;background:#777"></i>
<div style="left:434.70000000000005px;top:39.599999999999994px;width:8px;height:7.5px;border-radius:50% 0 0 50%;background:#5a3020"></div>
<i style="left:425px;top:47px;width:17.5px;height:13.6px;background:#f4c040"></i>
<i style="left:425px;top:50px;width:5px;height:10.6px;background:#f0a850"></i>
<i style="left:438px;top:48px;width:4.5px;height:6px;background:#f8b870"></i>
<i style="left:432px;top:62.2px;width:3.5px;height:0.4px;background:#bbb"></i>
<i style="left:427px;top:64.5px;width:13.5px;height:0.6px;background:#8a8a8a"></i>
<i style="left:428px;top:66.6px;width:11.5px;height:0.6px;background:#a0a0a0"></i>
<div style="left:431.9px;top:69.2px;width:3.8px;height:3.8px;border-radius:50%;background:#3d2414"></div>
<i style="left:430px;top:74.4px;width:7.5px;height:0.4px;background:#d8d4d0"></i>
<i style="left:445.9px;top:37px;width:17.5px;height:38px;background:#fefcfa"></i>
<i style="left:445.9px;top:37px;width:17.5px;height:23.6px;background:#cfc6f2"></i>
<i style="left:446.7px;top:38px;width:1.7px;height:0.5px;background:#999"></i>
<i style="left:460.4px;top:38px;width:2.2px;height:0.5px;background:#777"></i>
<div style="left:449px;top:40.5px;width:11.5px;height:9.5px;border-radius:50%;background:#b0a0f2"></div>
<i style="left:450px;top:47px;width:7px;height:13.6px;background:#e8a080"></i>
<div style="left:446.5px;top:60px;width:14px;height:3px;background:#3a2418;transform:rotate(-60deg);transform-origin:0 0"></div>
<i style="left:457px;top:45px;width:5px;height:9px;background:#3a2418;border-radius:2px"></i>
<i style="left:458px;top:54px;width:5.4px;height:6.6px;background:#e8a888"></i>
<i style="left:452.9px;top:62.2px;width:3.5px;height:0.4px;background:#bbb"></i>
<i style="left:447.9px;top:64.5px;width:13.5px;height:0.6px;background:#8a8a8a"></i>
<i style="left:448.9px;top:66.6px;width:11.5px;height:0.6px;background:#a0a0a0"></i>
<div style="left:452.8px;top:69.2px;width:3.8px;height:3.8px;border-radius:50%;background:#3d2414"></div>
<i style="left:450.9px;top:74.4px;width:7.5px;height:0.4px;background:#d8d4d0"></i>
<i style="left:468.4px;top:45.3px;width:15.6px;height:24.3px;background:#151515;border-radius:2px"></i>
<i style="left:469px;top:62.75px;width:14.4px;height:3.15px;background:#2f3fd8"></i>
<i style="left:471px;top:52px;width:10px;height:0.6px;background:#444"></i>
<i style="left:471px;top:54.67px;width:10px;height:0.6px;background:#444"></i>
<i style="left:471px;top:57.33px;width:10px;height:0.6px;background:#444"></i>
<i style="left:488.5px;top:41.6px;width:1.5px;height:0.6px;background:#999"></i>
<i style="left:500px;top:41.4px;width:2.5px;height:1.2px;background:#111"></i>
<i style="left:508.5px;top:41.6px;width:1.5px;height:0.6px;background:#999"></i>
<i style="left:519px;top:41.4px;width:2.5px;height:1.2px;background:#111"></i>
<i style="left:527.5px;top:41.6px;width:1.5px;height:0.6px;background:#999"></i>
<i style="left:539px;top:41.4px;width:2.5px;height:1.2px;background:#111"></i>
<i style="left:488.5px;top:44px;width:2.5px;height:0.6px;background:#777"></i>
<i style="left:488.5px;top:45.4px;width:5.5px;height:0.8px;background:#444"></i>
<i style="left:488.5px;top:48.5px;width:14px;height:0.5px;background:#e8e8ee"></i>
<i style="left:488.5px;top:52px;width:14px;height:0.5px;background:#e8e8ee"></i>
<i style="left:488.5px;top:55.5px;width:14px;height:0.5px;background:#e8e8ee"></i>
<i style="left:489px;top:47.8px;width:4px;height:0.4px;background:#ccc"></i>
<i style="left:489px;top:51.3px;width:4px;height:0.4px;background:#ccc"></i>
<i style="left:489px;top:54.8px;width:3px;height:0.4px;background:#ccc"></i>
<i style="left:499px;top:59px;width:3.5px;height:0.4px;background:#bbb"></i>
<i style="left:488px;top:63px;width:15px;height:2.8px;background:#3a4ee0;border-radius:0.4px"></i>
<i style="left:491px;top:68px;width:9px;height:0.5px;background:#ccc"></i>
<div style="left:514px;top:40.5px;width:3px;height:4.6px;border-radius:50%;background:#6a5acb"></div>
<i style="left:510px;top:47.5px;width:10px;height:0.9px;background:#555"></i>
<i style="left:508.5px;top:52px;width:13.5px;height:0.5px;background:#e8e8ee"></i>
<i style="left:509px;top:53px;width:3px;height:0.5px;background:#bbb"></i>
<i style="left:508.5px;top:56.5px;width:13.5px;height:0.5px;background:#e8e8ee"></i>
<i style="left:509px;top:57.5px;width:3px;height:0.5px;background:#bbb"></i>
<i style="left:519px;top:57.5px;width:3px;height:0.5px;background:#bbb"></i>
<i style="left:516px;top:60px;width:6px;height:0.4px;background:#ccc"></i>
<i style="left:508px;top:63px;width:14px;height:2.5px;background:#3a4ee0;border-radius:0.4px"></i>
<i style="left:508px;top:68px;width:7px;height:2.8px;background:#e8806a"></i>
<i style="left:515px;top:68px;width:7px;height:2.8px;background:#4a90e0"></i>
<i style="left:510px;top:72px;width:10px;height:0.4px;background:#ccc"></i>
<div style="left:527.5px;top:40.5px;width:3px;height:4.6px;border-radius:50%;background:#6a5acb"></div>
<i style="left:527.5px;top:47.5px;width:2.5px;height:0.7px;background:#555"></i>
<i style="left:527.5px;top:49.3px;width:11.5px;height:0.7px;background:#555"></i>
<i style="left:527.5px;top:51.5px;width:2.5px;height:0.5px;background:#bbb"></i>
<i style="left:527.5px;top:55.4px;width:14.5px;height:1.6px;background:#f0f0f4"></i>
<i style="left:528px;top:55.8px;width:1.5px;height:0.8px;background:#888"></i>
<i style="left:530.5px;top:56px;width:4.5px;height:0.4px;background:#aaa"></i>
<i style="left:527.5px;top:59.2px;width:14.5px;height:1.6px;background:#f0f0f4"></i>
<i style="left:528px;top:59.6px;width:1.5px;height:0.8px;background:#888"></i>
<i style="left:530.5px;top:59.8px;width:3.5px;height:0.4px;background:#aaa"></i>
<i style="left:527.5px;top:62.8px;width:4.5px;height:0.4px;background:#ccc"></i>
<i style="left:527px;top:66.6px;width:15px;height:2.8px;background:#3a4ee0;border-radius:0.4px"></i>
<i style="left:531px;top:71.5px;width:6px;height:0.5px;background:#ccc"></i>
<i style="left:545px;top:36.8px;width:18px;height:38.7px;background:#fff;border:0.6px solid #b8c0f8"></i>
<i style="left:545px;top:36.8px;width:18px;height:4px;background:#4a5fe6"></i>
<div style="left:552.5px;top:44.5px;width:3px;height:5px;border-radius:50%;background:#6a5acb"></div>
<i style="left:547px;top:51.5px;width:5px;height:0.5px;background:#bbb"></i>
<i style="left:547px;top:54px;width:14px;height:0.5px;background:#ccc"></i>
<i style="left:547px;top:57px;width:3px;height:0.5px;background:#bbb"></i>
<i style="left:547px;top:60.4px;width:14px;height:1.2px;background:#f0f0f4"></i>
<i style="left:557px;top:60.2px;width:4px;height:1.6px;background:#ddd"></i>
<i style="left:546.5px;top:65px;width:15px;height:2.7px;background:#3a4ee0;border-radius:0.4px"></i>
<i style="left:548px;top:71px;width:5px;height:0.5px;background:#ccc"></i>
<i style="left:556px;top:70.6px;width:2px;height:1.2px;background:#4a5fe6"></i>
<i style="left:584px;top:44.8px;width:6px;height:0.7px;background:#555"></i>
<i style="left:584.6px;top:47px;width:5.4px;height:4.2px;background:#3aada0;border-radius:1.5px"></i>
<i style="left:590.5px;top:47.5px;width:6.5px;height:3.3px;background:#d6eaf6"></i>
<i style="left:591.5px;top:48.2px;width:3.5px;height:0.4px;background:#9ab"></i>
<i style="left:591.5px;top:49.4px;width:2.5px;height:0.4px;background:#abc"></i>
<i style="left:584.6px;top:52px;width:5.4px;height:4.2px;background:#3aada0;border-radius:1.5px"></i>
<i style="left:590.5px;top:52.5px;width:6.5px;height:3.3px;background:#d6eaf6"></i>
<i style="left:591.5px;top:53.2px;width:3.5px;height:0.4px;background:#9ab"></i>
<i style="left:591.5px;top:54.4px;width:2.5px;height:0.4px;background:#abc"></i>
<i style="left:584.6px;top:56.5px;width:5.4px;height:4.2px;background:#3aada0;border-radius:1.5px"></i>
<i style="left:590.5px;top:57px;width:6.5px;height:3.3px;background:#d6eaf6"></i>
<i style="left:591.5px;top:57.7px;width:3.5px;height:0.4px;background:#9ab"></i>
<i style="left:591.5px;top:58.9px;width:2.5px;height:0.4px;background:#abc"></i>
<i style="left:394px;top:81.3px;width:18.5px;height:42.7px;background:#fdfdfd"></i>
<i style="left:395px;top:82.5px;width:2px;height:0.8px;background:#999"></i>
<i style="left:408.5px;top:82.5px;width:3px;height:0.8px;background:#222"></i>
<i style="left:420px;top:81.3px;width:17px;height:42.7px;background:#fdfdfd"></i>
<i style="left:421px;top:82.5px;width:2px;height:0.8px;background:#999"></i>
<i style="left:433px;top:82.5px;width:3px;height:0.8px;background:#222"></i>
<i style="left:443px;top:81.3px;width:21px;height:42.7px;background:#fdfdfd"></i>
<i style="left:444px;top:82.5px;width:2px;height:0.8px;background:#999"></i>
<i style="left:460px;top:82.5px;width:3px;height:0.8px;background:#222"></i>
<i style="left:467.7px;top:81.3px;width:17.1px;height:42.7px;background:#fdfdfd"></i>
<i style="left:468.7px;top:82.5px;width:2px;height:0.8px;background:#999"></i>
<i style="left:480.8px;top:82.5px;width:3px;height:0.8px;background:#222"></i>
<i style="left:488.5px;top:81.3px;width:14.5px;height:42.7px;background:#fdfdfd"></i>
<i style="left:489.5px;top:82.5px;width:2px;height:0.8px;background:#999"></i>
<i style="left:499px;top:82.5px;width:3px;height:0.8px;background:#222"></i>
<i style="left:506.9px;top:81.3px;width:15.9px;height:42.7px;background:#fdfdfd"></i>
<i style="left:507.9px;top:82.5px;width:2px;height:0.8px;background:#999"></i>
<i style="left:518.8px;top:82.5px;width:3px;height:0.8px;background:#222"></i>
<i style="left:526.5px;top:81.3px;width:15.9px;height:42.7px;background:#fdfdfd"></i>
<i style="left:527.5px;top:82.5px;width:2px;height:0.8px;background:#999"></i>
<i style="left:538.4px;top:82.5px;width:3px;height:0.8px;background:#222"></i>
<i style="left:399.8px;top:104.3px;width:6.5px;height:2.5px;background:#f08a4a;border-radius:1.2px"></i>
<i style="left:395px;top:89px;width:4px;height:0.7px;background:#777"></i>
<i style="left:395px;top:91px;width:2.5px;height:0.6px;background:#777"></i>
<i style="left:395px;top:95px;width:17px;height:2px;background:#f6f6f8"></i>
<i style="left:395px;top:99.5px;width:17px;height:2px;background:#f6f6f8"></i>
<i style="left:395.5px;top:95.7px;width:3.5px;height:0.5px;background:#ccc"></i>
<i style="left:395.5px;top:100.2px;width:2.5px;height:0.5px;background:#ccc"></i>
<i style="left:400.5px;top:110.2px;width:4.5px;height:0.5px;background:#9ad0d0"></i>
<div style="left:397.5px;top:113.5px;width:2.2px;height:2.2px;border-radius:50%;border:0.3px solid #ccc"></div>
<div style="left:402.0px;top:113.5px;width:2.2px;height:2.2px;border-radius:50%;border:0.3px solid #ccc"></div>
<div style="left:406.5px;top:113.5px;width:2.2px;height:2.2px;border-radius:50%;border:0.3px solid #ccc"></div>
<i style="left:395px;top:121.2px;width:3px;height:0.5px;background:#ccc"></i>
<i style="left:402px;top:121.2px;width:7px;height:0.5px;background:#ccc"></i>
<div style="left:421.1px;top:87.4px;width:15px;height:15px;border-radius:50%;background:#e6f5e6"></div>
<div style="left:424.2px;top:90.5px;width:8.8px;height:8.8px;border-radius:50%;background:#7b6bec"></div>
<i style="left:424.3px;top:118px;width:8.7px;height:2.6px;background:#f08a4a;border-radius:1px"></i>
<i style="left:422px;top:109.5px;width:13px;height:0.5px;background:#d8d8ee"></i>
<i style="left:422.5px;top:111.2px;width:12px;height:0.5px;background:#d8d8ee"></i>
<i style="left:423.5px;top:113px;width:10px;height:0.5px;background:#d8d8ee"></i>
<i style="left:426px;top:106.5px;width:5px;height:0.5px;background:#ddd"></i>
<i style="left:445px;top:89px;width:17.4px;height:9.8px;background:#7c68ee;border-radius:1px"></i>
<i style="left:445px;top:103px;width:9.6px;height:9.8px;background:#86d08a"></i>
<i style="left:456.3px;top:103px;width:7.7px;height:9.8px;background:#f4a478"></i>
<i style="left:445.5px;top:86px;width:2.5px;height:1.5px;background:#aab"></i>
<i style="left:449px;top:86.3px;width:4px;height:0.5px;background:#ccc"></i>
<i style="left:461px;top:85.8px;width:1.5px;height:1.5px;background:#aaa"></i>
<i style="left:445px;top:101.2px;width:3px;height:0.5px;background:#bbb"></i>
<i style="left:457px;top:101.2px;width:3px;height:0.5px;background:#bbb"></i>
<i style="left:459px;top:95px;width:3px;height:2px;background:#fff"></i>
<i style="left:445px;top:114.5px;width:5px;height:0.5px;background:#ddd"></i>
<i style="left:456px;top:114.5px;width:4px;height:0.5px;background:#ddd"></i>
<i style="left:446.5px;top:121.5px;width:1.5px;height:1px;background:#ccc"></i>
<i style="left:451px;top:121.5px;width:1.5px;height:1px;background:#ccc"></i>
<i style="left:455.5px;top:121.5px;width:1.5px;height:1px;background:#ccc"></i>
<i style="left:460px;top:121.5px;width:1.5px;height:1px;background:#ccc"></i>
<i style="left:469px;top:104.8px;width:14.5px;height:2.2px;background:#6a50d8"></i>
<i style="left:469px;top:96.5px;width:14.5px;height:0.7px;background:#6a50d8"></i>
<i style="left:469px;top:91.2px;width:3px;height:0.7px;background:#777"></i>
<i style="left:469px;top:100px;width:13.5px;height:0.6px;background:#aaa"></i>
<i style="left:488.5px;top:107.6px;width:14.5px;height:2.1px;background:#6a50d8"></i>
<i style="left:507.5px;top:100.2px;width:15.5px;height:2.4px;background:#6a50d8"></i>
<i style="left:507.5px;top:92.7px;width:15px;height:1.5px;background:#ececf0"></i>
<i style="left:531px;top:105px;width:11px;height:2.6px;background:#6a50d8"></i>
<div style="left:474.0px;top:83.0px;width:3px;height:5px;border-radius:50%;background:#6a5acb"></div>
<div style="left:494.1px;top:83.1px;width:3px;height:5px;border-radius:50%;background:#6a5acb"></div>
<div style="left:507.5px;top:81.0px;width:3px;height:5px;border-radius:50%;background:#6a5acb"></div>
<div style="left:532.5px;top:84.5px;width:3px;height:5px;border-radius:50%;background:#6a5acb"></div>
<i style="left:489px;top:93px;width:4px;height:0.8px;background:#555"></i>
<i style="left:489px;top:100.3px;width:13.5px;height:0.5px;background:#ccc"></i>
<i style="left:489px;top:105px;width:13.5px;height:0.5px;background:#ccc"></i>
<i style="left:507.5px;top:87.3px;width:6.5px;height:0.5px;background:#999"></i>
<i style="left:507.5px;top:88.8px;width:3.5px;height:0.5px;background:#bbb"></i>
<i style="left:509.5px;top:92.9px;width:0.8px;height:1.2px;background:#333"></i>
<i style="left:507.5px;top:96.8px;width:15px;height:0.5px;background:#ccc"></i>
<i style="left:511px;top:104.5px;width:8px;height:0.5px;background:#bbb"></i>
<i style="left:510px;top:110.8px;width:11px;height:0.5px;background:#ddd"></i>
<i style="left:527.5px;top:80.3px;width:1.5px;height:0.5px;background:#999"></i>
<i style="left:530px;top:80.3px;width:1px;height:0.5px;background:#999"></i>
<i style="left:527.5px;top:96.2px;width:14px;height:0.5px;background:#bbb"></i>
<i style="left:527.5px;top:101.1px;width:14px;height:0.5px;background:#bbb"></i>
<i style="left:528px;top:105.3px;width:2px;height:2px;background:#eee;border:0.3px solid #aaa"></i>
<i style="left:532px;top:110px;width:7px;height:0.4px;background:#ddd"></i>
<i style="left:525.3px;top:118px;width:17.7px;height:5px;background:#111"></i>
<i style="left:525.3px;top:123px;width:17.7px;height:30.6px;background:#fdfdfd"></i>
<i style="left:526px;top:151px;width:16.5px;height:2px;background:#2e8a7a"></i>
<div style="left:532.3px;top:125.80000000000001px;width:3.4px;height:3.4px;border-radius:50%;border:0.4px solid #aaa"></div>
<i style="left:531px;top:131px;width:6px;height:0.5px;background:#aaa"></i>
<i style="left:527px;top:135px;width:14px;height:0.6px;background:#e6e6ea"></i>
<i style="left:527px;top:137.33px;width:14px;height:0.6px;background:#e6e6ea"></i>
<i style="left:527px;top:139.67px;width:14px;height:0.6px;background:#e6e6ea"></i>
<i style="left:527px;top:142px;width:14px;height:0.6px;background:#e6e6ea"></i>
<i style="left:527px;top:144.33px;width:14px;height:0.6px;background:#e6e6ea"></i>
<i style="left:527px;top:146.67px;width:14px;height:0.6px;background:#e6e6ea"></i>
<i style="left:527px;top:118.8px;width:1.5px;height:0.7px;background:#777"></i>
<i style="left:531.5px;top:120px;width:5px;height:0.6px;background:#888"></i>
<i style="left:540.5px;top:118.8px;width:1.5px;height:0.7px;background:#777"></i>
<i style="left:545px;top:77.6px;width:17.5px;height:38px;background:#f0f0f4"></i>
<i style="left:546.5px;top:102.8px;width:15px;height:1.7px;background:#6a50d8"></i>
<i style="left:547px;top:107px;width:6px;height:3px;background:#e86a50"></i>
<i style="left:554px;top:107px;width:7px;height:3px;background:#3a8ae0"></i>
<div style="left:552.5px;top:80px;width:3px;height:5px;border-radius:50%;background:#6a5acb"></div>
<i style="left:548px;top:86.8px;width:12px;height:0.8px;background:#666"></i>
<i style="left:549px;top:88.8px;width:10px;height:0.5px;background:#aaa"></i>
<i style="left:550px;top:90.3px;width:8px;height:0.5px;background:#aaa"></i>
<i style="left:547px;top:97px;width:14px;height:0.5px;background:#d8d8e0"></i>
<i style="left:557px;top:94.5px;width:4px;height:0.5px;background:#ccc"></i>
<i style="left:600.9px;top:35px;width:51.7px;height:42.8px;background:#3a52e6"></i>
<div style="left:601.5px;top:35.6px;width:23.7px;height:41.6px;background:radial-gradient(ellipse at 50% 40%,#2366b8,#1a4c9c 70%,#173f8c)"></div>
<div style="left:626.9px;top:35.6px;width:25.1px;height:41.6px;background:linear-gradient(180deg,#1b56a6,#1a4a98)"></div>
<svg style="position:absolute;left:610.5px;top:43.0px" width="6" height="5" viewBox="0 0 6 5"><circle cx="3.2" cy="0.9" r="0.8" fill="#fff"/><path d="M0.3 3.6 L2.6 2.2 L3.2 1.8 L3.8 2.3 L5.7 3.6 L3.4 2.9 L2.2 4.8 L2.5 2.9Z" fill="#fff"/></svg>
<i style="left:606.45px;top:49.5px;width:14px;height:1px;background:#d8e4ff"></i>
<i style="left:608.45px;top:58px;width:10px;height:0.5px;background:#7aa0e0"></i>
<i style="left:609.45px;top:61px;width:8px;height:0.4px;background:#5a88d0"></i>
<div style="left:603.5px;top:59.5px;width:21px;height:9px;border-radius:50%;border:1px solid #b8e04a"></div>
<i style="left:604.9px;top:69.2px;width:17.1px;height:2.8px;background:#f4f7ff"></i>
<i style="left:611.45px;top:74.4px;width:4px;height:0.5px;background:#9ab8e8"></i>
<i style="left:630px;top:44.5px;width:17px;height:19.5px;background:#fbfbfb"></i>
<div style="left:632.5px;top:50.5px;width:4px;height:4px;border-radius:50%;background:#e86a40"></div>
<div style="left:640.5px;top:50.5px;width:4px;height:4px;border-radius:50%;background:#f4c040"></div>
<i style="left:638.2px;top:47.5px;width:0.6px;height:9px;background:#c8a070"></i>
<i style="left:633px;top:61px;width:11px;height:0.6px;background:#d8c8c0"></i>
<i style="left:630.5px;top:69.2px;width:17.6px;height:2.8px;background:#f4f7ff"></i>
<i style="left:637.3px;top:74.4px;width:4px;height:0.5px;background:#9ab8e8"></i>
<div style="left:600px;top:29.299999999999997px;width:11.6px;height:4.7px;border-radius:50%;border:0.5px solid #444"></div>
<div style="left:650.2px;top:28.200000000000003px;width:9.8px;height:6.3px;border-radius:50%;border:0.5px solid #444"></div>
<i style="left:626.8px;top:77.8px;width:25.6px;height:124.9px;background:#fff;border:1.6px solid #4450e0"></i>
<i style="left:628.5px;top:85.7px;width:22px;height:9.3px;background:#6a2630"></i>
<i style="left:630px;top:89px;width:9px;height:5px;background:#9a3a40"></i>
<i style="left:628.5px;top:80px;width:22px;height:2.5px;background:#f4f4f8"></i>
<i style="left:629px;top:97px;width:10px;height:0.7px;background:#777"></i>
<i style="left:629px;top:99px;width:20px;height:0.5px;background:#bbb"></i>
<i style="left:629px;top:100.3px;width:16px;height:0.5px;background:#ccc"></i>
<i style="left:629.5px;top:103.5px;width:1px;height:1px;background:#888"></i>
<i style="left:632px;top:103.7px;width:11px;height:0.5px;background:#c8c8d0"></i>
<i style="left:629.5px;top:107px;width:1px;height:1px;background:#888"></i>
<i style="left:632px;top:107.2px;width:8px;height:0.5px;background:#c8c8d0"></i>
<i style="left:629.5px;top:110.5px;width:1px;height:1px;background:#888"></i>
<i style="left:632px;top:110.7px;width:11px;height:0.5px;background:#c8c8d0"></i>
<i style="left:629.5px;top:114px;width:1px;height:1px;background:#888"></i>
<i style="left:632px;top:114.2px;width:8px;height:0.5px;background:#c8c8d0"></i>
<i style="left:629.5px;top:117.5px;width:1.2px;height:1.2px;background:#e08060"></i>
<i style="left:634.1px;top:117.5px;width:1.2px;height:1.2px;background:#ccc"></i>
<i style="left:638.7px;top:117.5px;width:1.2px;height:1.2px;background:#ccc"></i>
<i style="left:643.3px;top:117.5px;width:1.2px;height:1.2px;background:#ccc"></i>
<i style="left:647.9px;top:117.5px;width:1.2px;height:1.2px;background:#ccc"></i>
<i style="left:626.8px;top:119.4px;width:25.6px;height:1.8px;background:#4450e0"></i>
<i style="left:628px;top:121px;width:23px;height:39.5px;background:#fafafa"></i>
<i style="left:628px;top:121px;width:23px;height:14px;background:#e8e8ea"></i>
<i style="left:631px;top:124.5px;width:17px;height:1px;background:#666"></i>
<i style="left:633px;top:126.8px;width:13px;height:0.6px;background:#999"></i>
<div style="left:637.2px;top:131px;width:3.6px;height:3.6px;border-radius:50%;background:#7aa0b8;border:0.5px solid #dde"></div>
<i style="left:633px;top:138.5px;width:12px;height:0.6px;background:#888"></i>
<i style="left:631px;top:140.3px;width:16px;height:0.5px;background:#bbb"></i>
<i style="left:628px;top:144px;width:23px;height:9px;background:#e8e8ea"></i>
<i style="left:628.8px;top:154.3px;width:21.4px;height:1.9px;background:#1a7ab8"></i>
<i style="left:635px;top:157.5px;width:8px;height:0.5px;background:#bbb"></i>
<i style="left:626.8px;top:160.8px;width:25.6px;height:1.8px;background:#4450e0"></i>
<i style="left:628px;top:162.5px;width:23px;height:39px;background:#e6e6e8"></i>
<i style="left:630px;top:165.5px;width:19px;height:1px;background:#555"></i>
<i style="left:631px;top:167.7px;width:17px;height:0.9px;background:#555"></i>
<i style="left:633px;top:170px;width:13px;height:0.6px;background:#999"></i>
<i style="left:628.5px;top:175.5px;width:22px;height:4px;background:#f8f8f8"></i>
<i style="left:635px;top:182px;width:8px;height:0.6px;background:#aaa"></i>
<i style="left:628.8px;top:196.4px;width:21.4px;height:2.6px;background:#2080c0"></i>
<i style="left:606px;top:97.8px;width:18px;height:38.7px;background:#5f5f5f"></i>
<i style="left:596.3px;top:101.7px;width:8.5px;height:31.1px;background:#d9d9d9"></i>
<div style="left:618px;top:117.0px;width:2.5px;height:2.5px;border-radius:50%;border:0.5px solid #fff"></div>
<div style="left:618px;top:120.2px;width:2.5px;height:2.5px;border-radius:50%;border:0.5px solid #fff"></div>
<div style="left:618px;top:123.4px;width:2.5px;height:2.5px;border-radius:50%;border:0.5px solid #fff"></div>
<div style="left:618px;top:126.6px;width:2.5px;height:2.5px;border-radius:50%;border:0.5px solid #fff"></div>
<div style="left:618px;top:129.8px;width:2.5px;height:2.5px;border-radius:50%;border:0.5px solid #fff"></div>
<i style="left:564.4px;top:81.4px;width:20.3px;height:44.1px;background:#fdfdfd"></i>
<i style="left:566px;top:104.6px;width:17px;height:3.2px;background:#58d6b0"></i>
<i style="left:566px;top:115.2px;width:17px;height:2.9px;background:#4a86e0"></i>
<i style="left:566px;top:88px;width:17px;height:0.6px;background:#e8e8ee"></i>
<i style="left:566px;top:90.8px;width:17px;height:0.6px;background:#e8e8ee"></i>
<i style="left:566px;top:93.6px;width:17px;height:0.6px;background:#e8e8ee"></i>
<i style="left:566px;top:96.4px;width:17px;height:0.6px;background:#e8e8ee"></i>
<i style="left:566px;top:99.2px;width:17px;height:0.6px;background:#e8e8ee"></i>
<i style="left:564.4px;top:130.4px;width:20.3px;height:36.8px;background:#fff"></i>
<i style="left:565.5px;top:131.5px;width:1.5px;height:0.5px;background:#999"></i>
<i style="left:581px;top:131.5px;width:2.5px;height:0.5px;background:#999"></i>
<i style="left:565px;top:134px;width:19px;height:21px;background:#e6e6e4"></i>
<svg style="position:absolute;left:565px;top:134px" width="19" height="21" viewBox="0 0 19 21"><path d="M0 6 L8 8 L19 5 M3 0 L6 21 M10 8 L13 21 M0 14 L19 12" stroke="#f8f8f8" stroke-width="0.6" fill="none"/><circle cx="6" cy="4" r="0.9" fill="#d04040"/></svg>
<i style="left:565px;top:155px;width:19px;height:11px;background:#fff;border:0.3px solid #ddd"></i>
<i style="left:566px;top:156.5px;width:5px;height:0.5px;background:#888"></i>
<i style="left:566px;top:158px;width:9px;height:0.4px;background:#bbb"></i>
<i style="left:570px;top:159.9px;width:9px;height:1.6px;background:#e05050;border-radius:0.8px"></i>
<i style="left:570px;top:163.5px;width:9px;height:0.5px;background:#ccc"></i>
<i style="left:569px;top:169.5px;width:1px;height:1px;background:#ccc"></i>
<i style="left:572px;top:169.5px;width:1px;height:1px;background:#555"></i>
<i style="left:575px;top:169.5px;width:1px;height:1px;background:#ccc"></i>
<i style="left:600.2px;top:138.2px;width:23.8px;height:41.7px;background:#4450e0"></i>
<i style="left:601.4px;top:139.4px;width:21.4px;height:39.3px;background:#fff"></i>
<i style="left:601.4px;top:141.5px;width:21.4px;height:24.5px;background:#e8e4d6"></i>
<svg style="position:absolute;left:601.4px;top:141.5px" width="21.4" height="24.5" viewBox="0 0 21.4 24.5"><path d="M0 3 C 5 5, 12 2, 21.4 6 M0 11 C 6 9, 14 12, 21.4 10 M6 0 L9 24 M15 0 C 13 8, 16 16, 14 24" stroke="#c8c4b4" stroke-width="0.5" fill="none"/><path d="M0 16 C 4 14, 8 18, 21.4 15" stroke="#a8b8c8" stroke-width="0.6" fill="none"/></svg>
<i style="left:607px;top:140px;width:10px;height:0.6px;background:#999"></i>
<div style="left:601.2px;top:158.3px;width:19px;height:11.3px;border-radius:50%;border:0.6px solid #222;background:rgba(255,255,255,0.85)"></div>
<i style="left:611.8px;top:161.8px;width:1.4px;height:1.8px;background:#e04030;border-radius:50% 50% 50% 0"></i>
<i style="left:606px;top:165.5px;width:12px;height:0.5px;background:#666"></i>
<i style="left:608px;top:166.8px;width:8px;height:0.5px;background:#888"></i>
<i style="left:604px;top:174.8px;width:5px;height:1.5px;background:#eee"></i>
<i style="left:613px;top:174px;width:10.4px;height:2.5px;background:#e85a1a"></i>
<i style="left:588px;top:107px;width:7px;height:0.6px;background:#d0d0d8"></i>
<i style="left:588px;top:110.86px;width:7px;height:0.6px;background:#d0d0d8"></i>
<i style="left:588px;top:114.71px;width:7px;height:0.6px;background:#d0d0d8"></i>
<i style="left:588px;top:118.57px;width:7px;height:0.6px;background:#d0d0d8"></i>
<i style="left:588px;top:122.43px;width:7px;height:0.6px;background:#d0d0d8"></i>
<i style="left:588px;top:126.29px;width:7px;height:0.6px;background:#d0d0d8"></i>
<i style="left:588px;top:130.14px;width:7px;height:0.6px;background:#d0d0d8"></i>
<i style="left:606.2px;top:79.5px;width:12.8px;height:1.1px;background:#bbb"></i>
<i style="left:606.2px;top:81.3px;width:10.8px;height:0.5px;background:#999"></i>
<i style="left:606.2px;top:83px;width:8.8px;height:0.5px;background:#aaa"></i>
<i style="left:606.2px;top:87.5px;width:12.8px;height:0.5px;background:#999"></i>
<i style="left:606.2px;top:89px;width:6.8px;height:0.4px;background:#aaa"></i>
<i style="left:588.5px;top:110px;width:2px;height:2px;background:#8ab0e0"></i>
<i style="left:588.5px;top:114.5px;width:2px;height:2px;background:#8ab0e0"></i>
<i style="left:588.5px;top:119px;width:2px;height:2px;background:#8ab0e0"></i>
<i style="left:652.6px;top:36px;width:19px;height:288px;background:#fff;border:0.6px solid #aaa"></i>
<svg style="position:absolute;left:652.6px;top:36.2px" width="19.0" height="18.2" viewBox="0 0 100 100" preserveAspectRatio="none"><rect x="0" y="0" width="100" height="100" fill="#fff" stroke="#a8a8a8" stroke-width="0.9" vector-effect="non-scaling-stroke"/><path d="M0 0L100 100M100 0L0 100" stroke="#b4b4b4" stroke-width="0.5" vector-effect="non-scaling-stroke" fill="none"/></svg>
<svg style="position:absolute;left:652.6px;top:61.4px" width="19.0" height="17.5" viewBox="0 0 100 100" preserveAspectRatio="none"><rect x="0" y="0" width="100" height="100" fill="#fff" stroke="#a8a8a8" stroke-width="0.9" vector-effect="non-scaling-stroke"/><path d="M0 0L100 100M100 0L0 100" stroke="#b4b4b4" stroke-width="0.5" vector-effect="non-scaling-stroke" fill="none"/></svg>
<svg style="position:absolute;left:652.6px;top:85.0px" width="19.0" height="16.3" viewBox="0 0 100 100" preserveAspectRatio="none"><rect x="0" y="0" width="100" height="100" fill="#fff" stroke="#a8a8a8" stroke-width="0.9" vector-effect="non-scaling-stroke"/><path d="M0 0L100 100M100 0L0 100" stroke="#b4b4b4" stroke-width="0.5" vector-effect="non-scaling-stroke" fill="none"/></svg>
<svg style="position:absolute;left:652.6px;top:120.2px" width="19.0" height="18.9" viewBox="0 0 100 100" preserveAspectRatio="none"><rect x="0" y="0" width="100" height="100" fill="#fff" stroke="#a8a8a8" stroke-width="0.9" vector-effect="non-scaling-stroke"/><path d="M0 0L100 100M100 0L0 100" stroke="#b4b4b4" stroke-width="0.5" vector-effect="non-scaling-stroke" fill="none"/></svg>
<svg style="position:absolute;left:652.6px;top:156.6px" width="19.0" height="19.6" viewBox="0 0 100 100" preserveAspectRatio="none"><rect x="0" y="0" width="100" height="100" fill="#fff" stroke="#a8a8a8" stroke-width="0.9" vector-effect="non-scaling-stroke"/><path d="M0 0L100 100M100 0L0 100" stroke="#b4b4b4" stroke-width="0.5" vector-effect="non-scaling-stroke" fill="none"/></svg>
<svg style="position:absolute;left:652.6px;top:193.8px" width="19.0" height="18.9" viewBox="0 0 100 100" preserveAspectRatio="none"><rect x="0" y="0" width="100" height="100" fill="#fff" stroke="#a8a8a8" stroke-width="0.9" vector-effect="non-scaling-stroke"/><path d="M0 0L100 100M100 0L0 100" stroke="#b4b4b4" stroke-width="0.5" vector-effect="non-scaling-stroke" fill="none"/></svg>
<svg style="position:absolute;left:652.6px;top:225.3px" width="19.0" height="18.2" viewBox="0 0 100 100" preserveAspectRatio="none"><rect x="0" y="0" width="100" height="100" fill="#fff" stroke="#a8a8a8" stroke-width="0.9" vector-effect="non-scaling-stroke"/><path d="M0 0L100 100M100 0L0 100" stroke="#b4b4b4" stroke-width="0.5" vector-effect="non-scaling-stroke" fill="none"/></svg>
<svg style="position:absolute;left:652.6px;top:256.1px" width="19.0" height="18.3" viewBox="0 0 100 100" preserveAspectRatio="none"><rect x="0" y="0" width="100" height="100" fill="#fff" stroke="#a8a8a8" stroke-width="0.9" vector-effect="non-scaling-stroke"/><path d="M0 0L100 100M100 0L0 100" stroke="#b4b4b4" stroke-width="0.5" vector-effect="non-scaling-stroke" fill="none"/></svg>
<svg style="position:absolute;left:652.6px;top:287.0px" width="19.0" height="19.0" viewBox="0 0 100 100" preserveAspectRatio="none"><rect x="0" y="0" width="100" height="100" fill="#fff" stroke="#a8a8a8" stroke-width="0.9" vector-effect="non-scaling-stroke"/><path d="M0 0L100 100M100 0L0 100" stroke="#b4b4b4" stroke-width="0.5" vector-effect="non-scaling-stroke" fill="none"/></svg>
<i style="left:656px;top:56px;width:12px;height:1px;background:#555"></i>
<i style="left:657px;top:58px;width:10px;height:0.6px;background:#aaa"></i>
<i style="left:658px;top:59.3px;width:8px;height:1.2px;background:#888"></i>
<i style="left:657px;top:80.5px;width:9px;height:3px;background:#ddd;border:0.4px solid #999"></i>
<i style="left:653.5px;top:103px;width:17px;height:0.6px;background:#c0c0c0"></i>
<i style="left:653.5px;top:105.67px;width:17px;height:0.6px;background:#c0c0c0"></i>
<i style="left:653.5px;top:108.33px;width:17px;height:0.6px;background:#c0c0c0"></i>
<i style="left:657px;top:113.5px;width:9px;height:3px;background:#eee;border:0.4px solid #999"></i>
<i style="left:653.5px;top:141px;width:17px;height:0.6px;background:#c0c0c0"></i>
<i style="left:653.5px;top:144px;width:17px;height:0.6px;background:#c0c0c0"></i>
<i style="left:653.5px;top:147px;width:17px;height:0.6px;background:#c0c0c0"></i>
<i style="left:657px;top:152px;width:9px;height:3px;background:#eee;border:0.4px solid #999"></i>
<i style="left:653.5px;top:178px;width:17px;height:0.6px;background:#c0c0c0"></i>
<i style="left:653.5px;top:180.67px;width:17px;height:0.6px;background:#c0c0c0"></i>
<i style="left:653.5px;top:183.33px;width:17px;height:0.6px;background:#c0c0c0"></i>
<i style="left:657px;top:188.5px;width:9px;height:3px;background:#eee;border:0.4px solid #999"></i>
<i style="left:654.5px;top:214px;width:15px;height:0.9px;background:#444"></i>
<i style="left:655.5px;top:216px;width:13px;height:0.5px;background:#aaa"></i>
<i style="left:657.5px;top:218.5px;width:8.5px;height:3px;background:#eee;border:0.4px solid #999"></i>
<i style="left:654.5px;top:245px;width:15px;height:0.9px;background:#444"></i>
<i style="left:655.5px;top:247px;width:13px;height:0.5px;background:#aaa"></i>
<i style="left:657.5px;top:249.5px;width:8.5px;height:3px;background:#eee;border:0.4px solid #999"></i>
<i style="left:654.5px;top:275.5px;width:15px;height:0.9px;background:#444"></i>
<i style="left:655.5px;top:277.5px;width:13px;height:0.5px;background:#aaa"></i>
<i style="left:657.5px;top:280px;width:8.5px;height:3px;background:#eee;border:0.4px solid #999"></i>
<i style="left:654.5px;top:307px;width:15px;height:0.9px;background:#444"></i>
<i style="left:655.5px;top:309px;width:13px;height:0.5px;background:#aaa"></i>
<i style="left:657.5px;top:311.5px;width:8.5px;height:3px;background:#eee;border:0.4px solid #999"></i>
<i style="left:652.6px;top:243.5px;width:19px;height:0.6px;background:#aaa"></i>
<i style="left:652.6px;top:274.4px;width:19px;height:0.6px;background:#aaa"></i>
<i style="left:652.6px;top:306px;width:19px;height:0.6px;background:#aaa"></i>
<i style="left:674px;top:36.2px;width:12.15px;height:0.45px;background:#999"></i>
<i style="left:674px;top:37.65px;width:27px;height:0.45px;background:#d0d0d0"></i>
<i style="left:674px;top:39.1px;width:22.95px;height:0.45px;background:#d0d0d0"></i>
<i style="left:674px;top:40.55px;width:27px;height:0.45px;background:#d0d0d0"></i>
<i style="left:674px;top:61.4px;width:12.15px;height:0.45px;background:#999"></i>
<i style="left:674px;top:62.85px;width:27px;height:0.45px;background:#d0d0d0"></i>
<i style="left:674px;top:64.3px;width:22.95px;height:0.45px;background:#d0d0d0"></i>
<i style="left:674px;top:65.75px;width:27px;height:0.45px;background:#d0d0d0"></i>
<i style="left:674px;top:85.2px;width:12.15px;height:0.45px;background:#999"></i>
<i style="left:674px;top:86.65px;width:27px;height:0.45px;background:#d0d0d0"></i>
<i style="left:674px;top:88.1px;width:22.95px;height:0.45px;background:#d0d0d0"></i>
<i style="left:674px;top:89.55px;width:27px;height:0.45px;background:#d0d0d0"></i>
<i style="left:674px;top:91px;width:22.95px;height:0.45px;background:#d0d0d0"></i>
<i style="left:674px;top:122.3px;width:12.15px;height:0.45px;background:#999"></i>
<i style="left:674px;top:123.75px;width:27px;height:0.45px;background:#d0d0d0"></i>
<i style="left:674px;top:125.2px;width:22.95px;height:0.45px;background:#d0d0d0"></i>
<i style="left:674px;top:126.65px;width:27px;height:0.45px;background:#d0d0d0"></i>
<i style="left:674px;top:158.7px;width:12.15px;height:0.45px;background:#999"></i>
<i style="left:674px;top:160.15px;width:27px;height:0.45px;background:#d0d0d0"></i>
<i style="left:674px;top:161.6px;width:22.95px;height:0.45px;background:#d0d0d0"></i>
<i style="left:674px;top:163.05px;width:27px;height:0.45px;background:#d0d0d0"></i>
<i style="left:674px;top:164.5px;width:22.95px;height:0.45px;background:#d0d0d0"></i>
<i style="left:674px;top:195.9px;width:12.15px;height:0.45px;background:#999"></i>
<i style="left:674px;top:197.35px;width:27px;height:0.45px;background:#d0d0d0"></i>
<i style="left:674px;top:198.8px;width:22.95px;height:0.45px;background:#d0d0d0"></i>
<i style="left:674px;top:200.25px;width:27px;height:0.45px;background:#d0d0d0"></i>
<i style="left:674px;top:226.7px;width:12.15px;height:0.45px;background:#999"></i>
<i style="left:674px;top:228.15px;width:27px;height:0.45px;background:#d0d0d0"></i>
<i style="left:674px;top:229.6px;width:22.95px;height:0.45px;background:#d0d0d0"></i>
<i style="left:674px;top:231.05px;width:27px;height:0.45px;background:#d0d0d0"></i>
<i style="left:674px;top:258.2px;width:12.15px;height:0.45px;background:#999"></i>
<i style="left:674px;top:259.65px;width:27px;height:0.45px;background:#d0d0d0"></i>
<i style="left:674px;top:261.1px;width:22.95px;height:0.45px;background:#d0d0d0"></i>
<i style="left:674px;top:262.55px;width:27px;height:0.45px;background:#d0d0d0"></i>
<i style="left:674px;top:289px;width:12.15px;height:0.45px;background:#999"></i>
<i style="left:674px;top:290.45px;width:27px;height:0.45px;background:#d0d0d0"></i>
<i style="left:674px;top:291.9px;width:22.95px;height:0.45px;background:#d0d0d0"></i>
<i style="left:674px;top:293.35px;width:27px;height:0.45px;background:#d0d0d0"></i>
<i style="left:318.2px;top:203.2px;width:20.4px;height:44.5px;background:#121212;border-radius:2px"></i>
<i style="left:323.2px;top:204.5px;width:10.4px;height:0.8px;background:#555"></i>
<i style="left:346px;top:203.2px;width:20px;height:44.5px;background:#121212;border-radius:2px"></i>
<i style="left:351px;top:204.5px;width:10px;height:0.8px;background:#555"></i>
<i style="left:373.4px;top:203.2px;width:20.4px;height:44.5px;background:#121212;border-radius:2px"></i>
<i style="left:378.4px;top:204.5px;width:10.4px;height:0.8px;background:#555"></i>
<i style="left:401.2px;top:203.2px;width:19.5px;height:44.5px;background:#121212;border-radius:2px"></i>
<i style="left:406.2px;top:204.5px;width:9.5px;height:0.8px;background:#555"></i>
<i style="left:428.5px;top:203.2px;width:20px;height:44.5px;background:#121212;border-radius:2px"></i>
<i style="left:433.5px;top:204.5px;width:10px;height:0.8px;background:#555"></i>
<i style="left:322px;top:225.4px;width:13px;height:0.8px;background:#bbb"></i>
<i style="left:323.5px;top:227.2px;width:10px;height:0.8px;background:#bbb"></i>
<i style="left:323.5px;top:231.5px;width:10px;height:0.5px;background:#777"></i>
<i style="left:321.9px;top:235.2px;width:10.2px;height:3.7px;background:#e65a68;border-radius:2px"></i>
<i style="left:351px;top:208px;width:8px;height:1px;background:#999"></i>
<i style="left:363px;top:206px;width:2px;height:2px;background:#777"></i>
<i style="left:349px;top:215.5px;width:5px;height:1.2px;background:#888"></i>
<i style="left:355px;top:215.5px;width:4px;height:1.2px;background:#888"></i>
<i style="left:360px;top:215.5px;width:4px;height:1.2px;background:#888"></i>
<i style="left:348px;top:220px;width:4px;height:1px;background:#777"></i>
<i style="left:355px;top:220px;width:5px;height:2px;background:#e65a68;border-radius:1px"></i>
<i style="left:348px;top:223.5px;width:4px;height:0.8px;background:#666"></i>
<i style="left:356px;top:223.5px;width:3px;height:1px;background:#2a6a5a"></i>
<i style="left:349px;top:228.5px;width:4px;height:1px;background:#888"></i>
<i style="left:357px;top:226.5px;width:7px;height:1.5px;background:#c04050"></i>
<i style="left:348px;top:233px;width:2px;height:1px;background:#c8b040"></i>
<i style="left:356px;top:232px;width:4px;height:4px;background:#3a6a8a;border-radius:50%"></i>
<i style="left:349px;top:236.5px;width:3px;height:1.5px;background:#666"></i>
<i style="left:356px;top:237px;width:4px;height:1px;background:#666"></i>
<i style="left:379px;top:207.8px;width:6px;height:1.9px;background:#e65a68;border-radius:1px"></i>
<i style="left:375px;top:214.5px;width:5px;height:1.5px;background:#aaa"></i>
<i style="left:377px;top:218px;width:10px;height:1px;background:#c04050"></i>
<i style="left:378px;top:220.5px;width:8px;height:0.8px;background:#c04050"></i>
<i style="left:385px;top:225px;width:2.5px;height:1.5px;background:#e65a68"></i>
<div style="left:375px;top:227.5px;width:4.5px;height:4.5px;border-radius:50%;border:0.7px solid #c04050"></div>
<i style="left:381px;top:229px;width:6px;height:1px;background:#777"></i>
<i style="left:375.5px;top:235px;width:2.5px;height:3px;background:#d8b040"></i>
<i style="left:381px;top:236px;width:6px;height:1px;background:#777"></i>
<div style="left:404px;top:208.2px;width:10px;height:10px;border-radius:50%;background:radial-gradient(#3aa0f0 35%,#1a5aa0 60%,#121212 75%)"></div>
<i style="left:402.5px;top:224.8px;width:2.5px;height:2.2px;background:#e65a68"></i>
<i style="left:406px;top:226px;width:5px;height:1px;background:#888"></i>
<i style="left:405px;top:230.5px;width:6px;height:0.8px;background:#666"></i>
<i style="left:405px;top:234px;width:6px;height:0.8px;background:#666"></i>
<i style="left:415.5px;top:226px;width:1px;height:1px;background:#aaa"></i>
<i style="left:402.1px;top:237.7px;width:14.9px;height:2.8px;background:#e65a68;border-radius:1.5px"></i>
<i style="left:434px;top:208px;width:6px;height:2px;background:#e65a68;border-radius:1px"></i>
<i style="left:430.5px;top:214px;width:3.5px;height:2px;background:#aaa"></i>
<i style="left:431.5px;top:219px;width:0.8px;height:6px;background:#a03040"></i>
<i style="left:434.1px;top:219px;width:0.8px;height:6px;background:#a03040"></i>
<i style="left:436.7px;top:219px;width:0.8px;height:6px;background:#a03040"></i>
<i style="left:439.3px;top:219px;width:0.8px;height:6px;background:#a03040"></i>
<i style="left:441.9px;top:219px;width:0.8px;height:6px;background:#a03040"></i>
<i style="left:444.5px;top:219px;width:0.8px;height:6px;background:#a03040"></i>
<i style="left:430.5px;top:229px;width:13.5px;height:1px;background:#888"></i>
<i style="left:432px;top:233px;width:13px;height:8px;background:#2e2828"></i>
<i style="left:458.7px;top:204.3px;width:16.7px;height:38.1px;background:#fcfaf4"></i>
<i style="left:462px;top:212.8px;width:10px;height:0.8px;background:#999"></i>
<i style="left:461px;top:222px;width:12px;height:7px;background:#9aae5c;border-radius:3.5px"></i>
<div style="left:464.3px;top:222.3px;font-size:6px;line-height:1;color:#f4f4e4;white-space:nowrap;font-weight:bold;letter-spacing:-0.5px">18</div>
<i style="left:460.5px;top:237.3px;width:14.5px;height:2.7px;background:#3a2a1e;border-radius:1px"></i>
<div style="left:457.29999999999995px;top:201px;width:7.4px;height:4.3px;border-radius:50%;border:0.5px solid #555"></div>
<i style="left:438.2px;top:260.6px;width:16.8px;height:36.2px;background:#fbf8f1"></i>
<i style="left:440px;top:262.5px;width:2px;height:0.7px;background:#bbb"></i>
<i style="left:451px;top:262.5px;width:2.5px;height:0.7px;background:#bbb"></i>
<i style="left:440px;top:264.6px;width:5px;height:0.7px;background:#888"></i>
<i style="left:441.5px;top:268.2px;width:10px;height:1px;background:#8a7a70"></i>
<i style="left:442.5px;top:270.3px;width:8px;height:0.5px;background:#c8bcb0"></i>
<div style="left:439.20000000000005px;top:272.6px;width:14px;height:14px;border-radius:50%;background:radial-gradient(#1a2a08 0,#3a6a1a 18%,#90c068 42%,#d8e8c0 62%,rgba(251,248,241,0) 72%)"></div>
<i style="left:439px;top:287.2px;width:7.8px;height:2.2px;background:#f0a860;border-radius:1px"></i>
<i style="left:447.5px;top:287.5px;width:5.5px;height:0.7px;background:#999"></i>
<i style="left:440px;top:290px;width:9px;height:0.5px;background:#bbb"></i>
<i style="left:438.6px;top:293.1px;width:16px;height:2.7px;background:#3e2a1e;border-radius:1.3px"></i>
<i style="left:461.1px;top:260.6px;width:16.9px;height:35.4px;background:#fbf8f1"></i>
<i style="left:462.5px;top:262.5px;width:2px;height:0.7px;background:#bbb"></i>
<i style="left:474px;top:262.5px;width:2.5px;height:0.7px;background:#bbb"></i>
<i style="left:462.5px;top:264.3px;width:6.5px;height:0.7px;background:#777"></i>
<i style="left:474px;top:264.3px;width:2.5px;height:0.7px;background:#bbb"></i>
<i style="left:463px;top:268px;width:13px;height:0.8px;background:#555"></i>
<i style="left:465px;top:270.3px;width:10px;height:0.5px;background:#c8bcb0"></i>
<i style="left:461.5px;top:274.1px;width:16.3px;height:12.3px;background:#fff;border:0.5px solid #b8b0a8"></i>
<i style="left:463px;top:277.8px;width:12px;height:1.8px;background:#e88a60"></i>
<i style="left:465px;top:288px;width:9px;height:1.7px;background:#98b070;border-radius:1px"></i>
<i style="left:461.5px;top:291.9px;width:16.1px;height:3.1px;background:#3e2a1e;border-radius:1.3px"></i>
<i style="left:523.9px;top:203.1px;width:51.1px;height:42.7px;background:#3a52e6"></i>
<div style="left:524.5px;top:203.7px;width:23.9px;height:41.5px;background:radial-gradient(ellipse at 50% 40%,#2366b8,#1a4c9c 70%,#173f8c)"></div>
<div style="left:550.1px;top:203.7px;width:24.3px;height:41.5px;background:linear-gradient(180deg,#1b56a6,#1a4a98)"></div>
<svg style="position:absolute;left:533.5px;top:211.1px" width="6" height="5" viewBox="0 0 6 5"><circle cx="3.2" cy="0.9" r="0.8" fill="#fff"/><path d="M0.3 3.6 L2.6 2.2 L3.2 1.8 L3.8 2.3 L5.7 3.6 L3.4 2.9 L2.2 4.8 L2.5 2.9Z" fill="#fff"/></svg>
<i style="left:529.55px;top:217.6px;width:14px;height:1px;background:#d8e4ff"></i>
<i style="left:531.55px;top:226.1px;width:10px;height:0.5px;background:#7aa0e0"></i>
<i style="left:532.55px;top:229.1px;width:8px;height:0.4px;background:#5a88d0"></i>
<div style="left:525.3px;top:228.3px;width:21.7px;height:8.4px;border-radius:50%;border:1px solid #b8e04a"></div>
<i style="left:527.9px;top:236.7px;width:17.3px;height:2.8px;background:#f4f7ff"></i>
<i style="left:534.55px;top:241.9px;width:4px;height:0.5px;background:#9ab8e8"></i>
<i style="left:552.6px;top:212.2px;width:17.4px;height:19.6px;background:#fbfbfb"></i>
<div style="left:555.1px;top:218.2px;width:4px;height:4px;border-radius:50%;background:#e86a40"></div>
<div style="left:563.5px;top:218.2px;width:4px;height:4px;border-radius:50%;background:#f4c040"></div>
<i style="left:561px;top:215.2px;width:0.6px;height:9px;background:#c8a070"></i>
<i style="left:555.6px;top:228.8px;width:11.4px;height:0.6px;background:#d8c8c0"></i>
<i style="left:553.7px;top:236.7px;width:16.8px;height:2.8px;background:#f4f7ff"></i>
<i style="left:560.1px;top:241.9px;width:4px;height:0.5px;background:#9ab8e8"></i>
<div style="left:523px;top:197px;width:15px;height:5.7px;border-radius:50%;border:0.5px solid #444"></div>
<i style="left:575.7px;top:203px;width:23.8px;height:48.7px;background:#fff"></i>
<i style="left:575.7px;top:203px;width:23.8px;height:27.8px;background:#2cc4bc"></i>
<i style="left:577.8px;top:212.4px;width:19.6px;height:19.1px;background:#fdfdfd;border-radius:2px"></i>
<i style="left:580px;top:214px;width:15px;height:0.6px;background:#ccc"></i>
<i style="left:580.5px;top:217.5px;width:2.5px;height:4px;background:#fff;border:0.4px solid #333"></i>
<i style="left:586.5px;top:218.5px;width:0.7px;height:2.3px;background:#333"></i>
<i style="left:591.5px;top:218px;width:2.5px;height:3.5px;background:#222;border-radius:1px"></i>
<i style="left:580px;top:226px;width:15px;height:0.8px;background:#e0eef0"></i>
<i style="left:583px;top:228.5px;width:9px;height:0.5px;background:#cce"></i>
<div style="left:579px;top:234px;width:8px;height:10px;border-radius:50% 50% 40% 40%;background:radial-gradient(#555,#aaa 50%,#eee 75%,#fff)"></div>
<div style="left:588.5px;top:234px;width:8px;height:10px;border-radius:50% 50% 40% 40%;background:radial-gradient(#555,#aaa 50%,#eee 75%,#fff)"></div>
<i style="left:575.5px;top:250.6px;width:24px;height:1px;background:#2cc4bc"></i>
<i style="left:600px;top:204px;width:24.8px;height:46px;background:#fff"></i>
<i style="left:600px;top:204px;width:24.8px;height:29px;background:#2cc4bc"></i>
<i style="left:602.3px;top:216.7px;width:20.9px;height:26.3px;background:#fdfdfd;border-radius:2.5px"></i>
<div style="left:608.3px;top:218.5px;width:8px;height:8px;border-radius:50%;background:#b8c8dc;border:0.5px solid #9ab"></div>
<i style="left:608px;top:228.5px;width:9px;height:0.5px;background:#cde"></i>
<i style="left:610px;top:230.5px;width:5px;height:1px;background:#9cd4c8"></i>
<i style="left:604px;top:234.8px;width:8px;height:0.5px;background:#ddd"></i>
<i style="left:614px;top:234px;width:7px;height:1.6px;background:#a8c0e0"></i>
<i style="left:614px;top:237px;width:7px;height:1.6px;background:#a8c0e0"></i>
<div style="left:603px;top:240px;width:9px;height:7px;border-radius:50%;background:radial-gradient(#555,#aaa 50%,#fff 75%)"></div>
<i style="left:627.1px;top:203px;width:24.7px;height:33px;background:#1a7a70"></i>
<i style="left:629px;top:216px;width:21px;height:20px;background:#e8eef6;border-radius:2.5px 2.5px 0 0"></i>
<i style="left:629px;top:216px;width:21px;height:7px;background:linear-gradient(180deg,#8a98a8,#c8d4e4);border-radius:2.5px 2.5px 0 0"></i>
<i style="left:631px;top:225.5px;width:17px;height:2px;background:#f8f4d8"></i>
<i style="left:632px;top:230.5px;width:15px;height:2px;background:#a8c0e0;border-radius:1px"></i>
<i style="left:627.1px;top:236px;width:24.7px;height:15px;background:#fafafa"></i>
<i style="left:627.5px;top:236px;width:23.9px;height:0.3px;background:#e4e4e4"></i>
<i style="left:627.5px;top:239.6px;width:23.9px;height:0.3px;background:#e4e4e4"></i>
<i style="left:627.5px;top:243.2px;width:23.9px;height:0.3px;background:#e4e4e4"></i>
<i style="left:627.5px;top:246.8px;width:23.9px;height:0.3px;background:#e4e4e4"></i>
<i style="left:633.3px;top:236px;width:0.3px;height:15px;background:#e4e4e4"></i>
<i style="left:639.5px;top:236px;width:0.3px;height:15px;background:#e4e4e4"></i>
<i style="left:645.7px;top:236px;width:0.3px;height:15px;background:#e4e4e4"></i>
<i style="left:629.5px;top:237.3px;width:1px;height:1px;background:#999"></i>
<i style="left:635.7px;top:237.3px;width:1px;height:1px;background:#999"></i>
<i style="left:641.9px;top:237.3px;width:1px;height:1px;background:#999"></i>
<i style="left:648.1px;top:237.3px;width:1px;height:1px;background:#999"></i>
<i style="left:629.5px;top:240.9px;width:1px;height:1px;background:#999"></i>
<i style="left:635.7px;top:240.9px;width:1px;height:1px;background:#999"></i>
<i style="left:641.9px;top:240.9px;width:1px;height:1px;background:#999"></i>
<i style="left:648.1px;top:240.9px;width:1px;height:1px;background:#999"></i>
<i style="left:629.5px;top:244.5px;width:1px;height:1px;background:#999"></i>
<i style="left:635.7px;top:244.5px;width:1px;height:1px;background:#999"></i>
<i style="left:641.9px;top:244.5px;width:1px;height:1px;background:#999"></i>
<i style="left:648.1px;top:244.5px;width:1px;height:1px;background:#999"></i>
<i style="left:646px;top:248px;width:5px;height:2.5px;background:#ddd"></i>
<i style="left:579px;top:255px;width:21.5px;height:46px;background:#fff"></i>
<i style="left:579px;top:255px;width:21.5px;height:25.8px;background:#2cc0b8"></i>
<i style="left:581px;top:266px;width:17px;height:24.2px;background:#fafcff;border-radius:2px"></i>
<i style="left:582.5px;top:269.5px;width:14px;height:2px;background:#9ab4e6;border-radius:0.5px"></i>
<i style="left:582.5px;top:273.3px;width:14px;height:2px;background:#9ab4e6;border-radius:0.5px"></i>
<i style="left:582.5px;top:277px;width:14px;height:2px;background:#9ab4e6;border-radius:0.5px"></i>
<i style="left:583px;top:284px;width:12px;height:6px;background:radial-gradient(#666,#bbb 60%,#fafcff 72%)"></i>
<i style="left:581px;top:298px;width:1.5px;height:1.5px;background:#ccc"></i>
<i style="left:586px;top:298px;width:1.5px;height:1.5px;background:#ccc"></i>
<i style="left:591px;top:298px;width:1.5px;height:1.5px;background:#ccc"></i>
<i style="left:596px;top:298px;width:1.5px;height:1.5px;background:#ccc"></i>
<i style="left:603px;top:253.5px;width:49.5px;height:49.3px;background:#fff;border:0.4px solid #e0e0e0"></i>
<i style="left:607.5px;top:256px;width:2.5px;height:0.6px;background:#999"></i>
<i style="left:623px;top:256px;width:3px;height:0.6px;background:#999"></i>
<i style="left:612px;top:258px;width:5px;height:0.6px;background:#aaa"></i>
<i style="left:622px;top:260px;width:3px;height:1px;background:#ccc"></i>
<i style="left:608px;top:263px;width:7px;height:1.2px;background:#666"></i>
<i style="left:608px;top:265.6px;width:18px;height:0.6px;background:#ddd"></i>
<i style="left:608px;top:269px;width:4px;height:0.7px;background:#a8b8d8"></i>
<i style="left:608px;top:272px;width:6px;height:0.7px;background:#a8b8d8"></i>
<i style="left:608px;top:275px;width:8px;height:0.7px;background:#a8b8d8"></i>
<i style="left:608px;top:278.5px;width:4px;height:0.7px;background:#a8b8d8"></i>
<i style="left:608px;top:282px;width:6px;height:0.7px;background:#a8b8d8"></i>
<i style="left:608px;top:285px;width:8px;height:0.7px;background:#a8b8d8"></i>
<div style="left:605.5px;top:275.5px;width:8px;height:6px;border-radius:50%;border:0.4px solid #555"></div>
<i style="left:630px;top:254.5px;width:21.4px;height:47px;background:#fbfbfb"></i>
<i style="left:631px;top:257px;width:2px;height:0.6px;background:#aaa"></i>
<i style="left:647px;top:257px;width:3px;height:1px;background:#888"></i>
<i style="left:637px;top:259.3px;width:7px;height:0.6px;background:#999"></i>
<i style="left:631px;top:261.5px;width:4px;height:0.5px;background:#bbb"></i>
<i style="left:637px;top:261.5px;width:4px;height:0.5px;background:#888"></i>
<i style="left:645px;top:261.5px;width:4px;height:0.5px;background:#bbb"></i>
<i style="left:631.2px;top:266px;width:1.3px;height:1.5px;background:#ddd"></i>
<i style="left:634px;top:266.4px;width:10px;height:0.6px;background:#aaa"></i>
<i style="left:649px;top:266.4px;width:1.5px;height:1px;background:#c8d0e8"></i>
<i style="left:631.2px;top:269.3px;width:1.3px;height:1.5px;background:#ddd"></i>
<i style="left:634px;top:269.7px;width:8px;height:0.6px;background:#aaa"></i>
<i style="left:649px;top:269.7px;width:1.5px;height:1px;background:#c8d0e8"></i>
<i style="left:631.2px;top:272.6px;width:1.3px;height:1.5px;background:#ddd"></i>
<i style="left:634px;top:273px;width:6px;height:0.6px;background:#aaa"></i>
<i style="left:649px;top:273px;width:1.5px;height:1px;background:#c8d0e8"></i>
<i style="left:631.2px;top:275.9px;width:1.3px;height:1.5px;background:#ddd"></i>
<i style="left:634px;top:276.3px;width:10px;height:0.6px;background:#aaa"></i>
<i style="left:649px;top:276.3px;width:1.5px;height:1px;background:#c8d0e8"></i>
<i style="left:631.2px;top:279.2px;width:1.3px;height:1.5px;background:#ddd"></i>
<i style="left:634px;top:279.6px;width:8px;height:0.6px;background:#aaa"></i>
<i style="left:649px;top:279.6px;width:1.5px;height:1px;background:#c8d0e8"></i>
<i style="left:631.2px;top:282.5px;width:1.3px;height:1.5px;background:#ddd"></i>
<i style="left:634px;top:282.9px;width:6px;height:0.6px;background:#aaa"></i>
<i style="left:649px;top:282.9px;width:1.5px;height:1px;background:#c8d0e8"></i>
<i style="left:631.2px;top:285.8px;width:1.3px;height:1.5px;background:#ddd"></i>
<i style="left:634px;top:286.2px;width:10px;height:0.6px;background:#aaa"></i>
<i style="left:649px;top:286.2px;width:1.5px;height:1px;background:#c8d0e8"></i>
<i style="left:631.2px;top:289.1px;width:1.3px;height:1.5px;background:#ddd"></i>
<i style="left:634px;top:289.5px;width:8px;height:0.6px;background:#aaa"></i>
<i style="left:649px;top:289.5px;width:1.5px;height:1px;background:#c8d0e8"></i>
<i style="left:631.2px;top:292.4px;width:1.3px;height:1.5px;background:#ddd"></i>
<i style="left:634px;top:292.8px;width:6px;height:0.6px;background:#aaa"></i>
<i style="left:649px;top:292.8px;width:1.5px;height:1px;background:#c8d0e8"></i>
<i style="left:631.2px;top:295.5px;width:2px;height:1.8px;background:#111"></i>
<i style="left:631.2px;top:298.5px;width:2px;height:1.8px;background:#111"></i>
<i style="left:634.5px;top:296px;width:5.5px;height:0.6px;background:#999"></i>
<i style="left:634.5px;top:299px;width:8.5px;height:0.6px;background:#999"></i>
<div style="left:633.5px;top:276.5px;width:7px;height:5.5px;border-radius:50%;border:0.4px solid #555"></div>
<svg style="position:absolute;left:602px;top:243px" width="24" height="10" viewBox="0 0 24 10"><path d="M2 9 C 5 2, 17 1, 21 9" stroke="#333" stroke-width="0.7" fill="none"/></svg>
<i style="left:531.5px;top:248.5px;width:12.5px;height:0.8px;background:#444"></i>
<i style="left:531.5px;top:250.2px;width:10.5px;height:0.7px;background:#444"></i>
<i style="left:531.5px;top:252px;width:7.5px;height:0.5px;background:#888"></i>
<i style="left:531.5px;top:253.6px;width:6.5px;height:0.5px;background:#999"></i>
<i style="left:531.5px;top:256.2px;width:10.5px;height:0.8px;background:#555"></i>
<i style="left:531.5px;top:258px;width:6.5px;height:0.5px;background:#999"></i>
<i style="left:564.3px;top:261.9px;width:8.9px;height:2.1px;background:#ddd"></i>
<i style="left:565.5px;top:262.6px;width:6.5px;height:0.7px;background:#888"></i>
<i style="left:568.2px;top:264px;width:1px;height:11.5px;background:#111"></i>
<i style="left:565.5px;top:268.5px;width:6.5px;height:1px;background:#fff;border:0.3px solid #aaa"></i>
<i style="left:565.5px;top:272px;width:6.5px;height:1px;background:#fff;border:0.3px solid #aaa"></i>
<i style="left:565.5px;top:276.5px;width:7.5px;height:0.7px;background:#bbb"></i>
<i style="left:563.2px;top:280.2px;width:4.7px;height:3.5px;background:#36b6ae;border-radius:1.5px"></i>
<i style="left:568px;top:280.5px;width:7px;height:3px;background:#c8ddf2"></i>
<i style="left:601.3px;top:302.4px;width:50.4px;height:42.4px;background:#4450e4"></i>
<i style="left:602.8px;top:303.9px;width:22.4px;height:39.4px;background:#fff"></i>
<i style="left:628px;top:303.9px;width:22.2px;height:39.4px;background:#fff"></i>
<i style="left:603.5px;top:340.3px;width:21px;height:2.5px;background:#1c5a9c"></i>
<i style="left:628.5px;top:339.6px;width:21.2px;height:3.4px;background:#2a6ae0"></i>
<i style="left:628px;top:303.9px;width:22.2px;height:4.1px;background:#e8f0fc"></i>
<i style="left:628px;top:306px;width:2px;height:4px;background:#2a6ae0"></i>
<i style="left:648.2px;top:306px;width:2px;height:4px;background:#2a6ae0"></i>
<i style="left:605px;top:306px;width:18px;height:0.6px;background:#d4d4dc"></i>
<i style="left:605px;top:309px;width:18px;height:0.6px;background:#d4d4dc"></i>
<i style="left:605px;top:312px;width:18px;height:0.6px;background:#d4d4dc"></i>
<i style="left:605px;top:315px;width:18px;height:0.6px;background:#d4d4dc"></i>
<i style="left:605px;top:318px;width:18px;height:0.6px;background:#d4d4dc"></i>
<i style="left:605px;top:321px;width:18px;height:0.6px;background:#d4d4dc"></i>
<i style="left:605px;top:324px;width:18px;height:0.6px;background:#d4d4dc"></i>
<i style="left:605px;top:327px;width:18px;height:0.6px;background:#d4d4dc"></i>
<i style="left:605px;top:330px;width:18px;height:0.6px;background:#d4d4dc"></i>
<i style="left:605px;top:333px;width:18px;height:0.6px;background:#d4d4dc"></i>
<i style="left:607px;top:318px;width:4px;height:2px;background:#ddd"></i>
<i style="left:613px;top:318px;width:6px;height:2px;background:#ddd"></i>
<i style="left:604.5px;top:332.5px;width:1.5px;height:1.5px;background:#2a6ae0"></i>
<i style="left:631px;top:312px;width:16px;height:0.6px;background:#d8d8e0"></i>
<i style="left:631px;top:314.67px;width:16px;height:0.6px;background:#d8d8e0"></i>
<i style="left:631px;top:317.33px;width:16px;height:0.6px;background:#d8d8e0"></i>
<i style="left:631px;top:320px;width:16px;height:0.6px;background:#d8d8e0"></i>
<i style="left:631px;top:322.67px;width:16px;height:0.6px;background:#d8d8e0"></i>
<i style="left:631px;top:325.33px;width:16px;height:0.6px;background:#d8d8e0"></i>
<i style="left:631px;top:328px;width:16px;height:0.6px;background:#d8d8e0"></i>
<i style="left:631px;top:330.67px;width:16px;height:0.6px;background:#d8d8e0"></i>
<i style="left:631px;top:333.33px;width:16px;height:0.6px;background:#d8d8e0"></i>
<div style="left:636px;top:310.5px;width:2.4px;height:2px;border-radius:50%;background:#e8c040"></div>
<div style="left:630.5px;top:333px;width:2.4px;height:2.4px;border-radius:50%;border:0.4px solid #888"></div>
<i style="left:605.8px;top:346.6px;width:16.6px;height:4.2px;background:#d4d4d4"></i>
<i style="left:608px;top:352.5px;width:5px;height:0.7px;background:#666"></i>
<i style="left:608px;top:354.2px;width:12px;height:0.6px;background:#999"></i>
<i style="left:609px;top:356px;width:2px;height:2px;background:#888"></i>
<i style="left:633.9px;top:352.4px;width:7.32px;height:1.5px;background:#6a6a6a"></i>
<i style="left:642.01px;top:352.4px;width:2.39px;height:1.5px;background:#6a6a6a"></i>
<i style="left:645.2px;top:352.4px;width:9.98px;height:1.5px;background:#6a6a6a"></i>
<i style="left:655.98px;top:352.4px;width:10.11px;height:1.5px;background:#6a6a6a"></i>
<i style="left:666.88px;top:352.4px;width:1.6px;height:1.5px;background:#6a6a6a"></i>
<i style="left:633.9px;top:355.9px;width:7.32px;height:1.5px;background:#6a6a6a"></i>
<i style="left:642.01px;top:355.9px;width:2.39px;height:1.5px;background:#6a6a6a"></i>
<i style="left:645.2px;top:355.9px;width:3.99px;height:1.5px;background:#6a6a6a"></i>
<i style="left:649.99px;top:355.9px;width:9.98px;height:1.5px;background:#6a6a6a"></i>
<i style="left:660.77px;top:355.9px;width:10.11px;height:1.5px;background:#6a6a6a"></i>
<i style="left:671.67px;top:355.9px;width:1.6px;height:1.5px;background:#6a6a6a"></i>
<i style="left:633.9px;top:359px;width:7.32px;height:1.5px;background:#6a6a6a"></i>
<i style="left:642.01px;top:359px;width:2.39px;height:1.5px;background:#6a6a6a"></i>
<i style="left:645.2px;top:359px;width:9.31px;height:1.5px;background:#6a6a6a"></i>
<i style="left:655.31px;top:359px;width:9.31px;height:1.5px;background:#6a6a6a"></i>
<i style="left:665.42px;top:359px;width:12.63px;height:1.5px;background:#6a6a6a"></i>
<i style="left:678.85px;top:359px;width:1.6px;height:1.5px;background:#6a6a6a"></i>
<i style="left:679.3px;top:307.7px;width:17.3px;height:37.8px;background:#f3f5fd;border:0.4px solid #e4e8f4"></i>
<div style="left:680.9px;top:314.9px;width:14px;height:14px;border-radius:50%;background:radial-gradient(#6a86ea 0,#5a78e4 55%,#9cb0ee 72%,rgba(240,242,252,0) 100%)"></div>
<i style="left:681px;top:310px;width:5px;height:0.8px;background:#aab"></i>
<i style="left:684px;top:312.5px;width:8px;height:0.7px;background:#99a"></i>
<i style="left:681.5px;top:330px;width:2.5px;height:2px;background:#8a9ab0"></i>
<i style="left:685px;top:330.5px;width:4px;height:0.7px;background:#bbb"></i>
<i style="left:681px;top:334px;width:3px;height:1.5px;background:#6a7ab8"></i>
<i style="left:688px;top:334px;width:3px;height:1.5px;background:#222"></i>
<i style="left:680.2px;top:337.6px;width:15.5px;height:3.7px;background:#1a2026;border-radius:0.5px"></i>
<i style="left:680.2px;top:342px;width:15.5px;height:3px;background:#4a68d8;border-radius:1.5px"></i>
<i style="left:701.3px;top:308px;width:17.4px;height:38px;background:#f9faff;border:0.4px solid #eceff8"></i>
<i style="left:703px;top:310.5px;width:8px;height:0.7px;background:#aab"></i>
<div style="left:702.5px;top:312.5px;width:2.6px;height:2.6px;border-radius:50%;background:#8a90a8"></div>
<i style="left:706px;top:313px;width:7px;height:0.8px;background:#ccd"></i>
<i style="left:715px;top:313px;width:3px;height:1.5px;background:#6a78c8"></i>
<i style="left:703px;top:317.1px;width:15px;height:3.9px;background:#1c1c1c;border-radius:2px"></i>
<div style="left:701.8px;top:316.6px;width:4.6px;height:4.6px;border-radius:50%;background:#f0c030"></div>
<i style="left:702.5px;top:322.5px;width:2px;height:1.5px;background:#333"></i>
<i style="left:715px;top:322.5px;width:3px;height:1.5px;background:#8890b0"></i>
<i style="left:702.5px;top:325.5px;width:2px;height:1.5px;background:#3a4a70"></i>
<i style="left:702.5px;top:329px;width:15px;height:0.6px;background:#d4d8e6"></i>
<i style="left:702.5px;top:330.83px;width:15px;height:0.6px;background:#d4d8e6"></i>
<i style="left:702.5px;top:332.67px;width:15px;height:0.6px;background:#d4d8e6"></i>
<i style="left:702.5px;top:334.5px;width:15px;height:0.6px;background:#d4d8e6"></i>
<i style="left:702.5px;top:336.33px;width:15px;height:0.6px;background:#d4d8e6"></i>
<i style="left:702.5px;top:338.17px;width:15px;height:0.6px;background:#d4d8e6"></i>
<i style="left:702.2px;top:343.2px;width:15.6px;height:2.8px;background:#4a68d8;border-radius:1.5px"></i>
<i style="left:722.2px;top:308px;width:17.8px;height:38.6px;background:#4a6cd8"></i>
<div style="left:729.4000000000001px;top:312px;width:3px;height:3px;border-radius:50%;background:#c8d4f8"></div>
<i style="left:725px;top:316.5px;width:12px;height:0.7px;background:#c0ccf4"></i>
<i style="left:726px;top:318.5px;width:10px;height:0.5px;background:#a8b8ee"></i>
<i style="left:726px;top:322px;width:2px;height:1.6px;background:#c0ccf4"></i>
<i style="left:729px;top:322.5px;width:6px;height:0.6px;background:#a8b8ee"></i>
<i style="left:726px;top:324.6px;width:2px;height:1.6px;background:#c0ccf4"></i>
<i style="left:729px;top:325.1px;width:6px;height:0.6px;background:#a8b8ee"></i>
<i style="left:726px;top:327.2px;width:2px;height:1.6px;background:#c0ccf4"></i>
<i style="left:729px;top:327.7px;width:6px;height:0.6px;background:#a8b8ee"></i>
<i style="left:723.5px;top:330.5px;width:15px;height:0.5px;background:#8aa0e6"></i>
<i style="left:723.5px;top:333px;width:6.5px;height:4px;background:#5a7ade"></i>
<i style="left:732px;top:333px;width:6.5px;height:4px;background:#5a7ade"></i>
<i style="left:723.5px;top:340px;width:15px;height:2px;background:#f4f6ff"></i>
<i style="left:743.1px;top:308px;width:17.9px;height:38.6px;background:#fafbff"></i>
<i style="left:743.1px;top:308px;width:17.9px;height:8.7px;background:#2c3c84"></i>
<i style="left:760.2px;top:308px;width:0.8px;height:38.6px;background:#4a6cd8"></i>
<div style="left:750.5999999999999px;top:311px;width:2.5px;height:2.5px;border-radius:50%;background:#8898c8"></div>
<i style="left:744.5px;top:318.5px;width:6.5px;height:0.7px;background:#99a"></i>
<i style="left:744.5px;top:321px;width:12.5px;height:0.7px;background:#666"></i>
<i style="left:744.5px;top:323px;width:8.5px;height:0.6px;background:#aaa"></i>
<i style="left:744.5px;top:327px;width:9.5px;height:0.6px;background:#ccc"></i>
<i style="left:744.5px;top:330.5px;width:2px;height:1.5px;background:#555"></i>
<i style="left:747.5px;top:331px;width:7.5px;height:0.6px;background:#bbb"></i>
<i style="left:744.5px;top:333.1px;width:2px;height:1.5px;background:#555"></i>
<i style="left:747.5px;top:333.6px;width:7.5px;height:0.6px;background:#bbb"></i>
<i style="left:744.5px;top:335.7px;width:2px;height:1.5px;background:#aaa"></i>
<i style="left:747.5px;top:336.2px;width:7.5px;height:0.6px;background:#bbb"></i>
<i style="left:744.5px;top:338.3px;width:2px;height:1.5px;background:#aaa"></i>
<i style="left:747.5px;top:338.8px;width:7.5px;height:0.6px;background:#bbb"></i>
<i style="left:744.5px;top:340.9px;width:2px;height:1.5px;background:#aaa"></i>
<i style="left:747.5px;top:341.4px;width:7.5px;height:0.6px;background:#bbb"></i>
<i style="left:763.6px;top:308px;width:17.4px;height:36.7px;background:#fafbff;border:0.4px solid #eef0f8"></i>
<i style="left:765px;top:310.5px;width:2px;height:0.7px;background:#aaa"></i>
<i style="left:770px;top:310.5px;width:7px;height:0.7px;background:#99a"></i>
<i style="left:765px;top:313.5px;width:9px;height:0.8px;background:#99a"></i>
<i style="left:778px;top:313.5px;width:2px;height:1.5px;background:#445"></i>
<i style="left:765px;top:317px;width:14px;height:0.6px;background:#dde0ea"></i>
<i style="left:765px;top:320.29px;width:14px;height:0.6px;background:#dde0ea"></i>
<i style="left:765px;top:323.57px;width:14px;height:0.6px;background:#dde0ea"></i>
<i style="left:765px;top:326.86px;width:14px;height:0.6px;background:#dde0ea"></i>
<i style="left:765px;top:330.14px;width:14px;height:0.6px;background:#dde0ea"></i>
<i style="left:765px;top:333.43px;width:14px;height:0.6px;background:#dde0ea"></i>
<i style="left:765px;top:336.71px;width:14px;height:0.6px;background:#dde0ea"></i>
<i style="left:765.5px;top:332.5px;width:2px;height:2px;background:#c8d0f0"></i>
<i style="left:764.5px;top:342.8px;width:15.7px;height:1.9px;background:#4a68d8"></i>
<i style="left:784.9px;top:308px;width:16.6px;height:73.8px;background:#fafbfd;border:0.4px solid #e8eaf2"></i>
<i style="left:786.5px;top:311px;width:13.5px;height:0.6px;background:#d8dbe6"></i>
<i style="left:786.5px;top:313.78px;width:13.5px;height:0.6px;background:#d8dbe6"></i>
<i style="left:786.5px;top:316.56px;width:13.5px;height:0.6px;background:#d8dbe6"></i>
<i style="left:786.5px;top:319.33px;width:13.5px;height:0.6px;background:#d8dbe6"></i>
<i style="left:786.5px;top:322.11px;width:13.5px;height:0.6px;background:#d8dbe6"></i>
<i style="left:786.5px;top:324.89px;width:13.5px;height:0.6px;background:#d8dbe6"></i>
<i style="left:786.5px;top:327.67px;width:13.5px;height:0.6px;background:#d8dbe6"></i>
<i style="left:786.5px;top:330.44px;width:13.5px;height:0.6px;background:#d8dbe6"></i>
<i style="left:786.5px;top:333.22px;width:13.5px;height:0.6px;background:#d8dbe6"></i>
<i style="left:786.5px;top:324px;width:13.5px;height:6px;background:#eef0f6"></i>
<i style="left:786px;top:338.4px;width:14.5px;height:2.4px;background:#4a68d8"></i>
<i style="left:786.5px;top:344px;width:13.5px;height:0.6px;background:#d8dbe6"></i>
<i style="left:786.5px;top:346.77px;width:13.5px;height:0.6px;background:#d8dbe6"></i>
<i style="left:786.5px;top:349.54px;width:13.5px;height:0.6px;background:#d8dbe6"></i>
<i style="left:786.5px;top:352.31px;width:13.5px;height:0.6px;background:#d8dbe6"></i>
<i style="left:786.5px;top:355.08px;width:13.5px;height:0.6px;background:#d8dbe6"></i>
<i style="left:786.5px;top:357.85px;width:13.5px;height:0.6px;background:#d8dbe6"></i>
<i style="left:786.5px;top:360.62px;width:13.5px;height:0.6px;background:#d8dbe6"></i>
<i style="left:786.5px;top:363.38px;width:13.5px;height:0.6px;background:#d8dbe6"></i>
<i style="left:786.5px;top:366.15px;width:13.5px;height:0.6px;background:#d8dbe6"></i>
<i style="left:786.5px;top:368.92px;width:13.5px;height:0.6px;background:#d8dbe6"></i>
<i style="left:786.5px;top:371.69px;width:13.5px;height:0.6px;background:#d8dbe6"></i>
<i style="left:786.5px;top:374.46px;width:13.5px;height:0.6px;background:#d8dbe6"></i>
<i style="left:786.5px;top:377.23px;width:13.5px;height:0.6px;background:#d8dbe6"></i>
<i style="left:786.5px;top:368px;width:13.5px;height:12px;background:#eef0f4"></i>
<i style="left:716.3px;top:83px;width:1.5px;height:0.5px;background:#bbb"></i>
<i style="left:732.2px;top:83px;width:2px;height:0.5px;background:#999"></i>
<i style="left:716.3px;top:84.8px;width:1.5px;height:0.5px;background:#bbb"></i>
<i style="left:723.25px;top:85px;width:4px;height:0.5px;background:#ddd"></i>
<i style="left:732.7px;top:84.8px;width:1.5px;height:0.5px;background:#777"></i>
<i style="left:716.5px;top:123px;width:1.6px;height:0.5px;background:#ddd"></i>
<i style="left:721.8px;top:123px;width:1.6px;height:0.5px;background:#ddd"></i>
<i style="left:727.1px;top:123px;width:1.6px;height:0.5px;background:#ddd"></i>
<i style="left:732.4px;top:123px;width:1.6px;height:0.5px;background:#ddd"></i>
<i style="left:721.3px;top:122.8px;width:2px;height:0.6px;background:#666"></i>
<i style="left:759px;top:83px;width:1.5px;height:0.5px;background:#bbb"></i>
<i style="left:774.9px;top:83px;width:2px;height:0.5px;background:#999"></i>
<i style="left:759px;top:84.8px;width:1.5px;height:0.5px;background:#bbb"></i>
<i style="left:765.95px;top:85px;width:4px;height:0.5px;background:#ddd"></i>
<i style="left:775.4px;top:84.8px;width:1.5px;height:0.5px;background:#777"></i>
<i style="left:759.2px;top:123px;width:1.6px;height:0.5px;background:#ddd"></i>
<i style="left:764.5px;top:123px;width:1.6px;height:0.5px;background:#ddd"></i>
<i style="left:769.8px;top:123px;width:1.6px;height:0.5px;background:#ddd"></i>
<i style="left:775.1px;top:123px;width:1.6px;height:0.5px;background:#ddd"></i>
<i style="left:764px;top:122.8px;width:2px;height:0.6px;background:#666"></i>
<i style="left:780.5px;top:83px;width:1.5px;height:0.5px;background:#bbb"></i>
<i style="left:796.7px;top:83px;width:2px;height:0.5px;background:#999"></i>
<i style="left:780.5px;top:84.8px;width:1.5px;height:0.5px;background:#bbb"></i>
<i style="left:787.6px;top:85px;width:4px;height:0.5px;background:#ddd"></i>
<i style="left:797.2px;top:84.8px;width:1.5px;height:0.5px;background:#777"></i>
<i style="left:780.7px;top:123px;width:1.6px;height:0.5px;background:#ddd"></i>
<i style="left:786.1px;top:123px;width:1.6px;height:0.5px;background:#ddd"></i>
<i style="left:791.5px;top:123px;width:1.6px;height:0.5px;background:#ddd"></i>
<i style="left:796.9px;top:123px;width:1.6px;height:0.5px;background:#ddd"></i>
<i style="left:785.5px;top:122.8px;width:2px;height:0.6px;background:#666"></i>
<i style="left:802.5px;top:83px;width:1.5px;height:0.5px;background:#bbb"></i>
<i style="left:816.9px;top:83px;width:2px;height:0.5px;background:#999"></i>
<i style="left:802.5px;top:84.8px;width:1.5px;height:0.5px;background:#bbb"></i>
<i style="left:808.7px;top:85px;width:4px;height:0.5px;background:#ddd"></i>
<i style="left:817.4px;top:84.8px;width:1.5px;height:0.5px;background:#777"></i>
<i style="left:802.7px;top:123px;width:1.6px;height:0.5px;background:#ddd"></i>
<i style="left:807.5px;top:123px;width:1.6px;height:0.5px;background:#ddd"></i>
<i style="left:812.3px;top:123px;width:1.6px;height:0.5px;background:#ddd"></i>
<i style="left:817.1px;top:123px;width:1.6px;height:0.5px;background:#ddd"></i>
<i style="left:807.5px;top:122.8px;width:2px;height:0.6px;background:#666"></i>
<i style="left:717px;top:89px;width:1.3px;height:1px;background:#9ad8d0"></i>
<i style="left:719.5px;top:89.2px;width:5.5px;height:0.5px;background:#b8dcd8"></i>
<i style="left:717px;top:92px;width:1.3px;height:1px;background:#9ad8d0"></i>
<i style="left:719.5px;top:92.2px;width:8.5px;height:0.5px;background:#b8dcd8"></i>
<i style="left:717px;top:95px;width:1.3px;height:1px;background:#9ad8d0"></i>
<i style="left:719.5px;top:95.2px;width:5.5px;height:0.5px;background:#b8dcd8"></i>
<i style="left:716.8px;top:97.3px;width:17.2px;height:2.4px;background:#2cc8b8"></i>
<i style="left:718px;top:98.2px;width:5px;height:0.6px;background:#e8f8f4"></i>
<i style="left:717px;top:101.5px;width:1px;height:0.7px;background:#ccc"></i>
<i style="left:719.5px;top:101.6px;width:3px;height:0.5px;background:#ccc"></i>
<i style="left:717px;top:104px;width:1px;height:0.7px;background:#ccc"></i>
<i style="left:719.5px;top:104.1px;width:3px;height:0.5px;background:#ccc"></i>
<i style="left:717px;top:106px;width:1px;height:0.7px;background:#ccc"></i>
<i style="left:719.5px;top:106.1px;width:3px;height:0.5px;background:#ccc"></i>
<i style="left:717px;top:108.8px;width:1px;height:0.7px;background:#ccc"></i>
<i style="left:719.5px;top:108.9px;width:3px;height:0.5px;background:#ccc"></i>
<i style="left:717px;top:111.8px;width:1px;height:0.7px;background:#ccc"></i>
<i style="left:719.5px;top:111.9px;width:3px;height:0.5px;background:#ccc"></i>
<i style="left:717px;top:114.8px;width:1px;height:0.7px;background:#ccc"></i>
<i style="left:719.5px;top:114.9px;width:3px;height:0.5px;background:#ccc"></i>
<i style="left:717px;top:117.5px;width:1px;height:0.7px;background:#ccc"></i>
<i style="left:719.5px;top:117.6px;width:3px;height:0.5px;background:#ccc"></i>
<i style="left:737.1px;top:82.2px;width:19.6px;height:38.5px;background:#c8c8c8"></i>
<i style="left:738px;top:83px;width:1.5px;height:1px;background:#555"></i>
<i style="left:754.5px;top:83px;width:1.5px;height:1px;background:#555"></i>
<i style="left:741px;top:89px;width:12px;height:0.7px;background:#e4e4e4"></i>
<i style="left:743px;top:91.8px;width:8px;height:0.6px;background:#e4e4e4"></i>
<i style="left:742px;top:95px;width:10px;height:0.5px;background:#d8d8d8"></i>
<i style="left:739px;top:100.5px;width:16px;height:1.8px;background:#e8e8e8;border-radius:0.5px"></i>
<i style="left:739px;top:103.6px;width:16px;height:1.8px;background:#e8e8e8;border-radius:0.5px"></i>
<i style="left:739px;top:106.8px;width:16px;height:1.8px;background:#e8e8e8;border-radius:0.5px"></i>
<i style="left:739px;top:110px;width:16px;height:1.8px;background:#e8e8e8;border-radius:0.5px"></i>
<i style="left:739px;top:114.5px;width:16px;height:3px;background:#3cc8b8;border-radius:1.5px"></i>
<i style="left:758.5px;top:88.1px;width:18.9px;height:8.9px;background:#3ccfc0"></i>
<i style="left:759.5px;top:93.6px;width:17px;height:2.2px;background:#e0f8f4;border-radius:0.5px"></i>
<i style="left:760px;top:89.5px;width:9px;height:0.7px;background:#b8f0e8"></i>
<i style="left:775px;top:89px;width:1.5px;height:1.5px;background:#fff"></i>
<i style="left:758.8px;top:99px;width:8.7px;height:7px;background:#fbead0;border-radius:0.5px"></i>
<i style="left:761.95px;top:101px;width:2.4px;height:2px;background:#b8b0a8"></i>
<i style="left:768.5px;top:99px;width:8.5px;height:7px;background:#dcefe8;border-radius:0.5px"></i>
<i style="left:771.55px;top:101px;width:2.4px;height:2px;background:#b8b0a8"></i>
<i style="left:758.8px;top:107px;width:8.7px;height:7.5px;background:#e0e8f8;border-radius:0.5px"></i>
<i style="left:761.95px;top:109.25px;width:2.4px;height:2px;background:#b8b0a8"></i>
<i style="left:768.5px;top:107px;width:8.5px;height:7.5px;background:#ece0f4;border-radius:0.5px"></i>
<i style="left:771.55px;top:109.25px;width:2.4px;height:2px;background:#b8b0a8"></i>
<i style="left:758.8px;top:115.5px;width:8.7px;height:5.5px;background:#dcefe8;border-radius:0.5px"></i>
<i style="left:761.95px;top:116.75px;width:2.4px;height:2px;background:#b8b0a8"></i>
<i style="left:768.5px;top:115.5px;width:8.5px;height:5.5px;background:#f8e0e0;border-radius:0.5px"></i>
<i style="left:771.55px;top:116.75px;width:2.4px;height:2px;background:#b8b0a8"></i>
<div style="left:781.5px;top:88.5px;width:3px;height:3px;border-radius:50%;background:#8ad4d0"></div>
<i style="left:785.5px;top:89.5px;width:3px;height:0.5px;background:#999"></i>
<i style="left:789px;top:88.8px;width:7px;height:2px;background:#f4f4f4;border-radius:1px"></i>
<i style="left:797px;top:89px;width:1.5px;height:1.5px;background:#888"></i>
<i style="left:781.5px;top:93px;width:1px;height:1px;background:#e88"></i>
<i style="left:783.5px;top:93.2px;width:3px;height:0.4px;background:#ccc"></i>
<i style="left:781.5px;top:96.5px;width:1px;height:1px;background:#8ac"></i>
<i style="left:783.5px;top:96.7px;width:3px;height:0.4px;background:#ccc"></i>
<i style="left:781.5px;top:100px;width:1px;height:1px;background:#e8a"></i>
<i style="left:783.5px;top:100.2px;width:3px;height:0.4px;background:#ccc"></i>
<i style="left:781.5px;top:103.5px;width:1px;height:1px;background:#8ad"></i>
<i style="left:783.5px;top:103.7px;width:3px;height:0.4px;background:#ccc"></i>
<i style="left:781.5px;top:107px;width:1px;height:1px;background:#ccc"></i>
<i style="left:783.5px;top:107.2px;width:3px;height:0.4px;background:#ccc"></i>
<i style="left:781.5px;top:110.5px;width:1px;height:1px;background:#e8c"></i>
<i style="left:783.5px;top:110.7px;width:3px;height:0.4px;background:#ccc"></i>
<i style="left:781.5px;top:114px;width:1px;height:1px;background:#8cd"></i>
<i style="left:783.5px;top:114.2px;width:3px;height:0.4px;background:#ccc"></i>
<i style="left:781.5px;top:117.5px;width:1px;height:1px;background:#aac"></i>
<i style="left:783.5px;top:117.7px;width:3px;height:0.4px;background:#ccc"></i>
<div style="left:803.5px;top:91.5px;width:3.6px;height:3.6px;border-radius:50%;border:0.35px solid #b8b8b8"></div>
<i style="left:804.5px;top:95.7px;width:2px;height:0.4px;background:#ccc"></i>
<div style="left:809.0px;top:91.5px;width:3.6px;height:3.6px;border-radius:50%;border:0.35px solid #b8b8b8"></div>
<i style="left:810px;top:95.7px;width:2px;height:0.4px;background:#ccc"></i>
<div style="left:814.5px;top:91.5px;width:3.6px;height:3.6px;border-radius:50%;border:0.35px solid #b8b8b8"></div>
<i style="left:815.5px;top:95.7px;width:2px;height:0.4px;background:#ccc"></i>
<div style="left:803.5px;top:99.0px;width:3.6px;height:3.6px;border-radius:50%;border:0.35px solid #b8b8b8"></div>
<i style="left:804.5px;top:103.2px;width:2px;height:0.4px;background:#ccc"></i>
<div style="left:809.0px;top:99.0px;width:3.6px;height:3.6px;border-radius:50%;border:0.35px solid #b8b8b8"></div>
<i style="left:810px;top:103.2px;width:2px;height:0.4px;background:#ccc"></i>
<div style="left:814.5px;top:99.0px;width:3.6px;height:3.6px;border-radius:50%;border:0.35px solid #b8b8b8"></div>
<i style="left:815.5px;top:103.2px;width:2px;height:0.4px;background:#ccc"></i>
<div style="left:803.5px;top:106.5px;width:3.6px;height:3.6px;border-radius:50%;border:0.35px solid #b8b8b8"></div>
<i style="left:804.5px;top:110.7px;width:2px;height:0.4px;background:#ccc"></i>
<div style="left:809.0px;top:106.5px;width:3.6px;height:3.6px;border-radius:50%;border:0.35px solid #b8b8b8"></div>
<i style="left:810px;top:110.7px;width:2px;height:0.4px;background:#ccc"></i>
<div style="left:814.5px;top:106.5px;width:3.6px;height:3.6px;border-radius:50%;border:0.35px solid #b8b8b8"></div>
<i style="left:815.5px;top:110.7px;width:2px;height:0.4px;background:#ccc"></i>
<div style="left:803.5px;top:114.0px;width:3.6px;height:3.6px;border-radius:50%;border:0.35px solid #b8b8b8"></div>
<i style="left:804.5px;top:118.2px;width:2px;height:0.4px;background:#ccc"></i>
<div style="left:809.0px;top:114.0px;width:3.6px;height:3.6px;border-radius:50%;border:0.35px solid #b8b8b8"></div>
<i style="left:810px;top:118.2px;width:2px;height:0.4px;background:#ccc"></i>
<div style="left:814.5px;top:114.0px;width:3.6px;height:3.6px;border-radius:50%;border:0.35px solid #b8b8b8"></div>
<i style="left:815.5px;top:118.2px;width:2px;height:0.4px;background:#ccc"></i>
<i style="left:803px;top:101.5px;width:16px;height:0.4px;background:#b0b0b0"></i>
<i style="left:803px;top:110.3px;width:16px;height:0.4px;background:#b0b0b0"></i>
<i style="left:805px;top:88.5px;width:0.6px;height:1.5px;background:#aaa"></i>
<i style="left:810.8px;top:88.5px;width:0.6px;height:1.5px;background:#aaa"></i>
<i style="left:816px;top:115px;width:0.8px;height:2px;background:#888"></i>
<i style="left:717.2px;top:169.3px;width:9px;height:1.3px;background:#555"></i>
<i style="left:726.9px;top:169.3px;width:10.7px;height:1.3px;background:#555"></i>
<i style="left:717.9px;top:175.5px;width:18.3px;height:5.2px;background:#dcdcdc;border-radius:0.5px"></i>
<i style="left:719.5px;top:177.3px;width:11.5px;height:1.2px;background:#777"></i>
<i style="left:718.6px;top:188.6px;width:20.4px;height:9.4px;background:#cfe4fa"></i>
<i style="left:719.4px;top:191.6px;width:3.4px;height:3.4px;background:#36aca0;border-radius:1px"></i>
<i style="left:724px;top:189.8px;width:13px;height:0.6px;background:#9ab4d0"></i>
<i style="left:724px;top:192.2px;width:13px;height:0.6px;background:#9ab4d0"></i>
<i style="left:724px;top:194.6px;width:13px;height:0.6px;background:#9ab4d0"></i>
<i style="left:718.6px;top:200.8px;width:26.7px;height:6.3px;background:#cfe4fa"></i>
<i style="left:719.4px;top:202.25px;width:3.4px;height:3.4px;background:#36aca0;border-radius:1px"></i>
<i style="left:724px;top:202px;width:19.3px;height:0.6px;background:#9ab4d0"></i>
<i style="left:724px;top:204.05px;width:19.3px;height:0.6px;background:#9ab4d0"></i>
<i style="left:718.6px;top:209.9px;width:24.6px;height:6.3px;background:#cfe4fa"></i>
<i style="left:719.4px;top:211.35px;width:3.4px;height:3.4px;background:#36aca0;border-radius:1px"></i>
<i style="left:724px;top:211.1px;width:17.2px;height:0.6px;background:#9ab4d0"></i>
<i style="left:724px;top:213.15px;width:17.2px;height:0.6px;background:#9ab4d0"></i>
<i style="left:759px;top:168.5px;width:18.1px;height:17.5px;background:#0f2622"></i>
<i style="left:759px;top:186px;width:18.1px;height:20.4px;background:#fdfdfd"></i>
<i style="left:761px;top:188.5px;width:14px;height:0.6px;background:#d8d8d8"></i>
<i style="left:761px;top:191.08px;width:14px;height:0.6px;background:#d8d8d8"></i>
<i style="left:761px;top:193.67px;width:14px;height:0.6px;background:#d8d8d8"></i>
<i style="left:761px;top:196.25px;width:14px;height:0.6px;background:#d8d8d8"></i>
<i style="left:761px;top:198.83px;width:14px;height:0.6px;background:#d8d8d8"></i>
<i style="left:761px;top:201.42px;width:14px;height:0.6px;background:#d8d8d8"></i>
<div style="left:766.3px;top:171.8px;width:3.4px;height:3.4px;border-radius:50%;background:#e0e8e4"></div>
<i style="left:764px;top:176.5px;width:8px;height:0.7px;background:#6a807a"></i>
<i style="left:836.9px;top:36.8px;width:19.6px;height:59.1px;background:#fff;border:0.5px solid #888"></i>
<i style="left:853px;top:37.3px;width:3px;height:2.9px;background:#111"></i>
<i style="left:841px;top:38.5px;width:4px;height:0.5px;background:#999"></i>
<i style="left:837.3px;top:41px;width:18.8px;height:0.4px;background:#aaa"></i>
<i style="left:838px;top:42.5px;width:7px;height:0.5px;background:#888"></i>
<i style="left:851px;top:42.5px;width:4px;height:0.7px;background:#aaa"></i>
<i style="left:837.3px;top:44px;width:18.8px;height:0.3px;background:#bbb"></i>
<svg style="position:absolute;left:837.5px;top:44.5px" width="18.5" height="21" viewBox="0 0 18.5 21"><path d="M0.5 12 L3 5 L6 9 L9 7 L12 10 L15 8 L18 11" stroke="#777" stroke-width="0.45" fill="none"/><path d="M0.5 14 L3 10 L6 12 L9 11 L12 13 L15 12 L18 14" stroke="#aaa" stroke-width="0.35" fill="none"/><line x1="0" y1="15.5" x2="18.5" y2="15.5" stroke="#999" stroke-width="0.4"/><path d="M1 20 Q5 16 9 18 T18 17" stroke="#888" stroke-width="0.45" fill="none"/><line x1="0" y1="6" x2="18.5" y2="6" stroke="#e4e4e4" stroke-width="0.3"/></svg>
<i style="left:837.3px;top:65.8px;width:18.8px;height:0.3px;background:#aaa"></i>
<i style="left:838px;top:67px;width:4px;height:0.5px;background:#999"></i>
<svg style="position:absolute;left:837.5px;top:68px" width="18.5" height="11" viewBox="0 0 18.5 11"><path d="M1 10 L1 6 M2.5 10 L2.5 2 M4 10 L4 7 M6 10 L6 4 M8 10 L8 8 M10 10 L10 6 M12 10 L12 7 M14 10 L14 5 M16 10 L16 3 M17.5 10 L17.5 6" stroke="#888" stroke-width="0.5"/><path d="M0.5 9 L4 7 L8 8 L12 6 L18 4" stroke="#aaa" stroke-width="0.35" fill="none"/></svg>
<i style="left:837.3px;top:79px;width:18.8px;height:0.3px;background:#aaa"></i>
<i style="left:838px;top:80.5px;width:18.1px;height:4.5px;background:#fff;border:0.35px solid #aaa"></i>
<i style="left:839px;top:81.8px;width:4px;height:0.4px;background:#aaa"></i>
<i style="left:837.3px;top:86.5px;width:18.8px;height:0.3px;background:#aaa"></i>
<i style="left:838px;top:88.5px;width:2.5px;height:0.5px;background:#999"></i>
<i style="left:838px;top:90.8px;width:2.5px;height:0.5px;background:#999"></i>
<i style="left:838px;top:93px;width:2.5px;height:0.5px;background:#999"></i>
<div style="left:839.0px;top:32.3px;font-size:8px;line-height:1;color:#444;white-space:nowrap;transform:scale(0.300);transform-origin:0 0;">Stats</div>
<div style="left:908.0px;top:32.3px;font-size:8px;line-height:1;color:#444;white-space:nowrap;transform:scale(0.300);transform-origin:0 0;">Lockflow/Dir</div>
<i style="left:905.4px;top:36.8px;width:19.1px;height:115.5px;background:#fff;border:0.5px solid #888"></i>
<i style="left:921px;top:37.3px;width:3px;height:2.9px;background:#111"></i>
<i style="left:909px;top:38.5px;width:6px;height:0.5px;background:#999"></i>
<i style="left:906px;top:41.3px;width:18px;height:0.3px;background:#aaa"></i>
<i style="left:906.5px;top:43px;width:17px;height:2.5px;background:#fff;border:0.35px solid #aaa"></i>
<i style="left:920px;top:43.3px;width:3px;height:1.9px;background:#ccc"></i>
<i style="left:906px;top:46.6px;width:18px;height:0.3px;background:#aaa"></i>
<svg style="position:absolute;left:907.0px;top:48.0px" width="16.0" height="20.5" viewBox="0 0 100 100" preserveAspectRatio="none"><rect x="0" y="0" width="100" height="100" fill="#fff" stroke="#a8a8a8" stroke-width="0.9" vector-effect="non-scaling-stroke"/><path d="M0 0L100 100M100 0L0 100" stroke="#b4b4b4" stroke-width="0.5" vector-effect="non-scaling-stroke" fill="none"/></svg>
<i style="left:907.2px;top:69.3px;width:1.3px;height:2.4px;background:#fff;border:0.3px solid #888"></i>
<i style="left:914px;top:69.5px;width:2.2px;height:2px;background:#fff;border:0.3px solid #aaa"></i>
<i style="left:921px;top:69.5px;width:2px;height:2px;background:#fff;border:0.3px solid #aaa"></i>
<i style="left:906px;top:72.4px;width:18px;height:0.2px;background:#aaa"></i>
<svg style="position:absolute;left:907.0px;top:73.0px" width="16.0" height="20.5" viewBox="0 0 100 100" preserveAspectRatio="none"><rect x="0" y="0" width="100" height="100" fill="#fff" stroke="#a8a8a8" stroke-width="0.9" vector-effect="non-scaling-stroke"/><path d="M0 0L100 100M100 0L0 100" stroke="#b4b4b4" stroke-width="0.5" vector-effect="non-scaling-stroke" fill="none"/></svg>
<i style="left:907.2px;top:94.3px;width:1.3px;height:2.4px;background:#fff;border:0.3px solid #888"></i>
<i style="left:914px;top:94.5px;width:2.2px;height:2px;background:#fff;border:0.3px solid #aaa"></i>
<i style="left:921px;top:94.5px;width:2px;height:2px;background:#fff;border:0.3px solid #aaa"></i>
<i style="left:906px;top:97.4px;width:18px;height:0.2px;background:#aaa"></i>
<svg style="position:absolute;left:907.0px;top:98.0px" width="16.0" height="20.5" viewBox="0 0 100 100" preserveAspectRatio="none"><rect x="0" y="0" width="100" height="100" fill="#fff" stroke="#a8a8a8" stroke-width="0.9" vector-effect="non-scaling-stroke"/><path d="M0 0L100 100M100 0L0 100" stroke="#b4b4b4" stroke-width="0.5" vector-effect="non-scaling-stroke" fill="none"/></svg>
<i style="left:907.2px;top:119.3px;width:1.3px;height:2.4px;background:#fff;border:0.3px solid #888"></i>
<i style="left:914px;top:119.5px;width:2.2px;height:2px;background:#fff;border:0.3px solid #aaa"></i>
<i style="left:921px;top:119.5px;width:2px;height:2px;background:#fff;border:0.3px solid #aaa"></i>
<i style="left:906px;top:122.4px;width:18px;height:0.2px;background:#aaa"></i>
<svg style="position:absolute;left:907.0px;top:123.0px" width="16.0" height="20.5" viewBox="0 0 100 100" preserveAspectRatio="none"><rect x="0" y="0" width="100" height="100" fill="#fff" stroke="#a8a8a8" stroke-width="0.9" vector-effect="non-scaling-stroke"/><path d="M0 0L100 100M100 0L0 100" stroke="#b4b4b4" stroke-width="0.5" vector-effect="non-scaling-stroke" fill="none"/></svg>
<i style="left:907.2px;top:144.3px;width:1.3px;height:2.4px;background:#fff;border:0.3px solid #888"></i>
<i style="left:914px;top:144.5px;width:2.2px;height:2px;background:#fff;border:0.3px solid #aaa"></i>
<i style="left:921px;top:144.5px;width:2px;height:2px;background:#fff;border:0.3px solid #aaa"></i>
<i style="left:906px;top:147.4px;width:18px;height:0.2px;background:#aaa"></i>
<i style="left:861px;top:37.8px;width:15.3px;height:0.45px;background:#999"></i>
<i style="left:861px;top:40.5px;width:34px;height:0.45px;background:#d0d0d0"></i>
<i style="left:861px;top:41.95px;width:40px;height:0.45px;background:#d0d0d0"></i>
<i style="left:861px;top:43.4px;width:34px;height:0.45px;background:#d0d0d0"></i>
<i style="left:861px;top:47.2px;width:18px;height:0.45px;background:#999"></i>
<i style="left:861px;top:48.65px;width:40px;height:0.45px;background:#d0d0d0"></i>
<i style="left:861px;top:57.2px;width:28.9px;height:0.45px;background:#d0d0d0"></i>
<i style="left:861px;top:68.2px;width:28.9px;height:0.45px;background:#d0d0d0"></i>
<i style="left:861px;top:81.3px;width:28.9px;height:0.45px;background:#d0d0d0"></i>
<i style="left:861px;top:88px;width:18px;height:0.45px;background:#999"></i>
<i style="left:861px;top:89.45px;width:40px;height:0.45px;background:#d0d0d0"></i>
<i style="left:861px;top:90.9px;width:34px;height:0.45px;background:#d0d0d0"></i>
<i style="left:861px;top:92.35px;width:40px;height:0.45px;background:#d0d0d0"></i>
<i style="left:929px;top:37px;width:19.8px;height:0.45px;background:#999"></i>
<i style="left:929px;top:38.45px;width:44px;height:0.45px;background:#d0d0d0"></i>
<i style="left:929px;top:39.9px;width:37.4px;height:0.45px;background:#d0d0d0"></i>
<i style="left:929px;top:41.35px;width:44px;height:0.45px;background:#d0d0d0"></i>
<i style="left:929px;top:42.8px;width:37.4px;height:0.45px;background:#d0d0d0"></i>
<i style="left:929px;top:44.25px;width:44px;height:0.45px;background:#d0d0d0"></i>
<i style="left:929px;top:46.5px;width:19.8px;height:0.45px;background:#999"></i>
<i style="left:929px;top:47.95px;width:44px;height:0.45px;background:#d0d0d0"></i>
<i style="left:929px;top:49.4px;width:37.4px;height:0.45px;background:#d0d0d0"></i>
<i style="left:929px;top:50.85px;width:44px;height:0.45px;background:#d0d0d0"></i>
<i style="left:929px;top:55px;width:19.8px;height:0.45px;background:#999"></i>
<i style="left:929px;top:56.45px;width:44px;height:0.45px;background:#d0d0d0"></i>
<i style="left:929px;top:57.9px;width:37.4px;height:0.45px;background:#d0d0d0"></i>
<i style="left:929px;top:59.35px;width:44px;height:0.45px;background:#d0d0d0"></i>
<i style="left:929px;top:60.8px;width:37.4px;height:0.45px;background:#d0d0d0"></i>
<i style="left:929px;top:62.25px;width:44px;height:0.45px;background:#d0d0d0"></i>
<i style="left:929px;top:63.7px;width:37.4px;height:0.45px;background:#d0d0d0"></i>
<i style="left:929px;top:75px;width:19.8px;height:0.45px;background:#999"></i>
<i style="left:929px;top:76.45px;width:44px;height:0.45px;background:#d0d0d0"></i>
<i style="left:929px;top:77.9px;width:37.4px;height:0.45px;background:#d0d0d0"></i>
<i style="left:929px;top:79.35px;width:44px;height:0.45px;background:#d0d0d0"></i>
<i style="left:929px;top:80.8px;width:37.4px;height:0.45px;background:#d0d0d0"></i>
<i style="left:929px;top:103.5px;width:19.8px;height:0.45px;background:#999"></i>
<i style="left:929px;top:104.95px;width:44px;height:0.45px;background:#d0d0d0"></i>
<i style="left:929px;top:106.4px;width:37.4px;height:0.45px;background:#d0d0d0"></i>
<i style="left:929px;top:107.85px;width:44px;height:0.45px;background:#d0d0d0"></i>
<i style="left:929px;top:129px;width:19.8px;height:0.45px;background:#999"></i>
<i style="left:929px;top:130.45px;width:44px;height:0.45px;background:#d0d0d0"></i>
<i style="left:929px;top:131.9px;width:37.4px;height:0.45px;background:#d0d0d0"></i>
<i style="left:929px;top:133.35px;width:44px;height:0.45px;background:#d0d0d0"></i>
<i style="left:929px;top:134.8px;width:37.4px;height:0.45px;background:#d0d0d0"></i>
<i style="left:837.3px;top:104.6px;width:19.1px;height:43.9px;background:#fff;border:0.3px solid #f0f0f4"></i>
<i style="left:838px;top:106.5px;width:2px;height:0.5px;background:#aaa"></i>
<i style="left:854px;top:106.5px;width:1.5px;height:0.5px;background:#aaa"></i>
<i style="left:843px;top:107.5px;width:7px;height:0.5px;background:#e8a8a8"></i>
<i style="left:839px;top:110.5px;width:4.5px;height:1.5px;background:#eef2fa"></i>
<i style="left:839.8px;top:111px;width:3px;height:0.5px;background:#8ab0d8"></i>
<i style="left:844.8px;top:110.5px;width:4.5px;height:1.5px;background:#eef2fa"></i>
<i style="left:845.6px;top:111px;width:3px;height:0.5px;background:#8ab0d8"></i>
<i style="left:850.6px;top:110.5px;width:4.5px;height:1.5px;background:#eef2fa"></i>
<i style="left:851.4px;top:111px;width:3px;height:0.5px;background:#8ab0d8"></i>
<svg style="position:absolute;left:840.3px;top:114.9px" width="12.4" height="12.4" viewBox="0 0 12.4 12.4"><circle cx="6.2" cy="6.2" r="5.5" fill="none" stroke="#e8d0f0" stroke-width="1.1"/><path d="M6.2 0.7 A5.5 5.5 0 1 1 0.9 7.6" fill="none" stroke="#5a4ab8" stroke-width="1.1"/><path d="M0.9 7.6 A5.5 5.5 0 0 1 6.2 0.7" fill="none" stroke="#e88ad0" stroke-width="1.1"/><rect x="4.2" y="5.3" width="4" height="1.8" fill="#777"/></svg>
<i style="left:838.5px;top:130.8px;width:7.5px;height:0.5px;background:#aaa"></i>
<svg style="position:absolute;left:838px;top:132.5px" width="17.5" height="8" viewBox="0 0 17.5 8"><path d="M0 7.5 L3 7 L5 6 L6.5 3 L7.5 6.5 L9 1 L10.5 6 L12.5 6.5 L14 4 L15.5 5.5 L17.5 2" stroke="#4a8ae0" stroke-width="0.55" fill="none"/><path d="M0 7.8 L17.5 7.8" stroke="#dde" stroke-width="0.3"/></svg>
<i style="left:839.5px;top:145.8px;width:1.3px;height:1px;background:#bbb"></i>
<i style="left:844.3px;top:145.8px;width:1.3px;height:1px;background:#bbb"></i>
<i style="left:849.1px;top:145.8px;width:1.3px;height:1px;background:#bbb"></i>
<i style="left:853.9px;top:145.8px;width:1.3px;height:1px;background:#bbb"></i>
<svg style="position:absolute;left:0;top:0" width="977" height="507" viewBox="301 56 977 507">
<g fill="none" stroke="#6a6a6a" stroke-width="0.55">
<path d="M649.8 80.8 C 670 76, 720 72, 745 71.5 C 780 71, 815 71, 835 75 C 850 80, 858 92, 866 104 C 872 114, 878 124, 886 129 C 892 131, 897 129, 901.5 127.8"/>
<path d="M861 135.5 C 875 134, 890 133, 901 132"/>
<path d="M650.3 134.8 C 650 150, 665 170, 682 182 C 695 191, 715 194, 730 190 C 736 188, 737 184, 725 182.6"/>
<path d="M706.7 181.4 C 709 187, 713 190, 718.4 191.2 C 745 198, 770 206, 787 210.8 C 805 215, 820 218, 835 218 C 850 217, 855 210, 855.7 195 C 856 185, 855 175, 854.5 170.3"/>
<path d="M758.9 259.3 C 762 252, 770 247, 790 240 C 810 234, 830 231, 860.6 231.6 C 880 233, 895 238, 903 247 C 907 251, 909 255, 910.8 258.6"/>
<path d="M887.6 217 L 899.8 208.3"/>
<path d="M885.7 149 C 893 150, 900 152.5, 908 152.5 C 914 152.5, 919 151, 921.5 146 C 923.5 141, 925 137, 927.4 135"/>
<path d="M750.8 357.7 C 757 362, 765 365, 772.9 365.7 C 790 366, 830 366, 850 362.5 C 870 359, 888 354, 902.5 352.5"/>
<path d="M776 357.7 C 780 361, 786 363, 792 363.5"/>
<path d="M1041.4 237.2 C 1048 243, 1054 252, 1060.3 256.8"/>
<path d="M1138.8 112.4 C 1136 113.5, 1134.4 116, 1134.3 119 L 1134.2 144 C 1134.3 150, 1136 155, 1138.8 157.3"/>
<path d="M944 157.3 C 955 157.8, 965 158.5, 975 159.5 C 990 161, 1002 163.5, 1012 165.5"/>
<path d="M950.3 380.2 C 960 384, 972 392, 980.5 395.6"/>
</g></svg>
</div>
<div id="tb">
  <!-- menu -->
  <div class="ic" style="left:26px;top:21px;width:16px;height:2px;background:#f1f3f4"></div>
  <div class="ic" style="left:26px;top:27px;width:16px;height:2px;background:#f1f3f4"></div>
  <div class="ic" style="left:26px;top:33px;width:16px;height:2px;background:#f1f3f4"></div>
  <div class="t" style="left:68px;top:19px;font-size:15px;letter-spacing:-0.33px">8. Projected Assets.pdf</div>
  <div class="ic" style="left:493px;top:18px;width:24px;height:20px;background:#191b1c"></div>
  <div class="t" style="left:501px;top:20px;font-size:13px">1</div>
  <div class="t" style="left:521px;top:20px;font-size:13px">/</div>
  <div class="t" style="left:535px;top:20px;font-size:13px">1</div>
  <div class="ic" style="left:566px;top:21px;width:1px;height:15px;background:#5f6368"></div>
  <div class="ic" style="left:583px;top:27px;width:12px;height:2px;background:#f1f3f4"></div>
  <div class="ic" style="left:611px;top:18px;width:46px;height:20px;background:#191b1c"></div>
  <div class="t" style="left:624px;top:20px;font-size:13px">4%</div>
  <div class="ic" style="left:673px;top:27px;width:12px;height:2px;background:#f1f3f4"></div>
  <div class="ic" style="left:678px;top:22px;width:2px;height:12px;background:#f1f3f4"></div>
  <div class="ic" style="left:701px;top:21px;width:1px;height:15px;background:#5f6368"></div>
  <svg class="ic" style="left:715px;top:12px" width="70" height="32" viewBox="715 12 70 32">
  <rect x="723.8" y="21.1" width="16.4" height="13.7" rx="1.6" fill="none" stroke="#f1f3f4" stroke-width="2"/>
  <path d="M732 23.3 L734.6 26 L729.4 26Z M732 32.8 L734.6 30.1 L729.4 30.1Z" fill="#f1f3f4"/>
  <path d="M764 24.6 L768.4 29 L764 33.4 L759.6 29Z" fill="none" stroke="#f1f3f4" stroke-width="1.9"/>
  <path d="M767.8 22.1 A 6.5 6.5 0 1 1 766.4 34.6" fill="none" stroke="#f1f3f4" stroke-width="1.9"/>
  <path d="M768.6 18.6 L769 25.6 L764.4 22.6Z" fill="#f1f3f4"/>
</svg>
  <svg class="ic" style="left:1155px;top:17.5px" width="20" height="20" viewBox="0 0 24 24"><path fill="#f1f3f4" d="M19 9h-4V3H9v6H5l7 7 7-7zM5 18v2h14v-2H5z"/></svg>
  <svg class="ic" style="left:1195.2px;top:17.9px" width="20" height="20" viewBox="0 0 24 24"><path fill="#f1f3f4" d="M19 8H5c-1.66 0-3 1.34-3 3v6h4v4h12v-4h4v-6c0-1.66-1.34-3-3-3zm-3 11H8v-5h8v5zm3-7c-.55 0-1-.45-1-1s.45-1 1-1 1 .45 1 1-.45 1-1 1zm-1-9H6v4h12V3z"/></svg>
  <svg class="ic" style="left:1235px;top:18px" width="20" height="20" viewBox="0 0 24 24"><path fill="#f1f3f4" d="M12 8c1.1 0 2-.9 2-2s-.9-2-2-2-2 .9-2 2 .9 2 2 2zm0 2c-1.1 0-2 .9-2 2s.9 2 2 2 2-.9 2-2-.9-2-2-2zm0 6c-1.1 0-2 .9-2 2s.9 2 2 2 2-.9 2-2-.9-2-2-2z"/></svg>
</div>
</body></html>
